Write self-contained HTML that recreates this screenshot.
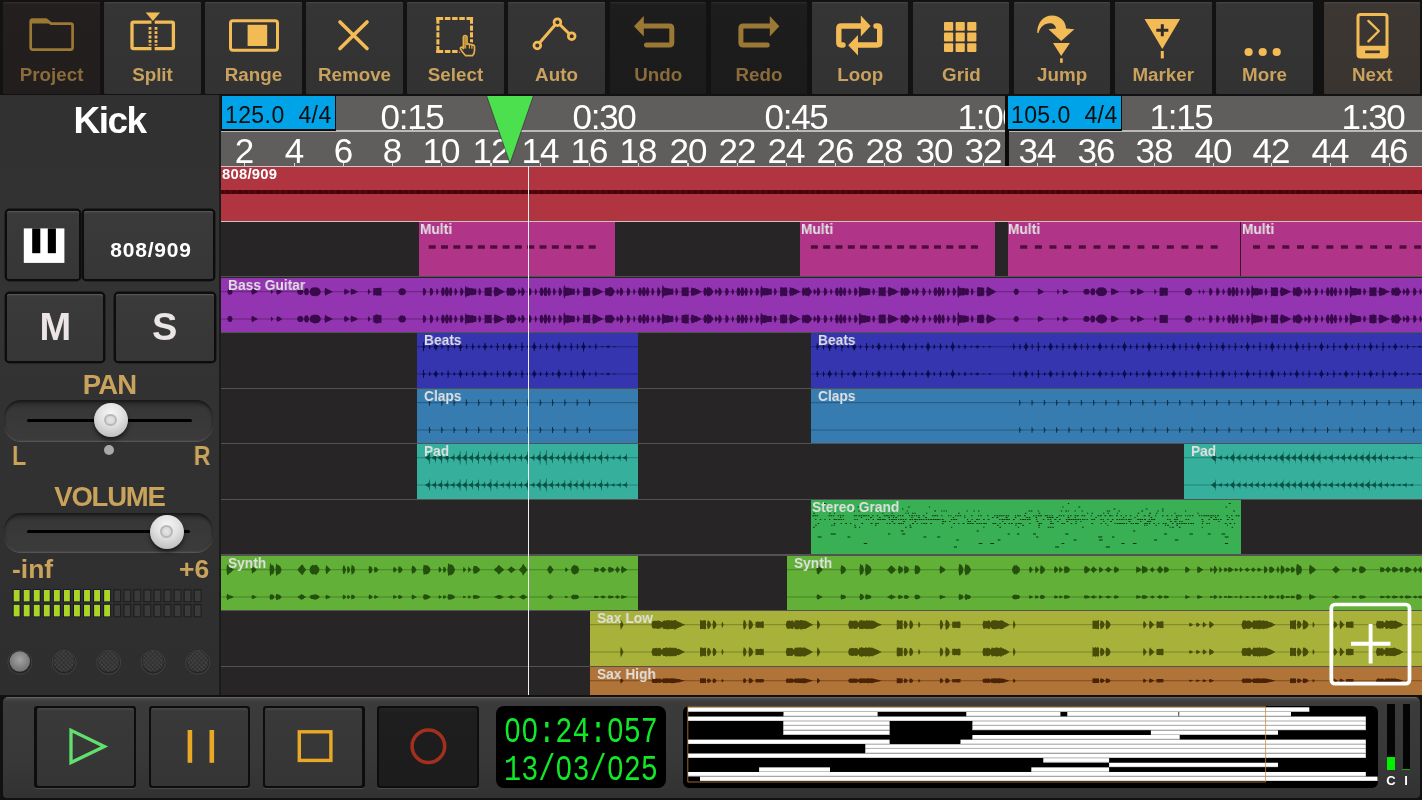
<!DOCTYPE html><html><head><meta charset="utf-8"><title>Audio Evolution</title><style>
*{box-sizing:border-box;margin:0;padding:0}
html,body{width:1422px;height:800px;overflow:hidden;background:#151414;font-family:"Liberation Sans",sans-serif}
#app{position:absolute;left:0;top:0;width:1422px;height:800px;overflow:hidden;background:#131212;}
.abs{position:absolute}
.tl,.bn,.gold,.clip b,.tb span,.txt{will-change:transform}
.tb{position:absolute;top:2px;height:92px;border-radius:1.5px;background:linear-gradient(#3b3a3a 0,#363535 3px,#333232 100%);box-shadow:inset 0 1px 0 #464545}
.tb.dark{background:linear-gradient(#262424 0,#1e1d1d 3px,#1c1b1b 100%);box-shadow:inset 0 1px 0 #2c2a2a}
.tb.proj{background:linear-gradient(#2a2726 0,#231f1e 3px,#211e1d 100%);box-shadow:inset 0 1px 0 #312d2c}
.tb.next{background:linear-gradient(#433d39 0,#3c3733 3px,#39342f 100%);box-shadow:inset 0 1px 0 #4c4642}
.tb span{position:absolute;left:0;right:0;top:60.7px;text-align:center;font-weight:bold;font-size:18.8px;line-height:24px;color:#c8a25e;letter-spacing:0}
.tb.dim span{color:#8a6b3b}
.tb svg{position:absolute;left:0;top:0}
#left{position:absolute;left:0;top:95px;width:219px;height:600px;background:linear-gradient(#323131,#343333 40%,#2f2e2e)}
#leftedge{position:absolute;left:219px;top:95px;width:2px;height:600px;background:#1c1b1b}
.btn{position:absolute;background:linear-gradient(#464545 0,#3b3a3a 3px,#373636 100%);border-radius:2.5px;box-shadow:0 0 0 2.4px #0e0d0d, 0 3px 0 0 #3d3c3c, inset 0 1px 0 #565555}
.gold{color:#c9a35c;font-weight:bold;position:absolute;white-space:nowrap}
.groove{position:absolute;border-radius:17px;background:linear-gradient(#2b2a2a 0,#383737 22%,#3c3b3b 100%);box-shadow:inset 0 2px 3px #191818, inset 0 -1px 1px #4a4949, 0 1px 0 #565555}
.knob{position:absolute;width:34px;height:34px;border-radius:50%;background:radial-gradient(circle at 50% 32%,#f6f6f6 0,#e2e2e2 40%,#c2c2c2 78%,#a2a2a2 100%);box-shadow:0 3px 4px rgba(0,0,0,.55)}
.knob i{position:absolute;left:10.6px;top:10.6px;width:12.8px;height:12.8px;border-radius:50%;border:2px solid #b9b9b9;background:radial-gradient(#e6e6e6,#d0d0d0)}
#ruler{position:absolute;left:221px;top:96px;width:1201px;height:70px;background:#605e5d;overflow:hidden}
.tl{position:absolute;color:#fff;font-size:35px;line-height:35px;letter-spacing:-1.3px;white-space:nowrap;transform:translateX(-50%)}
.bn{position:absolute;color:#fff;font-size:35px;line-height:35px;letter-spacing:-0.9px;white-space:nowrap;transform:translateX(-50%)}
.tempo{position:absolute;background:#00a1e6;border:2px solid #0b0b0b;color:#101010;font-size:25px;line-height:30px;white-space:pre;text-align:center}
#tracks{position:absolute;left:221px;top:166px;width:1201px;height:530px;background:#272526;overflow:hidden}
.sep{position:absolute;left:0;width:1201px;height:2px;background:#535252}
.clip{position:absolute;overflow:hidden}
.clip b{position:absolute;left:6.8px;top:-1px;font-size:14.8px;line-height:16px;letter-spacing:0;transform:scaleX(.93);transform-origin:0 0;color:#e0e0e0;font-weight:bold;white-space:nowrap;z-index:3}
.clip svg{position:absolute;left:0;top:0}
#bottom{position:absolute;left:0;top:695px;width:1422px;height:105px;background:linear-gradient(#191818 0,#2e2d2d 3px,#3a3939 8px,#363535 60%,#2c2b2b 100%)}
.tbtn{position:absolute;top:11px;height:80px;background:linear-gradient(#424141 0,#373636 4px,#333232 100%);border-radius:2px;box-shadow:0 0 0 2px #151414, inset 0 1px 0 #525151}
.tbtn.rec{background:linear-gradient(#242323 0,#1e1d1d 4px,#1c1b1b 100%);box-shadow:0 0 0 2px #151414, inset 0 1px 0 #2c2b2b}
#time{position:absolute;left:496px;top:11px;width:170px;height:82px;background:#000;border-radius:7px;color:#12e22a;font-size:34px;line-height:38px;text-align:center;padding-top:4px;white-space:nowrap}
</style></head><body><div id="app">
<div class="tb proj dim" style="left:2.6px;width:97.2px"><svg width="97.2" height="91" viewBox="0 2 97.2 91"><path d="M27.7 21.7 q0 -2 2 -2 h13.7 l4.7 3.9 h19.5 q2 0 2 2 v22 q0 2 -2 2 h-37.9 q-2 0 -2 -2 z" fill="none" stroke="#9c7835" stroke-width="2.7" stroke-linejoin="round"/><path d="M27.7 21.7 q0 -2 2 -2 h13.7 l4.7 3.9 h-20.4z" fill="#9c7835"/></svg><span>Project</span></div>
<div class="tb" style="left:103.5px;width:97px"><svg width="97" height="91" viewBox="0 2 97 91"><path d="M47.5 22.2 H29.6 q-1.6 0 -1.6 1.6 V47 q0 1.6 1.6 1.6 H47.5" fill="none" stroke="#f3bb55" stroke-width="3.3"/><path d="M50.7 22.2 H67.8 q1.6 0 1.6 1.6 V47 q0 1.6 -1.6 1.6 H50.7" fill="none" stroke="#f3bb55" stroke-width="3.3"/><path d="M41.7 12.6 h14.4 l-7.2 8.4z" fill="#f3bb55"/><path d="M46 27 v18.7 M52 27 v18.7" stroke="#f3bb55" stroke-width="2.8" stroke-dasharray="2.8 1.5"/></svg><span>Split</span></div>
<div class="tb" style="left:205px;width:97px"><svg width="97" height="91" viewBox="0 2 97 91"><rect x="25.5" y="20.7" width="47" height="29.5" rx="2.5" fill="none" stroke="#f3bb55" stroke-width="3"/><rect x="42.6" y="24.8" width="19.6" height="21.2" fill="#f3bb55"/></svg><span>Range</span></div>
<div class="tb" style="left:306px;width:97px"><svg width="97" height="91" viewBox="0 2 97 91"><path d="M34 22 L61 48.5 M61 22 L34 48.5" stroke="#f3bb55" stroke-width="3.6" stroke-linecap="round"/></svg><span>Remove</span></div>
<div class="tb" style="left:407px;width:97px"><svg width="97" height="91" viewBox="0 2 97 91"><path d="M29.3 18.5 H66.1 M29.3 51.4 H66.1" stroke="#f3bb55" stroke-width="3" stroke-dasharray="6.9 1.7 5.5 1.7 5.5 1.7 5.5 1.7 6.9 99"/><path d="M30.9 16.9 V53 M64.5 16.9 V53" stroke="#f3bb55" stroke-width="3" stroke-dasharray="6.9 1.6 5.3 1.6 5.3 1.6 5.3 1.6 6.9 99"/><path d="M56.4 47 V37.4 a1.8 1.8 0 0 1 3.6 0 V44.3 q1.5 -1 2.6 .3 q1.4 -.8 2.5 .5 q1.7 -.5 2.4 1.3 V50.4 q0 3.2 -2 5.2 H58.6 q-2.6 -2.2 -5 -6.4 q-.6 -1.6 .6 -2 q1.2 -.3 2.2 1.3z" fill="#343233" stroke="#343233" stroke-width="4.4" stroke-linejoin="round"/><path d="M56.4 47 V37.4 a1.8 1.8 0 0 1 3.6 0 V44.3 q1.5 -1 2.6 .3 q1.4 -.8 2.5 .5 q1.7 -.5 2.4 1.3 V50.4 q0 3.2 -2 5.2 H58.6 q-2.6 -2.2 -5 -6.4 q-.6 -1.6 .6 -2 q1.2 -.3 2.2 1.3z" fill="#343233" stroke="#e2ad4c" stroke-width="1.7" stroke-linejoin="round"/><path d="M57.2 48.5 V37.4 a1 1 0 0 1 2 0 V48.5z" fill="#c8983e"/><path d="M62.4 45 v3.6 M64.9 45.6 v3.2" stroke="#e2ad4c" stroke-width="1.2"/></svg><span>Select</span></div>
<div class="tb" style="left:508.3px;width:97px"><svg width="97" height="91" viewBox="0 2 97 91"><path d="M29.3 45.5 L49.4 22.2 L63.7 36.2" fill="none" stroke="#f3bb55" stroke-width="3"/><circle cx="29.3" cy="45.5" r="3.4" fill="#353434" stroke="#f3bb55" stroke-width="2.7"/><circle cx="49.4" cy="22.2" r="3.4" fill="#353434" stroke="#f3bb55" stroke-width="2.7"/><circle cx="63.7" cy="36.2" r="3.4" fill="#353434" stroke="#f3bb55" stroke-width="2.7"/></svg><span>Auto</span></div>
<div class="tb dark dim" style="left:609.7px;width:96.5px"><svg width="96.5" height="91" viewBox="0 2 96.5 91"><path d="M33 26 h26.5 q2.3 0 2.3 2.3 v14.4 q0 2.3 -2.3 2.3 h-23" fill="none" stroke="#9c7835" stroke-width="5" stroke-linecap="round"/><path d="M24 26.2 L33.8 16 V36.4z" fill="#9c7835"/></svg><span>Undo</span></div>
<div class="tb dark dim" style="left:711px;width:96px"><svg width="96" height="91" viewBox="0 2 96 91"><path d="M59 26 H32.2 q-2.3 0 -2.3 2.3 v14.4 q0 2.3 2.3 2.3 H56.2" fill="none" stroke="#9c7835" stroke-width="5" stroke-linecap="round"/><path d="M68.3 26.2 L58.8 16 V36.4z" fill="#9c7835"/></svg><span>Redo</span></div>
<div class="tb" style="left:811.6px;width:96.5px"><svg width="96.5" height="91" viewBox="0 2 96.5 91"><path d="M31 45 h-1.7 q-2.5 0 -2.5 -2.5 v-14 q0 -2.5 2.5 -2.5 h20" fill="none" stroke="#f3bb55" stroke-width="5.4" stroke-linecap="round"/><path d="M48.8 15.5 L58.6 26 L48.8 36.4z" fill="#f3bb55"/><path d="M64 26 h1.2 q2.5 0 2.5 2.5 v14 q0 2.5 -2.5 2.5 h-20" fill="none" stroke="#f3bb55" stroke-width="5.4" stroke-linecap="round"/><path d="M46 35 L36.2 45.3 L46 55.5z" fill="#f3bb55"/></svg><span>Loop</span></div>
<div class="tb" style="left:912.8px;width:96.7px"><svg width="96.7" height="91" viewBox="0 2 96.7 91"><rect x="31.0" y="21.9" width="9.2" height="8.8" rx="1" fill="#f3bb55"/><rect x="42.6" y="21.9" width="9.2" height="8.8" rx="1" fill="#f3bb55"/><rect x="54.2" y="21.9" width="9.2" height="8.8" rx="1" fill="#f3bb55"/><rect x="31.0" y="32.6" width="9.2" height="8.8" rx="1" fill="#f3bb55"/><rect x="42.6" y="32.6" width="9.2" height="8.8" rx="1" fill="#f3bb55"/><rect x="54.2" y="32.6" width="9.2" height="8.8" rx="1" fill="#f3bb55"/><rect x="31.0" y="43.3" width="9.2" height="8.8" rx="1" fill="#f3bb55"/><rect x="42.6" y="43.3" width="9.2" height="8.8" rx="1" fill="#f3bb55"/><rect x="54.2" y="43.3" width="9.2" height="8.8" rx="1" fill="#f3bb55"/></svg><span>Grid</span></div>
<div class="tb" style="left:1013.9px;width:96.3px"><svg width="96.3" height="91" viewBox="0 2 96.3 91"><path d="M23.2 32.8 C23.2 22.5 29.5 15.5 38 15.5 C46 15.5 51.6 21 52.1 28.4 L60.4 29.2 L47.2 41 L34.5 29.2 L42 28.4 C41.6 25.2 39.2 23.2 35.8 23.2 C30.2 23.2 26.2 27 24.4 33.2 Z" fill="#f3bb55"/><path d="M39 42.9 h16.9 l-8.7 13.1z" fill="#f3bb55"/><path d="M47.4 58.3 v4.5" stroke="#f3bb55" stroke-width="2.6"/></svg><span>Jump</span></div>
<div class="tb" style="left:1115px;width:96.5px"><svg width="96.5" height="91" viewBox="0 2 96.5 91"><path d="M29.5 18.9 h35.6 l-17.8 30z" fill="#f3bb55"/><path d="M47.3 24.3 v12 M41.3 30.3 h12" stroke="#2e2c2d" stroke-width="3"/><path d="M47.3 51 v7.4" stroke="#f3bb55" stroke-width="3"/></svg><span>Marker</span></div>
<div class="tb" style="left:1216px;width:97px"><svg width="97" height="91" viewBox="0 2 97 91"><circle cx="32.6" cy="52" r="4.1" fill="#f3bb55"/><circle cx="46.7" cy="52" r="4.1" fill="#f3bb55"/><circle cx="60.7" cy="52" r="4.1" fill="#f3bb55"/></svg><span>More</span></div>
<div class="tb next" style="left:1323.5px;width:96.5px"><svg width="96.5" height="91" viewBox="0 2 96.5 91"><rect x="34" y="14.5" width="29" height="42.5" rx="2.5" fill="none" stroke="#f3bb55" stroke-width="3"/><path d="M34 45.8 h29 v9 q0 2.2 -2.2 2.2 h-24.6 q-2.2 0 -2.2 -2.2z" fill="#f3bb55"/><rect x="41.2" y="50.5" width="14.6" height="2.7" fill="#3a3531"/><path d="M44.4 20.9 L54.8 31 L44.4 41.3" fill="none" stroke="#f3bb55" stroke-width="2.4" stroke-linecap="round" stroke-linejoin="round"/></svg><span>Next</span></div>
<div id="left"></div><div id="leftedge"></div>
<div class="abs txt" style="left:0;top:100.2px;width:219px;text-align:center;font-size:37px;line-height:42px;font-weight:bold;color:#fff;letter-spacing:-1.6px">Kick</div>
<div class="btn" style="left:6.5px;top:211px;width:72px;height:67.5px"></div>
<div class="btn" style="left:83.5px;top:211px;width:129.5px;height:67.5px"></div>
<svg class="abs" style="left:0;top:200px" width="100" height="90" viewBox="0 200 100 90"><rect x="23.8" y="228.4" width="40.6" height="34.5" fill="#fff"/><rect x="32.2" y="228.4" width="8.1" height="24.8" fill="#000"/><rect x="47.8" y="228.4" width="8.1" height="24.8" fill="#000"/></svg>
<div class="abs txt" style="left:83.5px;top:238px;width:134px;text-align:center;font-size:21px;line-height:24px;font-weight:bold;color:#fff;letter-spacing:0.8px">808/909</div>
<div class="btn" style="left:6.5px;top:294px;width:96.5px;height:67px"></div>
<div class="btn" style="left:116px;top:294px;width:97.5px;height:67px"></div>
<div class="abs txt" style="left:6.5px;top:304px;width:96.5px;text-align:center;font-size:38px;line-height:46px;font-weight:bold;color:#ebe5e5">M</div>
<div class="abs txt" style="left:116px;top:304px;width:97.5px;text-align:center;font-size:38px;line-height:46px;font-weight:bold;color:#ebe5e5">S</div>
<div class="gold" style="left:0;width:219px;text-align:center;top:369px;font-size:27.5px;line-height:32px;letter-spacing:-0.8px">PAN</div>
<div class="groove" style="left:4px;top:400px;width:209px;height:41px"></div>
<div class="abs" style="left:26.5px;top:418.5px;width:165px;height:3px;border-radius:2px;background:#000"></div>
<div class="knob" style="left:93.6px;top:403px"><i></i></div>
<div class="gold" style="left:11.5px;top:440.6px;font-size:27px;line-height:30px;transform:scaleX(.86);transform-origin:0 0">L</div>
<div class="gold" style="left:190.5px;top:440.6px;font-size:27px;line-height:30px;transform:scaleX(.86);transform-origin:100% 0">R</div>
<div class="abs" style="left:104.4px;top:445px;width:10px;height:10px;border-radius:50%;background:#a9a9a9"></div>
<div class="gold" style="left:0;width:219px;text-align:center;top:481px;font-size:27.5px;line-height:32px;letter-spacing:-1.2px">VOLUME</div>
<div class="groove" style="left:4.3px;top:513px;width:208.5px;height:39px"></div>
<div class="abs" style="left:27px;top:530.3px;width:163px;height:3px;border-radius:2px;background:#000"></div>
<div class="knob" style="left:149.8px;top:514.8px"><i></i></div>
<div class="gold" style="left:11.5px;top:554.2px;font-size:26.5px;line-height:30px">-inf</div>
<div class="gold" style="left:178.5px;top:554.2px;font-size:26.5px;line-height:30px">+6</div>
<svg class="abs" style="left:0;top:585px" width="219" height="40" viewBox="0 585 219 40"><rect x="12.70" y="589.2" width="7.9" height="13.0" fill="#1b1230"/><rect x="13.70" y="590.0" width="5.9" height="11.4" fill="#a8d526"/><rect x="22.75" y="589.2" width="7.9" height="13.0" fill="#1b1230"/><rect x="23.75" y="590.0" width="5.9" height="11.4" fill="#a8d526"/><rect x="32.80" y="589.2" width="7.9" height="13.0" fill="#1b1230"/><rect x="33.80" y="590.0" width="5.9" height="11.4" fill="#a8d526"/><rect x="42.85" y="589.2" width="7.9" height="13.0" fill="#1b1230"/><rect x="43.85" y="590.0" width="5.9" height="11.4" fill="#a8d526"/><rect x="52.90" y="589.2" width="7.9" height="13.0" fill="#1b1230"/><rect x="53.90" y="590.0" width="5.9" height="11.4" fill="#a8d526"/><rect x="62.95" y="589.2" width="7.9" height="13.0" fill="#1b1230"/><rect x="63.95" y="590.0" width="5.9" height="11.4" fill="#a8d526"/><rect x="73.00" y="589.2" width="7.9" height="13.0" fill="#1b1230"/><rect x="74.00" y="590.0" width="5.9" height="11.4" fill="#a8d526"/><rect x="83.05" y="589.2" width="7.9" height="13.0" fill="#1b1230"/><rect x="84.05" y="590.0" width="5.9" height="11.4" fill="#a8d526"/><rect x="93.10" y="589.2" width="7.9" height="13.0" fill="#1b1230"/><rect x="94.10" y="590.0" width="5.9" height="11.4" fill="#a8d526"/><rect x="103.15" y="589.2" width="7.9" height="13.0" fill="#1b1230"/><rect x="104.15" y="590.0" width="5.9" height="11.4" fill="#a8d526"/><rect x="113.20" y="589.2" width="7.9" height="13.0" fill="#1f1e1e"/><rect x="114.40" y="590.4" width="5.7" height="10.8" fill="#3b3a3a"/><rect x="123.25" y="589.2" width="7.9" height="13.0" fill="#1f1e1e"/><rect x="124.45" y="590.4" width="5.7" height="10.8" fill="#3b3a3a"/><rect x="133.30" y="589.2" width="7.9" height="13.0" fill="#1f1e1e"/><rect x="134.50" y="590.4" width="5.7" height="10.8" fill="#3b3a3a"/><rect x="143.35" y="589.2" width="7.9" height="13.0" fill="#1f1e1e"/><rect x="144.55" y="590.4" width="5.7" height="10.8" fill="#3b3a3a"/><rect x="153.40" y="589.2" width="7.9" height="13.0" fill="#1f1e1e"/><rect x="154.60" y="590.4" width="5.7" height="10.8" fill="#3b3a3a"/><rect x="163.45" y="589.2" width="7.9" height="13.0" fill="#1f1e1e"/><rect x="164.65" y="590.4" width="5.7" height="10.8" fill="#3b3a3a"/><rect x="173.50" y="589.2" width="7.9" height="13.0" fill="#1f1e1e"/><rect x="174.70" y="590.4" width="5.7" height="10.8" fill="#3b3a3a"/><rect x="183.55" y="589.2" width="7.9" height="13.0" fill="#1f1e1e"/><rect x="184.75" y="590.4" width="5.7" height="10.8" fill="#3b3a3a"/><rect x="193.60" y="589.2" width="7.9" height="13.0" fill="#1f1e1e"/><rect x="194.80" y="590.4" width="5.7" height="10.8" fill="#3b3a3a"/><rect x="12.70" y="604" width="7.9" height="13.2" fill="#1b1230"/><rect x="13.70" y="604.8" width="5.9" height="11.6" fill="#a8d526"/><rect x="22.75" y="604" width="7.9" height="13.2" fill="#1b1230"/><rect x="23.75" y="604.8" width="5.9" height="11.6" fill="#a8d526"/><rect x="32.80" y="604" width="7.9" height="13.2" fill="#1b1230"/><rect x="33.80" y="604.8" width="5.9" height="11.6" fill="#a8d526"/><rect x="42.85" y="604" width="7.9" height="13.2" fill="#1b1230"/><rect x="43.85" y="604.8" width="5.9" height="11.6" fill="#a8d526"/><rect x="52.90" y="604" width="7.9" height="13.2" fill="#1b1230"/><rect x="53.90" y="604.8" width="5.9" height="11.6" fill="#a8d526"/><rect x="62.95" y="604" width="7.9" height="13.2" fill="#1b1230"/><rect x="63.95" y="604.8" width="5.9" height="11.6" fill="#a8d526"/><rect x="73.00" y="604" width="7.9" height="13.2" fill="#1b1230"/><rect x="74.00" y="604.8" width="5.9" height="11.6" fill="#a8d526"/><rect x="83.05" y="604" width="7.9" height="13.2" fill="#1b1230"/><rect x="84.05" y="604.8" width="5.9" height="11.6" fill="#a8d526"/><rect x="93.10" y="604" width="7.9" height="13.2" fill="#1b1230"/><rect x="94.10" y="604.8" width="5.9" height="11.6" fill="#a8d526"/><rect x="103.15" y="604" width="7.9" height="13.2" fill="#1b1230"/><rect x="104.15" y="604.8" width="5.9" height="11.6" fill="#a8d526"/><rect x="113.20" y="604" width="7.9" height="13.2" fill="#1f1e1e"/><rect x="114.40" y="605.2" width="5.7" height="11.0" fill="#3b3a3a"/><rect x="123.25" y="604" width="7.9" height="13.2" fill="#1f1e1e"/><rect x="124.45" y="605.2" width="5.7" height="11.0" fill="#3b3a3a"/><rect x="133.30" y="604" width="7.9" height="13.2" fill="#1f1e1e"/><rect x="134.50" y="605.2" width="5.7" height="11.0" fill="#3b3a3a"/><rect x="143.35" y="604" width="7.9" height="13.2" fill="#1f1e1e"/><rect x="144.55" y="605.2" width="5.7" height="11.0" fill="#3b3a3a"/><rect x="153.40" y="604" width="7.9" height="13.2" fill="#1f1e1e"/><rect x="154.60" y="605.2" width="5.7" height="11.0" fill="#3b3a3a"/><rect x="163.45" y="604" width="7.9" height="13.2" fill="#1f1e1e"/><rect x="164.65" y="605.2" width="5.7" height="11.0" fill="#3b3a3a"/><rect x="173.50" y="604" width="7.9" height="13.2" fill="#1f1e1e"/><rect x="174.70" y="605.2" width="5.7" height="11.0" fill="#3b3a3a"/><rect x="183.55" y="604" width="7.9" height="13.2" fill="#1f1e1e"/><rect x="184.75" y="605.2" width="5.7" height="11.0" fill="#3b3a3a"/><rect x="193.60" y="604" width="7.9" height="13.2" fill="#1f1e1e"/><rect x="194.80" y="605.2" width="5.7" height="11.0" fill="#3b3a3a"/></svg>
<svg class="abs" style="left:0;top:645px" width="219" height="34" viewBox="0 645 219 34"><defs><pattern id="mesh" width="3" height="3" patternUnits="userSpaceOnUse" patternTransform="rotate(45)"><rect width="3" height="3" fill="#434242"/><path d="M0 0h3M0 0v3" stroke="#2b2a2a" stroke-width="1.3"/></pattern><radialGradient id="lg" cx="50%" cy="40%" r="60%"><stop offset="0" stop-color="#a4a4a4"/><stop offset="1" stop-color="#6f6f6f"/></radialGradient></defs><circle cx="19.8" cy="661.5" r="12" fill="#262525"/><circle cx="19.8" cy="662.3" r="12" fill="none" stroke="#444343" stroke-width="1"/><circle cx="19.8" cy="661.5" r="10.2" fill="url(#lg)"/><circle cx="64.1" cy="661.5" r="12" fill="#262525"/><circle cx="64.1" cy="662.3" r="12" fill="none" stroke="#444343" stroke-width="1"/><circle cx="64.1" cy="661.5" r="10.6" fill="url(#mesh)"/><circle cx="108.7" cy="661.5" r="12" fill="#262525"/><circle cx="108.7" cy="662.3" r="12" fill="none" stroke="#444343" stroke-width="1"/><circle cx="108.7" cy="661.5" r="10.6" fill="url(#mesh)"/><circle cx="153.2" cy="661.5" r="12" fill="#262525"/><circle cx="153.2" cy="662.3" r="12" fill="none" stroke="#444343" stroke-width="1"/><circle cx="153.2" cy="661.5" r="10.6" fill="url(#mesh)"/><circle cx="197.8" cy="661.5" r="12" fill="#262525"/><circle cx="197.8" cy="662.3" r="12" fill="none" stroke="#444343" stroke-width="1"/><circle cx="197.8" cy="661.5" r="10.6" fill="url(#mesh)"/></svg>
<div id="ruler"><div class="abs" style="left:0;top:34.4px;width:1201px;height:1.7px;background:#bcbab9"></div><div class="abs" style="left:0;top:69.6px;width:1201px;height:1px;background:#cfcdcc"></div><div class="tl" style="left:190.5px;top:2.5px">0:15</div><div class="abs" style="left:191.0px;top:32.5px;width:1.2px;height:2.5px;background:#c9c7c6"></div><div class="tl" style="left:382.9px;top:2.5px">0:30</div><div class="abs" style="left:383.4px;top:32.5px;width:1.2px;height:2.5px;background:#c9c7c6"></div><div class="tl" style="left:575.2px;top:2.5px">0:45</div><div class="abs" style="left:575.7px;top:32.5px;width:1.2px;height:2.5px;background:#c9c7c6"></div><div class="tl" style="left:767.6px;top:2.5px">1:00</div><div class="abs" style="left:768.1px;top:32.5px;width:1.2px;height:2.5px;background:#c9c7c6"></div><div class="tl" style="left:959.9px;top:2.5px">1:15</div><div class="abs" style="left:960.4px;top:32.5px;width:1.2px;height:2.5px;background:#c9c7c6"></div><div class="tl" style="left:1152.3px;top:2.5px">1:30</div><div class="abs" style="left:1152.8px;top:32.5px;width:1.2px;height:2.5px;background:#c9c7c6"></div><div class="bn" style="left:23.3px;top:37.3px">2</div><div class="abs" style="left:23.2px;top:67px;width:1.2px;height:3px;background:#d8d6d5"></div><div class="bn" style="left:72.6px;top:37.3px">4</div><div class="abs" style="left:72.5px;top:67px;width:1.2px;height:3px;background:#d8d6d5"></div><div class="bn" style="left:121.8px;top:37.3px">6</div><div class="abs" style="left:121.7px;top:67px;width:1.2px;height:3px;background:#d8d6d5"></div><div class="bn" style="left:171.0px;top:37.3px">8</div><div class="abs" style="left:170.9px;top:67px;width:1.2px;height:3px;background:#d8d6d5"></div><div class="bn" style="left:220.3px;top:37.3px">10</div><div class="abs" style="left:220.2px;top:67px;width:1.2px;height:3px;background:#d8d6d5"></div><div class="bn" style="left:269.5px;top:37.3px">12</div><div class="abs" style="left:269.4px;top:67px;width:1.2px;height:3px;background:#d8d6d5"></div><div class="bn" style="left:318.8px;top:37.3px">14</div><div class="abs" style="left:318.7px;top:67px;width:1.2px;height:3px;background:#d8d6d5"></div><div class="bn" style="left:368.0px;top:37.3px">16</div><div class="abs" style="left:367.9px;top:67px;width:1.2px;height:3px;background:#d8d6d5"></div><div class="bn" style="left:417.2px;top:37.3px">18</div><div class="abs" style="left:417.1px;top:67px;width:1.2px;height:3px;background:#d8d6d5"></div><div class="bn" style="left:466.5px;top:37.3px">20</div><div class="abs" style="left:466.4px;top:67px;width:1.2px;height:3px;background:#d8d6d5"></div><div class="bn" style="left:515.7px;top:37.3px">22</div><div class="abs" style="left:515.6px;top:67px;width:1.2px;height:3px;background:#d8d6d5"></div><div class="bn" style="left:565.0px;top:37.3px">24</div><div class="abs" style="left:564.9px;top:67px;width:1.2px;height:3px;background:#d8d6d5"></div><div class="bn" style="left:614.2px;top:37.3px">26</div><div class="abs" style="left:614.1px;top:67px;width:1.2px;height:3px;background:#d8d6d5"></div><div class="bn" style="left:663.4px;top:37.3px">28</div><div class="abs" style="left:663.3px;top:67px;width:1.2px;height:3px;background:#d8d6d5"></div><div class="bn" style="left:712.7px;top:37.3px">30</div><div class="abs" style="left:712.6px;top:67px;width:1.2px;height:3px;background:#d8d6d5"></div><div class="bn" style="left:761.9px;top:37.3px">32</div><div class="abs" style="left:761.8px;top:67px;width:1.2px;height:3px;background:#d8d6d5"></div><div class="bn" style="left:815.8px;top:37.3px">34</div><div class="abs" style="left:815.7px;top:67px;width:1.2px;height:3px;background:#d8d6d5"></div><div class="bn" style="left:874.5px;top:37.3px">36</div><div class="abs" style="left:874.4px;top:67px;width:1.2px;height:3px;background:#d8d6d5"></div><div class="bn" style="left:933.1px;top:37.3px">38</div><div class="abs" style="left:933.0px;top:67px;width:1.2px;height:3px;background:#d8d6d5"></div><div class="bn" style="left:991.7px;top:37.3px">40</div><div class="abs" style="left:991.6px;top:67px;width:1.2px;height:3px;background:#d8d6d5"></div><div class="bn" style="left:1050.3px;top:37.3px">42</div><div class="abs" style="left:1050.2px;top:67px;width:1.2px;height:3px;background:#d8d6d5"></div><div class="bn" style="left:1108.9px;top:37.3px">44</div><div class="abs" style="left:1108.8px;top:67px;width:1.2px;height:3px;background:#d8d6d5"></div><div class="bn" style="left:1167.6px;top:37.3px">46</div><div class="abs" style="left:1167.5px;top:67px;width:1.2px;height:3px;background:#d8d6d5"></div><div class="abs" style="left:-1px;top:-1px;width:116px;height:36px;background:#0a0a0a"></div><div class="abs txt" style="left:1.2px;top:0.4px;width:112.6px;height:33.4px;background:#00a2e8;color:#0d0d0d;font-size:23px;line-height:39.8px;letter-spacing:0.45px;text-align:center;white-space:pre">125.0  4/4</div><div class="abs" style="left:784px;top:-1px;width:3.6px;height:71px;background:#0a0a0a"></div><div class="abs" style="left:786px;top:-1px;width:115px;height:36px;background:#0a0a0a"></div><div class="abs txt" style="left:787.4px;top:0.4px;width:112.6px;height:33.4px;background:#00a2e8;color:#0d0d0d;font-size:23px;line-height:39.8px;letter-spacing:0.45px;text-align:center;white-space:pre">105.0  4/4</div><svg class="abs" style="left:260px;top:0" width="60" height="70" viewBox="481 96 60 70"><path d="M486.5 95.5 H533.5 L510 163.5z" fill="#4ce04e" stroke="#3a1a3a" stroke-width="0.6"/></svg></div>
<div id="tracks"><div class="sep" style="top:54.8px;height:1.2px;background:#c6c4c4"></div><div class="sep" style="top:110.3px;height:1.2px"></div><div class="sep" style="top:166.0px;height:1.2px"></div><div class="sep" style="top:221.6px;height:1.2px"></div><div class="sep" style="top:277.2px;height:1.2px"></div><div class="sep" style="top:332.8px;height:1.2px"></div><div class="sep" style="top:388.4px;height:1.2px"></div><div class="sep" style="top:444.0px;height:1.2px"></div><div class="sep" style="top:499.6px;height:1.2px"></div><div class="abs" style="left:0;top:0;width:1201px;height:1px;background:#c9c7c7"></div><div class="clip" style="left:0;top:1px;width:1201px;height:53.5px;background:#b03541"><div class="abs" style="left:0;top:23.4px;width:1201px;height:3.7px;background:#4b050a"></div><svg class="abs" style="left:0;top:23.4px" width="1201" height="3.7"><path d="M3.1 1.85H1201" stroke="#7d1c25" stroke-opacity="0.4" stroke-width="3.7" stroke-dasharray="1 5.155"/></svg><b style="left:0.8px;top:-1.2px;letter-spacing:0.25px;transform:none;color:#fff">808/909</b></div><div class="clip" style="left:198.3px;top:55.9px;width:195.3px;height:54.5px;background:#b03588"><svg width="195.3" height="54"><path d="M9.7 23.2h7v3.6h-7zM22.0 23.2h7v3.6h-7zM34.3 23.2h7v3.6h-7zM46.6 23.2h7v3.6h-7zM58.9 23.2h7v3.6h-7zM71.2 23.2h7v3.6h-7zM83.6 23.2h7v3.6h-7zM95.9 23.2h7v3.6h-7zM108.2 23.2h7v3.6h-7zM120.5 23.2h7v3.6h-7zM132.8 23.2h7v3.6h-7zM145.1 23.2h7v3.6h-7zM157.4 23.2h7v3.6h-7zM169.7 23.2h7v3.6h-7z" fill="#500c3c"/></svg><b style="left:0.6px">Multi</b></div><div class="clip" style="left:579.4px;top:55.9px;width:194.8px;height:54.5px;background:#b03588"><svg width="194.8" height="54"><path d="M10.9 23.2h7v3.6h-7zM23.2 23.2h7v3.6h-7zM35.5 23.2h7v3.6h-7zM47.8 23.2h7v3.6h-7zM60.1 23.2h7v3.6h-7zM72.4 23.2h7v3.6h-7zM84.8 23.2h7v3.6h-7zM97.1 23.2h7v3.6h-7zM109.4 23.2h7v3.6h-7zM121.7 23.2h7v3.6h-7zM134.0 23.2h7v3.6h-7zM146.3 23.2h7v3.6h-7zM158.6 23.2h7v3.6h-7zM170.9 23.2h7v3.6h-7z" fill="#500c3c"/></svg><b style="left:0.6px">Multi</b></div><div class="clip" style="left:786.8px;top:55.9px;width:232.2px;height:54.5px;background:#b03588"><svg width="232.2" height="54"><path d="M12.2 23.2h7v3.6h-7zM26.9 23.2h7v3.6h-7zM41.5 23.2h7v3.6h-7zM56.2 23.2h7v3.6h-7zM70.8 23.2h7v3.6h-7zM85.5 23.2h7v3.6h-7zM100.1 23.2h7v3.6h-7zM114.8 23.2h7v3.6h-7zM129.4 23.2h7v3.6h-7zM144.1 23.2h7v3.6h-7zM158.8 23.2h7v3.6h-7zM173.4 23.2h7v3.6h-7zM188.1 23.2h7v3.6h-7zM202.7 23.2h7v3.6h-7z" fill="#500c3c"/></svg><b style="left:0.6px">Multi</b></div><div class="clip" style="left:1020.0px;top:55.9px;width:182.0px;height:54.5px;background:#b03588"><svg width="182.0" height="54"><path d="M12.0 23.2h7v3.6h-7zM26.7 23.2h7v3.6h-7zM41.3 23.2h7v3.6h-7zM56.0 23.2h7v3.6h-7zM70.6 23.2h7v3.6h-7zM85.3 23.2h7v3.6h-7zM99.9 23.2h7v3.6h-7zM114.6 23.2h7v3.6h-7zM129.2 23.2h7v3.6h-7zM143.9 23.2h7v3.6h-7zM158.5 23.2h7v3.6h-7zM173.2 23.2h7v3.6h-7z" fill="#500c3c"/></svg><b style="left:0.6px">Multi</b></div><div class="abs" style="left:1019px;top:55.9px;width:1.2px;height:54px;background:#3a1030"></div><div class="clip" style="left:0.0px;top:111.5px;width:1202.0px;height:54.5px;background:#9335b0"><svg width="1202.0" height="54.5"><path d="M0 13.7H1202.0M0 41.0H1202.0" stroke="#380a4c" stroke-width="1" stroke-opacity="0.45"/><path d="M6.3 13.7L6.3 13.4L7.0 11.7L7.6 10.9L8.3 10.8L9.0 10.8L9.6 10.9L10.3 10.9L10.9 11.7L11.6 13.4L11.6 14.0L10.9 15.7L10.3 16.5L9.6 16.6L9.0 16.7L8.3 16.6L7.6 16.5L7.0 15.8L6.3 14.0ZM30.3 13.7L30.3 13.4L30.9 10.8L31.5 10.7L32.2 10.9L32.8 11.5L33.4 11.8L34.0 12.1L34.6 12.3L35.3 12.7L35.9 13.2L36.5 13.4L36.5 14.0L35.9 14.2L35.3 14.7L34.6 15.1L34.0 15.3L33.4 15.6L32.8 16.0L32.2 16.5L31.5 16.7L30.9 16.6L30.3 14.0ZM49.8 13.7L49.8 13.4L50.4 11.3L50.9 12.0L51.5 12.8L52.0 13.4L52.0 14.0L51.5 14.6L50.9 15.4L50.4 16.1L49.8 14.0ZM55.3 13.7L55.3 13.4L56.0 10.9L56.6 10.7L57.3 11.5L57.9 11.4L58.6 12.0L59.2 12.4L59.9 12.7L60.5 13.2L61.2 13.4L61.2 14.0L60.5 14.3L59.9 14.7L59.2 15.0L58.6 15.4L57.9 16.1L57.3 15.9L56.6 16.7L56.0 16.6L55.3 14.0ZM76.0 13.7L76.0 13.4L76.7 11.9L77.3 11.1L78.0 10.9L78.6 10.9L79.2 10.6L79.9 10.7L80.5 10.8L81.2 11.2L81.8 11.8L82.5 13.4L82.5 14.0L81.8 15.6L81.2 16.3L80.5 16.7L79.9 16.8L79.2 16.9L78.6 16.5L78.0 16.6L77.3 16.4L76.7 15.5L76.0 14.0ZM83.0 13.7L83.0 13.4L83.6 11.2L84.2 10.6L84.9 10.3L85.5 10.2L86.1 10.3L86.8 10.5L87.4 11.5L88.0 13.4L88.0 14.0L87.4 16.0L86.8 17.0L86.1 17.1L85.5 17.3L84.9 17.1L84.2 16.9L83.6 16.3L83.0 14.0ZM88.5 13.7L88.5 13.4L89.1 11.9L89.8 10.8L90.4 10.1L91.0 9.9L91.6 9.4L92.3 9.2L92.9 9.5L93.5 9.6L94.2 9.4L94.8 9.0L95.4 9.6L96.0 9.2L96.7 10.0L97.3 10.0L97.9 10.4L98.5 10.7L99.2 11.9L99.8 13.4L99.8 14.0L99.2 15.6L98.5 16.7L97.9 17.1L97.3 17.4L96.7 17.5L96.0 18.2L95.4 17.9L94.8 18.4L94.2 18.0L93.5 17.8L92.9 18.0L92.3 18.3L91.6 18.0L91.0 17.5L90.4 17.4L89.8 16.7L89.1 15.6L88.5 14.0ZM103.5 13.7L103.5 13.4L104.1 9.6L104.7 10.1L105.3 10.2L106.0 11.1L106.6 11.1L107.2 11.4L107.8 11.8L108.4 11.9L109.0 12.3L109.7 12.4L110.3 12.9L110.9 13.2L111.5 13.4L111.5 14.0L110.9 14.2L110.3 14.6L109.7 15.0L109.0 15.1L108.4 15.6L107.8 15.7L107.2 16.1L106.6 16.4L106.0 16.4L105.3 17.3L104.7 17.3L104.1 17.8L103.5 14.0ZM123.0 13.7L123.0 13.4L123.6 10.4L124.2 10.9L124.8 11.3L125.4 11.8L126.1 11.6L126.7 12.4L127.3 12.7L127.9 13.1L128.5 13.4L128.5 14.0L127.9 14.3L127.3 14.7L126.7 15.0L126.1 15.8L125.4 15.7L124.8 16.1L124.2 16.5L123.6 17.1L123.0 14.0ZM129.5 13.7L129.5 13.4L130.1 10.4L130.7 10.8L131.3 11.0L131.9 11.5L132.5 11.3L133.2 11.4L133.8 11.8L134.4 12.4L135.0 12.5L135.6 12.9L136.2 13.2L136.8 13.4L136.8 14.0L136.2 14.3L135.6 14.5L135.0 15.0L134.4 15.1L133.8 15.7L133.2 16.1L132.5 16.1L131.9 16.0L131.3 16.5L130.7 16.6L130.1 17.0L129.5 14.0ZM146.8 13.7L146.8 13.4L147.4 10.5L148.1 11.8L148.7 12.5L149.3 13.4L149.3 14.0L148.7 14.9L148.1 15.6L147.4 16.9L146.8 14.0ZM152.3 13.7L152.3 9.7L152.9 9.8L153.6 10.3L154.2 10.1L154.8 10.4L155.5 9.7L156.1 10.1L156.7 10.1L157.3 9.8L158.0 9.7L158.6 10.0L159.2 10.1L159.9 9.8L160.5 9.6L160.5 17.9L159.9 17.6L159.2 17.4L158.6 17.4L158.0 17.8L157.3 17.6L156.7 17.4L156.1 17.4L155.5 17.7L154.8 17.0L154.2 17.3L153.6 17.2L152.9 17.6L152.3 17.8ZM177.3 13.7L177.3 13.4L177.9 11.9L178.6 11.2L179.2 10.6L179.9 10.5L180.5 10.3L181.2 10.4L181.8 10.0L182.4 10.4L183.1 10.8L183.7 10.9L184.4 11.8L185.0 13.4L185.0 14.0L184.4 15.7L183.7 16.6L183.1 16.6L182.4 17.1L181.8 17.4L181.2 17.1L180.5 17.2L179.9 17.0L179.2 16.9L178.6 16.3L177.9 15.6L177.3 14.0ZM201.7 13.7L201.7 13.4L202.3 9.7L202.9 9.9L203.5 10.0L204.1 10.9L204.7 11.7L205.3 13.4L205.3 14.0L204.7 15.8L204.1 16.6L203.5 17.5L202.9 17.6L202.3 17.8L201.7 14.0ZM208.7 13.7L208.7 13.4L209.3 9.7L209.9 9.9L210.5 10.1L211.1 10.8L211.7 11.5L212.3 13.4L212.3 14.0L211.7 15.9L211.1 16.7L210.5 17.4L209.9 17.6L209.3 17.7L208.7 14.0ZM215.1 13.7L215.1 13.4L215.7 10.3L216.3 10.9L216.9 11.6L217.5 13.4L217.5 14.0L216.9 15.8L216.3 16.6L215.7 17.2L215.1 14.0ZM220.0 13.7L220.0 13.4L220.7 10.6L221.3 9.4L221.9 9.6L222.6 9.8L223.2 10.3L223.9 13.4L223.9 14.0L223.2 17.2L222.6 17.6L221.9 17.9L221.3 18.1L220.7 16.9L220.0 14.0ZM223.9 13.7L223.9 13.4L224.6 10.1L225.2 9.2L225.9 8.9L226.6 9.6L227.2 10.0L227.9 13.4L227.9 14.0L227.2 17.4L226.6 17.8L225.9 18.5L225.2 18.2L224.6 17.3L223.9 14.0ZM227.9 13.7L227.9 13.4L228.6 10.2L229.3 9.8L229.9 9.2L230.6 10.1L231.3 13.4L231.3 14.0L230.6 17.3L229.9 18.3L229.3 17.7L228.6 17.2L227.9 14.0ZM233.3 13.7L233.3 13.4L233.9 10.2L234.5 10.1L235.1 10.9L235.7 11.6L236.3 13.4L236.3 14.0L235.7 15.8L235.1 16.6L234.5 17.4L233.9 17.3L233.3 14.0ZM239.0 13.7L239.0 13.4L239.7 9.4L240.4 9.8L241.2 10.4L241.9 11.5L242.6 13.4L242.6 14.0L241.9 16.0L241.2 17.0L240.4 17.7L239.7 18.0L239.0 14.0ZM243.9 13.7L243.9 10.8L244.5 8.0L245.1 7.7L245.7 10.0L246.3 9.2L246.9 9.4L247.5 9.4L248.1 10.0L248.7 9.9L249.3 10.6L249.9 10.1L250.5 10.2L251.1 9.9L251.7 10.4L252.3 10.7L252.9 10.3L253.5 11.0L254.1 10.4L254.7 10.8L255.3 10.8L255.3 16.6L254.7 16.6L254.1 17.0L253.5 16.5L252.9 17.2L252.3 16.8L251.7 17.0L251.1 17.5L250.5 17.3L249.9 17.3L249.3 16.8L248.7 17.6L248.1 17.4L247.5 18.0L246.9 18.1L246.3 18.3L245.7 17.4L245.1 19.7L244.5 19.4L243.9 16.6ZM257.3 13.7L257.3 13.4L258.0 10.2L258.8 10.3L259.5 11.3L260.2 13.4L260.2 14.0L259.5 16.2L258.8 17.2L258.0 17.3L257.3 14.0ZM263.6 13.7L263.6 9.5L264.2 9.9L264.9 9.7L265.5 9.5L266.2 9.7L266.8 9.5L267.5 9.5L268.1 9.5L268.8 9.4L269.4 9.5L270.1 9.2L270.7 9.1L270.7 18.3L270.1 18.3L269.4 17.9L268.8 18.1L268.1 17.9L267.5 17.9L266.8 17.9L266.2 17.7L265.5 17.9L264.9 17.8L264.2 17.5L263.6 17.9ZM272.7 13.7L272.7 13.4L273.3 9.7L273.9 9.1L274.5 9.3L275.1 9.0L275.7 9.6L276.3 9.5L276.9 9.7L277.5 10.0L278.1 10.7L278.7 11.3L279.3 11.3L279.9 11.3L280.5 11.9L281.1 12.2L281.7 12.6L282.3 12.8L282.9 13.2L283.5 13.4L283.5 14.0L282.9 14.2L282.3 14.6L281.7 14.9L281.1 15.2L280.5 15.6L279.9 16.1L279.3 16.2L278.7 16.1L278.1 16.7L277.5 17.5L276.9 17.7L276.3 18.0L275.7 17.8L275.1 18.5L274.5 18.2L273.9 18.4L273.3 17.8L272.7 14.0ZM285.4 13.7L285.4 13.4L286.0 10.2L286.6 9.8L287.3 9.8L287.9 9.8L288.5 11.0L289.1 9.5L289.7 10.0L290.3 9.7L291.0 9.6L291.6 9.9L292.2 9.4L292.8 10.0L293.4 10.8L294.1 11.3L294.7 12.3L295.3 13.1L295.3 14.4L294.7 15.1L294.1 16.2L293.4 16.7L292.8 17.4L292.2 18.0L291.6 17.5L291.0 17.8L290.3 17.8L289.7 17.5L289.1 17.9L288.5 16.4L287.9 17.7L287.3 17.7L286.6 17.6L286.0 17.3L285.4 14.0ZM296.9 13.7L296.9 13.4L297.5 10.0L298.1 11.4L298.8 12.1L299.4 12.6L300.0 13.4L300.0 14.0L299.4 14.8L298.8 15.4L298.1 16.1L297.5 17.5L296.9 14.0ZM300.2 13.7L300.2 13.4L300.8 9.2L301.4 9.6L302.0 10.1L302.6 10.7L303.2 11.4L303.8 13.4L303.8 14.0L303.2 16.1L302.6 16.7L302.0 17.4L301.4 17.9L300.8 18.2L300.2 14.0ZM307.2 13.7L307.2 13.4L307.8 9.8L308.4 9.9L309.0 10.3L309.6 10.5L310.2 11.5L310.8 13.4L310.8 14.0L310.2 16.0L309.6 16.9L309.0 17.2L308.4 17.5L307.8 17.7L307.2 14.0ZM313.6 13.7L313.6 13.4L314.2 10.4L314.8 11.0L315.4 11.6L316.0 13.4L316.0 14.0L315.4 15.9L314.8 16.4L314.2 17.1L313.6 14.0ZM318.5 13.7L318.5 13.4L319.2 10.4L319.8 9.7L320.5 9.3L321.1 9.5L321.8 10.5L322.4 13.4L322.4 14.0L321.8 16.9L321.1 18.0L320.5 18.1L319.8 17.7L319.2 17.1L318.5 14.0ZM322.4 13.7L322.4 13.4L323.1 10.1L323.7 9.6L324.4 9.3L325.1 9.2L325.7 9.9L326.4 13.4L326.4 14.0L325.7 17.5L325.1 18.2L324.4 18.1L323.7 17.9L323.1 17.3L322.4 14.0ZM326.4 13.7L326.4 13.4L327.1 10.3L327.8 9.5L328.4 9.8L329.1 9.9L329.8 13.4L329.8 14.0L329.1 17.5L328.4 17.6L327.8 18.0L327.1 17.1L326.4 14.0ZM331.8 13.7L331.8 13.4L332.4 10.2L333.0 10.3L333.6 10.4L334.2 11.5L334.8 13.4L334.8 14.0L334.2 16.0L333.6 17.0L333.0 17.2L332.4 17.3L331.8 14.0ZM337.5 13.7L337.5 13.4L338.1 9.6L338.7 9.8L339.3 9.8L339.9 10.5L340.5 11.5L341.1 13.4L341.1 14.0L340.5 15.9L339.9 17.0L339.3 17.7L338.7 17.7L338.1 17.9L337.5 14.0ZM342.4 13.7L342.4 10.4L343.0 7.6L343.7 7.2L344.3 9.5L344.9 9.5L345.6 9.7L346.2 10.0L346.8 9.4L347.5 9.6L348.1 10.3L348.7 10.3L349.4 10.2L350.0 10.3L350.6 10.7L351.3 10.6L351.9 10.9L352.5 10.8L353.2 10.7L353.8 10.6L353.8 16.8L353.2 16.8L352.5 16.7L351.9 16.5L351.3 16.8L350.6 16.7L350.0 17.1L349.4 17.2L348.7 17.2L348.1 17.1L347.5 17.8L346.8 18.0L346.2 17.4L345.6 17.7L344.9 18.0L344.3 18.0L343.7 20.2L343.0 19.9L342.4 17.0ZM355.8 13.7L355.8 13.4L356.5 9.8L357.3 10.4L358.0 11.4L358.7 13.4L358.7 14.0L358.0 16.1L357.3 17.0L356.5 17.7L355.8 14.0ZM362.1 13.7L362.1 9.8L362.7 9.1L363.4 9.5L364.0 9.1L364.7 9.9L365.3 9.5L366.0 9.2L366.6 9.7L367.3 9.7L367.9 10.1L368.6 9.4L369.2 10.0L369.2 17.4L368.6 18.1L367.9 17.4L367.3 17.8L366.6 17.8L366.0 18.3L365.3 18.0L364.7 17.6L364.0 18.4L363.4 17.9L362.7 18.4L362.1 17.7ZM371.2 13.7L371.2 13.4L371.8 10.2L372.5 9.2L373.1 10.0L373.7 9.7L374.4 9.7L375.0 10.3L375.6 10.4L376.3 10.6L376.9 11.2L377.6 11.0L378.2 11.4L378.8 11.6L379.5 12.1L380.1 12.5L380.7 12.7L381.4 13.2L382.0 13.4L382.0 14.0L381.4 14.3L380.7 14.7L380.1 14.9L379.5 15.3L378.8 15.8L378.2 16.0L377.6 16.4L376.9 16.3L376.3 16.8L375.6 17.1L375.0 17.2L374.4 17.8L373.7 17.8L373.1 17.5L372.5 18.3L371.8 17.2L371.2 14.0ZM383.9 13.7L383.9 13.4L384.5 9.7L385.1 10.2L385.8 10.1L386.4 10.0L387.0 10.8L387.6 9.7L388.2 8.8L388.9 9.2L389.5 9.3L390.1 9.5L390.7 9.5L391.3 9.6L391.9 10.5L392.6 11.6L393.2 12.3L393.8 13.2L393.8 14.2L393.2 15.1L392.6 15.8L391.9 17.0L391.3 17.8L390.7 17.9L390.1 18.0L389.5 18.2L388.9 18.3L388.2 18.6L387.6 17.7L387.0 16.7L386.4 17.4L385.8 17.4L385.1 17.3L384.5 17.8L383.9 14.0ZM395.4 13.7L395.4 13.4L396.0 10.5L396.6 11.3L397.3 12.0L397.9 12.7L398.5 13.4L398.5 14.0L397.9 14.7L397.3 15.5L396.6 16.2L396.0 16.9L395.4 14.0ZM398.7 13.7L398.7 13.4L399.3 9.4L399.9 9.6L400.5 10.1L401.1 10.6L401.7 11.6L402.3 13.4L402.3 14.0L401.7 15.9L401.1 16.8L400.5 17.3L399.9 17.9L399.3 18.1L398.7 14.0ZM405.7 13.7L405.7 13.4L406.3 9.4L406.9 9.7L407.5 10.2L408.1 10.6L408.7 11.6L409.3 13.4L409.3 14.0L408.7 15.9L408.1 16.8L407.5 17.2L406.9 17.8L406.3 18.0L405.7 14.0ZM412.1 13.7L412.1 13.4L412.7 10.4L413.3 11.0L413.9 11.8L414.5 13.4L414.5 14.0L413.9 15.7L413.3 16.4L412.7 17.0L412.1 14.0ZM417.0 13.7L417.0 13.4L417.7 10.6L418.3 9.4L419.0 9.6L419.6 9.7L420.3 10.6L420.9 13.4L420.9 14.0L420.3 16.9L419.6 17.8L419.0 17.8L418.3 18.0L417.7 16.8L417.0 14.0ZM420.9 13.7L420.9 13.4L421.6 10.1L422.2 9.3L422.9 9.3L423.6 9.3L424.2 10.3L424.9 13.4L424.9 14.0L424.2 17.2L423.6 18.1L422.9 18.2L422.2 18.1L421.6 17.4L420.9 14.0ZM424.9 13.7L424.9 13.4L425.6 10.3L426.3 9.3L426.9 9.2L427.6 10.3L428.3 13.4L428.3 14.0L427.6 17.1L426.9 18.3L426.3 18.1L425.6 17.2L424.9 14.0ZM430.3 13.7L430.3 13.4L430.9 10.0L431.5 10.0L432.1 10.6L432.7 11.5L433.3 13.4L433.3 14.0L432.7 16.0L432.1 16.9L431.5 17.4L430.9 17.5L430.3 14.0ZM436.0 13.7L436.0 13.4L436.6 9.3L437.2 9.4L437.8 9.8L438.4 10.4L439.0 11.7L439.6 13.4L439.6 14.0L439.0 15.8L438.4 17.1L437.8 17.7L437.2 18.1L436.6 18.2L436.0 14.0ZM440.9 13.7L440.9 10.8L441.5 6.9L442.2 7.6L442.8 9.3L443.4 9.7L444.1 9.6L444.7 10.1L445.3 10.3L446.0 9.7L446.6 10.6L447.2 9.9L447.9 10.6L448.5 10.5L449.1 10.7L449.8 10.7L450.4 10.5L451.0 11.1L451.7 10.6L452.3 10.7L452.3 16.8L451.7 16.9L451.0 16.3L450.4 17.0L449.8 16.8L449.1 16.8L448.5 17.0L447.9 16.9L447.2 17.5L446.6 16.9L446.0 17.7L445.3 17.2L444.7 17.4L444.1 17.8L443.4 17.7L442.8 18.2L442.2 19.9L441.5 20.6L440.9 16.7ZM454.3 13.7L454.3 13.4L455.0 9.8L455.8 10.3L456.5 11.4L457.2 13.4L457.2 14.0L456.5 16.1L455.8 17.1L455.0 17.7L454.3 14.0ZM460.6 13.7L460.6 8.8L461.2 9.8L461.9 9.7L462.5 9.3L463.2 9.6L463.8 9.2L464.5 9.6L465.1 9.5L465.8 9.2L466.4 8.9L467.1 9.7L467.7 9.3L467.7 18.1L467.1 17.7L466.4 18.5L465.8 18.3L465.1 17.9L464.5 17.9L463.8 18.3L463.2 17.9L462.5 18.1L461.9 17.8L461.2 17.7L460.6 18.6ZM469.7 13.7L469.7 13.4L470.3 9.7L471.0 9.6L471.6 9.8L472.2 10.0L472.9 10.0L473.5 10.3L474.1 9.8L474.8 10.9L475.4 10.9L476.1 11.1L476.7 11.4L477.3 11.5L478.0 12.0L478.6 12.6L479.2 12.8L479.9 13.2L480.5 13.4L480.5 14.0L479.9 14.3L479.2 14.7L478.6 14.8L478.0 15.4L477.3 15.9L476.7 16.1L476.1 16.4L475.4 16.6L474.8 16.5L474.1 17.6L473.5 17.2L472.9 17.4L472.2 17.5L471.6 17.7L471.0 17.8L470.3 17.7L469.7 14.0ZM482.4 13.7L482.4 13.4L483.0 10.1L483.6 9.4L484.3 9.8L484.9 10.0L485.5 11.4L486.1 9.2L486.7 9.0L487.4 9.6L488.0 9.7L488.6 9.1L489.2 9.7L489.8 10.3L490.4 10.5L491.1 11.5L491.7 12.5L492.3 13.1L492.3 14.3L491.7 14.9L491.1 15.9L490.4 17.0L489.8 17.1L489.2 17.7L488.6 18.4L488.0 17.7L487.4 17.8L486.7 18.4L486.1 18.3L485.5 16.0L484.9 17.4L484.3 17.6L483.6 18.1L483.0 17.3L482.4 14.0ZM493.9 13.7L493.9 13.4L494.5 10.8L495.1 11.1L495.8 11.8L496.4 12.7L497.0 13.4L497.0 14.0L496.4 14.8L495.8 15.6L495.1 16.4L494.5 16.6L493.9 14.0ZM497.2 13.7L497.2 13.4L497.8 9.8L498.4 9.4L499.0 10.3L499.6 10.5L500.2 11.6L500.8 13.4L500.8 14.0L500.2 15.9L499.6 16.9L499.0 17.2L498.4 18.0L497.8 17.7L497.2 14.0ZM504.2 13.7L504.2 13.4L504.8 9.7L505.4 10.0L506.0 10.2L506.6 10.5L507.2 11.6L507.8 13.4L507.8 14.0L507.2 15.8L506.6 17.0L506.0 17.3L505.4 17.4L504.8 17.8L504.2 14.0ZM510.6 13.7L510.6 13.4L511.2 10.6L511.8 10.9L512.4 11.7L513.0 13.4L513.0 14.0L512.4 15.8L511.8 16.5L511.2 16.9L510.6 14.0ZM515.5 13.7L515.5 13.4L516.1 10.5L516.8 9.6L517.5 9.7L518.1 9.4L518.8 10.5L519.4 13.4L519.4 14.0L518.8 17.0L518.1 18.0L517.5 17.8L516.8 17.8L516.1 16.9L515.5 14.0ZM519.4 13.7L519.4 13.4L520.1 10.1L520.7 9.5L521.4 9.1L522.1 9.5L522.7 10.4L523.4 13.4L523.4 14.0L522.7 17.1L522.1 18.0L521.4 18.3L520.7 17.9L520.1 17.4L519.4 14.0ZM523.4 13.7L523.4 13.4L524.1 10.4L524.8 9.7L525.4 9.7L526.1 10.1L526.8 13.4L526.8 14.0L526.1 17.4L525.4 17.7L524.8 17.8L524.1 17.0L523.4 14.0ZM528.8 13.7L528.8 13.4L529.4 9.8L530.0 10.3L530.6 10.8L531.2 11.6L531.8 13.4L531.8 14.0L531.2 15.8L530.6 16.7L530.0 17.2L529.4 17.7L528.8 14.0ZM534.5 13.7L534.5 13.4L535.1 9.6L535.7 10.0L536.3 10.0L536.9 10.7L537.5 11.5L538.1 13.4L538.1 14.0L537.5 15.9L536.9 16.8L536.3 17.5L535.7 17.4L535.1 17.8L534.5 14.0ZM539.4 13.7L539.4 11.0L540.0 8.4L540.7 7.7L541.3 9.6L541.9 10.1L542.6 10.3L543.2 9.8L543.8 10.0L544.5 10.3L545.1 10.0L545.7 10.2L546.4 10.2L547.0 10.2L547.6 10.8L548.3 10.5L548.9 11.0L549.5 10.6L550.2 10.8L550.8 11.1L550.8 16.4L550.2 16.7L549.5 16.8L548.9 16.5L548.3 17.0L547.6 16.7L547.0 17.3L546.4 17.3L545.7 17.2L545.1 17.4L544.5 17.1L543.8 17.5L543.2 17.7L542.6 17.1L541.9 17.4L541.3 17.8L540.7 19.8L540.0 19.1L539.4 16.5ZM552.8 13.7L552.8 13.4L553.5 9.8L554.2 10.5L555.0 11.1L555.7 13.4L555.7 14.0L555.0 16.3L554.2 17.0L553.5 17.6L552.8 14.0ZM559.1 13.7L559.1 9.4L559.7 9.4L560.4 8.9L561.0 9.0L561.7 9.9L562.3 9.3L563.0 9.9L563.6 9.3L564.3 9.4L564.9 9.4L565.6 9.4L566.2 9.4L566.2 18.1L565.6 18.1L564.9 18.0L564.3 18.0L563.6 18.2L563.0 17.6L562.3 18.2L561.7 17.6L561.0 18.4L560.4 18.6L559.7 18.1L559.1 18.1ZM568.2 13.7L568.2 13.4L568.8 9.8L569.5 9.0L570.1 9.8L570.7 9.9L571.4 9.8L572.0 10.0L572.6 10.1L573.3 10.8L573.9 11.0L574.6 11.0L575.2 11.5L575.8 11.6L576.5 12.3L577.1 12.3L577.7 12.8L578.4 13.2L579.0 13.4L579.0 14.0L578.4 14.2L577.7 14.7L577.1 15.1L576.5 15.1L575.8 15.8L575.2 16.0L574.6 16.5L573.9 16.4L573.3 16.6L572.6 17.3L572.0 17.4L571.4 17.7L570.7 17.6L570.1 17.6L569.5 18.5L568.8 17.6L568.2 14.0ZM580.9 13.7L580.9 13.4L581.5 9.8L582.1 9.8L582.8 9.6L583.4 9.9L584.0 11.4L584.6 9.6L585.2 9.4L585.9 9.9L586.5 9.7L587.1 9.5L587.7 8.8L588.3 10.0L588.9 10.7L589.6 11.6L590.2 12.5L590.8 13.1L590.8 14.3L590.2 15.0L589.6 15.9L588.9 16.7L588.3 17.4L587.7 18.7L587.1 18.0L586.5 17.7L585.9 17.5L585.2 18.0L584.6 17.9L584.0 16.0L583.4 17.5L582.8 17.9L582.1 17.6L581.5 17.7L580.9 14.0ZM592.4 13.7L592.4 13.4L593.0 10.5L593.6 11.3L594.3 11.7L594.9 12.7L595.5 13.4L595.5 14.0L594.9 14.7L594.3 15.7L593.6 16.2L593.0 17.0L592.4 14.0ZM595.7 13.7L595.7 13.4L596.3 9.4L596.9 9.4L597.5 10.1L598.1 10.8L598.7 11.5L599.3 13.4L599.3 14.0L598.7 15.9L598.1 16.7L597.5 17.3L596.9 18.0L596.3 18.1L595.7 14.0ZM602.7 13.7L602.7 13.4L603.3 9.4L603.9 9.8L604.5 10.1L605.1 10.8L605.7 11.4L606.3 13.4L606.3 14.0L605.7 16.0L605.1 16.6L604.5 17.4L603.9 17.6L603.3 18.0L602.7 14.0ZM609.1 13.7L609.1 13.4L609.7 10.6L610.3 11.0L610.9 11.7L611.5 13.4L611.5 14.0L610.9 15.8L610.3 16.4L609.7 16.9L609.1 14.0ZM614.0 13.7L614.0 13.4L614.6 10.5L615.3 9.9L616.0 9.7L616.6 9.5L617.3 10.3L617.9 13.4L617.9 14.0L617.3 17.1L616.6 18.0L616.0 17.7L615.3 17.5L614.6 16.9L614.0 14.0ZM617.9 13.7L617.9 13.4L618.6 10.2L619.2 9.0L619.9 9.4L620.6 9.5L621.2 10.4L621.9 13.4L621.9 14.0L621.2 17.0L620.6 18.0L619.9 18.1L619.2 18.5L618.6 17.3L617.9 14.0ZM621.9 13.7L621.9 13.4L622.6 10.4L623.3 9.5L623.9 9.4L624.6 10.3L625.3 13.4L625.3 14.0L624.6 17.1L623.9 18.0L623.3 17.9L622.6 17.0L621.9 14.0ZM627.3 13.7L627.3 13.4L627.9 10.2L628.5 10.3L629.1 10.9L629.7 11.5L630.3 13.4L630.3 14.0L629.7 15.9L629.1 16.5L628.5 17.1L627.9 17.3L627.3 14.0ZM633.0 13.7L633.0 13.4L633.6 9.5L634.2 9.8L634.8 10.1L635.4 10.5L636.0 11.5L636.6 13.4L636.6 14.0L636.0 16.0L635.4 16.9L634.8 17.3L634.2 17.7L633.6 18.0L633.0 14.0ZM637.9 13.7L637.9 10.5L638.5 8.2L639.2 8.2L639.8 9.9L640.4 9.5L641.1 9.6L641.7 9.8L642.3 10.3L643.0 9.4L643.6 10.5L644.2 10.1L644.9 10.3L645.5 9.9L646.1 10.5L646.8 10.3L647.4 10.4L648.0 10.2L648.7 10.9L649.3 11.1L649.3 16.3L648.7 16.6L648.0 17.3L647.4 17.0L646.8 17.1L646.1 17.0L645.5 17.6L644.9 17.1L644.2 17.4L643.6 17.0L643.0 18.1L642.3 17.1L641.7 17.6L641.1 17.8L640.4 17.9L639.8 17.5L639.2 19.3L638.5 19.2L637.9 16.9ZM651.3 13.7L651.3 13.4L652.0 10.0L652.8 10.4L653.5 11.3L654.2 13.4L654.2 14.0L653.5 16.1L652.8 17.1L652.0 17.5L651.3 14.0ZM657.6 13.7L657.6 10.0L658.2 9.3L658.9 9.1L659.5 9.8L660.2 9.8L660.8 9.1L661.5 9.3L662.1 9.5L662.8 9.9L663.4 8.8L664.1 9.3L664.7 9.1L664.7 18.3L664.1 18.1L663.4 18.6L662.8 17.5L662.1 17.9L661.5 18.2L660.8 18.4L660.2 17.6L659.5 17.6L658.9 18.3L658.2 18.2L657.6 17.5ZM666.7 13.7L666.7 13.4L667.3 9.8L668.0 9.0L668.6 9.0L669.2 9.7L669.9 9.7L670.5 10.1L671.1 10.6L671.8 10.8L672.4 10.5L673.1 11.1L673.7 11.3L674.3 11.7L675.0 12.0L675.6 12.4L676.2 12.8L676.9 13.1L677.5 13.4L677.5 14.0L676.9 14.3L676.2 14.7L675.6 15.1L675.0 15.4L674.3 15.7L673.7 16.1L673.1 16.4L672.4 16.9L671.8 16.7L671.1 16.8L670.5 17.3L669.9 17.7L669.2 17.8L668.6 18.5L668.0 18.5L667.3 17.7L666.7 14.0ZM679.4 13.7L679.4 13.4L680.0 9.7L680.6 9.6L681.3 9.8L681.9 9.7L682.5 11.4L683.1 9.4L683.7 9.8L684.4 9.8L685.0 9.7L685.6 9.8L686.2 9.9L686.8 9.3L687.4 10.9L688.1 11.2L688.7 12.5L689.3 13.2L689.3 14.3L688.7 14.9L688.1 16.3L687.4 16.6L686.8 18.1L686.2 17.5L685.6 17.7L685.0 17.8L684.4 17.6L683.7 17.7L683.1 18.0L682.5 16.0L681.9 17.7L681.3 17.7L680.6 17.8L680.0 17.7L679.4 14.0ZM690.9 13.7L690.9 13.4L691.5 10.3L692.1 11.2L692.8 11.8L693.4 12.7L694.0 13.4L694.0 14.0L693.4 14.8L692.8 15.7L692.1 16.2L691.5 17.1L690.9 14.0ZM694.2 13.7L694.2 13.4L694.8 9.8L695.4 9.6L696.0 10.1L696.6 10.8L697.2 11.5L697.8 13.4L697.8 14.0L697.2 15.9L696.6 16.7L696.0 17.3L695.4 17.8L694.8 17.7L694.2 14.0ZM701.2 13.7L701.2 13.4L701.8 9.8L702.4 9.5L703.0 10.0L703.6 10.8L704.2 11.7L704.8 13.4L704.8 14.0L704.2 15.8L703.6 16.6L703.0 17.4L702.4 17.9L701.8 17.7L701.2 14.0ZM707.6 13.7L707.6 13.4L708.2 10.5L708.8 10.7L709.4 11.8L710.0 13.4L710.0 14.0L709.4 15.7L708.8 16.8L708.2 16.9L707.6 14.0ZM712.5 13.7L712.5 13.4L713.1 10.3L713.8 9.6L714.5 9.7L715.1 9.5L715.8 10.6L716.4 13.4L716.4 14.0L715.8 16.8L715.1 17.9L714.5 17.7L713.8 17.9L713.1 17.1L712.5 14.0ZM716.4 13.7L716.4 13.4L717.1 10.0L717.7 9.1L718.4 9.0L719.1 9.6L719.7 10.3L720.4 13.4L720.4 14.0L719.7 17.1L719.1 17.9L718.4 18.4L717.7 18.4L717.1 17.4L716.4 14.0ZM720.4 13.7L720.4 13.4L721.1 10.3L721.8 9.3L722.4 9.3L723.1 10.4L723.8 13.4L723.8 14.0L723.1 17.0L722.4 18.1L721.8 18.1L721.1 17.2L720.4 14.0ZM725.8 13.7L725.8 13.4L726.4 9.6L727.0 10.1L727.6 10.7L728.2 11.5L728.8 13.4L728.8 14.0L728.2 16.0L727.6 16.7L727.0 17.4L726.4 17.8L725.8 14.0ZM731.5 13.7L731.5 13.4L732.1 9.7L732.7 9.7L733.3 9.9L733.9 10.6L734.5 11.6L735.1 13.4L735.1 14.0L734.5 15.8L733.9 16.8L733.3 17.6L732.7 17.7L732.1 17.8L731.5 14.0ZM736.4 13.7L736.4 10.8L737.0 7.6L737.7 8.1L738.3 9.6L738.9 9.7L739.6 9.9L740.2 9.8L740.8 10.5L741.5 10.0L742.1 9.9L742.7 9.7L743.4 10.3L744.0 10.6L744.6 10.6L745.3 10.6L745.9 10.2L746.5 10.3L747.2 10.9L747.8 10.7L747.8 16.8L747.2 16.5L746.5 17.2L745.9 17.2L745.3 16.8L744.6 16.9L744.0 16.8L743.4 17.1L742.7 17.7L742.1 17.5L741.5 17.4L740.8 17.0L740.2 17.7L739.6 17.5L738.9 17.7L738.3 17.8L737.7 19.3L737.0 19.8L736.4 16.6ZM749.8 13.7L749.8 13.4L750.5 9.9L751.2 10.5L752.0 11.4L752.7 13.4L752.7 14.0L752.0 16.0L751.2 16.9L750.5 17.6L749.8 14.0ZM756.1 13.7L756.1 9.5L756.7 9.6L757.4 9.1L758.0 9.0L758.7 9.5L759.3 8.9L760.0 10.0L760.6 9.2L761.3 9.2L761.9 9.9L762.6 9.8L763.2 9.7L763.2 17.7L762.6 17.7L761.9 17.6L761.3 18.3L760.6 18.2L760.0 17.5L759.3 18.5L758.7 18.0L758.0 18.4L757.4 18.4L756.7 17.9L756.1 17.9ZM765.2 13.7L765.2 13.4L765.8 9.5L766.4 8.6L767.0 9.3L767.7 9.6L768.3 9.6L768.9 10.1L769.5 10.1L770.1 10.9L770.7 11.0L771.3 11.4L771.9 11.5L772.5 12.1L773.2 12.5L773.8 12.8L774.4 13.2L775.0 13.4L775.0 14.0L774.4 14.3L773.8 14.6L773.2 15.0L772.5 15.3L771.9 15.9L771.3 16.0L770.7 16.4L770.1 16.5L769.5 17.3L768.9 17.3L768.3 17.9L767.7 17.9L767.0 18.1L766.4 18.8L765.8 17.9L765.2 14.0ZM792.6 13.7L792.6 13.4L793.3 11.8L793.9 11.2L794.6 10.6L795.2 10.6L795.9 10.9L796.6 11.0L797.2 11.8L797.9 13.4L797.9 14.0L797.2 15.7L796.6 16.4L795.9 16.6L795.2 16.9L794.6 16.9L793.9 16.2L793.3 15.6L792.6 14.0ZM816.6 13.7L816.6 13.4L817.2 10.3L817.8 10.8L818.5 11.1L819.1 11.4L819.7 12.0L820.3 12.0L820.9 12.3L821.6 12.7L822.2 13.2L822.8 13.4L822.8 14.0L822.2 14.3L821.6 14.8L820.9 15.2L820.3 15.4L819.7 15.5L819.1 16.1L818.5 16.3L817.8 16.6L817.2 17.1L816.6 14.0ZM836.1 13.7L836.1 13.4L836.6 10.9L837.2 11.7L837.8 12.7L838.3 13.4L838.3 14.0L837.8 14.7L837.2 15.7L836.6 16.5L836.1 14.0ZM841.6 13.7L841.6 13.4L842.3 11.0L842.9 11.1L843.6 11.7L844.2 12.0L844.9 12.0L845.5 12.3L846.2 12.7L846.8 13.1L847.5 13.4L847.5 14.0L846.8 14.4L846.2 14.7L845.5 15.2L844.9 15.5L844.2 15.5L843.6 15.8L842.9 16.3L842.3 16.4L841.6 14.0ZM862.3 13.7L862.3 13.4L862.9 11.8L863.6 11.4L864.2 10.9L864.9 11.0L865.5 10.7L866.2 10.9L866.8 11.0L867.5 11.3L868.1 12.0L868.8 13.4L868.8 14.0L868.1 15.5L867.5 16.2L866.8 16.4L866.2 16.5L865.5 16.8L864.9 16.5L864.2 16.5L863.6 16.0L862.9 15.6L862.3 14.0ZM869.3 13.7L869.3 13.4L869.9 11.2L870.5 10.8L871.2 10.5L871.8 10.1L872.4 10.4L873.0 10.5L873.7 11.1L874.3 13.4L874.3 14.0L873.7 16.3L873.0 16.9L872.4 17.0L871.8 17.4L871.2 17.0L870.5 16.7L869.9 16.2L869.3 14.0ZM874.8 13.7L874.8 13.4L875.4 11.7L876.1 10.9L876.7 10.6L877.3 9.7L877.9 9.4L878.6 9.5L879.2 9.4L879.8 9.2L880.4 9.5L881.1 9.1L881.7 9.7L882.3 9.3L883.0 9.7L883.6 10.2L884.2 10.1L884.8 11.0L885.5 11.9L886.1 13.4L886.1 14.0L885.5 15.6L884.8 16.4L884.2 17.3L883.6 17.3L883.0 17.8L882.3 18.1L881.7 17.8L881.1 18.3L880.4 18.0L879.8 18.2L879.2 18.1L878.6 17.9L877.9 18.1L877.3 17.7L876.7 16.9L876.1 16.6L875.4 15.8L874.8 14.0ZM889.8 13.7L889.8 13.4L890.4 10.1L891.0 10.3L891.6 10.8L892.3 10.9L892.9 10.6L893.5 11.4L894.1 11.6L894.7 12.1L895.3 12.4L896.0 12.4L896.6 12.8L897.2 13.2L897.8 13.4L897.8 14.0L897.2 14.3L896.6 14.7L896.0 15.1L895.3 15.1L894.7 15.3L894.1 15.9L893.5 16.1L892.9 16.8L892.3 16.6L891.6 16.6L891.0 17.1L890.4 17.3L889.8 14.0ZM909.3 13.7L909.3 13.4L909.9 10.7L910.5 11.1L911.1 11.4L911.7 11.6L912.4 11.8L913.0 12.2L913.6 12.7L914.2 13.1L914.8 13.4L914.8 14.0L914.2 14.3L913.6 14.7L913.0 15.2L912.4 15.7L911.7 15.9L911.1 16.1L910.5 16.3L909.9 16.8L909.3 14.0ZM915.8 13.7L915.8 13.4L916.4 10.2L917.0 10.3L917.6 10.8L918.2 11.1L918.8 11.6L919.4 11.7L920.1 11.7L920.7 12.3L921.3 12.5L921.9 12.7L922.5 13.2L923.1 13.4L923.1 14.0L922.5 14.3L921.9 14.7L921.3 15.0L920.7 15.2L920.1 15.7L919.4 15.7L918.8 15.9L918.2 16.4L917.6 16.6L917.0 17.1L916.4 17.3L915.8 14.0ZM933.1 13.7L933.1 13.4L933.7 10.6L934.3 11.7L935.0 12.7L935.6 13.4L935.6 14.0L935.0 14.8L934.3 15.8L933.7 16.8L933.1 14.0ZM938.6 13.7L938.6 9.7L939.2 9.7L939.9 9.3L940.5 9.7L941.1 9.4L941.8 9.6L942.4 9.9L943.0 9.6L943.6 10.2L944.3 9.4L944.9 9.6L945.5 10.0L946.2 10.1L946.8 10.0L946.8 17.5L946.2 17.4L945.5 17.5L944.9 17.8L944.3 18.0L943.6 17.3L943.0 17.8L942.4 17.6L941.8 17.8L941.1 18.0L940.5 17.7L939.9 18.2L939.2 17.8L938.6 17.8ZM963.6 13.7L963.6 13.4L964.2 11.8L964.9 10.9L965.5 10.4L966.2 10.2L966.8 10.5L967.4 9.9L968.1 10.1L968.7 10.3L969.4 10.5L970.0 11.2L970.7 11.9L971.3 13.4L971.3 14.0L970.7 15.5L970.0 16.2L969.4 17.0L968.7 17.2L968.1 17.4L967.4 17.5L966.8 17.0L966.2 17.2L965.5 17.1L964.9 16.5L964.2 15.7L963.6 14.0ZM977.6 13.7L977.6 13.4L978.1 11.4L978.6 11.9L979.1 12.7L979.6 13.4L979.6 14.0L979.1 14.8L978.6 15.5L978.1 16.0L977.6 14.0ZM981.6 13.7L981.6 13.4L982.1 11.0L982.6 11.7L983.1 12.7L983.6 13.4L983.6 14.0L983.1 14.7L982.6 15.7L982.1 16.4L981.6 14.0ZM988.0 13.7L988.0 13.4L988.7 9.6L989.4 10.1L990.2 10.4L990.9 11.5L991.6 13.4L991.6 14.0L990.9 16.0L990.2 17.0L989.4 17.4L988.7 17.8L988.0 14.0ZM995.0 13.7L995.0 13.4L995.7 9.5L996.4 9.8L997.2 10.5L997.9 11.3L998.6 13.4L998.6 14.0L997.9 16.1L997.2 17.0L996.4 17.6L995.7 17.9L995.0 14.0ZM1001.4 13.7L1001.4 13.4L1002.0 10.5L1002.6 10.9L1003.2 11.5L1003.8 13.4L1003.8 14.0L1003.2 16.0L1002.6 16.5L1002.0 16.9L1001.4 14.0ZM1006.3 13.7L1006.3 13.4L1006.9 10.5L1007.6 9.7L1008.2 9.7L1008.9 9.3L1009.6 10.3L1010.2 13.4L1010.2 14.0L1009.6 17.2L1008.9 18.1L1008.2 17.7L1007.6 17.8L1006.9 17.0L1006.3 14.0ZM1010.2 13.7L1010.2 13.4L1010.9 10.2L1011.5 9.0L1012.2 8.9L1012.9 9.5L1013.5 10.1L1014.2 13.4L1014.2 14.0L1013.5 17.4L1012.9 17.9L1012.2 18.5L1011.5 18.5L1010.9 17.2L1010.2 14.0ZM1014.2 13.7L1014.2 13.4L1014.9 10.2L1015.6 9.3L1016.2 9.5L1016.9 10.0L1017.6 13.4L1017.6 14.0L1016.9 17.4L1016.2 17.9L1015.6 18.1L1014.9 17.2L1014.2 14.0ZM1019.6 13.7L1019.6 13.4L1020.2 10.0L1020.8 10.0L1021.4 10.7L1022.0 11.4L1022.6 13.4L1022.6 14.0L1022.0 16.0L1021.4 16.7L1020.8 17.5L1020.2 17.5L1019.6 14.0ZM1025.3 13.7L1025.3 13.4L1025.9 9.6L1026.5 9.4L1027.1 9.8L1027.7 10.7L1028.3 11.5L1028.9 13.4L1028.9 14.0L1028.3 16.0L1027.7 16.8L1027.1 17.6L1026.5 18.0L1025.9 17.9L1025.3 14.0ZM1030.2 13.7L1030.2 10.8L1030.8 7.6L1031.5 7.0L1032.1 9.9L1032.7 9.7L1033.4 10.2L1034.0 10.4L1034.6 9.7L1035.3 9.8L1035.9 10.4L1036.5 9.8L1037.2 10.2L1037.8 10.7L1038.4 10.7L1039.1 10.6L1039.7 10.4L1040.3 10.9L1041.0 11.0L1041.6 10.7L1041.6 16.8L1041.0 16.5L1040.3 16.5L1039.7 17.1L1039.1 16.8L1038.4 16.7L1037.8 16.8L1037.2 17.2L1036.5 17.7L1035.9 17.1L1035.3 17.7L1034.6 17.7L1034.0 17.0L1033.4 17.3L1032.7 17.8L1032.1 17.5L1031.5 20.5L1030.8 19.9L1030.2 16.7ZM1043.6 13.7L1043.6 13.4L1044.3 9.9L1045.0 10.3L1045.8 11.2L1046.5 13.4L1046.5 14.0L1045.8 16.2L1045.0 17.2L1044.3 17.6L1043.6 14.0ZM1049.9 13.7L1049.9 9.2L1050.5 9.0L1051.2 9.4L1051.8 9.8L1052.5 9.6L1053.1 9.4L1053.8 9.4L1054.4 9.4L1055.1 9.0L1055.7 9.6L1056.4 9.9L1057.0 9.6L1057.0 17.9L1056.4 17.5L1055.7 17.9L1055.1 18.4L1054.4 18.0L1053.8 18.1L1053.1 18.1L1052.5 17.9L1051.8 17.7L1051.2 18.0L1050.5 18.5L1049.9 18.3ZM1059.0 13.7L1059.0 13.4L1059.6 9.8L1060.3 9.3L1060.9 9.3L1061.5 9.5L1062.2 9.9L1062.8 10.4L1063.4 10.2L1064.1 10.9L1064.7 10.9L1065.4 11.3L1066.0 11.6L1066.6 11.9L1067.3 12.3L1067.9 12.5L1068.5 12.8L1069.2 13.2L1069.8 13.4L1069.8 14.0L1069.2 14.2L1068.5 14.6L1067.9 15.0L1067.3 15.1L1066.6 15.5L1066.0 15.9L1065.4 16.1L1064.7 16.6L1064.1 16.6L1063.4 17.2L1062.8 17.1L1062.2 17.5L1061.5 17.9L1060.9 18.2L1060.3 18.1L1059.6 17.6L1059.0 14.0ZM1071.7 13.7L1071.7 13.4L1072.3 9.6L1072.9 9.6L1073.6 9.6L1074.2 9.5L1074.8 11.0L1075.4 9.4L1076.0 9.1L1076.7 9.5L1077.3 8.9L1077.9 8.9L1078.5 9.1L1079.1 9.6L1079.7 10.7L1080.4 11.5L1081.0 12.5L1081.6 13.2L1081.6 14.3L1081.0 15.0L1080.4 16.0L1079.7 16.7L1079.1 17.9L1078.5 18.3L1077.9 18.5L1077.3 18.6L1076.7 17.9L1076.0 18.3L1075.4 18.1L1074.8 16.4L1074.2 17.9L1073.6 17.8L1072.9 17.8L1072.3 17.8L1071.7 14.0ZM1083.2 13.7L1083.2 13.4L1083.8 9.9L1084.4 11.1L1085.1 11.9L1085.7 12.7L1086.3 13.4L1086.3 14.0L1085.7 14.8L1085.1 15.5L1084.4 16.3L1083.8 17.6L1083.2 14.0ZM1086.5 13.7L1086.5 13.4L1087.2 9.5L1087.9 9.6L1088.7 10.6L1089.4 11.2L1090.1 13.4L1090.1 14.0L1089.4 16.2L1088.7 16.9L1087.9 17.8L1087.2 18.0L1086.5 14.0ZM1093.5 13.7L1093.5 13.4L1094.2 9.4L1094.9 10.1L1095.7 10.4L1096.4 11.2L1097.1 13.4L1097.1 14.0L1096.4 16.2L1095.7 17.1L1094.9 17.4L1094.2 18.0L1093.5 14.0ZM1099.9 13.7L1099.9 13.4L1100.5 10.7L1101.1 10.8L1101.7 11.7L1102.3 13.4L1102.3 14.0L1101.7 15.7L1101.1 16.6L1100.5 16.7L1099.9 14.0ZM1104.8 13.7L1104.8 13.4L1105.5 10.5L1106.1 9.6L1106.8 9.4L1107.4 9.6L1108.0 10.4L1108.7 13.4L1108.7 14.0L1108.0 17.0L1107.4 17.9L1106.8 18.0L1106.1 17.8L1105.5 17.0L1104.8 14.0ZM1108.7 13.7L1108.7 13.4L1109.4 10.2L1110.0 8.9L1110.7 9.2L1111.4 9.3L1112.0 10.2L1112.7 13.4L1112.7 14.0L1112.0 17.3L1111.4 18.2L1110.7 18.3L1110.0 18.5L1109.4 17.3L1108.7 14.0ZM1112.7 13.7L1112.7 13.4L1113.4 10.4L1114.1 9.6L1114.7 9.5L1115.4 10.0L1116.1 13.4L1116.1 14.0L1115.4 17.4L1114.7 18.0L1114.1 17.9L1113.4 17.1L1112.7 14.0ZM1118.1 13.7L1118.1 13.4L1118.7 9.7L1119.3 10.1L1119.9 10.6L1120.5 11.5L1121.1 13.4L1121.1 14.0L1120.5 16.0L1119.9 16.8L1119.3 17.4L1118.7 17.8L1118.1 14.0ZM1123.8 13.7L1123.8 13.4L1124.4 9.4L1125.0 9.8L1125.6 10.1L1126.2 10.7L1126.8 11.5L1127.4 13.4L1127.4 14.0L1126.8 15.9L1126.2 16.8L1125.6 17.3L1125.0 17.6L1124.4 18.1L1123.8 14.0ZM1128.7 13.7L1128.7 10.4L1129.3 7.8L1130.0 7.7L1130.6 9.7L1131.2 10.0L1131.9 9.9L1132.5 10.2L1133.1 10.0L1133.8 10.1L1134.4 10.0L1135.0 10.1L1135.7 10.5L1136.3 10.6L1136.9 10.7L1137.6 10.9L1138.2 10.5L1138.8 10.4L1139.5 10.8L1140.1 10.8L1140.1 16.6L1139.5 16.7L1138.8 17.1L1138.2 17.0L1137.6 16.6L1136.9 16.8L1136.3 16.8L1135.7 17.0L1135.0 17.3L1134.4 17.4L1133.8 17.3L1133.1 17.5L1132.5 17.2L1131.9 17.6L1131.2 17.5L1130.6 17.7L1130.0 19.7L1129.3 19.7L1128.7 17.1ZM1142.1 13.7L1142.1 13.4L1142.8 10.0L1143.5 10.6L1144.3 11.1L1145.0 13.4L1145.0 14.0L1144.3 16.3L1143.5 16.9L1142.8 17.5L1142.1 14.0ZM1148.4 13.7L1148.4 9.7L1149.0 9.3L1149.7 9.4L1150.3 9.5L1151.0 9.5L1151.6 9.7L1152.3 9.6L1152.9 9.2L1153.6 8.9L1154.2 9.9L1154.9 9.2L1155.5 9.5L1155.5 17.9L1154.9 18.3L1154.2 17.6L1153.6 18.6L1152.9 18.3L1152.3 17.8L1151.6 17.8L1151.0 18.0L1150.3 17.9L1149.7 18.1L1149.0 18.2L1148.4 17.7ZM1157.5 13.7L1157.5 13.4L1158.1 10.4L1158.8 9.1L1159.4 9.1L1160.0 9.9L1160.7 9.7L1161.3 10.6L1161.9 10.0L1162.6 10.5L1163.2 10.6L1163.9 11.0L1164.5 11.7L1165.1 11.8L1165.8 12.4L1166.4 12.4L1167.0 12.7L1167.7 13.1L1168.3 13.4L1168.3 14.0L1167.7 14.3L1167.0 14.8L1166.4 15.0L1165.8 15.1L1165.1 15.6L1164.5 15.7L1163.9 16.4L1163.2 16.8L1162.6 16.9L1161.9 17.5L1161.3 16.8L1160.7 17.7L1160.0 17.5L1159.4 18.3L1158.8 18.3L1158.1 17.0L1157.5 14.0ZM1170.2 13.7L1170.2 13.4L1170.8 10.0L1171.4 10.3L1172.1 9.9L1172.7 10.0L1173.3 11.2L1173.9 9.4L1174.5 9.4L1175.2 9.6L1175.8 9.6L1176.4 9.8L1177.0 9.6L1177.6 9.4L1178.2 10.3L1178.9 11.7L1179.5 12.5L1180.1 13.2L1180.1 14.3L1179.5 15.0L1178.9 15.7L1178.2 17.2L1177.6 18.1L1177.0 17.8L1176.4 17.7L1175.8 17.8L1175.2 17.8L1174.5 18.0L1173.9 18.0L1173.3 16.2L1172.7 17.4L1172.1 17.6L1171.4 17.1L1170.8 17.4L1170.2 14.0ZM1181.7 13.7L1181.7 13.4L1182.3 10.2L1182.9 10.9L1183.6 12.0L1184.2 12.5L1184.8 13.4L1184.8 14.0L1184.2 15.0L1183.6 15.5L1182.9 16.6L1182.3 17.2L1181.7 14.0ZM1185.0 13.7L1185.0 13.4L1185.7 9.8L1186.4 9.8L1187.2 10.4L1187.9 11.5L1188.6 13.4L1188.6 14.0L1187.9 16.0L1187.2 17.0L1186.4 17.7L1185.7 17.7L1185.0 14.0ZM1192.0 13.7L1192.0 13.4L1192.7 9.3L1193.4 9.9L1194.2 10.4L1194.9 11.2L1195.6 13.4L1195.6 14.0L1194.9 16.3L1194.2 17.0L1193.4 17.5L1192.7 18.2L1192.0 14.0ZM1198.4 13.7L1198.4 13.4L1199.0 10.2L1199.6 11.0L1200.2 11.7L1200.8 13.4L1200.8 14.0L1200.2 15.7L1199.6 16.4L1199.0 17.2L1198.4 14.0ZM6.3 41.0L6.3 40.7L7.0 39.1L7.6 38.1L8.3 38.3L9.0 37.9L9.6 38.0L10.3 38.2L10.9 39.0L11.6 40.7L11.6 41.3L10.9 43.0L10.3 43.8L9.6 43.9L9.0 44.1L8.3 43.7L7.6 43.8L7.0 42.9L6.3 41.3ZM30.3 41.0L30.3 40.7L30.9 37.7L31.5 37.9L32.2 38.3L32.8 38.7L33.4 39.1L34.0 39.4L34.6 39.7L35.3 39.8L35.9 40.4L36.5 40.7L36.5 41.3L35.9 41.5L35.3 42.1L34.6 42.3L34.0 42.6L33.4 42.8L32.8 43.3L32.2 43.7L31.5 44.1L30.9 44.2L30.3 41.3ZM49.8 41.0L49.8 40.7L50.4 38.6L50.9 39.1L51.5 39.9L52.0 40.7L52.0 41.3L51.5 42.1L50.9 42.8L50.4 43.4L49.8 41.3ZM55.3 41.0L55.3 40.7L56.0 38.4L56.6 38.2L57.3 38.4L57.9 38.8L58.6 39.1L59.2 39.4L59.9 39.9L60.5 40.4L61.2 40.7L61.2 41.3L60.5 41.5L59.9 42.0L59.2 42.5L58.6 42.9L57.9 43.1L57.3 43.5L56.6 43.8L56.0 43.5L55.3 41.3ZM76.0 41.0L76.0 40.7L76.7 39.2L77.3 38.6L78.0 38.2L78.6 37.9L79.2 37.8L79.9 38.2L80.5 38.0L81.2 38.5L81.8 39.0L82.5 40.7L82.5 41.3L81.8 42.9L81.2 43.5L80.5 43.9L79.9 43.7L79.2 44.1L78.6 44.0L78.0 43.8L77.3 43.4L76.7 42.8L76.0 41.3ZM83.0 41.0L83.0 40.7L83.6 38.6L84.2 37.6L84.9 37.6L85.5 37.4L86.1 37.4L86.8 37.6L87.4 38.5L88.0 40.7L88.0 41.3L87.4 43.5L86.8 44.3L86.1 44.6L85.5 44.6L84.9 44.3L84.2 44.3L83.6 43.4L83.0 41.3ZM88.5 41.0L88.5 40.7L89.1 39.0L89.8 38.3L90.4 37.4L91.0 37.3L91.6 37.2L92.3 37.1L92.9 36.7L93.5 36.5L94.2 36.7L94.8 36.5L95.4 37.0L96.0 36.7L96.7 36.9L97.3 37.2L97.9 37.6L98.5 38.2L99.2 39.1L99.8 40.7L99.8 41.3L99.2 42.9L98.5 43.8L97.9 44.4L97.3 44.7L96.7 45.0L96.0 45.3L95.4 44.9L94.8 45.5L94.2 45.2L93.5 45.4L92.9 45.3L92.3 44.9L91.6 44.8L91.0 44.6L90.4 44.6L89.8 43.7L89.1 42.9L88.5 41.3ZM103.5 41.0L103.5 40.7L104.1 36.6L104.7 37.2L105.3 38.0L106.0 37.9L106.6 38.6L107.2 38.7L107.8 38.9L108.4 39.0L109.0 39.4L109.7 39.8L110.3 40.2L110.9 40.5L111.5 40.7L111.5 41.3L110.9 41.4L110.3 41.7L109.7 42.1L109.0 42.6L108.4 42.9L107.8 43.1L107.2 43.3L106.6 43.4L106.0 44.1L105.3 44.0L104.7 44.8L104.1 45.3L103.5 41.3ZM123.0 41.0L123.0 40.7L123.6 38.3L124.2 38.1L124.8 38.3L125.4 38.5L126.1 39.1L126.7 39.4L127.3 40.0L127.9 40.4L128.5 40.7L128.5 41.3L127.9 41.6L127.3 42.0L126.7 42.5L126.1 42.8L125.4 43.5L124.8 43.6L124.2 43.8L123.6 43.7L123.0 41.3ZM129.5 41.0L129.5 40.7L130.1 37.5L130.7 38.1L131.3 38.0L131.9 38.6L132.5 38.9L133.2 38.8L133.8 39.3L134.4 39.5L135.0 39.7L135.6 40.1L136.2 40.5L136.8 40.7L136.8 41.3L136.2 41.4L135.6 41.8L135.0 42.3L134.4 42.4L133.8 42.7L133.2 43.2L132.5 43.0L131.9 43.4L131.3 44.0L130.7 43.9L130.1 44.4L129.5 41.3ZM146.8 41.0L146.8 40.7L147.4 38.0L148.1 39.0L148.7 39.7L149.3 40.7L149.3 41.3L148.7 42.3L148.1 42.9L147.4 44.0L146.8 41.3ZM152.3 41.0L152.3 37.4L152.9 37.5L153.6 37.5L154.2 37.0L154.8 36.5L155.5 36.5L156.1 36.6L156.7 36.5L157.3 36.8L158.0 37.2L158.6 37.2L159.2 36.6L159.9 37.4L160.5 37.1L160.5 44.8L159.9 44.6L159.2 45.4L158.6 44.7L158.0 44.8L157.3 45.1L156.7 45.5L156.1 45.4L155.5 45.4L154.8 45.5L154.2 44.9L153.6 44.5L152.9 44.4L152.3 44.6ZM177.3 41.0L177.3 40.7L177.9 39.0L178.6 38.5L179.2 37.6L179.9 37.5L180.5 37.7L181.2 37.2L181.8 37.6L182.4 37.8L183.1 37.7L183.7 38.2L184.4 38.9L185.0 40.7L185.0 41.3L184.4 43.0L183.7 43.7L183.1 44.2L182.4 44.2L181.8 44.3L181.2 44.7L180.5 44.2L179.9 44.4L179.2 44.3L178.6 43.5L177.9 42.9L177.3 41.3ZM201.7 41.0L201.7 40.7L202.3 36.8L202.9 37.2L203.5 37.4L204.1 38.0L204.7 38.8L205.3 40.7L205.3 41.3L204.7 43.1L204.1 43.9L203.5 44.6L202.9 44.8L202.3 45.1L201.7 41.3ZM208.7 41.0L208.7 40.7L209.3 36.5L209.9 36.8L210.5 37.2L211.1 37.8L211.7 38.7L212.3 40.7L212.3 41.3L211.7 43.3L211.1 44.2L210.5 44.8L209.9 45.2L209.3 45.4L208.7 41.3ZM215.1 41.0L215.1 40.7L215.7 37.9L216.3 38.0L216.9 38.8L217.5 40.7L217.5 41.3L216.9 43.1L216.3 43.9L215.7 44.0L215.1 41.3ZM220.0 41.0L220.0 40.7L220.7 37.8L221.3 36.6L221.9 37.0L222.6 37.0L223.2 37.5L223.9 40.7L223.9 41.3L223.2 44.4L222.6 45.0L221.9 45.0L221.3 45.4L220.7 44.2L220.0 41.3ZM223.9 41.0L223.9 40.7L224.6 37.5L225.2 36.6L225.9 36.4L226.6 36.6L227.2 37.6L227.9 40.7L227.9 41.3L227.2 44.3L226.6 45.3L225.9 45.5L225.2 45.4L224.6 44.5L223.9 41.3ZM227.9 41.0L227.9 40.7L228.6 37.3L229.3 36.9L229.9 36.8L230.6 37.6L231.3 40.7L231.3 41.3L230.6 44.4L229.9 45.1L229.3 45.1L228.6 44.7L227.9 41.3ZM233.3 41.0L233.3 40.7L233.9 37.2L234.5 37.3L235.1 37.8L235.7 38.9L236.3 40.7L236.3 41.3L235.7 43.1L235.1 44.1L234.5 44.6L233.9 44.8L233.3 41.3ZM239.0 41.0L239.0 40.7L239.7 36.9L240.4 37.3L241.2 37.4L241.9 38.5L242.6 40.7L242.6 41.3L241.9 43.4L241.2 44.5L240.4 44.6L239.7 45.0L239.0 41.3ZM243.9 41.0L243.9 37.5L244.5 35.4L245.1 35.2L245.7 37.1L246.3 37.1L246.9 36.5L247.5 36.8L248.1 37.1L248.7 37.2L249.3 36.9L249.9 37.4L250.5 37.2L251.1 37.3L251.7 37.1L252.3 37.6L252.9 38.1L253.5 37.9L254.1 38.1L254.7 37.9L255.3 37.7L255.3 44.2L254.7 44.0L254.1 43.9L253.5 44.1L252.9 43.8L252.3 44.4L251.7 44.9L251.1 44.7L250.5 44.8L249.9 44.5L249.3 45.1L248.7 44.7L248.1 44.9L247.5 45.2L246.9 45.4L246.3 44.8L245.7 44.8L245.1 46.8L244.5 46.6L243.9 44.5ZM257.3 41.0L257.3 40.7L258.0 37.2L258.8 37.8L259.5 38.3L260.2 40.7L260.2 41.3L259.5 43.6L258.8 44.1L258.0 44.8L257.3 41.3ZM263.6 41.0L263.6 36.0L264.2 36.4L264.9 36.9L265.5 37.3L266.2 36.4L266.8 37.3L267.5 36.7L268.1 36.9L268.8 37.0L269.4 36.7L270.1 37.1L270.7 36.7L270.7 45.3L270.1 44.9L269.4 45.2L268.8 44.9L268.1 45.1L267.5 45.3L266.8 44.7L266.2 45.6L265.5 44.7L264.9 45.0L264.2 45.5L263.6 45.9ZM272.7 41.0L272.7 40.7L273.3 37.3L273.9 36.0L274.5 36.4L275.1 37.3L275.7 36.7L276.3 37.5L276.9 37.6L277.5 37.5L278.1 38.0L278.7 38.0L279.3 38.6L279.9 39.2L280.5 39.0L281.1 39.5L281.7 39.7L282.3 40.2L282.9 40.5L283.5 40.7L283.5 41.3L282.9 41.5L282.3 41.8L281.7 42.3L281.1 42.5L280.5 43.0L279.9 42.8L279.3 43.4L278.7 43.9L278.1 44.0L277.5 44.5L276.9 44.4L276.3 44.4L275.7 45.2L275.1 44.7L274.5 45.5L273.9 45.9L273.3 44.6L272.7 41.3ZM285.4 41.0L285.4 40.7L286.0 37.2L286.6 36.7L287.3 37.0L287.9 37.1L288.5 38.4L289.1 36.7L289.7 36.7L290.3 36.4L291.0 37.0L291.6 37.1L292.2 36.8L292.8 37.0L293.4 37.6L294.1 38.4L294.7 39.5L295.3 40.5L295.3 41.5L294.7 42.5L294.1 43.5L293.4 44.4L292.8 45.0L292.2 45.1L291.6 44.9L291.0 44.9L290.3 45.5L289.7 45.3L289.1 45.2L288.5 43.5L287.9 44.9L287.3 45.0L286.6 45.2L286.0 44.8L285.4 41.3ZM296.9 41.0L296.9 40.7L297.5 37.9L298.1 38.4L298.8 39.0L299.4 39.9L300.0 40.7L300.0 41.3L299.4 42.1L298.8 43.0L298.1 43.6L297.5 44.0L296.9 41.3ZM300.2 41.0L300.2 40.7L300.8 36.9L301.4 36.8L302.0 37.4L302.6 37.7L303.2 38.9L303.8 40.7L303.8 41.3L303.2 43.1L302.6 44.2L302.0 44.5L301.4 45.1L300.8 45.0L300.2 41.3ZM307.2 41.0L307.2 40.7L307.8 36.4L308.4 37.2L309.0 37.2L309.6 37.8L310.2 38.8L310.8 40.7L310.8 41.3L310.2 43.1L309.6 44.2L309.0 44.8L308.4 44.7L307.8 45.5L307.2 41.3ZM313.6 41.0L313.6 40.7L314.2 37.8L314.8 38.1L315.4 38.9L316.0 40.7L316.0 41.3L315.4 43.1L314.8 43.9L314.2 44.2L313.6 41.3ZM318.5 41.0L318.5 40.7L319.2 37.5L319.8 37.2L320.5 36.6L321.1 37.2L321.8 37.9L322.4 40.7L322.4 41.3L321.8 44.0L321.1 44.8L320.5 45.4L319.8 44.8L319.2 44.4L318.5 41.3ZM322.4 41.0L322.4 40.7L323.1 37.5L323.7 36.4L324.4 36.0L325.1 36.8L325.7 37.4L326.4 40.7L326.4 41.3L325.7 44.5L325.1 45.1L324.4 45.9L323.7 45.5L323.1 44.5L322.4 41.3ZM326.4 41.0L326.4 40.7L327.1 37.5L327.8 37.0L328.4 37.1L329.1 37.4L329.8 40.7L329.8 41.3L329.1 44.6L328.4 44.9L327.8 44.9L327.1 44.5L326.4 41.3ZM331.8 41.0L331.8 40.7L332.4 37.2L333.0 37.2L333.6 37.8L334.2 38.8L334.8 40.7L334.8 41.3L334.2 43.2L333.6 44.2L333.0 44.8L332.4 44.8L331.8 41.3ZM337.5 41.0L337.5 40.7L338.1 37.1L338.7 36.8L339.3 37.4L339.9 37.9L340.5 38.9L341.1 40.7L341.1 41.3L340.5 43.1L339.9 44.0L339.3 44.6L338.7 45.2L338.1 44.9L337.5 41.3ZM342.4 41.0L342.4 37.5L343.0 35.0L343.7 34.6L344.3 37.0L344.9 36.9L345.6 37.5L346.2 37.1L346.8 36.9L347.5 37.3L348.1 37.4L348.7 37.4L349.4 37.7L350.0 37.6L350.6 37.8L351.3 37.9L351.9 37.6L352.5 38.1L353.2 37.8L353.8 38.2L353.8 43.8L353.2 44.1L352.5 43.9L351.9 44.4L351.3 44.1L350.6 44.1L350.0 44.3L349.4 44.2L348.7 44.6L348.1 44.6L347.5 44.7L346.8 45.0L346.2 44.9L345.6 44.4L344.9 45.1L344.3 44.9L343.7 47.3L343.0 46.9L342.4 44.5ZM355.8 41.0L355.8 40.7L356.5 36.9L357.3 37.8L358.0 38.4L358.7 40.7L358.7 41.3L358.0 43.5L357.3 44.1L356.5 45.0L355.8 41.3ZM362.1 41.0L362.1 36.5L362.7 36.3L363.4 37.3L364.0 37.1L364.7 36.9L365.3 36.9L366.0 37.1L366.6 36.9L367.3 37.2L367.9 36.8L368.6 36.6L369.2 36.4L369.2 45.6L368.6 45.3L367.9 45.2L367.3 44.8L366.6 45.0L366.0 44.8L365.3 45.1L364.7 45.1L364.0 44.8L363.4 44.6L362.7 45.6L362.1 45.4ZM371.2 41.0L371.2 40.7L371.8 36.6L372.5 36.0L373.1 36.6L373.7 36.5L374.4 37.1L375.0 37.2L375.6 37.1L376.3 38.0L376.9 38.3L377.6 38.6L378.2 38.7L378.8 39.0L379.5 39.3L380.1 39.7L380.7 40.0L381.4 40.4L382.0 40.7L382.0 41.3L381.4 41.5L380.7 41.9L380.1 42.2L379.5 42.6L378.8 43.0L378.2 43.2L377.6 43.3L376.9 43.6L376.3 44.0L375.6 44.8L375.0 44.8L374.4 44.9L373.7 45.5L373.1 45.4L372.5 46.0L371.8 45.4L371.2 41.3ZM383.9 41.0L383.9 40.7L384.5 37.2L385.1 37.1L385.8 37.2L386.4 36.7L387.0 38.1L387.6 36.4L388.2 37.4L388.9 36.8L389.5 36.8L390.1 36.8L390.7 36.9L391.3 37.4L391.9 38.0L392.6 39.0L393.2 39.8L393.8 40.4L393.8 41.5L393.2 42.2L392.6 43.0L391.9 43.9L391.3 44.6L390.7 45.0L390.1 45.2L389.5 45.1L388.9 45.1L388.2 44.6L387.6 45.6L387.0 43.8L386.4 45.2L385.8 44.7L385.1 44.8L384.5 44.7L383.9 41.3ZM395.4 41.0L395.4 40.7L396.0 37.8L396.6 38.3L397.3 38.9L397.9 39.7L398.5 40.7L398.5 41.3L397.9 42.2L397.3 43.0L396.6 43.6L396.0 44.1L395.4 41.3ZM398.7 41.0L398.7 40.7L399.3 36.4L399.9 36.8L400.5 37.4L401.1 37.9L401.7 38.7L402.3 40.7L402.3 41.3L401.7 43.3L401.1 44.0L400.5 44.6L399.9 45.2L399.3 45.5L398.7 41.3ZM405.7 41.0L405.7 40.7L406.3 36.8L406.9 36.8L407.5 37.3L408.1 37.7L408.7 38.9L409.3 40.7L409.3 41.3L408.7 43.0L408.1 44.2L407.5 44.7L406.9 45.2L406.3 45.2L405.7 41.3ZM412.1 41.0L412.1 40.7L412.7 37.7L413.3 38.0L413.9 38.7L414.5 40.7L414.5 41.3L413.9 43.2L413.3 43.9L412.7 44.3L412.1 41.3ZM417.0 41.0L417.0 40.7L417.7 37.5L418.3 37.2L419.0 36.9L419.6 37.1L420.3 37.8L420.9 40.7L420.9 41.3L420.3 44.1L419.6 44.9L419.0 45.0L418.3 44.8L417.7 44.5L417.0 41.3ZM420.9 41.0L420.9 40.7L421.6 37.6L422.2 36.3L422.9 36.1L423.6 36.3L424.2 37.3L424.9 40.7L424.9 41.3L424.2 44.7L423.6 45.6L422.9 45.8L422.2 45.7L421.6 44.4L420.9 41.3ZM424.9 41.0L424.9 40.7L425.6 37.4L426.3 36.9L426.9 36.7L427.6 37.4L428.3 40.7L428.3 41.3L427.6 44.6L426.9 45.3L426.3 45.0L425.6 44.6L424.9 41.3ZM430.3 41.0L430.3 40.7L430.9 37.5L431.5 37.7L432.1 37.9L432.7 38.6L433.3 40.7L433.3 41.3L432.7 43.3L432.1 44.0L431.5 44.3L430.9 44.5L430.3 41.3ZM436.0 41.0L436.0 40.7L436.6 36.7L437.2 37.1L437.8 37.4L438.4 37.7L439.0 38.9L439.6 40.7L439.6 41.3L439.0 43.0L438.4 44.2L437.8 44.6L437.2 44.8L436.6 45.2L436.0 41.3ZM440.9 41.0L440.9 37.8L441.5 35.7L442.2 35.5L442.8 36.8L443.4 36.7L444.1 37.4L444.7 37.4L445.3 37.0L446.0 37.3L446.6 37.1L447.2 37.1L447.9 37.9L448.5 37.4L449.1 38.0L449.8 37.9L450.4 37.8L451.0 37.9L451.7 37.8L452.3 38.3L452.3 43.7L451.7 44.1L451.0 44.1L450.4 44.2L449.8 44.1L449.1 43.9L448.5 44.6L447.9 44.0L447.2 44.9L446.6 44.8L446.0 44.7L445.3 45.0L444.7 44.6L444.1 44.6L443.4 45.2L442.8 45.1L442.2 46.5L441.5 46.2L440.9 44.2ZM454.3 41.0L454.3 40.7L455.0 37.3L455.8 37.7L456.5 38.7L457.2 40.7L457.2 41.3L456.5 43.3L455.8 44.2L455.0 44.7L454.3 41.3ZM460.6 41.0L460.6 37.2L461.2 36.9L461.9 36.9L462.5 37.0L463.2 36.9L463.8 36.4L464.5 36.4L465.1 36.6L465.8 36.5L466.4 37.0L467.1 36.1L467.7 36.7L467.7 45.2L467.1 45.9L466.4 44.9L465.8 45.5L465.1 45.4L464.5 45.5L463.8 45.6L463.2 45.0L462.5 44.9L461.9 45.0L461.2 45.1L460.6 44.8ZM469.7 41.0L469.7 40.7L470.3 37.1L471.0 36.8L471.6 36.6L472.2 37.2L472.9 37.3L473.5 37.6L474.1 38.1L474.8 37.9L475.4 37.9L476.1 38.2L476.7 39.0L477.3 38.9L478.0 39.4L478.6 39.8L479.2 40.2L479.9 40.4L480.5 40.7L480.5 41.3L479.9 41.6L479.2 41.8L478.6 42.2L478.0 42.5L477.3 43.1L476.7 43.0L476.1 43.8L475.4 44.0L474.8 44.1L474.1 43.8L473.5 44.3L472.9 44.7L472.2 44.7L471.6 45.3L471.0 45.2L470.3 44.8L469.7 41.3ZM482.4 41.0L482.4 40.7L483.0 37.5L483.6 37.2L484.3 36.6L484.9 36.9L485.5 38.8L486.1 36.1L486.7 36.2L487.4 36.1L488.0 36.9L488.6 36.7L489.2 37.2L489.8 37.0L490.4 38.2L491.1 38.9L491.7 39.6L492.3 40.4L492.3 41.6L491.7 42.3L491.1 43.1L490.4 43.7L489.8 44.9L489.2 44.7L488.6 45.3L488.0 45.1L487.4 45.8L486.7 45.7L486.1 45.8L485.5 43.2L484.9 45.0L484.3 45.3L483.6 44.8L483.0 44.4L482.4 41.3ZM493.9 41.0L493.9 40.7L494.5 37.6L495.1 38.4L495.8 39.1L496.4 39.9L497.0 40.7L497.0 41.3L496.4 42.1L495.8 42.9L495.1 43.5L494.5 44.4L493.9 41.3ZM497.2 41.0L497.2 40.7L497.8 36.7L498.4 36.7L499.0 37.1L499.6 37.9L500.2 38.7L500.8 40.7L500.8 41.3L500.2 43.2L499.6 44.0L499.0 44.9L498.4 45.3L497.8 45.3L497.2 41.3ZM504.2 41.0L504.2 40.7L504.8 36.4L505.4 37.1L506.0 37.6L506.6 37.7L507.2 38.8L507.8 40.7L507.8 41.3L507.2 43.2L506.6 44.2L506.0 44.4L505.4 44.8L504.8 45.5L504.2 41.3ZM510.6 41.0L510.6 40.7L511.2 38.0L511.8 38.2L512.4 39.0L513.0 40.7L513.0 41.3L512.4 43.0L511.8 43.7L511.2 44.0L510.6 41.3ZM515.5 41.0L515.5 40.7L516.1 37.8L516.8 36.6L517.5 37.0L518.1 37.0L518.8 37.6L519.4 40.7L519.4 41.3L518.8 44.3L518.1 45.0L517.5 45.0L516.8 45.4L516.1 44.2L515.5 41.3ZM519.4 41.0L519.4 40.7L520.1 37.2L520.7 36.4L521.4 36.5L522.1 36.7L522.7 37.6L523.4 40.7L523.4 41.3L522.7 44.3L522.1 45.2L521.4 45.5L520.7 45.6L520.1 44.8L519.4 41.3ZM523.4 41.0L523.4 40.7L524.1 37.2L524.8 36.9L525.4 36.7L526.1 37.2L526.8 40.7L526.8 41.3L526.1 44.7L525.4 45.2L524.8 45.0L524.1 44.7L523.4 41.3ZM528.8 41.0L528.8 40.7L529.4 37.1L530.0 37.3L530.6 38.1L531.2 38.8L531.8 40.7L531.8 41.3L531.2 43.2L530.6 43.8L530.0 44.7L529.4 44.9L528.8 41.3ZM534.5 41.0L534.5 40.7L535.1 36.5L535.7 37.0L536.3 37.4L536.9 37.7L537.5 38.8L538.1 40.7L538.1 41.3L537.5 43.2L536.9 44.3L536.3 44.5L535.7 45.0L535.1 45.4L534.5 41.3ZM539.4 41.0L539.4 37.8L540.0 35.2L540.7 34.9L541.3 36.6L541.9 37.2L542.6 37.2L543.2 36.7L543.8 37.2L544.5 37.0L545.1 37.5L545.7 37.6L546.4 37.9L547.0 37.9L547.6 37.9L548.3 38.0L548.9 38.2L549.5 37.6L550.2 38.0L550.8 38.0L550.8 43.9L550.2 44.0L549.5 44.3L548.9 43.8L548.3 44.0L547.6 44.1L547.0 44.0L546.4 44.1L545.7 44.4L545.1 44.5L544.5 45.0L543.8 44.8L543.2 45.3L542.6 44.7L541.9 44.8L541.3 45.3L540.7 47.0L540.0 46.8L539.4 44.1ZM552.8 41.0L552.8 40.7L553.5 37.2L554.2 37.7L555.0 38.3L555.7 40.7L555.7 41.3L555.0 43.6L554.2 44.3L553.5 44.8L552.8 41.3ZM559.1 41.0L559.1 36.7L559.7 37.1L560.4 36.9L561.0 36.5L561.7 36.3L562.3 36.2L563.0 36.9L563.6 36.4L564.3 36.8L564.9 37.1L565.6 36.7L566.2 36.9L566.2 45.1L565.6 45.3L564.9 44.8L564.3 45.2L563.6 45.5L563.0 45.0L562.3 45.8L561.7 45.6L561.0 45.5L560.4 45.1L559.7 44.8L559.1 45.2ZM568.2 41.0L568.2 40.7L568.8 37.1L569.5 36.3L570.1 36.1L570.7 36.7L571.4 36.9L572.0 37.5L572.6 37.4L573.3 37.9L573.9 38.0L574.6 38.2L575.2 38.4L575.8 38.9L576.5 39.4L577.1 39.8L577.7 40.1L578.4 40.4L579.0 40.7L579.0 41.3L578.4 41.5L577.7 41.9L577.1 42.2L576.5 42.5L575.8 43.1L575.2 43.5L574.6 43.7L573.9 43.9L573.3 44.1L572.6 44.6L572.0 44.5L571.4 45.0L570.7 45.3L570.1 45.8L569.5 45.7L568.8 44.8L568.2 41.3ZM580.9 41.0L580.9 40.7L581.5 36.8L582.1 36.8L582.8 37.2L583.4 37.1L584.0 38.1L584.6 36.5L585.2 37.0L585.9 36.7L586.5 36.8L587.1 36.8L587.7 36.9L588.3 37.1L588.9 38.2L589.6 38.7L590.2 39.6L590.8 40.4L590.8 41.5L590.2 42.4L589.6 43.3L588.9 43.7L588.3 44.8L587.7 45.0L587.1 45.2L586.5 45.2L585.9 45.2L585.2 45.0L584.6 45.5L584.0 43.8L583.4 44.8L582.8 44.8L582.1 45.2L581.5 45.1L580.9 41.3ZM592.4 41.0L592.4 40.7L593.0 37.7L593.6 38.1L594.3 39.1L594.9 39.8L595.5 40.7L595.5 41.3L594.9 42.1L594.3 42.8L593.6 43.8L593.0 44.3L592.4 41.3ZM595.7 41.0L595.7 40.7L596.3 36.9L596.9 36.8L597.5 37.2L598.1 37.7L598.7 38.7L599.3 40.7L599.3 41.3L598.7 43.3L598.1 44.2L597.5 44.7L596.9 45.2L596.3 45.0L595.7 41.3ZM602.7 41.0L602.7 40.7L603.3 36.9L603.9 37.0L604.5 37.1L605.1 37.9L605.7 38.7L606.3 40.7L606.3 41.3L605.7 43.2L605.1 44.1L604.5 44.9L603.9 44.9L603.3 45.0L602.7 41.3ZM609.1 41.0L609.1 40.7L609.7 37.7L610.3 37.9L610.9 38.7L611.5 40.7L611.5 41.3L610.9 43.2L610.3 44.0L609.7 44.2L609.1 41.3ZM614.0 41.0L614.0 40.7L614.6 37.9L615.3 36.6L616.0 36.6L616.6 36.7L617.3 37.7L617.9 40.7L617.9 41.3L617.3 44.3L616.6 45.3L616.0 45.3L615.3 45.4L614.6 44.0L614.0 41.3ZM617.9 41.0L617.9 40.7L618.6 37.3L619.2 36.6L619.9 36.2L620.6 36.7L621.2 37.6L621.9 40.7L621.9 41.3L621.2 44.4L620.6 45.3L619.9 45.8L619.2 45.3L618.6 44.6L617.9 41.3ZM621.9 41.0L621.9 40.7L622.6 37.7L623.3 36.8L623.9 36.6L624.6 37.2L625.3 40.7L625.3 41.3L624.6 44.7L623.9 45.4L623.3 45.1L622.6 44.2L621.9 41.3ZM627.3 41.0L627.3 40.7L627.9 37.1L628.5 37.5L629.1 37.8L629.7 38.9L630.3 40.7L630.3 41.3L629.7 43.0L629.1 44.1L628.5 44.5L627.9 44.8L627.3 41.3ZM633.0 41.0L633.0 40.7L633.6 36.9L634.2 36.7L634.8 37.4L635.4 37.7L636.0 38.9L636.6 40.7L636.6 41.3L636.0 43.1L635.4 44.3L634.8 44.6L634.2 45.2L633.6 45.0L633.0 41.3ZM637.9 41.0L637.9 37.7L638.5 34.9L639.2 34.9L639.8 36.4L640.4 36.8L641.1 37.2L641.7 36.7L642.3 37.4L643.0 37.0L643.6 37.2L644.2 37.5L644.9 37.3L645.5 37.9L646.1 37.7L646.8 37.7L647.4 38.1L648.0 38.2L648.7 37.8L649.3 38.0L649.3 44.0L648.7 44.1L648.0 43.8L647.4 43.9L646.8 44.3L646.1 44.3L645.5 44.1L644.9 44.7L644.2 44.5L643.6 44.8L643.0 45.0L642.3 44.5L641.7 45.2L641.1 44.8L640.4 45.2L639.8 45.5L639.2 47.0L638.5 47.0L637.9 44.3ZM651.3 41.0L651.3 40.7L652.0 37.5L652.8 37.8L653.5 38.3L654.2 40.7L654.2 41.3L653.5 43.6L652.8 44.2L652.0 44.5L651.3 41.3ZM657.6 41.0L657.6 36.4L658.2 37.2L658.9 36.4L659.5 36.6L660.2 36.7L660.8 36.9L661.5 36.6L662.1 36.0L662.8 37.1L663.4 36.7L664.1 36.8L664.7 36.7L664.7 45.2L664.1 45.2L663.4 45.3L662.8 44.9L662.1 45.9L661.5 45.3L660.8 45.1L660.2 45.2L659.5 45.4L658.9 45.5L658.2 44.8L657.6 45.6ZM666.7 41.0L666.7 40.7L667.3 36.6L668.0 36.3L668.6 36.6L669.2 36.9L669.9 37.2L670.5 37.2L671.1 37.7L671.8 37.7L672.4 38.0L673.1 38.5L673.7 38.6L674.3 38.7L675.0 39.5L675.6 39.6L676.2 40.1L676.9 40.5L677.5 40.7L677.5 41.3L676.9 41.5L676.2 41.9L675.6 42.4L675.0 42.4L674.3 43.3L673.7 43.3L673.1 43.5L672.4 43.9L671.8 44.2L671.1 44.3L670.5 44.8L669.9 44.8L669.2 45.0L668.6 45.4L668.0 45.6L667.3 45.3L666.7 41.3ZM679.4 41.0L679.4 40.7L680.0 37.2L680.6 37.5L681.3 37.5L681.9 36.8L682.5 38.5L683.1 37.2L683.7 36.9L684.4 36.8L685.0 36.2L685.6 36.7L686.2 36.7L686.8 37.3L687.4 37.8L688.1 38.8L688.7 39.6L689.3 40.4L689.3 41.6L688.7 42.3L688.1 43.1L687.4 44.2L686.8 44.7L686.2 45.3L685.6 45.2L685.0 45.7L684.4 45.2L683.7 45.1L683.1 44.7L682.5 43.4L681.9 45.1L681.3 44.5L680.6 44.5L680.0 44.8L679.4 41.3ZM690.9 41.0L690.9 40.7L691.5 38.1L692.1 38.3L692.8 39.0L693.4 39.8L694.0 40.7L694.0 41.3L693.4 42.1L692.8 42.9L692.1 43.6L691.5 43.9L690.9 41.3ZM694.2 41.0L694.2 40.7L694.8 36.7L695.4 36.7L696.0 37.3L696.6 38.1L697.2 38.6L697.8 40.7L697.8 41.3L697.2 43.3L696.6 43.9L696.0 44.7L695.4 45.2L694.8 45.2L694.2 41.3ZM701.2 41.0L701.2 40.7L701.8 36.9L702.4 37.0L703.0 37.1L703.6 37.6L704.2 38.8L704.8 40.7L704.8 41.3L704.2 43.1L703.6 44.3L703.0 44.9L702.4 45.0L701.8 45.0L701.2 41.3ZM707.6 41.0L707.6 40.7L708.2 37.6L708.8 38.3L709.4 38.9L710.0 40.7L710.0 41.3L709.4 43.1L708.8 43.6L708.2 44.3L707.6 41.3ZM712.5 41.0L712.5 40.7L713.1 37.6L713.8 37.0L714.5 36.5L715.1 36.9L715.8 37.8L716.4 40.7L716.4 41.3L715.8 44.1L715.1 45.0L714.5 45.5L713.8 45.0L713.1 44.3L712.5 41.3ZM716.4 41.0L716.4 40.7L717.1 37.7L717.7 36.4L718.4 36.2L719.1 36.5L719.7 37.3L720.4 40.7L720.4 41.3L719.7 44.6L719.1 45.4L718.4 45.7L717.7 45.5L717.1 44.3L716.4 41.3ZM720.4 41.0L720.4 40.7L721.1 37.6L721.8 36.4L722.4 36.8L723.1 37.4L723.8 40.7L723.8 41.3L723.1 44.6L722.4 45.2L721.8 45.5L721.1 44.4L720.4 41.3ZM725.8 41.0L725.8 40.7L726.4 37.4L727.0 37.3L727.6 37.7L728.2 38.8L728.8 40.7L728.8 41.3L728.2 43.1L727.6 44.3L727.0 44.6L726.4 44.6L725.8 41.3ZM731.5 41.0L731.5 40.7L732.1 36.5L732.7 37.1L733.3 37.2L733.9 38.0L734.5 38.9L735.1 40.7L735.1 41.3L734.5 43.1L733.9 44.0L733.3 44.8L732.7 44.9L732.1 45.4L731.5 41.3ZM736.4 41.0L736.4 38.1L737.0 33.9L737.7 34.2L738.3 37.3L738.9 37.0L739.6 36.8L740.2 37.4L740.8 37.3L741.5 37.5L742.1 37.4L742.7 37.1L743.4 37.8L744.0 37.5L744.6 37.7L745.3 37.6L745.9 38.3L746.5 38.0L747.2 38.4L747.8 38.0L747.8 43.9L747.2 43.6L746.5 43.9L745.9 43.7L745.3 44.3L744.6 44.3L744.0 44.4L743.4 44.2L742.7 44.9L742.1 44.5L741.5 44.5L740.8 44.6L740.2 44.6L739.6 45.1L738.9 45.0L738.3 44.7L737.7 47.8L737.0 48.0L736.4 43.9ZM749.8 41.0L749.8 40.7L750.5 37.4L751.2 37.5L752.0 38.6L752.7 40.7L752.7 41.3L752.0 43.4L751.2 44.5L750.5 44.6L749.8 41.3ZM756.1 41.0L756.1 37.0L756.7 36.9L757.4 37.2L758.0 36.9L758.7 36.7L759.3 37.0L760.0 36.4L760.6 36.8L761.3 36.6L761.9 36.4L762.6 37.4L763.2 37.2L763.2 44.7L762.6 44.6L761.9 45.6L761.3 45.3L760.6 45.1L760.0 45.6L759.3 45.0L758.7 45.3L758.0 45.1L757.4 44.7L756.7 45.1L756.1 44.9ZM765.2 41.0L765.2 40.7L765.8 37.0L766.4 36.1L767.0 37.1L767.7 36.5L768.3 37.6L768.9 37.6L769.5 38.0L770.1 38.1L770.7 38.5L771.3 38.7L771.9 38.7L772.5 39.2L773.2 39.7L773.8 40.0L774.4 40.4L775.0 40.7L775.0 41.3L774.4 41.5L773.8 42.0L773.2 42.2L772.5 42.8L771.9 43.2L771.3 43.2L770.7 43.5L770.1 43.8L769.5 44.0L768.9 44.4L768.3 44.4L767.7 45.5L767.0 44.8L766.4 45.9L765.8 45.0L765.2 41.3ZM792.6 41.0L792.6 40.7L793.3 39.0L793.9 38.4L794.6 38.2L795.2 38.2L795.9 37.9L796.6 38.4L797.2 38.8L797.9 40.7L797.9 41.3L797.2 43.1L796.6 43.6L795.9 44.1L795.2 43.7L794.6 43.7L793.9 43.5L793.3 43.0L792.6 41.3ZM816.6 41.0L816.6 40.7L817.2 37.5L817.8 38.4L818.5 38.6L819.1 39.0L819.7 38.8L820.3 39.3L820.9 39.6L821.6 40.1L822.2 40.4L822.8 40.7L822.8 41.3L822.2 41.5L821.6 41.9L820.9 42.3L820.3 42.6L819.7 43.1L819.1 42.9L818.5 43.4L817.8 43.6L817.2 44.5L816.6 41.3ZM836.1 41.0L836.1 40.7L836.6 38.7L837.2 39.1L837.8 40.1L838.3 40.7L838.3 41.3L837.8 41.9L837.2 42.8L836.6 43.3L836.1 41.3ZM841.6 41.0L841.6 40.7L842.3 38.2L842.9 38.2L843.6 38.5L844.2 39.2L844.9 39.2L845.5 39.5L846.2 39.8L846.8 40.4L847.5 40.7L847.5 41.3L846.8 41.6L846.2 42.1L845.5 42.4L844.9 42.8L844.2 42.8L843.6 43.4L842.9 43.7L842.3 43.7L841.6 41.3ZM862.3 41.0L862.3 40.7L862.9 39.1L863.6 38.4L864.2 38.3L864.9 37.9L865.5 37.9L866.2 38.2L866.8 38.3L867.5 38.6L868.1 39.3L868.8 40.7L868.8 41.3L868.1 42.7L867.5 43.3L866.8 43.7L866.2 43.7L865.5 44.1L864.9 44.0L864.2 43.6L863.6 43.6L862.9 42.9L862.3 41.3ZM869.3 41.0L869.3 40.7L869.9 38.6L870.5 37.6L871.2 37.4L871.8 37.6L872.4 37.7L873.0 37.9L873.7 38.6L874.3 40.7L874.3 41.3L873.7 43.4L873.0 44.0L872.4 44.2L871.8 44.4L871.2 44.6L870.5 44.4L869.9 43.4L869.3 41.3ZM874.8 41.0L874.8 40.7L875.4 39.2L876.1 38.4L876.7 37.7L877.3 37.4L877.9 37.1L878.6 36.8L879.2 36.7L879.8 36.5L880.4 36.5L881.1 36.5L881.7 36.8L882.3 36.6L883.0 36.9L883.6 37.4L884.2 37.5L884.8 38.2L885.5 38.9L886.1 40.7L886.1 41.3L885.5 43.0L884.8 43.7L884.2 44.5L883.6 44.6L883.0 45.1L882.3 45.3L881.7 45.1L881.1 45.5L880.4 45.4L879.8 45.4L879.2 45.3L878.6 45.1L877.9 44.8L877.3 44.6L876.7 44.3L876.1 43.5L875.4 42.8L874.8 41.3ZM889.8 41.0L889.8 40.7L890.4 37.5L891.0 37.7L891.6 37.9L892.3 38.0L892.9 38.1L893.5 38.4L894.1 38.7L894.7 39.1L895.3 39.4L896.0 39.8L896.6 40.0L897.2 40.5L897.8 40.7L897.8 41.3L897.2 41.4L896.6 41.9L896.0 42.1L895.3 42.6L894.7 42.8L894.1 43.2L893.5 43.5L892.9 43.8L892.3 43.9L891.6 44.1L891.0 44.3L890.4 44.4L889.8 41.3ZM909.3 41.0L909.3 40.7L909.9 38.0L910.5 38.1L911.1 38.1L911.7 38.8L912.4 39.2L913.0 39.7L913.6 39.9L914.2 40.3L914.8 40.7L914.8 41.3L914.2 41.6L913.6 42.0L913.0 42.3L912.4 42.7L911.7 43.1L911.1 43.8L910.5 43.9L909.9 44.0L909.3 41.3ZM915.8 41.0L915.8 40.7L916.4 37.4L917.0 37.6L917.6 37.9L918.2 38.4L918.8 38.6L919.4 39.0L920.1 39.0L920.7 39.4L921.3 39.9L921.9 40.2L922.5 40.5L923.1 40.7L923.1 41.3L922.5 41.5L921.9 41.8L921.3 42.1L920.7 42.6L920.1 42.9L919.4 43.0L918.8 43.3L918.2 43.5L917.6 44.0L917.0 44.3L916.4 44.6L915.8 41.3ZM933.1 41.0L933.1 40.7L933.7 37.9L934.3 39.1L935.0 39.8L935.6 40.7L935.6 41.3L935.0 42.1L934.3 42.8L933.7 44.1L933.1 41.3ZM938.6 41.0L938.6 37.1L939.2 37.1L939.9 37.0L940.5 36.8L941.1 37.1L941.8 37.0L942.4 37.3L943.0 37.0L943.6 36.7L944.3 37.1L944.9 37.5L945.5 36.9L946.2 36.5L946.8 37.4L946.8 44.6L946.2 45.4L945.5 45.0L944.9 44.4L944.3 44.9L943.6 45.2L943.0 45.0L942.4 44.7L941.8 44.9L941.1 44.8L940.5 45.1L939.9 44.9L939.2 44.8L938.6 44.8ZM963.6 41.0L963.6 40.7L964.2 39.0L964.9 38.0L965.5 37.8L966.2 37.8L966.8 37.2L967.4 37.2L968.1 37.6L968.7 37.5L969.4 38.0L970.0 38.3L970.7 39.0L971.3 40.7L971.3 41.3L970.7 43.0L970.0 43.6L969.4 44.0L968.7 44.4L968.1 44.4L967.4 44.8L966.8 44.7L966.2 44.2L965.5 44.2L964.9 43.9L964.2 42.9L963.6 41.3ZM977.6 41.0L977.6 40.7L978.1 38.6L978.6 39.3L979.1 39.9L979.6 40.7L979.6 41.3L979.1 42.1L978.6 42.7L978.1 43.4L977.6 41.3ZM981.6 41.0L981.6 40.7L982.1 38.6L982.6 39.2L983.1 40.0L983.6 40.7L983.6 41.3L983.1 41.9L982.6 42.7L982.1 43.3L981.6 41.3ZM988.0 41.0L988.0 40.7L988.7 36.6L989.4 37.2L990.2 37.7L990.9 38.5L991.6 40.7L991.6 41.3L990.9 43.5L990.2 44.3L989.4 44.8L988.7 45.3L988.0 41.3ZM995.0 41.0L995.0 40.7L995.7 36.8L996.4 37.4L997.2 37.6L997.9 38.7L998.6 40.7L998.6 41.3L997.9 43.2L997.2 44.3L996.4 44.6L995.7 45.2L995.0 41.3ZM1001.4 41.0L1001.4 40.7L1002.0 37.7L1002.6 37.9L1003.2 38.8L1003.8 40.7L1003.8 41.3L1003.2 43.1L1002.6 44.1L1002.0 44.3L1001.4 41.3ZM1006.3 41.0L1006.3 40.7L1006.9 37.8L1007.6 36.9L1008.2 36.7L1008.9 36.7L1009.6 37.9L1010.2 40.7L1010.2 41.3L1009.6 44.1L1008.9 45.2L1008.2 45.3L1007.6 45.1L1006.9 44.2L1006.3 41.3ZM1010.2 41.0L1010.2 40.7L1010.9 37.4L1011.5 36.3L1012.2 36.1L1012.9 36.5L1013.5 37.3L1014.2 40.7L1014.2 41.3L1013.5 44.7L1012.9 45.4L1012.2 45.9L1011.5 45.7L1010.9 44.5L1010.2 41.3ZM1014.2 41.0L1014.2 40.7L1014.9 37.2L1015.6 36.9L1016.2 36.5L1016.9 37.5L1017.6 40.7L1017.6 41.3L1016.9 44.5L1016.2 45.4L1015.6 45.0L1014.9 44.8L1014.2 41.3ZM1019.6 41.0L1019.6 40.7L1020.2 37.0L1020.8 37.6L1021.4 37.7L1022.0 38.9L1022.6 40.7L1022.6 41.3L1022.0 43.1L1021.4 44.2L1020.8 44.3L1020.2 44.9L1019.6 41.3ZM1025.3 41.0L1025.3 40.7L1025.9 36.8L1026.5 36.8L1027.1 37.2L1027.7 38.1L1028.3 38.7L1028.9 40.7L1028.9 41.3L1028.3 43.2L1027.7 43.9L1027.1 44.7L1026.5 45.2L1025.9 45.1L1025.3 41.3ZM1030.2 41.0L1030.2 37.8L1030.8 35.5L1031.5 34.4L1032.1 36.9L1032.7 36.9L1033.4 37.1L1034.0 36.8L1034.6 37.3L1035.3 37.1L1035.9 37.8L1036.5 37.3L1037.2 37.6L1037.8 37.6L1038.4 37.9L1039.1 37.7L1039.7 38.1L1040.3 38.3L1041.0 38.5L1041.6 38.0L1041.6 43.9L1041.0 43.5L1040.3 43.7L1039.7 43.8L1039.1 44.3L1038.4 44.0L1037.8 44.4L1037.2 44.3L1036.5 44.6L1035.9 44.1L1035.3 44.9L1034.6 44.7L1034.0 45.2L1033.4 44.8L1032.7 45.1L1032.1 45.0L1031.5 47.6L1030.8 46.5L1030.2 44.2ZM1043.6 41.0L1043.6 40.7L1044.3 37.0L1045.0 37.4L1045.8 38.4L1046.5 40.7L1046.5 41.3L1045.8 43.6L1045.0 44.5L1044.3 45.0L1043.6 41.3ZM1049.9 41.0L1049.9 37.1L1050.5 36.6L1051.2 36.8L1051.8 36.7L1052.5 36.7L1053.1 37.0L1053.8 36.7L1054.4 36.7L1055.1 36.2L1055.7 36.9L1056.4 36.5L1057.0 36.5L1057.0 45.5L1056.4 45.4L1055.7 45.0L1055.1 45.7L1054.4 45.3L1053.8 45.3L1053.1 45.0L1052.5 45.2L1051.8 45.3L1051.2 45.2L1050.5 45.4L1049.9 44.8ZM1059.0 41.0L1059.0 40.7L1059.6 37.5L1060.3 36.4L1060.9 36.0L1061.5 37.2L1062.2 37.1L1062.8 37.4L1063.4 37.5L1064.1 38.0L1064.7 38.3L1065.4 38.5L1066.0 38.6L1066.6 38.9L1067.3 39.5L1067.9 39.8L1068.5 40.0L1069.2 40.4L1069.8 40.7L1069.8 41.3L1069.2 41.5L1068.5 41.9L1067.9 42.2L1067.3 42.5L1066.6 43.0L1066.0 43.3L1065.4 43.4L1064.7 43.7L1064.1 44.0L1063.4 44.5L1062.8 44.5L1062.2 44.8L1061.5 44.7L1060.9 45.9L1060.3 45.5L1059.6 44.5L1059.0 41.3ZM1071.7 41.0L1071.7 40.7L1072.3 37.4L1072.9 37.1L1073.6 37.5L1074.2 37.5L1074.8 38.6L1075.4 36.9L1076.0 37.1L1076.7 36.5L1077.3 36.8L1077.9 36.2L1078.5 36.8L1079.1 36.4L1079.7 37.9L1080.4 38.6L1081.0 39.8L1081.6 40.4L1081.6 41.5L1081.0 42.2L1080.4 43.4L1079.7 44.1L1079.1 45.5L1078.5 45.2L1077.9 45.8L1077.3 45.1L1076.7 45.4L1076.0 44.9L1075.4 45.0L1074.8 43.3L1074.2 44.5L1073.6 44.5L1072.9 44.9L1072.3 44.6L1071.7 41.3ZM1083.2 41.0L1083.2 40.7L1083.8 37.8L1084.4 38.6L1085.1 39.2L1085.7 39.8L1086.3 40.7L1086.3 41.3L1085.7 42.2L1085.1 42.7L1084.4 43.4L1083.8 44.2L1083.2 41.3ZM1086.5 41.0L1086.5 40.7L1087.2 36.8L1087.9 36.8L1088.7 37.7L1089.4 38.4L1090.1 40.7L1090.1 41.3L1089.4 43.6L1088.7 44.3L1087.9 45.2L1087.2 45.2L1086.5 41.3ZM1093.5 41.0L1093.5 40.7L1094.2 36.7L1094.9 37.0L1095.7 37.5L1096.4 38.6L1097.1 40.7L1097.1 41.3L1096.4 43.4L1095.7 44.5L1094.9 45.0L1094.2 45.3L1093.5 41.3ZM1099.9 41.0L1099.9 40.7L1100.5 37.6L1101.1 38.3L1101.7 38.7L1102.3 40.7L1102.3 41.3L1101.7 43.3L1101.1 43.7L1100.5 44.4L1099.9 41.3ZM1104.8 41.0L1104.8 40.7L1105.5 37.8L1106.1 37.0L1106.8 36.4L1107.4 36.6L1108.0 37.5L1108.7 40.7L1108.7 41.3L1108.0 44.5L1107.4 45.4L1106.8 45.5L1106.1 44.9L1105.5 44.2L1104.8 41.3ZM1108.7 41.0L1108.7 40.7L1109.4 37.5L1110.0 36.3L1110.7 36.0L1111.4 36.2L1112.0 37.1L1112.7 40.7L1112.7 41.3L1112.0 44.8L1111.4 45.8L1110.7 46.0L1110.0 45.6L1109.4 44.4L1108.7 41.3ZM1112.7 41.0L1112.7 40.7L1113.4 37.2L1114.1 36.9L1114.7 36.5L1115.4 37.2L1116.1 40.7L1116.1 41.3L1115.4 44.8L1114.7 45.5L1114.1 45.1L1113.4 44.7L1112.7 41.3ZM1118.1 41.0L1118.1 40.7L1118.7 37.1L1119.3 37.2L1119.9 38.1L1120.5 38.9L1121.1 40.7L1121.1 41.3L1120.5 43.0L1119.9 43.9L1119.3 44.7L1118.7 44.8L1118.1 41.3ZM1123.8 41.0L1123.8 40.7L1124.4 37.1L1125.0 37.1L1125.6 37.2L1126.2 37.7L1126.8 38.9L1127.4 40.7L1127.4 41.3L1126.8 43.0L1126.2 44.3L1125.6 44.8L1125.0 44.8L1124.4 44.9L1123.8 41.3ZM1128.7 41.0L1128.7 37.6L1129.3 35.7L1130.0 33.9L1130.6 36.8L1131.2 36.7L1131.9 37.3L1132.5 36.7L1133.1 37.1L1133.8 37.2L1134.4 37.2L1135.0 37.7L1135.7 38.0L1136.3 37.9L1136.9 38.0L1137.6 38.0L1138.2 38.0L1138.8 38.2L1139.5 38.4L1140.1 38.3L1140.1 43.6L1139.5 43.6L1138.8 43.7L1138.2 44.0L1137.6 43.9L1136.9 44.0L1136.3 44.1L1135.7 44.0L1135.0 44.2L1134.4 44.7L1133.8 44.7L1133.1 44.8L1132.5 45.2L1131.9 44.7L1131.2 45.2L1130.6 45.2L1130.0 48.0L1129.3 46.3L1128.7 44.3ZM1142.1 41.0L1142.1 40.7L1142.8 37.5L1143.5 37.9L1144.3 38.4L1145.0 40.7L1145.0 41.3L1144.3 43.6L1143.5 44.1L1142.8 44.5L1142.1 41.3ZM1148.4 41.0L1148.4 37.3L1149.0 36.6L1149.7 37.2L1150.3 36.5L1151.0 37.0L1151.6 36.5L1152.3 36.5L1152.9 36.3L1153.6 36.7L1154.2 37.0L1154.9 37.1L1155.5 36.4L1155.5 45.6L1154.9 44.8L1154.2 44.9L1153.6 45.3L1152.9 45.6L1152.3 45.4L1151.6 45.4L1151.0 44.9L1150.3 45.4L1149.7 44.8L1149.0 45.3L1148.4 44.6ZM1157.5 41.0L1157.5 40.7L1158.1 37.2L1158.8 36.2L1159.4 36.7L1160.0 37.0L1160.7 36.8L1161.3 37.3L1161.9 37.3L1162.6 38.0L1163.2 38.4L1163.9 38.5L1164.5 38.6L1165.1 39.2L1165.8 39.6L1166.4 39.9L1167.0 40.0L1167.7 40.4L1168.3 40.7L1168.3 41.3L1167.7 41.5L1167.0 42.0L1166.4 42.1L1165.8 42.4L1165.1 42.8L1164.5 43.3L1163.9 43.4L1163.2 43.5L1162.6 43.9L1161.9 44.6L1161.3 44.6L1160.7 45.2L1160.0 44.9L1159.4 45.2L1158.8 45.7L1158.1 44.8L1157.5 41.3ZM1170.2 41.0L1170.2 40.7L1170.8 37.6L1171.4 37.1L1172.1 36.9L1172.7 37.3L1173.3 38.3L1173.9 36.5L1174.5 36.2L1175.2 36.8L1175.8 36.6L1176.4 36.7L1177.0 36.1L1177.6 36.5L1178.2 37.9L1178.9 38.7L1179.5 39.8L1180.1 40.5L1180.1 41.5L1179.5 42.1L1178.9 43.2L1178.2 44.0L1177.6 45.4L1177.0 45.8L1176.4 45.3L1175.8 45.4L1175.2 45.1L1174.5 45.8L1173.9 45.4L1173.3 43.7L1172.7 44.7L1172.1 45.0L1171.4 44.9L1170.8 44.3L1170.2 41.3ZM1181.7 41.0L1181.7 40.7L1182.3 37.9L1182.9 38.2L1183.6 39.2L1184.2 39.9L1184.8 40.7L1184.8 41.3L1184.2 42.1L1183.6 42.7L1182.9 43.8L1182.3 44.1L1181.7 41.3ZM1185.0 41.0L1185.0 40.7L1185.7 36.8L1186.4 37.4L1187.2 37.7L1187.9 38.4L1188.6 40.7L1188.6 41.3L1187.9 43.5L1187.2 44.2L1186.4 44.6L1185.7 45.1L1185.0 41.3ZM1192.0 41.0L1192.0 40.7L1192.7 36.7L1193.4 37.2L1194.2 37.8L1194.9 38.4L1195.6 40.7L1195.6 41.3L1194.9 43.6L1194.2 44.1L1193.4 44.8L1192.7 45.3L1192.0 41.3ZM1198.4 41.0L1198.4 40.7L1199.0 37.6L1199.6 38.0L1200.2 38.9L1200.8 40.7L1200.8 41.3L1200.2 43.1L1199.6 43.9L1199.0 44.3L1198.4 41.3Z" fill="#380a4c"/></svg><b>Bass Guitar</b></div><div class="clip" style="left:196.0px;top:167.1px;width:221.2px;height:54.5px;background:#3535b0"><svg width="221.2" height="54.5"><path d="M0 13.7H221.2M0 41.0H221.2" stroke="#0c0c48" stroke-width="1" stroke-opacity="0.45"/><path d="M5.3 13.7L5.3 13.4L6.0 12.7L6.7 11.7L7.4 12.7L8.1 13.4L8.1 14.0L7.4 14.7L6.7 15.7L6.0 14.7L5.3 14.0ZM11.7 13.7L11.7 13.4L12.2 13.0L12.8 12.3L13.4 13.0L14.0 13.4L14.0 14.0L13.4 14.4L12.8 15.1L12.2 14.4L11.7 14.0ZM16.6 13.7L16.6 13.4L17.2 12.6L17.9 11.5L18.5 10.4L19.1 10.4L19.8 11.5L20.4 12.6L21.0 13.4L21.0 14.0L20.4 14.8L19.8 15.9L19.1 17.0L18.5 17.0L17.9 15.9L17.2 14.8L16.6 14.0ZM24.0 13.7L24.0 13.4L24.5 13.0L25.1 12.3L25.7 13.0L26.3 13.4L26.3 14.0L25.7 14.4L25.1 15.1L24.5 14.4L24.0 14.0ZM29.9 13.7L29.9 13.4L30.6 12.7L31.3 11.7L32.0 12.7L32.7 13.4L32.7 14.0L32.0 14.7L31.3 15.7L30.6 14.7L29.9 14.0ZM36.3 13.7L36.3 13.4L36.8 13.0L37.4 12.3L38.0 13.0L38.6 13.4L38.6 14.0L38.0 14.4L37.4 15.1L36.8 14.4L36.3 14.0ZM41.2 13.7L41.2 13.4L41.9 12.9L42.5 12.0L43.1 11.1L43.7 11.1L44.4 12.0L45.0 12.9L45.6 13.4L45.6 14.0L45.0 14.6L44.4 15.4L43.7 16.3L43.1 16.3L42.5 15.4L41.9 14.6L41.2 14.0ZM48.6 13.7L48.6 13.4L49.2 13.0L49.7 12.3L50.3 13.0L50.9 13.4L50.9 14.0L50.3 14.4L49.7 15.1L49.2 14.4L48.6 14.0ZM54.5 13.7L54.5 13.4L55.2 12.7L55.9 11.7L56.6 12.7L57.3 13.4L57.3 14.0L56.6 14.7L55.9 15.7L55.2 14.7L54.5 14.0ZM60.9 13.7L60.9 13.4L61.5 13.0L62.0 12.3L62.6 13.0L63.2 13.4L63.2 14.0L62.6 14.4L62.0 15.1L61.5 14.4L60.9 14.0ZM65.8 13.7L65.8 13.4L66.5 12.9L67.1 12.0L67.7 11.1L68.4 11.1L69.0 12.0L69.6 12.9L70.2 13.4L70.2 14.0L69.6 14.6L69.0 15.4L68.4 16.3L67.7 16.3L67.1 15.4L66.5 14.6L65.8 14.0ZM73.2 13.7L73.2 13.4L73.8 13.0L74.4 12.3L74.9 13.0L75.5 13.4L75.5 14.0L74.9 14.4L74.4 15.1L73.8 14.4L73.2 14.0ZM79.2 13.7L79.2 13.4L79.9 12.7L80.6 11.7L81.3 12.7L82.0 13.4L82.0 14.0L81.3 14.7L80.6 15.7L79.9 14.7L79.2 14.0ZM85.5 13.7L85.5 13.4L86.1 13.0L86.7 12.3L87.2 13.0L87.8 13.4L87.8 14.0L87.2 14.4L86.7 15.1L86.1 14.4L85.5 14.0ZM90.5 13.7L90.5 13.4L91.1 12.7L91.7 11.7L92.4 10.7L93.0 10.7L93.6 11.7L94.2 12.7L94.9 13.4L94.9 14.0L94.2 14.7L93.6 15.8L93.0 16.8L92.4 16.8L91.7 15.8L91.1 14.7L90.5 14.0ZM97.8 13.7L97.8 13.4L98.4 13.0L99.0 12.3L99.5 13.0L100.1 13.4L100.1 14.0L99.5 14.4L99.0 15.1L98.4 14.4L97.8 14.0ZM103.8 13.7L103.8 13.4L104.5 12.7L105.2 11.7L105.9 12.7L106.6 13.4L106.6 14.0L105.9 14.7L105.2 15.7L104.5 14.7L103.8 14.0ZM110.1 13.7L110.1 13.4L110.7 13.0L111.3 12.3L111.9 13.0L112.4 13.4L112.4 14.0L111.9 14.4L111.3 15.1L110.7 14.4L110.1 14.0ZM115.1 13.7L115.1 13.4L115.7 12.7L116.3 11.7L117.0 10.6L117.6 10.6L118.2 11.7L118.9 12.7L119.5 13.4L119.5 14.0L118.9 14.8L118.2 15.8L117.6 16.8L117.0 16.8L116.3 15.8L115.7 14.8L115.1 14.0ZM122.4 13.7L122.4 13.4L123.0 13.0L123.6 12.3L124.2 13.0L124.7 13.4L124.7 14.0L124.2 14.4L123.6 15.1L123.0 14.4L122.4 14.0ZM128.4 13.7L128.4 13.4L129.1 12.7L129.8 11.7L130.5 12.7L131.2 13.4L131.2 14.0L130.5 14.7L129.8 15.7L129.1 14.7L128.4 14.0ZM134.8 13.7L134.8 13.4L135.3 13.0L135.9 12.3L136.5 13.0L137.1 13.4L137.1 14.0L136.5 14.4L135.9 15.1L135.3 14.4L134.8 14.0ZM139.7 13.7L139.7 13.4L140.3 12.7L141.0 11.7L141.6 10.6L142.2 10.6L142.9 11.7L143.5 12.7L144.1 13.4L144.1 14.0L143.5 14.8L142.9 15.8L142.2 16.8L141.6 16.8L141.0 15.8L140.3 14.8L139.7 14.0ZM147.1 13.7L147.1 13.4L147.6 13.0L148.2 12.3L148.8 13.0L149.4 13.4L149.4 14.0L148.8 14.4L148.2 15.1L147.6 14.4L147.1 14.0ZM153.0 13.7L153.0 13.4L153.7 12.7L154.4 11.7L155.1 12.7L155.8 13.4L155.8 14.0L155.1 14.7L154.4 15.7L153.7 14.7L153.0 14.0ZM159.4 13.7L159.4 13.4L159.9 13.0L160.5 12.3L161.1 13.0L161.7 13.4L161.7 14.0L161.1 14.4L160.5 15.1L159.9 14.4L159.4 14.0ZM164.3 13.7L164.3 13.4L165.0 12.8L165.6 11.8L166.2 10.9L166.8 10.9L167.5 11.8L168.1 12.8L168.7 13.4L168.7 14.0L168.1 14.7L167.5 15.6L166.8 16.6L166.2 16.6L165.6 15.6L165.0 14.7L164.3 14.0ZM171.7 13.7L171.7 13.4L172.3 13.1L172.8 12.6L173.4 13.1L174.0 13.4L174.0 14.0L173.4 14.3L172.8 14.9L172.3 14.3L171.7 14.0ZM177.6 13.7L177.6 13.4L178.3 13.1L179.0 12.4L179.7 13.1L180.4 13.4L180.4 14.0L179.7 14.4L179.0 15.0L178.3 14.4L177.6 14.0ZM184.0 13.7L184.0 13.4L184.6 13.4L185.1 13.0L185.7 13.4L186.3 13.4L186.3 14.0L185.7 14.1L185.1 14.4L184.6 14.1L184.0 14.0ZM188.9 13.7L188.9 13.4L189.6 13.4L190.2 13.0L190.8 12.7L191.5 12.7L192.1 13.0L192.7 13.4L193.3 13.4L193.3 14.0L192.7 14.1L192.1 14.4L191.5 14.8L190.8 14.8L190.2 14.4L189.6 14.1L188.9 14.0ZM196.3 13.7L196.3 13.4L196.9 13.4L197.5 13.4L198.0 13.4L198.6 13.4L198.6 14.0L198.0 14.0L197.5 14.1L196.9 14.0L196.3 14.0ZM6.0 9.2h1.0v9.0h-1.0ZM12.2 11.2h1.0v5.1h-1.0ZM18.3 9.9h1.0v7.7h-1.0ZM24.5 11.7h1.0v4.1h-1.0ZM30.6 9.6h1.0v8.3h-1.0ZM36.8 12.1h1.0v3.3h-1.0ZM42.9 9.5h1.0v8.5h-1.0ZM49.1 11.2h1.0v5.0h-1.0ZM55.2 10.4h1.0v6.6h-1.0ZM61.4 11.7h1.0v4.0h-1.0ZM67.5 9.8h1.0v7.8h-1.0ZM73.7 11.8h1.0v3.8h-1.0ZM79.9 10.1h1.0v7.3h-1.0ZM86.0 11.0h1.0v5.4h-1.0ZM92.2 9.9h1.0v7.7h-1.0ZM98.3 11.4h1.0v4.6h-1.0ZM104.5 9.5h1.0v8.4h-1.0ZM110.6 12.0h1.0v3.5h-1.0ZM116.8 9.5h1.0v8.5h-1.0ZM122.9 11.3h1.0v4.9h-1.0ZM129.1 10.3h1.0v6.8h-1.0ZM135.3 11.6h1.0v4.2h-1.0ZM141.4 9.0h1.0v9.4h-1.0ZM147.6 11.8h1.0v3.9h-1.0ZM153.7 10.0h1.0v7.4h-1.0ZM159.9 11.1h1.0v5.2h-1.0ZM166.0 8.9h1.0v9.6h-1.0ZM172.2 12.2h1.0v3.1h-1.0ZM178.3 10.8h1.0v5.8h-1.0ZM184.5 12.9h1.0v1.6h-1.0ZM190.6 12.3h1.0v2.8h-1.0ZM196.8 13.2h1.0v1.1h-1.0ZM5.3 41.0L5.3 40.7L6.0 40.1L6.7 39.2L7.4 40.1L8.1 40.7L8.1 41.3L7.4 41.9L6.7 42.8L6.0 41.9L5.3 41.3ZM11.7 41.0L11.7 40.7L12.2 40.3L12.8 39.7L13.4 40.3L14.0 40.7L14.0 41.3L13.4 41.6L12.8 42.2L12.2 41.6L11.7 41.3ZM16.6 41.0L16.6 40.7L17.2 40.0L17.9 39.0L18.5 38.0L19.1 38.0L19.8 39.0L20.4 40.0L21.0 40.7L21.0 41.3L20.4 42.0L19.8 43.0L19.1 44.0L18.5 44.0L17.9 43.0L17.2 42.0L16.6 41.3ZM24.0 41.0L24.0 40.7L24.5 40.3L25.1 39.7L25.7 40.3L26.3 40.7L26.3 41.3L25.7 41.6L25.1 42.2L24.5 41.6L24.0 41.3ZM29.9 41.0L29.9 40.7L30.6 40.1L31.3 39.2L32.0 40.1L32.7 40.7L32.7 41.3L32.0 41.9L31.3 42.8L30.6 41.9L29.9 41.3ZM36.3 41.0L36.3 40.7L36.8 40.3L37.4 39.7L38.0 40.3L38.6 40.7L38.6 41.3L38.0 41.6L37.4 42.2L36.8 41.6L36.3 41.3ZM41.2 41.0L41.2 40.7L41.9 40.2L42.5 39.4L43.1 38.7L43.7 38.7L44.4 39.4L45.0 40.2L45.6 40.7L45.6 41.3L45.0 41.7L44.4 42.5L43.7 43.3L43.1 43.3L42.5 42.5L41.9 41.7L41.2 41.3ZM48.6 41.0L48.6 40.7L49.2 40.3L49.7 39.7L50.3 40.3L50.9 40.7L50.9 41.3L50.3 41.6L49.7 42.2L49.2 41.6L48.6 41.3ZM54.5 41.0L54.5 40.7L55.2 40.1L55.9 39.2L56.6 40.1L57.3 40.7L57.3 41.3L56.6 41.9L55.9 42.8L55.2 41.9L54.5 41.3ZM60.9 41.0L60.9 40.7L61.5 40.3L62.0 39.7L62.6 40.3L63.2 40.7L63.2 41.3L62.6 41.6L62.0 42.2L61.5 41.6L60.9 41.3ZM65.8 41.0L65.8 40.7L66.5 40.2L67.1 39.4L67.7 38.7L68.4 38.7L69.0 39.4L69.6 40.2L70.2 40.7L70.2 41.3L69.6 41.7L69.0 42.5L68.4 43.3L67.7 43.3L67.1 42.5L66.5 41.7L65.8 41.3ZM73.2 41.0L73.2 40.7L73.8 40.3L74.4 39.7L74.9 40.3L75.5 40.7L75.5 41.3L74.9 41.6L74.4 42.2L73.8 41.6L73.2 41.3ZM79.2 41.0L79.2 40.7L79.9 40.1L80.6 39.2L81.3 40.1L82.0 40.7L82.0 41.3L81.3 41.9L80.6 42.8L79.9 41.9L79.2 41.3ZM85.5 41.0L85.5 40.7L86.1 40.3L86.7 39.7L87.2 40.3L87.8 40.7L87.8 41.3L87.2 41.6L86.7 42.2L86.1 41.6L85.5 41.3ZM90.5 41.0L90.5 40.7L91.1 40.1L91.7 39.1L92.4 38.2L93.0 38.2L93.6 39.1L94.2 40.1L94.9 40.7L94.9 41.3L94.2 41.9L93.6 42.8L93.0 43.7L92.4 43.7L91.7 42.8L91.1 41.9L90.5 41.3ZM97.8 41.0L97.8 40.7L98.4 40.3L99.0 39.7L99.5 40.3L100.1 40.7L100.1 41.3L99.5 41.6L99.0 42.2L98.4 41.6L97.8 41.3ZM103.8 41.0L103.8 40.7L104.5 40.1L105.2 39.2L105.9 40.1L106.6 40.7L106.6 41.3L105.9 41.9L105.2 42.8L104.5 41.9L103.8 41.3ZM110.1 41.0L110.1 40.7L110.7 40.3L111.3 39.7L111.9 40.3L112.4 40.7L112.4 41.3L111.9 41.6L111.3 42.2L110.7 41.6L110.1 41.3ZM115.1 41.0L115.1 40.7L115.7 40.0L116.3 39.1L117.0 38.2L117.6 38.2L118.2 39.1L118.9 40.0L119.5 40.7L119.5 41.3L118.9 41.9L118.2 42.8L117.6 43.8L117.0 43.8L116.3 42.8L115.7 41.9L115.1 41.3ZM122.4 41.0L122.4 40.7L123.0 40.3L123.6 39.7L124.2 40.3L124.7 40.7L124.7 41.3L124.2 41.6L123.6 42.2L123.0 41.6L122.4 41.3ZM128.4 41.0L128.4 40.7L129.1 40.1L129.8 39.2L130.5 40.1L131.2 40.7L131.2 41.3L130.5 41.9L129.8 42.8L129.1 41.9L128.4 41.3ZM134.8 41.0L134.8 40.7L135.3 40.3L135.9 39.7L136.5 40.3L137.1 40.7L137.1 41.3L136.5 41.6L135.9 42.2L135.3 41.6L134.8 41.3ZM139.7 41.0L139.7 40.7L140.3 40.0L141.0 39.1L141.6 38.2L142.2 38.2L142.9 39.1L143.5 40.0L144.1 40.7L144.1 41.3L143.5 41.9L142.9 42.8L142.2 43.8L141.6 43.8L141.0 42.8L140.3 41.9L139.7 41.3ZM147.1 41.0L147.1 40.7L147.6 40.3L148.2 39.7L148.8 40.3L149.4 40.7L149.4 41.3L148.8 41.6L148.2 42.2L147.6 41.6L147.1 41.3ZM153.0 41.0L153.0 40.7L153.7 40.1L154.4 39.2L155.1 40.1L155.8 40.7L155.8 41.3L155.1 41.9L154.4 42.8L153.7 41.9L153.0 41.3ZM159.4 41.0L159.4 40.7L159.9 40.3L160.5 39.7L161.1 40.3L161.7 40.7L161.7 41.3L161.1 41.6L160.5 42.2L159.9 41.6L159.4 41.3ZM164.3 41.0L164.3 40.7L165.0 40.1L165.6 39.3L166.2 38.4L166.8 38.4L167.5 39.3L168.1 40.1L168.7 40.7L168.7 41.3L168.1 41.8L167.5 42.7L166.8 43.6L166.2 43.6L165.6 42.7L165.0 41.8L164.3 41.3ZM171.7 41.0L171.7 40.7L172.3 40.4L172.8 39.9L173.4 40.4L174.0 40.7L174.0 41.3L173.4 41.5L172.8 42.0L172.3 41.5L171.7 41.3ZM177.6 41.0L177.6 40.7L178.3 40.4L179.0 39.8L179.7 40.4L180.4 40.7L180.4 41.3L179.7 41.6L179.0 42.2L178.3 41.6L177.6 41.3ZM184.0 41.0L184.0 40.7L184.6 40.7L185.1 40.4L185.7 40.7L186.3 40.7L186.3 41.3L185.7 41.3L185.1 41.6L184.6 41.3L184.0 41.3ZM188.9 41.0L188.9 40.7L189.6 40.7L190.2 40.3L190.8 40.0L191.5 40.0L192.1 40.3L192.7 40.7L193.3 40.7L193.3 41.3L192.7 41.3L192.1 41.6L191.5 41.9L190.8 41.9L190.2 41.6L189.6 41.3L188.9 41.3ZM196.3 41.0L196.3 40.7L196.9 40.7L197.5 40.7L198.0 40.7L198.6 40.7L198.6 41.3L198.0 41.3L197.5 41.3L196.9 41.3L196.3 41.3ZM6.0 36.9h1.0v8.1h-1.0ZM12.2 38.7h1.0v4.6h-1.0ZM18.3 37.5h1.0v6.9h-1.0ZM24.5 39.1h1.0v3.7h-1.0ZM30.6 37.3h1.0v7.4h-1.0ZM36.8 39.5h1.0v3.0h-1.0ZM42.9 37.1h1.0v7.7h-1.0ZM49.1 38.7h1.0v4.5h-1.0ZM55.2 38.0h1.0v6.0h-1.0ZM61.4 39.2h1.0v3.6h-1.0ZM67.5 37.5h1.0v7.0h-1.0ZM73.7 39.3h1.0v3.4h-1.0ZM79.9 37.7h1.0v6.6h-1.0ZM86.0 38.6h1.0v4.8h-1.0ZM92.2 37.5h1.0v6.9h-1.0ZM98.3 38.9h1.0v4.1h-1.0ZM104.5 37.2h1.0v7.5h-1.0ZM110.6 39.4h1.0v3.1h-1.0ZM116.8 37.2h1.0v7.6h-1.0ZM122.9 38.8h1.0v4.4h-1.0ZM129.1 37.9h1.0v6.1h-1.0ZM135.3 39.1h1.0v3.8h-1.0ZM141.4 36.7h1.0v8.5h-1.0ZM147.6 39.2h1.0v3.5h-1.0ZM153.7 37.6h1.0v6.7h-1.0ZM159.9 38.6h1.0v4.7h-1.0ZM166.0 36.7h1.0v8.6h-1.0ZM172.2 39.6h1.0v2.8h-1.0ZM178.3 38.4h1.0v5.2h-1.0ZM184.5 40.3h1.0v1.4h-1.0ZM190.6 39.7h1.0v2.5h-1.0ZM196.8 40.5h1.0v1.0h-1.0Z" fill="#0c0c48"/></svg><b>Beats</b></div><div class="clip" style="left:590.0px;top:167.1px;width:612.0px;height:54.5px;background:#3535b0"><svg width="612.0" height="54.5"><path d="M0 13.7H612.0M0 41.0H612.0" stroke="#0c0c48" stroke-width="1" stroke-opacity="0.45"/><path d="M5.1 13.7L5.1 13.4L5.8 12.7L6.5 11.7L7.2 12.7L7.9 13.4L7.9 14.0L7.2 14.7L6.5 15.7L5.8 14.7L5.1 14.0ZM11.5 13.7L11.5 13.4L12.0 13.0L12.6 12.3L13.2 13.0L13.8 13.4L13.8 14.0L13.2 14.4L12.6 15.1L12.0 14.4L11.5 14.0ZM16.4 13.7L16.4 13.4L17.0 12.7L17.7 11.6L18.3 10.6L18.9 10.6L19.6 11.6L20.2 12.7L20.8 13.4L20.8 14.0L20.2 14.8L19.6 15.8L18.9 16.8L18.3 16.8L17.7 15.8L17.0 14.8L16.4 14.0ZM23.8 13.7L23.8 13.4L24.3 13.0L24.9 12.3L25.5 13.0L26.1 13.4L26.1 14.0L25.5 14.4L24.9 15.1L24.3 14.4L23.8 14.0ZM29.7 13.7L29.7 13.4L30.4 12.7L31.1 11.7L31.8 12.7L32.5 13.4L32.5 14.0L31.8 14.7L31.1 15.7L30.4 14.7L29.7 14.0ZM36.1 13.7L36.1 13.4L36.6 13.0L37.2 12.3L37.8 13.0L38.4 13.4L38.4 14.0L37.8 14.4L37.2 15.1L36.6 14.4L36.1 14.0ZM41.0 13.7L41.0 13.4L41.7 12.6L42.3 11.4L42.9 10.3L43.5 10.3L44.2 11.4L44.8 12.6L45.4 13.4L45.4 14.0L44.8 14.9L44.2 16.0L43.5 17.2L42.9 17.2L42.3 16.0L41.7 14.9L41.0 14.0ZM48.4 13.7L48.4 13.4L49.0 13.0L49.5 12.3L50.1 13.0L50.7 13.4L50.7 14.0L50.1 14.4L49.5 15.1L49.0 14.4L48.4 14.0ZM54.3 13.7L54.3 13.4L55.0 12.7L55.7 11.7L56.4 12.7L57.1 13.4L57.1 14.0L56.4 14.7L55.7 15.7L55.0 14.7L54.3 14.0ZM60.7 13.7L60.7 13.4L61.3 13.0L61.8 12.3L62.4 13.0L63.0 13.4L63.0 14.0L62.4 14.4L61.8 15.1L61.3 14.4L60.7 14.0ZM65.6 13.7L65.6 13.4L66.3 12.8L66.9 11.8L67.5 10.9L68.2 10.9L68.8 11.8L69.4 12.8L70.0 13.4L70.0 14.0L69.4 14.7L68.8 15.6L68.2 16.5L67.5 16.5L66.9 15.6L66.3 14.7L65.6 14.0ZM73.0 13.7L73.0 13.4L73.6 13.0L74.2 12.3L74.7 13.0L75.3 13.4L75.3 14.0L74.7 14.4L74.2 15.1L73.6 14.4L73.0 14.0ZM79.0 13.7L79.0 13.4L79.7 12.7L80.4 11.7L81.1 12.7L81.8 13.4L81.8 14.0L81.1 14.7L80.4 15.7L79.7 14.7L79.0 14.0ZM85.3 13.7L85.3 13.4L85.9 13.0L86.5 12.3L87.0 13.0L87.6 13.4L87.6 14.0L87.0 14.4L86.5 15.1L85.9 14.4L85.3 14.0ZM90.3 13.7L90.3 13.4L90.9 12.8L91.5 11.8L92.2 10.8L92.8 10.8L93.4 11.8L94.0 12.8L94.7 13.4L94.7 14.0L94.0 14.7L93.4 15.7L92.8 16.6L92.2 16.6L91.5 15.7L90.9 14.7L90.3 14.0ZM97.6 13.7L97.6 13.4L98.2 13.0L98.8 12.3L99.3 13.0L99.9 13.4L99.9 14.0L99.3 14.4L98.8 15.1L98.2 14.4L97.6 14.0ZM103.6 13.7L103.6 13.4L104.3 12.7L105.0 11.7L105.7 12.7L106.4 13.4L106.4 14.0L105.7 14.7L105.0 15.7L104.3 14.7L103.6 14.0ZM109.9 13.7L109.9 13.4L110.5 13.0L111.1 12.3L111.7 13.0L112.2 13.4L112.2 14.0L111.7 14.4L111.1 15.1L110.5 14.4L109.9 14.0ZM114.9 13.7L114.9 13.4L115.5 12.5L116.1 11.3L116.8 10.2L117.4 10.2L118.0 11.3L118.7 12.5L119.3 13.4L119.3 14.0L118.7 14.9L118.0 16.1L117.4 17.3L116.8 17.3L116.1 16.1L115.5 14.9L114.9 14.0ZM122.2 13.7L122.2 13.4L122.8 13.0L123.4 12.3L124.0 13.0L124.5 13.4L124.5 14.0L124.0 14.4L123.4 15.1L122.8 14.4L122.2 14.0ZM128.2 13.7L128.2 13.4L128.9 12.7L129.6 11.7L130.3 12.7L131.0 13.4L131.0 14.0L130.3 14.7L129.6 15.7L128.9 14.7L128.2 14.0ZM134.6 13.7L134.6 13.4L135.1 13.0L135.7 12.3L136.3 13.0L136.9 13.4L136.9 14.0L136.3 14.4L135.7 15.1L135.1 14.4L134.6 14.0ZM139.5 13.7L139.5 13.4L140.1 12.7L140.8 11.6L141.4 10.6L142.0 10.6L142.7 11.6L143.3 12.7L143.9 13.4L143.9 14.0L143.3 14.8L142.7 15.8L142.0 16.9L141.4 16.9L140.8 15.8L140.1 14.8L139.5 14.0ZM146.9 13.7L146.9 13.4L147.4 13.1L148.0 12.4L148.6 13.1L149.2 13.4L149.2 14.0L148.6 14.4L148.0 15.1L147.4 14.4L146.9 14.0ZM152.8 13.7L152.8 13.4L153.5 13.0L154.2 12.2L154.9 13.0L155.6 13.4L155.6 14.0L154.9 14.5L154.2 15.3L153.5 14.5L152.8 14.0ZM159.2 13.7L159.2 13.4L159.7 13.3L160.3 12.9L160.9 13.3L161.5 13.4L161.5 14.0L160.9 14.1L160.3 14.6L159.7 14.1L159.2 14.0ZM164.1 13.7L164.1 13.4L164.8 13.3L165.4 12.9L166.0 12.5L166.6 12.5L167.3 12.9L167.9 13.3L168.5 13.4L168.5 14.0L167.9 14.1L167.3 14.5L166.6 14.9L166.0 14.9L165.4 14.5L164.8 14.1L164.1 14.0ZM171.5 13.7L171.5 13.4L172.1 13.4L172.6 13.4L173.2 13.4L173.8 13.4L173.8 14.0L173.2 14.0L172.6 14.1L172.1 14.0L171.5 14.0ZM177.4 13.7L177.4 13.4L178.1 13.4L178.8 13.2L179.5 13.4L180.2 13.4L180.2 14.0L179.5 14.0L178.8 14.2L178.1 14.0L177.4 14.0ZM201.5 13.7L201.5 13.4L202.2 12.7L202.9 11.7L203.6 12.7L204.3 13.4L204.3 14.0L203.6 14.7L202.9 15.7L202.2 14.7L201.5 14.0ZM207.9 13.7L207.9 13.4L208.4 13.0L209.0 12.3L209.6 13.0L210.2 13.4L210.2 14.0L209.6 14.4L209.0 15.1L208.4 14.4L207.9 14.0ZM212.8 13.7L212.8 13.4L213.4 12.7L214.1 11.6L214.7 10.6L215.3 10.6L216.0 11.6L216.6 12.7L217.2 13.4L217.2 14.0L216.6 14.8L216.0 15.8L215.3 16.8L214.7 16.8L214.1 15.8L213.4 14.8L212.8 14.0ZM220.2 13.7L220.2 13.4L220.7 13.0L221.3 12.3L221.9 13.0L222.5 13.4L222.5 14.0L221.9 14.4L221.3 15.1L220.7 14.4L220.2 14.0ZM226.1 13.7L226.1 13.4L226.8 12.7L227.5 11.7L228.2 12.7L228.9 13.4L228.9 14.0L228.2 14.7L227.5 15.7L226.8 14.7L226.1 14.0ZM232.5 13.7L232.5 13.4L233.0 13.0L233.6 12.3L234.2 13.0L234.8 13.4L234.8 14.0L234.2 14.4L233.6 15.1L233.0 14.4L232.5 14.0ZM237.4 13.7L237.4 13.4L238.1 12.6L238.7 11.4L239.3 10.3L239.9 10.3L240.6 11.4L241.2 12.6L241.8 13.4L241.8 14.0L241.2 14.9L240.6 16.0L239.9 17.2L239.3 17.2L238.7 16.0L238.1 14.9L237.4 14.0ZM244.8 13.7L244.8 13.4L245.4 13.0L245.9 12.3L246.5 13.0L247.1 13.4L247.1 14.0L246.5 14.4L245.9 15.1L245.4 14.4L244.8 14.0ZM250.7 13.7L250.7 13.4L251.4 12.7L252.1 11.7L252.8 12.7L253.5 13.4L253.5 14.0L252.8 14.7L252.1 15.7L251.4 14.7L250.7 14.0ZM257.1 13.7L257.1 13.4L257.7 13.0L258.2 12.3L258.8 13.0L259.4 13.4L259.4 14.0L258.8 14.4L258.2 15.1L257.7 14.4L257.1 14.0ZM262.0 13.7L262.0 13.4L262.7 12.8L263.3 11.8L263.9 10.9L264.6 10.9L265.2 11.8L265.8 12.8L266.4 13.4L266.4 14.0L265.8 14.7L265.2 15.6L264.6 16.5L263.9 16.5L263.3 15.6L262.7 14.7L262.0 14.0ZM269.4 13.7L269.4 13.4L270.0 13.0L270.6 12.3L271.1 13.0L271.7 13.4L271.7 14.0L271.1 14.4L270.6 15.1L270.0 14.4L269.4 14.0ZM275.4 13.7L275.4 13.4L276.1 12.7L276.8 11.7L277.5 12.7L278.2 13.4L278.2 14.0L277.5 14.7L276.8 15.7L276.1 14.7L275.4 14.0ZM281.7 13.7L281.7 13.4L282.3 13.0L282.9 12.3L283.4 13.0L284.0 13.4L284.0 14.0L283.4 14.4L282.9 15.1L282.3 14.4L281.7 14.0ZM286.7 13.7L286.7 13.4L287.3 12.8L287.9 11.8L288.6 10.8L289.2 10.8L289.8 11.8L290.4 12.8L291.1 13.4L291.1 14.0L290.4 14.7L289.8 15.7L289.2 16.6L288.6 16.6L287.9 15.7L287.3 14.7L286.7 14.0ZM294.0 13.7L294.0 13.4L294.6 13.0L295.2 12.3L295.7 13.0L296.3 13.4L296.3 14.0L295.7 14.4L295.2 15.1L294.6 14.4L294.0 14.0ZM300.0 13.7L300.0 13.4L300.7 12.7L301.4 11.7L302.1 12.7L302.8 13.4L302.8 14.0L302.1 14.7L301.4 15.7L300.7 14.7L300.0 14.0ZM306.3 13.7L306.3 13.4L306.9 13.0L307.5 12.3L308.1 13.0L308.6 13.4L308.6 14.0L308.1 14.4L307.5 15.1L306.9 14.4L306.3 14.0ZM311.3 13.7L311.3 13.4L311.9 12.5L312.5 11.3L313.2 10.2L313.8 10.2L314.4 11.3L315.1 12.5L315.7 13.4L315.7 14.0L315.1 14.9L314.4 16.1L313.8 17.3L313.2 17.3L312.5 16.1L311.9 14.9L311.3 14.0ZM318.6 13.7L318.6 13.4L319.2 13.0L319.8 12.3L320.4 13.0L320.9 13.4L320.9 14.0L320.4 14.4L319.8 15.1L319.2 14.4L318.6 14.0ZM324.6 13.7L324.6 13.4L325.3 12.7L326.0 11.7L326.7 12.7L327.4 13.4L327.4 14.0L326.7 14.7L326.0 15.7L325.3 14.7L324.6 14.0ZM331.0 13.7L331.0 13.4L331.5 13.0L332.1 12.3L332.7 13.0L333.3 13.4L333.3 14.0L332.7 14.4L332.1 15.1L331.5 14.4L331.0 14.0ZM335.9 13.7L335.9 13.4L336.5 12.7L337.2 11.6L337.8 10.6L338.4 10.6L339.1 11.6L339.7 12.7L340.3 13.4L340.3 14.0L339.7 14.8L339.1 15.8L338.4 16.9L337.8 16.9L337.2 15.8L336.5 14.8L335.9 14.0ZM343.3 13.7L343.3 13.4L343.8 13.0L344.4 12.3L345.0 13.0L345.6 13.4L345.6 14.0L345.0 14.4L344.4 15.1L343.8 14.4L343.3 14.0ZM349.2 13.7L349.2 13.4L349.9 12.7L350.6 11.7L351.3 12.7L352.0 13.4L352.0 14.0L351.3 14.7L350.6 15.7L349.9 14.7L349.2 14.0ZM355.6 13.7L355.6 13.4L356.1 13.0L356.7 12.3L357.3 13.0L357.9 13.4L357.9 14.0L357.3 14.4L356.7 15.1L356.1 14.4L355.6 14.0ZM360.5 13.7L360.5 13.4L361.2 12.8L361.8 11.8L362.4 10.9L363.0 10.9L363.7 11.8L364.3 12.8L364.9 13.4L364.9 14.0L364.3 14.7L363.7 15.6L363.0 16.6L362.4 16.6L361.8 15.6L361.2 14.7L360.5 14.0ZM367.9 13.7L367.9 13.4L368.5 13.0L369.0 12.3L369.6 13.0L370.2 13.4L370.2 14.0L369.6 14.4L369.0 15.1L368.5 14.4L367.9 14.0ZM373.8 13.7L373.8 13.4L374.5 12.7L375.2 11.7L375.9 12.7L376.6 13.4L376.6 14.0L375.9 14.7L375.2 15.7L374.5 14.7L373.8 14.0ZM380.2 13.7L380.2 13.4L380.8 13.0L381.3 12.3L381.9 13.0L382.5 13.4L382.5 14.0L381.9 14.4L381.3 15.1L380.8 14.4L380.2 14.0ZM385.1 13.7L385.1 13.4L385.8 12.8L386.4 11.8L387.0 10.8L387.7 10.8L388.3 11.8L388.9 12.8L389.5 13.4L389.5 14.0L388.9 14.7L388.3 15.7L387.7 16.6L387.0 16.6L386.4 15.7L385.8 14.7L385.1 14.0ZM392.5 13.7L392.5 13.4L393.1 13.0L393.7 12.3L394.2 13.0L394.8 13.4L394.8 14.0L394.2 14.4L393.7 15.1L393.1 14.4L392.5 14.0ZM398.5 13.7L398.5 13.4L399.2 12.7L399.9 11.7L400.6 12.7L401.3 13.4L401.3 14.0L400.6 14.7L399.9 15.7L399.2 14.7L398.5 14.0ZM404.8 13.7L404.8 13.4L405.4 13.0L406.0 12.3L406.5 13.0L407.1 13.4L407.1 14.0L406.5 14.4L406.0 15.1L405.4 14.4L404.8 14.0ZM409.8 13.7L409.8 13.4L410.4 12.8L411.0 11.9L411.7 10.9L412.3 10.9L412.9 11.9L413.5 12.8L414.2 13.4L414.2 14.0L413.5 14.7L412.9 15.6L412.3 16.5L411.7 16.5L411.0 15.6L410.4 14.7L409.8 14.0ZM417.1 13.7L417.1 13.4L417.7 13.0L418.3 12.3L418.8 13.0L419.4 13.4L419.4 14.0L418.8 14.4L418.3 15.1L417.7 14.4L417.1 14.0ZM423.1 13.7L423.1 13.4L423.8 12.7L424.5 11.7L425.2 12.7L425.9 13.4L425.9 14.0L425.2 14.7L424.5 15.7L423.8 14.7L423.1 14.0ZM429.4 13.7L429.4 13.4L430.0 13.0L430.6 12.3L431.2 13.0L431.7 13.4L431.7 14.0L431.2 14.4L430.6 15.1L430.0 14.4L429.4 14.0ZM434.4 13.7L434.4 13.4L435.0 12.8L435.6 11.8L436.3 10.9L436.9 10.9L437.5 11.8L438.2 12.8L438.8 13.4L438.8 14.0L438.2 14.7L437.5 15.6L436.9 16.6L436.3 16.6L435.6 15.6L435.0 14.7L434.4 14.0ZM441.7 13.7L441.7 13.4L442.3 13.0L442.9 12.3L443.5 13.0L444.0 13.4L444.0 14.0L443.5 14.4L442.9 15.1L442.3 14.4L441.7 14.0ZM447.7 13.7L447.7 13.4L448.4 12.7L449.1 11.7L449.8 12.7L450.5 13.4L450.5 14.0L449.8 14.7L449.1 15.7L448.4 14.7L447.7 14.0ZM454.1 13.7L454.1 13.4L454.6 13.0L455.2 12.3L455.8 13.0L456.4 13.4L456.4 14.0L455.8 14.4L455.2 15.1L454.6 14.4L454.1 14.0ZM459.0 13.7L459.0 13.4L459.6 12.5L460.3 11.3L460.9 10.2L461.5 10.2L462.2 11.3L462.8 12.5L463.4 13.4L463.4 14.0L462.8 14.9L462.2 16.1L461.5 17.3L460.9 17.3L460.3 16.1L459.6 14.9L459.0 14.0ZM466.4 13.7L466.4 13.4L466.9 13.0L467.5 12.3L468.1 13.0L468.7 13.4L468.7 14.0L468.1 14.4L467.5 15.1L466.9 14.4L466.4 14.0ZM472.3 13.7L472.3 13.4L473.0 12.7L473.7 11.7L474.4 12.7L475.1 13.4L475.1 14.0L474.4 14.7L473.7 15.7L473.0 14.7L472.3 14.0ZM478.7 13.7L478.7 13.4L479.2 13.0L479.8 12.3L480.4 13.0L481.0 13.4L481.0 14.0L480.4 14.4L479.8 15.1L479.2 14.4L478.7 14.0ZM483.6 13.7L483.6 13.4L484.3 12.7L484.9 11.8L485.5 10.8L486.1 10.8L486.8 11.8L487.4 12.7L488.0 13.4L488.0 14.0L487.4 14.7L486.8 15.7L486.1 16.7L485.5 16.7L484.9 15.7L484.3 14.7L483.6 14.0ZM491.0 13.7L491.0 13.4L491.6 13.0L492.1 12.3L492.7 13.0L493.3 13.4L493.3 14.0L492.7 14.4L492.1 15.1L491.6 14.4L491.0 14.0ZM496.9 13.7L496.9 13.4L497.6 12.7L498.3 11.7L499.0 12.7L499.7 13.4L499.7 14.0L499.0 14.7L498.3 15.7L497.6 14.7L496.9 14.0ZM503.3 13.7L503.3 13.4L503.9 13.0L504.4 12.3L505.0 13.0L505.6 13.4L505.6 14.0L505.0 14.4L504.4 15.1L503.9 14.4L503.3 14.0ZM508.2 13.7L508.2 13.4L508.9 12.7L509.5 11.6L510.1 10.6L510.8 10.6L511.4 11.6L512.0 12.7L512.6 13.4L512.6 14.0L512.0 14.8L511.4 15.8L510.8 16.9L510.1 16.9L509.5 15.8L508.9 14.8L508.2 14.0ZM515.6 13.7L515.6 13.4L516.2 13.0L516.8 12.3L517.3 13.0L517.9 13.4L517.9 14.0L517.3 14.4L516.8 15.1L516.2 14.4L515.6 14.0ZM521.6 13.7L521.6 13.4L522.3 12.7L523.0 11.7L523.7 12.7L524.4 13.4L524.4 14.0L523.7 14.7L523.0 15.7L522.3 14.7L521.6 14.0ZM527.9 13.7L527.9 13.4L528.5 13.0L529.1 12.3L529.6 13.0L530.2 13.4L530.2 14.0L529.6 14.4L529.1 15.1L528.5 14.4L527.9 14.0ZM532.9 13.7L532.9 13.4L533.5 12.7L534.1 11.7L534.8 10.6L535.4 10.6L536.0 11.7L536.6 12.7L537.3 13.4L537.3 14.0L536.6 14.8L536.0 15.8L535.4 16.8L534.8 16.8L534.1 15.8L533.5 14.8L532.9 14.0ZM540.2 13.7L540.2 13.4L540.8 13.0L541.4 12.3L541.9 13.0L542.5 13.4L542.5 14.0L541.9 14.4L541.4 15.1L540.8 14.4L540.2 14.0ZM546.2 13.7L546.2 13.4L546.9 12.7L547.6 11.7L548.3 12.7L549.0 13.4L549.0 14.0L548.3 14.7L547.6 15.7L546.9 14.7L546.2 14.0ZM552.5 13.7L552.5 13.4L553.1 13.0L553.7 12.3L554.3 13.0L554.8 13.4L554.8 14.0L554.3 14.4L553.7 15.1L553.1 14.4L552.5 14.0ZM557.5 13.7L557.5 13.4L558.1 12.8L558.7 11.9L559.4 11.0L560.0 11.0L560.6 11.9L561.3 12.8L561.9 13.4L561.9 14.0L561.3 14.6L560.6 15.6L560.0 16.5L559.4 16.5L558.7 15.6L558.1 14.6L557.5 14.0ZM564.8 13.7L564.8 13.4L565.4 13.0L566.0 12.3L566.6 13.0L567.1 13.4L567.1 14.0L566.6 14.4L566.0 15.1L565.4 14.4L564.8 14.0ZM570.8 13.7L570.8 13.4L571.5 12.7L572.2 11.7L572.9 12.7L573.6 13.4L573.6 14.0L572.9 14.7L572.2 15.7L571.5 14.7L570.8 14.0ZM577.2 13.7L577.2 13.4L577.7 13.0L578.3 12.3L578.9 13.0L579.5 13.4L579.5 14.0L578.9 14.4L578.3 15.1L577.7 14.4L577.2 14.0ZM582.1 13.7L582.1 13.4L582.7 12.9L583.4 12.0L584.0 11.1L584.6 11.1L585.3 12.0L585.9 12.9L586.5 13.4L586.5 14.0L585.9 14.6L585.3 15.5L584.6 16.3L584.0 16.3L583.4 15.5L582.7 14.6L582.1 14.0ZM589.5 13.7L589.5 13.4L590.0 13.3L590.6 12.8L591.2 13.3L591.8 13.4L591.8 14.0L591.2 14.2L590.6 14.7L590.0 14.2L589.5 14.0ZM595.4 13.7L595.4 13.4L596.1 13.2L596.8 12.7L597.5 13.2L598.2 13.4L598.2 14.0L597.5 14.2L596.8 14.7L596.1 14.2L595.4 14.0ZM601.8 13.7L601.8 13.4L602.3 13.4L602.9 13.3L603.5 13.4L604.1 13.4L604.1 14.0L603.5 14.0L602.9 14.2L602.3 14.0L601.8 14.0ZM606.7 13.7L606.7 13.4L607.4 13.4L608.0 13.2L608.6 13.0L609.2 13.0L609.9 13.2L610.5 13.4L611.1 13.4L611.1 14.0L610.5 14.0L609.9 14.2L609.2 14.5L608.6 14.5L608.0 14.2L607.4 14.0L606.7 14.0ZM5.8 10.4h1.0v6.7h-1.0ZM12.0 11.0h1.0v5.5h-1.0ZM18.1 9.5h1.0v8.5h-1.0ZM24.3 11.0h1.0v5.5h-1.0ZM30.4 9.3h1.0v8.9h-1.0ZM36.6 12.1h1.0v3.3h-1.0ZM42.7 9.8h1.0v7.8h-1.0ZM48.9 11.7h1.0v4.0h-1.0ZM55.0 9.9h1.0v7.7h-1.0ZM61.2 11.4h1.0v4.6h-1.0ZM67.3 9.8h1.0v7.8h-1.0ZM73.5 11.0h1.0v5.4h-1.0ZM79.7 10.4h1.0v6.7h-1.0ZM85.8 12.0h1.0v3.4h-1.0ZM92.0 9.7h1.0v8.1h-1.0ZM98.1 11.7h1.0v4.1h-1.0ZM104.3 10.4h1.0v6.7h-1.0ZM110.4 12.1h1.0v3.3h-1.0ZM116.6 9.2h1.0v9.1h-1.0ZM122.7 11.5h1.0v4.4h-1.0ZM128.9 10.4h1.0v6.6h-1.0ZM135.1 11.8h1.0v3.9h-1.0ZM141.2 9.1h1.0v9.2h-1.0ZM147.4 11.7h1.0v4.0h-1.0ZM153.5 11.2h1.0v5.0h-1.0ZM159.7 12.4h1.0v2.7h-1.0ZM165.8 12.0h1.0v3.4h-1.0ZM172.0 13.0h1.0v1.4h-1.0ZM178.1 12.8h1.0v1.9h-1.0ZM202.2 10.4h1.0v6.7h-1.0ZM208.4 11.0h1.0v5.5h-1.0ZM214.5 9.5h1.0v8.5h-1.0ZM220.7 11.0h1.0v5.5h-1.0ZM226.8 9.3h1.0v8.9h-1.0ZM233.0 12.1h1.0v3.3h-1.0ZM239.1 9.8h1.0v7.8h-1.0ZM245.3 11.7h1.0v4.0h-1.0ZM251.4 9.9h1.0v7.7h-1.0ZM257.6 11.4h1.0v4.6h-1.0ZM263.7 9.8h1.0v7.8h-1.0ZM269.9 11.0h1.0v5.4h-1.0ZM276.1 10.4h1.0v6.7h-1.0ZM282.2 12.0h1.0v3.4h-1.0ZM288.4 9.7h1.0v8.1h-1.0ZM294.5 11.7h1.0v4.1h-1.0ZM300.7 10.4h1.0v6.7h-1.0ZM306.8 12.1h1.0v3.3h-1.0ZM313.0 9.2h1.0v9.1h-1.0ZM319.1 11.5h1.0v4.4h-1.0ZM325.3 10.4h1.0v6.6h-1.0ZM331.5 11.8h1.0v3.9h-1.0ZM337.6 9.1h1.0v9.2h-1.0ZM343.8 11.6h1.0v4.2h-1.0ZM349.9 10.5h1.0v6.5h-1.0ZM356.1 11.5h1.0v4.5h-1.0ZM362.2 9.7h1.0v8.0h-1.0ZM368.4 11.0h1.0v5.4h-1.0ZM374.5 9.9h1.0v7.7h-1.0ZM380.7 11.5h1.0v4.4h-1.0ZM386.8 9.6h1.0v8.3h-1.0ZM393.0 12.1h1.0v3.2h-1.0ZM399.2 9.4h1.0v8.7h-1.0ZM405.3 11.1h1.0v5.3h-1.0ZM411.5 9.6h1.0v8.3h-1.0ZM417.6 11.3h1.0v4.9h-1.0ZM423.8 9.9h1.0v7.7h-1.0ZM429.9 11.9h1.0v3.6h-1.0ZM436.1 9.4h1.0v8.7h-1.0ZM442.2 11.6h1.0v4.2h-1.0ZM448.4 9.3h1.0v8.8h-1.0ZM454.6 11.1h1.0v5.3h-1.0ZM460.7 9.0h1.0v9.5h-1.0ZM466.9 11.1h1.0v5.2h-1.0ZM473.0 10.3h1.0v6.9h-1.0ZM479.2 11.2h1.0v5.1h-1.0ZM485.3 9.1h1.0v9.3h-1.0ZM491.5 11.1h1.0v5.3h-1.0ZM497.6 9.8h1.0v7.9h-1.0ZM503.8 12.0h1.0v3.4h-1.0ZM509.9 9.5h1.0v8.5h-1.0ZM516.1 11.4h1.0v4.6h-1.0ZM522.3 9.8h1.0v7.9h-1.0ZM528.4 11.9h1.0v3.6h-1.0ZM534.6 9.8h1.0v7.8h-1.0ZM540.7 11.8h1.0v3.9h-1.0ZM546.9 9.9h1.0v7.6h-1.0ZM553.0 11.6h1.0v4.2h-1.0ZM559.2 9.5h1.0v8.4h-1.0ZM565.3 11.6h1.0v4.2h-1.0ZM571.5 9.3h1.0v8.8h-1.0ZM577.7 11.9h1.0v3.7h-1.0ZM583.8 10.5h1.0v6.5h-1.0ZM590.0 12.3h1.0v2.8h-1.0ZM596.1 11.5h1.0v4.5h-1.0ZM602.3 12.9h1.0v1.6h-1.0ZM608.4 12.8h1.0v1.9h-1.0ZM5.1 41.0L5.1 40.7L5.8 40.1L6.5 39.2L7.2 40.1L7.9 40.7L7.9 41.3L7.2 41.9L6.5 42.8L5.8 41.9L5.1 41.3ZM11.5 41.0L11.5 40.7L12.0 40.3L12.6 39.7L13.2 40.3L13.8 40.7L13.8 41.3L13.2 41.6L12.6 42.2L12.0 41.6L11.5 41.3ZM16.4 41.0L16.4 40.7L17.0 40.0L17.7 39.1L18.3 38.2L18.9 38.2L19.6 39.1L20.2 40.0L20.8 40.7L20.8 41.3L20.2 41.9L19.6 42.8L18.9 43.8L18.3 43.8L17.7 42.8L17.0 41.9L16.4 41.3ZM23.8 41.0L23.8 40.7L24.3 40.3L24.9 39.7L25.5 40.3L26.1 40.7L26.1 41.3L25.5 41.6L24.9 42.2L24.3 41.6L23.8 41.3ZM29.7 41.0L29.7 40.7L30.4 40.1L31.1 39.2L31.8 40.1L32.5 40.7L32.5 41.3L31.8 41.9L31.1 42.8L30.4 41.9L29.7 41.3ZM36.1 41.0L36.1 40.7L36.6 40.3L37.2 39.7L37.8 40.3L38.4 40.7L38.4 41.3L37.8 41.6L37.2 42.2L36.6 41.6L36.1 41.3ZM41.0 41.0L41.0 40.7L41.7 39.9L42.3 38.9L42.9 37.9L43.5 37.9L44.2 38.9L44.8 39.9L45.4 40.7L45.4 41.3L44.8 42.0L44.2 43.0L43.5 44.1L42.9 44.1L42.3 43.0L41.7 42.0L41.0 41.3ZM48.4 41.0L48.4 40.7L49.0 40.3L49.5 39.7L50.1 40.3L50.7 40.7L50.7 41.3L50.1 41.6L49.5 42.2L49.0 41.6L48.4 41.3ZM54.3 41.0L54.3 40.7L55.0 40.1L55.7 39.2L56.4 40.1L57.1 40.7L57.1 41.3L56.4 41.9L55.7 42.8L55.0 41.9L54.3 41.3ZM60.7 41.0L60.7 40.7L61.3 40.3L61.8 39.7L62.4 40.3L63.0 40.7L63.0 41.3L62.4 41.6L61.8 42.2L61.3 41.6L60.7 41.3ZM65.6 41.0L65.6 40.7L66.3 40.1L66.9 39.3L67.5 38.4L68.2 38.4L68.8 39.3L69.4 40.1L70.0 40.7L70.0 41.3L69.4 41.8L68.8 42.7L68.2 43.5L67.5 43.5L66.9 42.7L66.3 41.8L65.6 41.3ZM73.0 41.0L73.0 40.7L73.6 40.3L74.2 39.7L74.7 40.3L75.3 40.7L75.3 41.3L74.7 41.6L74.2 42.2L73.6 41.6L73.0 41.3ZM79.0 41.0L79.0 40.7L79.7 40.1L80.4 39.2L81.1 40.1L81.8 40.7L81.8 41.3L81.1 41.9L80.4 42.8L79.7 41.9L79.0 41.3ZM85.3 41.0L85.3 40.7L85.9 40.3L86.5 39.7L87.0 40.3L87.6 40.7L87.6 41.3L87.0 41.6L86.5 42.2L85.9 41.6L85.3 41.3ZM90.3 41.0L90.3 40.7L90.9 40.1L91.5 39.2L92.2 38.4L92.8 38.4L93.4 39.2L94.0 40.1L94.7 40.7L94.7 41.3L94.0 41.8L93.4 42.7L92.8 43.6L92.2 43.6L91.5 42.7L90.9 41.8L90.3 41.3ZM97.6 41.0L97.6 40.7L98.2 40.3L98.8 39.7L99.3 40.3L99.9 40.7L99.9 41.3L99.3 41.6L98.8 42.2L98.2 41.6L97.6 41.3ZM103.6 41.0L103.6 40.7L104.3 40.1L105.0 39.2L105.7 40.1L106.4 40.7L106.4 41.3L105.7 41.9L105.0 42.8L104.3 41.9L103.6 41.3ZM109.9 41.0L109.9 40.7L110.5 40.3L111.1 39.7L111.7 40.3L112.2 40.7L112.2 41.3L111.7 41.6L111.1 42.2L110.5 41.6L109.9 41.3ZM114.9 41.0L114.9 40.7L115.5 39.9L116.1 38.8L116.8 37.8L117.4 37.8L118.0 38.8L118.7 39.9L119.3 40.7L119.3 41.3L118.7 42.0L118.0 43.1L117.4 44.2L116.8 44.2L116.1 43.1L115.5 42.0L114.9 41.3ZM122.2 41.0L122.2 40.7L122.8 40.3L123.4 39.7L124.0 40.3L124.5 40.7L124.5 41.3L124.0 41.6L123.4 42.2L122.8 41.6L122.2 41.3ZM128.2 41.0L128.2 40.7L128.9 40.1L129.6 39.2L130.3 40.1L131.0 40.7L131.0 41.3L130.3 41.9L129.6 42.8L128.9 41.9L128.2 41.3ZM134.6 41.0L134.6 40.7L135.1 40.3L135.7 39.7L136.3 40.3L136.9 40.7L136.9 41.3L136.3 41.6L135.7 42.2L135.1 41.6L134.6 41.3ZM139.5 41.0L139.5 40.7L140.1 40.0L140.8 39.1L141.4 38.2L142.0 38.2L142.7 39.1L143.3 40.0L143.9 40.7L143.9 41.3L143.3 41.9L142.7 42.9L142.0 43.8L141.4 43.8L140.8 42.9L140.1 41.9L139.5 41.3ZM146.9 41.0L146.9 40.7L147.4 40.4L148.0 39.8L148.6 40.4L149.2 40.7L149.2 41.3L148.6 41.6L148.0 42.2L147.4 41.6L146.9 41.3ZM152.8 41.0L152.8 40.7L153.5 40.3L154.2 39.6L154.9 40.3L155.6 40.7L155.6 41.3L154.9 41.7L154.2 42.4L153.5 41.7L152.8 41.3ZM159.2 41.0L159.2 40.7L159.7 40.6L160.3 40.2L160.9 40.6L161.5 40.7L161.5 41.3L160.9 41.3L160.3 41.7L159.7 41.3L159.2 41.3ZM164.1 41.0L164.1 40.7L164.8 40.6L165.4 40.3L166.0 39.9L166.6 39.9L167.3 40.3L167.9 40.6L168.5 40.7L168.5 41.3L167.9 41.3L167.3 41.7L166.6 42.0L166.0 42.0L165.4 41.7L164.8 41.3L164.1 41.3ZM171.5 41.0L171.5 40.7L172.1 40.7L172.6 40.7L173.2 40.7L173.8 40.7L173.8 41.3L173.2 41.3L172.6 41.3L172.1 41.3L171.5 41.3ZM177.4 41.0L177.4 40.7L178.1 40.7L178.8 40.5L179.5 40.7L180.2 40.7L180.2 41.3L179.5 41.3L178.8 41.4L178.1 41.3L177.4 41.3ZM201.5 41.0L201.5 40.7L202.2 40.1L202.9 39.2L203.6 40.1L204.3 40.7L204.3 41.3L203.6 41.9L202.9 42.8L202.2 41.9L201.5 41.3ZM207.9 41.0L207.9 40.7L208.4 40.3L209.0 39.7L209.6 40.3L210.2 40.7L210.2 41.3L209.6 41.6L209.0 42.2L208.4 41.6L207.9 41.3ZM212.8 41.0L212.8 40.7L213.4 40.0L214.1 39.1L214.7 38.2L215.3 38.2L216.0 39.1L216.6 40.0L217.2 40.7L217.2 41.3L216.6 41.9L216.0 42.8L215.3 43.8L214.7 43.8L214.1 42.8L213.4 41.9L212.8 41.3ZM220.2 41.0L220.2 40.7L220.7 40.3L221.3 39.7L221.9 40.3L222.5 40.7L222.5 41.3L221.9 41.6L221.3 42.2L220.7 41.6L220.2 41.3ZM226.1 41.0L226.1 40.7L226.8 40.1L227.5 39.2L228.2 40.1L228.9 40.7L228.9 41.3L228.2 41.9L227.5 42.8L226.8 41.9L226.1 41.3ZM232.5 41.0L232.5 40.7L233.0 40.3L233.6 39.7L234.2 40.3L234.8 40.7L234.8 41.3L234.2 41.6L233.6 42.2L233.0 41.6L232.5 41.3ZM237.4 41.0L237.4 40.7L238.1 39.9L238.7 38.9L239.3 37.9L239.9 37.9L240.6 38.9L241.2 39.9L241.8 40.7L241.8 41.3L241.2 42.0L240.6 43.0L239.9 44.1L239.3 44.1L238.7 43.0L238.1 42.0L237.4 41.3ZM244.8 41.0L244.8 40.7L245.4 40.3L245.9 39.7L246.5 40.3L247.1 40.7L247.1 41.3L246.5 41.6L245.9 42.2L245.4 41.6L244.8 41.3ZM250.7 41.0L250.7 40.7L251.4 40.1L252.1 39.2L252.8 40.1L253.5 40.7L253.5 41.3L252.8 41.9L252.1 42.8L251.4 41.9L250.7 41.3ZM257.1 41.0L257.1 40.7L257.7 40.3L258.2 39.7L258.8 40.3L259.4 40.7L259.4 41.3L258.8 41.6L258.2 42.2L257.7 41.6L257.1 41.3ZM262.0 41.0L262.0 40.7L262.7 40.1L263.3 39.3L263.9 38.4L264.6 38.4L265.2 39.3L265.8 40.1L266.4 40.7L266.4 41.3L265.8 41.8L265.2 42.7L264.6 43.5L263.9 43.5L263.3 42.7L262.7 41.8L262.0 41.3ZM269.4 41.0L269.4 40.7L270.0 40.3L270.6 39.7L271.1 40.3L271.7 40.7L271.7 41.3L271.1 41.6L270.6 42.2L270.0 41.6L269.4 41.3ZM275.4 41.0L275.4 40.7L276.1 40.1L276.8 39.2L277.5 40.1L278.2 40.7L278.2 41.3L277.5 41.9L276.8 42.8L276.1 41.9L275.4 41.3ZM281.7 41.0L281.7 40.7L282.3 40.3L282.9 39.7L283.4 40.3L284.0 40.7L284.0 41.3L283.4 41.6L282.9 42.2L282.3 41.6L281.7 41.3ZM286.7 41.0L286.7 40.7L287.3 40.1L287.9 39.2L288.6 38.4L289.2 38.4L289.8 39.2L290.4 40.1L291.1 40.7L291.1 41.3L290.4 41.8L289.8 42.7L289.2 43.6L288.6 43.6L287.9 42.7L287.3 41.8L286.7 41.3ZM294.0 41.0L294.0 40.7L294.6 40.3L295.2 39.7L295.7 40.3L296.3 40.7L296.3 41.3L295.7 41.6L295.2 42.2L294.6 41.6L294.0 41.3ZM300.0 41.0L300.0 40.7L300.7 40.1L301.4 39.2L302.1 40.1L302.8 40.7L302.8 41.3L302.1 41.9L301.4 42.8L300.7 41.9L300.0 41.3ZM306.3 41.0L306.3 40.7L306.9 40.3L307.5 39.7L308.1 40.3L308.6 40.7L308.6 41.3L308.1 41.6L307.5 42.2L306.9 41.6L306.3 41.3ZM311.3 41.0L311.3 40.7L311.9 39.9L312.5 38.8L313.2 37.8L313.8 37.8L314.4 38.8L315.1 39.9L315.7 40.7L315.7 41.3L315.1 42.0L314.4 43.1L313.8 44.2L313.2 44.2L312.5 43.1L311.9 42.0L311.3 41.3ZM318.6 41.0L318.6 40.7L319.2 40.3L319.8 39.7L320.4 40.3L320.9 40.7L320.9 41.3L320.4 41.6L319.8 42.2L319.2 41.6L318.6 41.3ZM324.6 41.0L324.6 40.7L325.3 40.1L326.0 39.2L326.7 40.1L327.4 40.7L327.4 41.3L326.7 41.9L326.0 42.8L325.3 41.9L324.6 41.3ZM331.0 41.0L331.0 40.7L331.5 40.3L332.1 39.7L332.7 40.3L333.3 40.7L333.3 41.3L332.7 41.6L332.1 42.2L331.5 41.6L331.0 41.3ZM335.9 41.0L335.9 40.7L336.5 40.0L337.2 39.1L337.8 38.2L338.4 38.2L339.1 39.1L339.7 40.0L340.3 40.7L340.3 41.3L339.7 41.9L339.1 42.9L338.4 43.8L337.8 43.8L337.2 42.9L336.5 41.9L335.9 41.3ZM343.3 41.0L343.3 40.7L343.8 40.3L344.4 39.7L345.0 40.3L345.6 40.7L345.6 41.3L345.0 41.6L344.4 42.2L343.8 41.6L343.3 41.3ZM349.2 41.0L349.2 40.7L349.9 40.1L350.6 39.2L351.3 40.1L352.0 40.7L352.0 41.3L351.3 41.9L350.6 42.8L349.9 41.9L349.2 41.3ZM355.6 41.0L355.6 40.7L356.1 40.3L356.7 39.7L357.3 40.3L357.9 40.7L357.9 41.3L357.3 41.6L356.7 42.2L356.1 41.6L355.6 41.3ZM360.5 41.0L360.5 40.7L361.2 40.1L361.8 39.3L362.4 38.4L363.0 38.4L363.7 39.3L364.3 40.1L364.9 40.7L364.9 41.3L364.3 41.8L363.7 42.7L363.0 43.5L362.4 43.5L361.8 42.7L361.2 41.8L360.5 41.3ZM367.9 41.0L367.9 40.7L368.5 40.3L369.0 39.7L369.6 40.3L370.2 40.7L370.2 41.3L369.6 41.6L369.0 42.2L368.5 41.6L367.9 41.3ZM373.8 41.0L373.8 40.7L374.5 40.1L375.2 39.2L375.9 40.1L376.6 40.7L376.6 41.3L375.9 41.9L375.2 42.8L374.5 41.9L373.8 41.3ZM380.2 41.0L380.2 40.7L380.8 40.3L381.3 39.7L381.9 40.3L382.5 40.7L382.5 41.3L381.9 41.6L381.3 42.2L380.8 41.6L380.2 41.3ZM385.1 41.0L385.1 40.7L385.8 40.1L386.4 39.2L387.0 38.4L387.7 38.4L388.3 39.2L388.9 40.1L389.5 40.7L389.5 41.3L388.9 41.8L388.3 42.7L387.7 43.6L387.0 43.6L386.4 42.7L385.8 41.8L385.1 41.3ZM392.5 41.0L392.5 40.7L393.1 40.3L393.7 39.7L394.2 40.3L394.8 40.7L394.8 41.3L394.2 41.6L393.7 42.2L393.1 41.6L392.5 41.3ZM398.5 41.0L398.5 40.7L399.2 40.1L399.9 39.2L400.6 40.1L401.3 40.7L401.3 41.3L400.6 41.9L399.9 42.8L399.2 41.9L398.5 41.3ZM404.8 41.0L404.8 40.7L405.4 40.3L406.0 39.7L406.5 40.3L407.1 40.7L407.1 41.3L406.5 41.6L406.0 42.2L405.4 41.6L404.8 41.3ZM409.8 41.0L409.8 40.7L410.4 40.1L411.0 39.3L411.7 38.5L412.3 38.5L412.9 39.3L413.5 40.1L414.2 40.7L414.2 41.3L413.5 41.8L412.9 42.7L412.3 43.5L411.7 43.5L411.0 42.7L410.4 41.8L409.8 41.3ZM417.1 41.0L417.1 40.7L417.7 40.3L418.3 39.7L418.8 40.3L419.4 40.7L419.4 41.3L418.8 41.6L418.3 42.2L417.7 41.6L417.1 41.3ZM423.1 41.0L423.1 40.7L423.8 40.1L424.5 39.2L425.2 40.1L425.9 40.7L425.9 41.3L425.2 41.9L424.5 42.8L423.8 41.9L423.1 41.3ZM429.4 41.0L429.4 40.7L430.0 40.3L430.6 39.7L431.2 40.3L431.7 40.7L431.7 41.3L431.2 41.6L430.6 42.2L430.0 41.6L429.4 41.3ZM434.4 41.0L434.4 40.7L435.0 40.1L435.6 39.3L436.3 38.4L436.9 38.4L437.5 39.3L438.2 40.1L438.8 40.7L438.8 41.3L438.2 41.8L437.5 42.7L436.9 43.5L436.3 43.5L435.6 42.7L435.0 41.8L434.4 41.3ZM441.7 41.0L441.7 40.7L442.3 40.3L442.9 39.7L443.5 40.3L444.0 40.7L444.0 41.3L443.5 41.6L442.9 42.2L442.3 41.6L441.7 41.3ZM447.7 41.0L447.7 40.7L448.4 40.1L449.1 39.2L449.8 40.1L450.5 40.7L450.5 41.3L449.8 41.9L449.1 42.8L448.4 41.9L447.7 41.3ZM454.1 41.0L454.1 40.7L454.6 40.3L455.2 39.7L455.8 40.3L456.4 40.7L456.4 41.3L455.8 41.6L455.2 42.2L454.6 41.6L454.1 41.3ZM459.0 41.0L459.0 40.7L459.6 39.9L460.3 38.8L460.9 37.8L461.5 37.8L462.2 38.8L462.8 39.9L463.4 40.7L463.4 41.3L462.8 42.0L462.2 43.1L461.5 44.2L460.9 44.2L460.3 43.1L459.6 42.0L459.0 41.3ZM466.4 41.0L466.4 40.7L466.9 40.3L467.5 39.7L468.1 40.3L468.7 40.7L468.7 41.3L468.1 41.6L467.5 42.2L466.9 41.6L466.4 41.3ZM472.3 41.0L472.3 40.7L473.0 40.1L473.7 39.2L474.4 40.1L475.1 40.7L475.1 41.3L474.4 41.9L473.7 42.8L473.0 41.9L472.3 41.3ZM478.7 41.0L478.7 40.7L479.2 40.3L479.8 39.7L480.4 40.3L481.0 40.7L481.0 41.3L480.4 41.6L479.8 42.2L479.2 41.6L478.7 41.3ZM483.6 41.0L483.6 40.7L484.3 40.1L484.9 39.2L485.5 38.3L486.1 38.3L486.8 39.2L487.4 40.1L488.0 40.7L488.0 41.3L487.4 41.9L486.8 42.7L486.1 43.6L485.5 43.6L484.9 42.7L484.3 41.9L483.6 41.3ZM491.0 41.0L491.0 40.7L491.6 40.3L492.1 39.7L492.7 40.3L493.3 40.7L493.3 41.3L492.7 41.6L492.1 42.2L491.6 41.6L491.0 41.3ZM496.9 41.0L496.9 40.7L497.6 40.1L498.3 39.2L499.0 40.1L499.7 40.7L499.7 41.3L499.0 41.9L498.3 42.8L497.6 41.9L496.9 41.3ZM503.3 41.0L503.3 40.7L503.9 40.3L504.4 39.7L505.0 40.3L505.6 40.7L505.6 41.3L505.0 41.6L504.4 42.2L503.9 41.6L503.3 41.3ZM508.2 41.0L508.2 40.7L508.9 40.0L509.5 39.1L510.1 38.1L510.8 38.1L511.4 39.1L512.0 40.0L512.6 40.7L512.6 41.3L512.0 41.9L511.4 42.9L510.8 43.8L510.1 43.8L509.5 42.9L508.9 41.9L508.2 41.3ZM515.6 41.0L515.6 40.7L516.2 40.3L516.8 39.7L517.3 40.3L517.9 40.7L517.9 41.3L517.3 41.6L516.8 42.2L516.2 41.6L515.6 41.3ZM521.6 41.0L521.6 40.7L522.3 40.1L523.0 39.2L523.7 40.1L524.4 40.7L524.4 41.3L523.7 41.9L523.0 42.8L522.3 41.9L521.6 41.3ZM527.9 41.0L527.9 40.7L528.5 40.3L529.1 39.7L529.6 40.3L530.2 40.7L530.2 41.3L529.6 41.6L529.1 42.2L528.5 41.6L527.9 41.3ZM532.9 41.0L532.9 40.7L533.5 40.0L534.1 39.1L534.8 38.2L535.4 38.2L536.0 39.1L536.6 40.0L537.3 40.7L537.3 41.3L536.6 41.9L536.0 42.8L535.4 43.8L534.8 43.8L534.1 42.8L533.5 41.9L532.9 41.3ZM540.2 41.0L540.2 40.7L540.8 40.3L541.4 39.7L541.9 40.3L542.5 40.7L542.5 41.3L541.9 41.6L541.4 42.2L540.8 41.6L540.2 41.3ZM546.2 41.0L546.2 40.7L546.9 40.1L547.6 39.2L548.3 40.1L549.0 40.7L549.0 41.3L548.3 41.9L547.6 42.8L546.9 41.9L546.2 41.3ZM552.5 41.0L552.5 40.7L553.1 40.3L553.7 39.7L554.3 40.3L554.8 40.7L554.8 41.3L554.3 41.6L553.7 42.2L553.1 41.6L552.5 41.3ZM557.5 41.0L557.5 40.7L558.1 40.1L558.7 39.3L559.4 38.5L560.0 38.5L560.6 39.3L561.3 40.1L561.9 40.7L561.9 41.3L561.3 41.8L560.6 42.6L560.0 43.5L559.4 43.5L558.7 42.6L558.1 41.8L557.5 41.3ZM564.8 41.0L564.8 40.7L565.4 40.3L566.0 39.7L566.6 40.3L567.1 40.7L567.1 41.3L566.6 41.6L566.0 42.2L565.4 41.6L564.8 41.3ZM570.8 41.0L570.8 40.7L571.5 40.1L572.2 39.2L572.9 40.1L573.6 40.7L573.6 41.3L572.9 41.9L572.2 42.8L571.5 41.9L570.8 41.3ZM577.2 41.0L577.2 40.7L577.7 40.3L578.3 39.7L578.9 40.3L579.5 40.7L579.5 41.3L578.9 41.6L578.3 42.2L577.7 41.6L577.2 41.3ZM582.1 41.0L582.1 40.7L582.7 40.2L583.4 39.4L584.0 38.6L584.6 38.6L585.3 39.4L585.9 40.2L586.5 40.7L586.5 41.3L585.9 41.8L585.3 42.5L584.6 43.3L584.0 43.3L583.4 42.5L582.7 41.8L582.1 41.3ZM589.5 41.0L589.5 40.7L590.0 40.6L590.6 40.1L591.2 40.6L591.8 40.7L591.8 41.3L591.2 41.4L590.6 41.8L590.0 41.4L589.5 41.3ZM595.4 41.0L595.4 40.7L596.1 40.5L596.8 40.1L597.5 40.5L598.2 40.7L598.2 41.3L597.5 41.4L596.8 41.9L596.1 41.4L595.4 41.3ZM601.8 41.0L601.8 40.7L602.3 40.7L602.9 40.6L603.5 40.7L604.1 40.7L604.1 41.3L603.5 41.3L602.9 41.4L602.3 41.3L601.8 41.3ZM606.7 41.0L606.7 40.7L607.4 40.7L608.0 40.5L608.6 40.3L609.2 40.3L609.9 40.5L610.5 40.7L611.1 40.7L611.1 41.3L610.5 41.3L609.9 41.4L609.2 41.6L608.6 41.6L608.0 41.4L607.4 41.3L606.7 41.3ZM5.8 38.0h1.0v6.0h-1.0ZM12.0 38.5h1.0v5.0h-1.0ZM18.1 37.2h1.0v7.6h-1.0ZM24.3 38.5h1.0v4.9h-1.0ZM30.4 37.0h1.0v8.0h-1.0ZM36.6 39.5h1.0v3.0h-1.0ZM42.7 37.5h1.0v7.0h-1.0ZM48.9 39.2h1.0v3.6h-1.0ZM55.0 37.5h1.0v7.0h-1.0ZM61.2 38.9h1.0v4.1h-1.0ZM67.3 37.5h1.0v7.0h-1.0ZM73.5 38.5h1.0v4.9h-1.0ZM79.7 38.0h1.0v6.0h-1.0ZM85.8 39.4h1.0v3.1h-1.0ZM92.0 37.3h1.0v7.3h-1.0ZM98.1 39.1h1.0v3.7h-1.0ZM104.3 38.0h1.0v6.0h-1.0ZM110.4 39.5h1.0v3.0h-1.0ZM116.6 36.9h1.0v8.2h-1.0ZM122.7 39.0h1.0v4.0h-1.0ZM128.9 38.0h1.0v6.0h-1.0ZM135.1 39.2h1.0v3.5h-1.0ZM141.2 36.8h1.0v8.3h-1.0ZM147.4 39.2h1.0v3.6h-1.0ZM153.5 38.7h1.0v4.5h-1.0ZM159.7 39.8h1.0v2.4h-1.0ZM165.8 39.5h1.0v3.0h-1.0ZM172.0 40.4h1.0v1.2h-1.0ZM178.1 40.1h1.0v1.7h-1.0ZM202.2 38.0h1.0v6.0h-1.0ZM208.4 38.5h1.0v5.0h-1.0ZM214.5 37.2h1.0v7.6h-1.0ZM220.7 38.5h1.0v4.9h-1.0ZM226.8 37.0h1.0v8.0h-1.0ZM233.0 39.5h1.0v3.0h-1.0ZM239.1 37.5h1.0v7.0h-1.0ZM245.3 39.2h1.0v3.6h-1.0ZM251.4 37.5h1.0v7.0h-1.0ZM257.6 38.9h1.0v4.1h-1.0ZM263.7 37.5h1.0v7.0h-1.0ZM269.9 38.5h1.0v4.9h-1.0ZM276.1 38.0h1.0v6.0h-1.0ZM282.2 39.4h1.0v3.1h-1.0ZM288.4 37.3h1.0v7.3h-1.0ZM294.5 39.1h1.0v3.7h-1.0ZM300.7 38.0h1.0v6.0h-1.0ZM306.8 39.5h1.0v3.0h-1.0ZM313.0 36.9h1.0v8.2h-1.0ZM319.1 39.0h1.0v4.0h-1.0ZM325.3 38.0h1.0v6.0h-1.0ZM331.5 39.2h1.0v3.5h-1.0ZM337.6 36.8h1.0v8.3h-1.0ZM343.8 39.1h1.0v3.8h-1.0ZM349.9 38.1h1.0v5.8h-1.0ZM356.1 38.9h1.0v4.1h-1.0ZM362.2 37.4h1.0v7.2h-1.0ZM368.4 38.5h1.0v4.9h-1.0ZM374.5 37.5h1.0v6.9h-1.0ZM380.7 39.0h1.0v3.9h-1.0ZM386.8 37.2h1.0v7.5h-1.0ZM393.0 39.5h1.0v2.9h-1.0ZM399.2 37.1h1.0v7.8h-1.0ZM405.3 38.6h1.0v4.8h-1.0ZM411.5 37.2h1.0v7.5h-1.0ZM417.6 38.8h1.0v4.4h-1.0ZM423.8 37.5h1.0v7.0h-1.0ZM429.9 39.3h1.0v3.3h-1.0ZM436.1 37.1h1.0v7.8h-1.0ZM442.2 39.1h1.0v3.8h-1.0ZM448.4 37.0h1.0v7.9h-1.0ZM454.6 38.6h1.0v4.7h-1.0ZM460.7 36.7h1.0v8.5h-1.0ZM466.9 38.6h1.0v4.7h-1.0ZM473.0 37.9h1.0v6.2h-1.0ZM479.2 38.7h1.0v4.6h-1.0ZM485.3 36.8h1.0v8.3h-1.0ZM491.5 38.6h1.0v4.7h-1.0ZM497.6 37.4h1.0v7.1h-1.0ZM503.8 39.5h1.0v3.0h-1.0ZM509.9 37.1h1.0v7.7h-1.0ZM516.1 38.9h1.0v4.2h-1.0ZM522.3 37.4h1.0v7.1h-1.0ZM528.4 39.4h1.0v3.2h-1.0ZM534.6 37.5h1.0v7.0h-1.0ZM540.7 39.2h1.0v3.5h-1.0ZM546.9 37.5h1.0v6.9h-1.0ZM553.0 39.1h1.0v3.8h-1.0ZM559.2 37.2h1.0v7.6h-1.0ZM565.3 39.1h1.0v3.8h-1.0ZM571.5 37.0h1.0v8.0h-1.0ZM577.7 39.3h1.0v3.4h-1.0ZM583.8 38.0h1.0v5.9h-1.0ZM590.0 39.7h1.0v2.5h-1.0ZM596.1 38.9h1.0v4.1h-1.0ZM602.3 40.3h1.0v1.4h-1.0ZM608.4 40.1h1.0v1.8h-1.0Z" fill="#0c0c48"/></svg><b>Beats</b></div><div class="clip" style="left:196.0px;top:222.7px;width:221.2px;height:54.5px;background:#377cb0"><svg width="221.2" height="54.5"><path d="M0 13.7H221.2M0 41.0H221.2" stroke="#0e3048" stroke-width="1" stroke-opacity="0.45"/><path d="M12.1 13.7L12.1 13.4L12.6 12.6L13.0 12.8L13.5 13.3L14.0 13.4L14.0 14.0L13.5 14.2L13.0 14.6L12.6 14.9L12.1 14.0ZM24.4 13.7L24.4 13.4L24.9 12.5L25.4 12.9L25.8 13.2L26.3 13.4L26.3 14.0L25.8 14.2L25.4 14.6L24.9 14.9L24.4 14.0ZM36.7 13.7L36.7 13.4L37.2 12.5L37.7 12.9L38.1 13.3L38.6 13.4L38.6 14.0L38.1 14.2L37.7 14.6L37.2 15.0L36.7 14.0ZM49.0 13.7L49.0 13.4L49.5 12.5L50.0 12.9L50.5 13.3L50.9 13.4L50.9 14.0L50.5 14.2L50.0 14.5L49.5 14.9L49.0 14.0ZM61.3 13.7L61.3 13.4L61.8 12.6L62.3 12.9L62.8 13.2L63.2 13.4L63.2 14.0L62.8 14.3L62.3 14.6L61.8 14.9L61.3 14.0ZM73.6 13.7L73.6 13.4L74.1 12.6L74.6 12.8L75.1 13.2L75.6 13.4L75.6 14.0L75.1 14.2L74.6 14.7L74.1 14.8L73.6 14.0ZM86.0 13.7L86.0 13.4L86.4 12.4L86.9 12.9L87.4 13.2L87.9 13.4L87.9 14.0L87.4 14.2L86.9 14.6L86.4 15.0L86.0 14.0ZM98.3 13.7L98.3 13.4L98.7 12.5L99.2 12.9L99.7 13.2L100.2 13.4L100.2 14.0L99.7 14.2L99.2 14.5L98.7 14.9L98.3 14.0ZM110.6 13.7L110.6 13.4L111.1 12.6L111.5 12.8L112.0 13.2L112.5 13.4L112.5 14.0L112.0 14.3L111.5 14.6L111.1 14.9L110.6 14.0ZM122.9 13.7L122.9 13.4L123.4 12.4L123.8 12.8L124.3 13.2L124.8 13.4L124.8 14.0L124.3 14.2L123.8 14.7L123.4 15.0L122.9 14.0ZM135.2 13.7L135.2 13.4L135.7 12.6L136.2 12.9L136.6 13.2L137.1 13.4L137.1 14.0L136.6 14.2L136.2 14.6L135.7 14.8L135.2 14.0ZM147.5 13.7L147.5 13.4L148.0 12.5L148.5 12.8L148.9 13.3L149.4 13.4L149.4 14.0L148.9 14.2L148.5 14.6L148.0 15.0L147.5 14.0ZM159.8 13.7L159.8 13.4L160.3 12.4L160.8 12.9L161.2 13.2L161.7 13.4L161.7 14.0L161.2 14.2L160.8 14.5L160.3 15.0L159.8 14.0ZM172.1 13.7L172.1 13.4L172.6 12.5L173.1 12.8L173.6 13.3L174.0 13.4L174.0 14.0L173.6 14.2L173.1 14.6L172.6 14.9L172.1 14.0ZM11.9 10.6h1.0v6.2h-1.0ZM24.2 10.6h1.0v6.2h-1.0ZM36.5 10.6h1.0v6.2h-1.0ZM48.8 10.6h1.0v6.2h-1.0ZM61.1 10.6h1.0v6.2h-1.0ZM73.4 10.6h1.0v6.2h-1.0ZM85.8 10.6h1.0v6.2h-1.0ZM98.1 10.6h1.0v6.2h-1.0ZM110.4 10.6h1.0v6.2h-1.0ZM122.7 10.6h1.0v6.2h-1.0ZM135.0 10.6h1.0v6.2h-1.0ZM147.3 10.6h1.0v6.2h-1.0ZM159.6 10.6h1.0v6.2h-1.0ZM171.9 10.6h1.0v6.2h-1.0ZM12.1 41.0L12.1 40.7L12.6 39.7L13.0 40.2L13.5 40.5L14.0 40.7L14.0 41.3L13.5 41.4L13.0 41.8L12.6 42.2L12.1 41.3ZM24.4 41.0L24.4 40.7L24.9 39.8L25.4 40.1L25.8 40.5L26.3 40.7L26.3 41.3L25.8 41.5L25.4 41.9L24.9 42.2L24.4 41.3ZM36.7 41.0L36.7 40.7L37.2 39.7L37.7 40.1L38.1 40.5L38.6 40.7L38.6 41.3L38.1 41.4L37.7 41.9L37.2 42.2L36.7 41.3ZM49.0 41.0L49.0 40.7L49.5 39.9L50.0 40.1L50.5 40.4L50.9 40.7L50.9 41.3L50.5 41.5L50.0 41.8L49.5 42.1L49.0 41.3ZM61.3 41.0L61.3 40.7L61.8 39.7L62.3 40.2L62.8 40.5L63.2 40.7L63.2 41.3L62.8 41.5L62.3 41.8L61.8 42.2L61.3 41.3ZM73.6 41.0L73.6 40.7L74.1 39.7L74.6 40.2L75.1 40.5L75.6 40.7L75.6 41.3L75.1 41.4L74.6 41.8L74.1 42.3L73.6 41.3ZM86.0 41.0L86.0 40.7L86.4 39.7L86.9 40.1L87.4 40.4L87.9 40.7L87.9 41.3L87.4 41.5L86.9 41.8L86.4 42.2L86.0 41.3ZM98.3 41.0L98.3 40.7L98.7 39.7L99.2 40.2L99.7 40.5L100.2 40.7L100.2 41.3L99.7 41.4L99.2 41.8L98.7 42.3L98.3 41.3ZM110.6 41.0L110.6 40.7L111.1 39.8L111.5 40.1L112.0 40.4L112.5 40.7L112.5 41.3L112.0 41.5L111.5 41.9L111.1 42.1L110.6 41.3ZM122.9 41.0L122.9 40.7L123.4 39.8L123.8 40.0L124.3 40.5L124.8 40.7L124.8 41.3L124.3 41.4L123.8 41.9L123.4 42.1L122.9 41.3ZM135.2 41.0L135.2 40.7L135.7 39.9L136.2 40.0L136.6 40.4L137.1 40.7L137.1 41.3L136.6 41.5L136.2 41.9L135.7 42.1L135.2 41.3ZM147.5 41.0L147.5 40.7L148.0 39.7L148.5 40.2L148.9 40.4L149.4 40.7L149.4 41.3L148.9 41.5L148.5 41.8L148.0 42.2L147.5 41.3ZM159.8 41.0L159.8 40.7L160.3 39.7L160.8 40.1L161.2 40.4L161.7 40.7L161.7 41.3L161.2 41.5L160.8 41.9L160.3 42.3L159.8 41.3ZM172.1 41.0L172.1 40.7L172.6 39.9L173.1 40.2L173.6 40.5L174.0 40.7L174.0 41.3L173.6 41.5L173.1 41.8L172.6 42.1L172.1 41.3ZM11.9 37.9h1.0v6.2h-1.0ZM24.2 37.9h1.0v6.2h-1.0ZM36.5 37.9h1.0v6.2h-1.0ZM48.8 37.9h1.0v6.2h-1.0ZM61.1 37.9h1.0v6.2h-1.0ZM73.4 37.9h1.0v6.2h-1.0ZM85.8 37.9h1.0v6.2h-1.0ZM98.1 37.9h1.0v6.2h-1.0ZM110.4 37.9h1.0v6.2h-1.0ZM122.7 37.9h1.0v6.2h-1.0ZM135.0 37.9h1.0v6.2h-1.0ZM147.3 37.9h1.0v6.2h-1.0ZM159.6 37.9h1.0v6.2h-1.0ZM171.9 37.9h1.0v6.2h-1.0Z" fill="#0e3048"/></svg><b>Claps</b></div><div class="clip" style="left:590.0px;top:222.7px;width:612.0px;height:54.5px;background:#377cb0"><svg width="612.0" height="54.5"><path d="M0 13.7H612.0M0 41.0H612.0" stroke="#0e3048" stroke-width="1" stroke-opacity="0.45"/><path d="M208.4 13.7L208.4 13.4L208.9 12.7L209.4 13.0L209.8 13.3L210.3 13.4L210.3 14.0L209.8 14.1L209.4 14.5L208.9 14.8L208.4 14.0ZM220.7 13.7L220.7 13.4L221.2 12.7L221.7 12.9L222.1 13.3L222.6 13.4L222.6 14.0L222.1 14.1L221.7 14.5L221.2 14.7L220.7 14.0ZM233.0 13.7L233.0 13.4L233.5 12.6L234.0 13.0L234.4 13.3L234.9 13.4L234.9 14.0L234.4 14.2L234.0 14.4L233.5 14.8L233.0 14.0ZM245.3 13.7L245.3 13.4L245.8 12.7L246.3 12.9L246.8 13.3L247.2 13.4L247.2 14.0L246.8 14.2L246.3 14.5L245.8 14.7L245.3 14.0ZM257.6 13.7L257.6 13.4L258.1 12.6L258.6 13.0L259.1 13.3L259.5 13.4L259.5 14.0L259.1 14.1L258.6 14.5L258.1 14.8L257.6 14.0ZM270.0 13.7L270.0 13.4L270.4 12.8L270.9 13.0L271.4 13.3L271.8 13.4L271.8 14.0L271.4 14.2L270.9 14.4L270.4 14.7L270.0 14.0ZM282.3 13.7L282.3 13.4L282.7 12.7L283.2 13.0L283.7 13.3L284.2 13.4L284.2 14.0L283.7 14.1L283.2 14.4L282.7 14.7L282.3 14.0ZM294.6 13.7L294.6 13.4L295.0 12.7L295.5 13.0L296.0 13.3L296.5 13.4L296.5 14.0L296.0 14.1L295.5 14.4L295.0 14.7L294.6 14.0ZM306.9 13.7L306.9 13.4L307.4 12.6L307.8 12.9L308.3 13.3L308.8 13.4L308.8 14.0L308.3 14.1L307.8 14.5L307.4 14.8L306.9 14.0ZM319.2 13.7L319.2 13.4L319.7 12.7L320.1 13.0L320.6 13.3L321.1 13.4L321.1 14.0L320.6 14.1L320.1 14.5L319.7 14.8L319.2 14.0ZM331.5 13.7L331.5 13.4L332.0 12.8L332.4 13.0L332.9 13.3L333.4 13.4L333.4 14.0L332.9 14.2L332.4 14.5L332.0 14.7L331.5 14.0ZM343.8 13.7L343.8 13.4L344.3 12.6L344.8 12.9L345.2 13.3L345.7 13.4L345.7 14.0L345.2 14.2L344.8 14.5L344.3 14.9L343.8 14.0ZM356.1 13.7L356.1 13.4L356.6 12.7L357.1 12.9L357.5 13.3L358.0 13.4L358.0 14.0L357.5 14.1L357.1 14.5L356.6 14.7L356.1 14.0ZM368.4 13.7L368.4 13.4L368.9 12.6L369.4 13.0L369.9 13.3L370.3 13.4L370.3 14.0L369.9 14.2L369.4 14.5L368.9 14.8L368.4 14.0ZM380.7 13.7L380.7 13.4L381.2 12.6L381.7 13.0L382.2 13.3L382.6 13.4L382.6 14.0L382.2 14.2L381.7 14.5L381.2 14.8L380.7 14.0ZM393.1 13.7L393.1 13.4L393.5 12.6L394.0 13.0L394.5 13.3L395.0 13.4L395.0 14.0L394.5 14.1L394.0 14.4L393.5 14.8L393.1 14.0ZM405.4 13.7L405.4 13.4L405.8 12.7L406.3 13.0L406.8 13.3L407.3 13.4L407.3 14.0L406.8 14.2L406.3 14.4L405.8 14.7L405.4 14.0ZM417.7 13.7L417.7 13.4L418.1 12.8L418.6 13.0L419.1 13.3L419.6 13.4L419.6 14.0L419.1 14.1L418.6 14.4L418.1 14.7L417.7 14.0ZM430.0 13.7L430.0 13.4L430.5 12.7L430.9 13.0L431.4 13.3L431.9 13.4L431.9 14.0L431.4 14.2L430.9 14.4L430.5 14.7L430.0 14.0ZM442.3 13.7L442.3 13.4L442.8 12.6L443.2 12.9L443.7 13.3L444.2 13.4L444.2 14.0L443.7 14.1L443.2 14.5L442.8 14.9L442.3 14.0ZM454.6 13.7L454.6 13.4L455.1 12.7L455.6 13.0L456.0 13.3L456.5 13.4L456.5 14.0L456.0 14.2L455.6 14.5L455.1 14.8L454.6 14.0ZM466.9 13.7L466.9 13.4L467.4 12.8L467.9 12.9L468.3 13.3L468.8 13.4L468.8 14.0L468.3 14.2L467.9 14.5L467.4 14.7L466.9 14.0ZM479.2 13.7L479.2 13.4L479.7 12.8L480.2 12.9L480.6 13.3L481.1 13.4L481.1 14.0L480.6 14.1L480.2 14.5L479.7 14.7L479.2 14.0ZM491.5 13.7L491.5 13.4L492.0 12.7L492.5 13.0L493.0 13.3L493.4 13.4L493.4 14.0L493.0 14.2L492.5 14.4L492.0 14.8L491.5 14.0ZM503.8 13.7L503.8 13.4L504.3 12.7L504.8 13.0L505.3 13.3L505.7 13.4L505.7 14.0L505.3 14.2L504.8 14.5L504.3 14.8L503.8 14.0ZM516.2 13.7L516.2 13.4L516.6 12.7L517.1 13.0L517.6 13.3L518.0 13.4L518.0 14.0L517.6 14.2L517.1 14.4L516.6 14.8L516.2 14.0ZM528.5 13.7L528.5 13.4L528.9 12.6L529.4 12.9L529.9 13.3L530.4 13.4L530.4 14.0L529.9 14.2L529.4 14.5L528.9 14.8L528.5 14.0ZM540.8 13.7L540.8 13.4L541.2 12.7L541.7 12.9L542.2 13.3L542.7 13.4L542.7 14.0L542.2 14.2L541.7 14.5L541.2 14.7L540.8 14.0ZM553.1 13.7L553.1 13.4L553.6 12.6L554.0 13.0L554.5 13.3L555.0 13.4L555.0 14.0L554.5 14.2L554.0 14.5L553.6 14.9L553.1 14.0ZM565.4 13.7L565.4 13.4L565.9 12.7L566.3 13.0L566.8 13.3L567.3 13.4L567.3 14.0L566.8 14.2L566.3 14.5L565.9 14.7L565.4 14.0ZM577.7 13.7L577.7 13.4L578.2 12.6L578.6 12.9L579.1 13.3L579.6 13.4L579.6 14.0L579.1 14.2L578.6 14.5L578.2 14.8L577.7 14.0ZM590.0 13.7L590.0 13.4L590.5 12.6L591.0 12.9L591.4 13.3L591.9 13.4L591.9 14.0L591.4 14.2L591.0 14.5L590.5 14.9L590.0 14.0ZM602.3 13.7L602.3 13.4L602.8 12.7L603.3 13.0L603.7 13.3L604.2 13.4L604.2 14.0L603.7 14.1L603.3 14.4L602.8 14.8L602.3 14.0ZM614.6 13.7L614.6 13.4L615.1 12.7L615.6 12.9L616.1 13.3L616.5 13.4L616.5 14.0L616.1 14.2L615.6 14.5L615.1 14.7L614.6 14.0ZM208.2 10.9h1.0v5.6h-1.0ZM220.5 10.9h1.0v5.6h-1.0ZM232.8 10.9h1.0v5.6h-1.0ZM245.1 10.9h1.0v5.6h-1.0ZM257.4 10.9h1.0v5.6h-1.0ZM269.8 10.9h1.0v5.6h-1.0ZM282.1 10.9h1.0v5.6h-1.0ZM294.4 10.9h1.0v5.6h-1.0ZM306.7 10.9h1.0v5.6h-1.0ZM319.0 10.9h1.0v5.6h-1.0ZM331.3 10.9h1.0v5.6h-1.0ZM343.6 10.9h1.0v5.6h-1.0ZM355.9 10.9h1.0v5.6h-1.0ZM368.2 10.9h1.0v5.6h-1.0ZM380.5 10.9h1.0v5.6h-1.0ZM392.9 10.9h1.0v5.6h-1.0ZM405.2 10.9h1.0v5.6h-1.0ZM417.5 10.9h1.0v5.6h-1.0ZM429.8 10.9h1.0v5.6h-1.0ZM442.1 10.9h1.0v5.6h-1.0ZM454.4 10.9h1.0v5.6h-1.0ZM466.7 10.9h1.0v5.6h-1.0ZM479.0 10.9h1.0v5.6h-1.0ZM491.3 10.9h1.0v5.6h-1.0ZM503.6 10.9h1.0v5.6h-1.0ZM516.0 10.9h1.0v5.6h-1.0ZM528.3 10.9h1.0v5.6h-1.0ZM540.6 10.9h1.0v5.6h-1.0ZM552.9 10.9h1.0v5.6h-1.0ZM565.2 10.9h1.0v5.6h-1.0ZM577.5 10.9h1.0v5.6h-1.0ZM589.8 10.9h1.0v5.6h-1.0ZM602.1 10.9h1.0v5.6h-1.0ZM614.4 10.9h1.0v5.6h-1.0ZM208.4 41.0L208.4 40.7L208.9 39.9L209.4 40.3L209.8 40.6L210.3 40.7L210.3 41.3L209.8 41.4L209.4 41.7L208.9 42.0L208.4 41.3ZM220.7 41.0L220.7 40.7L221.2 39.9L221.7 40.3L222.1 40.5L222.6 40.7L222.6 41.3L222.1 41.4L221.7 41.7L221.2 42.1L220.7 41.3ZM233.0 41.0L233.0 40.7L233.5 40.0L234.0 40.3L234.4 40.6L234.9 40.7L234.9 41.3L234.4 41.4L234.0 41.7L233.5 41.9L233.0 41.3ZM245.3 41.0L245.3 40.7L245.8 39.9L246.3 40.3L246.8 40.5L247.2 40.7L247.2 41.3L246.8 41.4L246.3 41.7L245.8 42.1L245.3 41.3ZM257.6 41.0L257.6 40.7L258.1 40.0L258.6 40.3L259.1 40.5L259.5 40.7L259.5 41.3L259.1 41.4L258.6 41.7L258.1 41.9L257.6 41.3ZM270.0 41.0L270.0 40.7L270.4 39.8L270.9 40.2L271.4 40.6L271.8 40.7L271.8 41.3L271.4 41.4L270.9 41.7L270.4 42.1L270.0 41.3ZM282.3 41.0L282.3 40.7L282.7 39.9L283.2 40.3L283.7 40.6L284.2 40.7L284.2 41.3L283.7 41.4L283.2 41.7L282.7 42.1L282.3 41.3ZM294.6 41.0L294.6 40.7L295.0 39.9L295.5 40.3L296.0 40.5L296.5 40.7L296.5 41.3L296.0 41.4L295.5 41.7L295.0 42.1L294.6 41.3ZM306.9 41.0L306.9 40.7L307.4 39.9L307.8 40.2L308.3 40.5L308.8 40.7L308.8 41.3L308.3 41.4L307.8 41.8L307.4 42.1L306.9 41.3ZM319.2 41.0L319.2 40.7L319.7 40.0L320.1 40.2L320.6 40.5L321.1 40.7L321.1 41.3L320.6 41.4L320.1 41.8L319.7 42.0L319.2 41.3ZM331.5 41.0L331.5 40.7L332.0 40.0L332.4 40.3L332.9 40.5L333.4 40.7L333.4 41.3L332.9 41.4L332.4 41.7L332.0 42.0L331.5 41.3ZM343.8 41.0L343.8 40.7L344.3 39.9L344.8 40.2L345.2 40.5L345.7 40.7L345.7 41.3L345.2 41.4L344.8 41.8L344.3 42.1L343.8 41.3ZM356.1 41.0L356.1 40.7L356.6 39.9L357.1 40.2L357.5 40.6L358.0 40.7L358.0 41.3L357.5 41.4L357.1 41.7L356.6 42.0L356.1 41.3ZM368.4 41.0L368.4 40.7L368.9 40.0L369.4 40.2L369.9 40.6L370.3 40.7L370.3 41.3L369.9 41.4L369.4 41.7L368.9 41.9L368.4 41.3ZM380.7 41.0L380.7 40.7L381.2 40.0L381.7 40.2L382.2 40.5L382.6 40.7L382.6 41.3L382.2 41.4L381.7 41.7L381.2 42.0L380.7 41.3ZM393.1 41.0L393.1 40.7L393.5 39.9L394.0 40.3L394.5 40.5L395.0 40.7L395.0 41.3L394.5 41.4L394.0 41.7L393.5 42.0L393.1 41.3ZM405.4 41.0L405.4 40.7L405.8 40.0L406.3 40.3L406.8 40.5L407.3 40.7L407.3 41.3L406.8 41.4L406.3 41.7L405.8 42.0L405.4 41.3ZM417.7 41.0L417.7 40.7L418.1 40.0L418.6 40.2L419.1 40.6L419.6 40.7L419.6 41.3L419.1 41.4L418.6 41.8L418.1 41.9L417.7 41.3ZM430.0 41.0L430.0 40.7L430.5 39.9L430.9 40.2L431.4 40.6L431.9 40.7L431.9 41.3L431.4 41.4L430.9 41.8L430.5 42.1L430.0 41.3ZM442.3 41.0L442.3 40.7L442.8 39.9L443.2 40.3L443.7 40.5L444.2 40.7L444.2 41.3L443.7 41.4L443.2 41.7L442.8 42.0L442.3 41.3ZM454.6 41.0L454.6 40.7L455.1 39.9L455.6 40.2L456.0 40.5L456.5 40.7L456.5 41.3L456.0 41.4L455.6 41.7L455.1 42.1L454.6 41.3ZM466.9 41.0L466.9 40.7L467.4 40.0L467.9 40.2L468.3 40.6L468.8 40.7L468.8 41.3L468.3 41.4L467.9 41.8L467.4 41.9L466.9 41.3ZM479.2 41.0L479.2 40.7L479.7 39.9L480.2 40.3L480.6 40.5L481.1 40.7L481.1 41.3L480.6 41.4L480.2 41.7L479.7 42.1L479.2 41.3ZM491.5 41.0L491.5 40.7L492.0 40.0L492.5 40.3L493.0 40.5L493.4 40.7L493.4 41.3L493.0 41.4L492.5 41.7L492.0 42.0L491.5 41.3ZM503.8 41.0L503.8 40.7L504.3 39.9L504.8 40.3L505.3 40.6L505.7 40.7L505.7 41.3L505.3 41.4L504.8 41.7L504.3 42.0L503.8 41.3ZM516.2 41.0L516.2 40.7L516.6 39.9L517.1 40.2L517.6 40.6L518.0 40.7L518.0 41.3L517.6 41.4L517.1 41.7L516.6 42.1L516.2 41.3ZM528.5 41.0L528.5 40.7L528.9 40.0L529.4 40.3L529.9 40.5L530.4 40.7L530.4 41.3L529.9 41.4L529.4 41.7L528.9 42.0L528.5 41.3ZM540.8 41.0L540.8 40.7L541.2 40.0L541.7 40.2L542.2 40.6L542.7 40.7L542.7 41.3L542.2 41.4L541.7 41.7L541.2 41.9L540.8 41.3ZM553.1 41.0L553.1 40.7L553.6 39.9L554.0 40.2L554.5 40.5L555.0 40.7L555.0 41.3L554.5 41.4L554.0 41.7L553.6 42.1L553.1 41.3ZM565.4 41.0L565.4 40.7L565.9 40.0L566.3 40.2L566.8 40.6L567.3 40.7L567.3 41.3L566.8 41.4L566.3 41.8L565.9 41.9L565.4 41.3ZM577.7 41.0L577.7 40.7L578.2 40.0L578.6 40.3L579.1 40.5L579.6 40.7L579.6 41.3L579.1 41.4L578.6 41.7L578.2 41.9L577.7 41.3ZM590.0 41.0L590.0 40.7L590.5 39.9L591.0 40.2L591.4 40.5L591.9 40.7L591.9 41.3L591.4 41.4L591.0 41.8L590.5 42.1L590.0 41.3ZM602.3 41.0L602.3 40.7L602.8 40.0L603.3 40.2L603.7 40.6L604.2 40.7L604.2 41.3L603.7 41.4L603.3 41.8L602.8 42.0L602.3 41.3ZM614.6 41.0L614.6 40.7L615.1 39.9L615.6 40.3L616.1 40.6L616.5 40.7L616.5 41.3L616.1 41.4L615.6 41.7L615.1 42.0L614.6 41.3ZM208.2 38.2h1.0v5.6h-1.0ZM220.5 38.2h1.0v5.6h-1.0ZM232.8 38.2h1.0v5.6h-1.0ZM245.1 38.2h1.0v5.6h-1.0ZM257.4 38.2h1.0v5.6h-1.0ZM269.8 38.2h1.0v5.6h-1.0ZM282.1 38.2h1.0v5.6h-1.0ZM294.4 38.2h1.0v5.6h-1.0ZM306.7 38.2h1.0v5.6h-1.0ZM319.0 38.2h1.0v5.6h-1.0ZM331.3 38.2h1.0v5.6h-1.0ZM343.6 38.2h1.0v5.6h-1.0ZM355.9 38.2h1.0v5.6h-1.0ZM368.2 38.2h1.0v5.6h-1.0ZM380.5 38.2h1.0v5.6h-1.0ZM392.9 38.2h1.0v5.6h-1.0ZM405.2 38.2h1.0v5.6h-1.0ZM417.5 38.2h1.0v5.6h-1.0ZM429.8 38.2h1.0v5.6h-1.0ZM442.1 38.2h1.0v5.6h-1.0ZM454.4 38.2h1.0v5.6h-1.0ZM466.7 38.2h1.0v5.6h-1.0ZM479.0 38.2h1.0v5.6h-1.0ZM491.3 38.2h1.0v5.6h-1.0ZM503.6 38.2h1.0v5.6h-1.0ZM516.0 38.2h1.0v5.6h-1.0ZM528.3 38.2h1.0v5.6h-1.0ZM540.6 38.2h1.0v5.6h-1.0ZM552.9 38.2h1.0v5.6h-1.0ZM565.2 38.2h1.0v5.6h-1.0ZM577.5 38.2h1.0v5.6h-1.0ZM589.8 38.2h1.0v5.6h-1.0ZM602.1 38.2h1.0v5.6h-1.0ZM614.4 38.2h1.0v5.6h-1.0Z" fill="#0e3048"/></svg><b>Claps</b></div><div class="clip" style="left:196.0px;top:278.3px;width:221.2px;height:54.5px;background:#36b09c"><svg width="221.2" height="54.5"><path d="M0 13.7H221.2M0 41.0H221.2" stroke="#0a5044" stroke-width="1" stroke-opacity="0.45"/><path d="M8.0 13.7L8.0 13.4L8.4 13.4L8.7 13.3L9.1 13.0L9.4 12.7L9.8 12.5L10.1 12.2L10.5 11.9L10.8 11.6L11.2 11.3L11.5 11.0L11.9 10.7L12.2 7.2L12.6 7.2L12.9 12.9L13.3 12.9L13.6 12.9L13.6 14.5L13.3 14.5L12.9 14.5L12.6 20.2L12.2 20.2L11.9 16.7L11.5 16.4L11.2 16.1L10.8 15.8L10.5 15.5L10.1 15.3L9.8 15.0L9.4 14.7L9.1 14.4L8.7 14.2L8.4 14.0L8.0 14.0ZM14.2 13.7L14.2 13.4L14.5 13.4L14.9 13.4L15.2 13.2L15.6 13.0L15.9 12.8L16.3 12.5L16.6 12.3L17.0 12.1L17.3 11.9L17.7 11.6L18.0 11.4L18.4 8.7L18.7 8.7L19.1 13.1L19.4 13.1L19.8 13.1L19.8 14.3L19.4 14.3L19.1 14.3L18.7 18.7L18.4 18.7L18.0 16.0L17.7 15.8L17.3 15.6L17.0 15.3L16.6 15.1L16.3 14.9L15.9 14.7L15.6 14.5L15.2 14.3L14.9 14.1L14.5 14.0L14.2 14.0ZM20.3 13.7L20.3 13.4L20.7 13.4L21.0 13.3L21.4 13.1L21.7 12.8L22.1 12.6L22.4 12.3L22.8 12.0L23.1 11.8L23.5 11.5L23.8 11.2L24.2 11.0L24.5 7.7L24.9 7.7L25.2 13.0L25.6 13.0L25.9 13.0L25.9 14.4L25.6 14.4L25.2 14.4L24.9 19.7L24.5 19.7L24.2 16.5L23.8 16.2L23.5 15.9L23.1 15.7L22.8 15.4L22.4 15.1L22.1 14.9L21.7 14.6L21.4 14.4L21.0 14.1L20.7 14.0L20.3 14.0ZM26.5 13.7L26.5 13.4L26.8 13.4L27.2 13.3L27.5 13.1L27.9 12.9L28.2 12.7L28.6 12.4L28.9 12.2L29.3 11.9L29.6 11.7L30.0 11.4L30.3 11.2L30.7 8.2L31.0 8.2L31.4 13.1L31.7 13.1L32.1 13.1L32.1 14.4L31.7 14.4L31.4 14.4L31.0 19.2L30.7 19.2L30.3 16.3L30.0 16.0L29.6 15.8L29.3 15.5L28.9 15.3L28.6 15.0L28.2 14.8L27.9 14.6L27.5 14.3L27.2 14.1L26.8 14.0L26.5 14.0ZM32.6 13.7L32.6 13.4L33.0 13.4L33.3 13.4L33.7 13.3L34.0 13.1L34.4 13.0L34.7 12.8L35.1 12.6L35.4 12.4L35.8 12.2L36.1 12.1L36.5 11.9L36.8 9.7L37.2 9.7L37.5 13.2L37.9 13.2L38.2 13.2L38.2 14.2L37.9 14.2L37.5 14.2L37.2 17.7L36.8 17.7L36.5 15.6L36.1 15.4L35.8 15.2L35.4 15.0L35.1 14.8L34.7 14.7L34.4 14.5L34.0 14.3L33.7 14.2L33.3 14.0L33.0 14.0L32.6 14.0ZM38.8 13.7L38.8 13.4L39.1 13.4L39.5 13.2L39.8 13.0L40.2 12.7L40.5 12.4L40.9 12.1L41.2 11.8L41.6 11.5L41.9 11.1L42.3 10.8L42.6 10.5L43.0 6.7L43.3 6.7L43.7 12.9L44.0 12.9L44.4 12.9L44.4 14.6L44.0 14.6L43.7 14.6L43.3 20.7L43.0 20.7L42.6 17.0L42.3 16.6L41.9 16.3L41.6 16.0L41.2 15.7L40.9 15.4L40.5 15.1L40.2 14.8L39.8 14.5L39.5 14.2L39.1 14.0L38.8 14.0ZM44.9 13.7L44.9 13.4L45.3 13.4L45.6 13.2L46.0 13.0L46.3 12.7L46.7 12.4L47.0 12.1L47.4 11.8L47.7 11.5L48.1 11.1L48.4 10.8L48.8 10.5L49.1 6.7L49.5 6.7L49.8 12.9L50.2 12.9L50.5 12.9L50.5 14.6L50.2 14.6L49.8 14.6L49.5 20.7L49.1 20.7L48.8 17.0L48.4 16.6L48.1 16.3L47.7 16.0L47.4 15.7L47.0 15.4L46.7 15.1L46.3 14.8L46.0 14.5L45.6 14.2L45.3 14.0L44.9 14.0ZM51.1 13.7L51.1 13.4L51.4 13.4L51.8 13.3L52.1 13.1L52.5 12.9L52.8 12.7L53.2 12.4L53.5 12.2L53.9 11.9L54.2 11.7L54.6 11.4L54.9 11.2L55.3 8.2L55.6 8.2L56.0 13.1L56.3 13.1L56.7 13.1L56.7 14.4L56.3 14.4L56.0 14.4L55.6 19.2L55.3 19.2L54.9 16.3L54.6 16.0L54.2 15.8L53.9 15.5L53.5 15.3L53.2 15.0L52.8 14.8L52.5 14.6L52.1 14.3L51.8 14.1L51.4 14.0L51.1 14.0ZM57.2 13.7L57.2 13.4L57.6 13.4L57.9 13.3L58.3 13.0L58.6 12.7L59.0 12.5L59.3 12.2L59.7 11.9L60.0 11.6L60.4 11.3L60.7 11.0L61.1 10.7L61.4 7.2L61.8 7.2L62.1 12.9L62.5 12.9L62.8 12.9L62.8 14.5L62.5 14.5L62.1 14.5L61.8 20.2L61.4 20.2L61.1 16.7L60.7 16.4L60.4 16.1L60.0 15.8L59.7 15.5L59.3 15.3L59.0 15.0L58.6 14.7L58.3 14.4L57.9 14.2L57.6 14.0L57.2 14.0ZM63.4 13.7L63.4 13.4L63.7 13.4L64.1 13.4L64.4 13.3L64.8 13.1L65.1 13.0L65.5 12.8L65.8 12.6L66.2 12.4L66.5 12.2L66.9 12.1L67.2 11.9L67.6 9.7L67.9 9.7L68.3 13.2L68.6 13.2L69.0 13.2L69.0 14.2L68.6 14.2L68.3 14.2L67.9 17.7L67.6 17.7L67.2 15.6L66.9 15.4L66.5 15.2L66.2 15.0L65.8 14.8L65.5 14.7L65.1 14.5L64.8 14.3L64.4 14.2L64.1 14.0L63.7 14.0L63.4 14.0ZM69.5 13.7L69.5 13.4L69.9 13.4L70.2 13.2L70.6 13.0L70.9 12.7L71.3 12.4L71.6 12.1L72.0 11.8L72.3 11.5L72.7 11.1L73.0 10.8L73.4 10.5L73.7 6.7L74.1 6.7L74.4 12.9L74.8 12.9L75.1 12.9L75.1 14.6L74.8 14.6L74.4 14.6L74.1 20.7L73.7 20.7L73.4 17.0L73.0 16.6L72.7 16.3L72.3 16.0L72.0 15.7L71.6 15.4L71.3 15.1L70.9 14.8L70.6 14.5L70.2 14.2L69.9 14.0L69.5 14.0ZM75.7 13.7L75.7 13.4L76.1 13.4L76.4 13.3L76.8 13.1L77.1 12.9L77.5 12.7L77.8 12.4L78.2 12.2L78.5 11.9L78.9 11.7L79.2 11.4L79.6 11.2L79.9 8.2L80.3 8.2L80.6 13.1L81.0 13.1L81.3 13.1L81.3 14.4L81.0 14.4L80.6 14.4L80.3 19.2L79.9 19.2L79.6 16.3L79.2 16.0L78.9 15.8L78.5 15.5L78.2 15.3L77.8 15.0L77.5 14.8L77.1 14.6L76.8 14.3L76.4 14.1L76.1 14.0L75.7 14.0ZM81.9 13.7L81.9 13.4L82.2 13.4L82.6 13.4L82.9 13.3L83.3 13.2L83.6 13.0L84.0 12.9L84.3 12.7L84.7 12.6L85.0 12.4L85.4 12.2L85.7 12.1L86.1 10.1L86.4 10.1L86.8 13.3L87.1 13.3L87.5 13.3L87.5 14.2L87.1 14.2L86.8 14.2L86.4 17.3L86.1 17.3L85.7 15.4L85.4 15.2L85.0 15.1L84.7 14.9L84.3 14.7L84.0 14.6L83.6 14.4L83.3 14.3L82.9 14.1L82.6 14.0L82.2 14.0L81.9 14.0ZM88.0 13.7L88.0 13.4L88.4 13.4L88.7 13.4L89.1 13.2L89.4 13.0L89.8 12.8L90.1 12.5L90.5 12.3L90.8 12.1L91.2 11.9L91.5 11.6L91.9 11.4L92.2 8.7L92.6 8.7L92.9 13.1L93.3 13.1L93.6 13.1L93.6 14.3L93.3 14.3L92.9 14.3L92.6 18.7L92.2 18.7L91.9 16.0L91.5 15.8L91.2 15.6L90.8 15.3L90.5 15.1L90.1 14.9L89.8 14.7L89.4 14.5L89.1 14.3L88.7 14.1L88.4 14.0L88.0 14.0ZM94.2 13.7L94.2 13.4L94.5 13.4L94.9 13.4L95.2 13.3L95.6 13.1L95.9 13.0L96.3 12.8L96.6 12.6L97.0 12.4L97.3 12.2L97.7 12.1L98.0 11.9L98.4 9.7L98.7 9.7L99.1 13.2L99.4 13.2L99.8 13.2L99.8 14.2L99.4 14.2L99.1 14.2L98.7 17.7L98.4 17.7L98.0 15.6L97.7 15.4L97.3 15.2L97.0 15.0L96.6 14.8L96.3 14.7L95.9 14.5L95.6 14.3L95.2 14.2L94.9 14.0L94.5 14.0L94.2 14.0ZM100.3 13.7L100.3 13.4L100.7 13.4L101.0 13.4L101.4 13.3L101.7 13.1L102.1 13.0L102.4 12.8L102.8 12.6L103.1 12.4L103.5 12.2L103.8 12.1L104.2 11.9L104.5 9.7L104.9 9.7L105.2 13.2L105.6 13.2L105.9 13.2L105.9 14.2L105.6 14.2L105.2 14.2L104.9 17.7L104.5 17.7L104.2 15.6L103.8 15.4L103.5 15.2L103.1 15.0L102.8 14.8L102.4 14.7L102.1 14.5L101.7 14.3L101.4 14.2L101.0 14.0L100.7 14.0L100.3 14.0ZM106.5 13.7L106.5 13.4L106.8 13.4L107.2 13.3L107.5 13.0L107.9 12.7L108.2 12.5L108.6 12.2L108.9 11.9L109.3 11.6L109.6 11.3L110.0 11.0L110.3 10.7L110.7 7.2L111.0 7.2L111.4 12.9L111.7 12.9L112.1 12.9L112.1 14.5L111.7 14.5L111.4 14.5L111.0 20.2L110.7 20.2L110.3 16.7L110.0 16.4L109.6 16.1L109.3 15.8L108.9 15.5L108.6 15.3L108.2 15.0L107.9 14.7L107.5 14.4L107.2 14.2L106.8 14.0L106.5 14.0ZM112.6 13.7L112.6 13.4L113.0 13.4L113.3 13.4L113.7 13.3L114.0 13.2L114.4 13.0L114.7 12.9L115.1 12.7L115.4 12.6L115.8 12.4L116.1 12.2L116.5 12.1L116.8 10.1L117.2 10.1L117.5 13.3L117.9 13.3L118.2 13.3L118.2 14.2L117.9 14.2L117.5 14.2L117.2 17.3L116.8 17.3L116.5 15.4L116.1 15.2L115.8 15.1L115.4 14.9L115.1 14.7L114.7 14.6L114.4 14.4L114.0 14.3L113.7 14.1L113.3 14.0L113.0 14.0L112.6 14.0ZM118.8 13.7L118.8 13.4L119.1 13.4L119.5 13.2L119.8 13.0L120.2 12.7L120.5 12.4L120.9 12.1L121.2 11.8L121.6 11.5L121.9 11.1L122.3 10.8L122.6 10.5L123.0 6.7L123.3 6.7L123.7 12.9L124.0 12.9L124.4 12.9L124.4 14.6L124.0 14.6L123.7 14.6L123.3 20.7L123.0 20.7L122.6 17.0L122.3 16.6L121.9 16.3L121.6 16.0L121.2 15.7L120.9 15.4L120.5 15.1L120.2 14.8L119.8 14.5L119.5 14.2L119.1 14.0L118.8 14.0ZM124.9 13.7L124.9 13.4L125.3 13.4L125.6 13.2L126.0 12.9L126.3 12.6L126.7 12.3L127.0 11.9L127.4 11.6L127.7 11.3L128.1 10.9L128.4 10.6L128.8 10.2L129.1 6.1L129.5 6.1L129.8 12.8L130.2 12.8L130.5 12.8L130.5 14.6L130.2 14.6L129.8 14.6L129.5 21.3L129.1 21.3L128.8 17.2L128.4 16.9L128.1 16.5L127.7 16.2L127.4 15.9L127.0 15.5L126.7 15.2L126.3 14.9L126.0 14.6L125.6 14.3L125.3 14.0L124.9 14.0ZM131.1 13.7L131.1 13.4L131.4 13.4L131.8 13.3L132.1 13.1L132.5 12.9L132.8 12.7L133.2 12.4L133.5 12.2L133.9 11.9L134.2 11.7L134.6 11.4L134.9 11.2L135.3 8.2L135.6 8.2L136.0 13.1L136.3 13.1L136.7 13.1L136.7 14.4L136.3 14.4L136.0 14.4L135.6 19.2L135.3 19.2L134.9 16.3L134.6 16.0L134.2 15.8L133.9 15.5L133.5 15.3L133.2 15.0L132.8 14.8L132.5 14.6L132.1 14.3L131.8 14.1L131.4 14.0L131.1 14.0ZM137.3 13.7L137.3 13.4L137.6 13.4L138.0 13.4L138.3 13.3L138.7 13.2L139.0 13.0L139.4 12.9L139.7 12.7L140.1 12.6L140.4 12.4L140.8 12.2L141.1 12.1L141.5 10.1L141.8 10.1L142.2 13.3L142.5 13.3L142.9 13.3L142.9 14.2L142.5 14.2L142.2 14.2L141.8 17.3L141.5 17.3L141.1 15.4L140.8 15.2L140.4 15.1L140.1 14.9L139.7 14.7L139.4 14.6L139.0 14.4L138.7 14.3L138.3 14.1L138.0 14.0L137.6 14.0L137.3 14.0ZM143.4 13.7L143.4 13.4L143.8 13.4L144.1 13.3L144.5 13.1L144.8 12.8L145.2 12.6L145.5 12.3L145.9 12.0L146.2 11.8L146.6 11.5L146.9 11.2L147.3 11.0L147.6 7.7L148.0 7.7L148.3 13.0L148.7 13.0L149.0 13.0L149.0 14.4L148.7 14.4L148.3 14.4L148.0 19.7L147.6 19.7L147.3 16.5L146.9 16.2L146.6 15.9L146.2 15.7L145.9 15.4L145.5 15.1L145.2 14.9L144.8 14.6L144.5 14.4L144.1 14.1L143.8 14.0L143.4 14.0ZM149.6 13.7L149.6 13.4L149.9 13.4L150.3 13.3L150.6 13.0L151.0 12.7L151.3 12.5L151.7 12.2L152.0 11.9L152.4 11.6L152.7 11.3L153.1 11.0L153.4 10.7L153.8 7.2L154.1 7.2L154.5 12.9L154.8 12.9L155.2 12.9L155.2 14.5L154.8 14.5L154.5 14.5L154.1 20.2L153.8 20.2L153.4 16.7L153.1 16.4L152.7 16.1L152.4 15.8L152.0 15.5L151.7 15.3L151.3 15.0L151.0 14.7L150.6 14.4L150.3 14.2L149.9 14.0L149.6 14.0ZM155.7 13.7L155.7 13.4L156.1 13.4L156.4 13.3L156.8 13.1L157.1 12.9L157.5 12.7L157.8 12.4L158.2 12.2L158.5 11.9L158.9 11.7L159.2 11.4L159.6 11.2L159.9 8.2L160.3 8.2L160.6 13.1L161.0 13.1L161.3 13.1L161.3 14.4L161.0 14.4L160.6 14.4L160.3 19.2L159.9 19.2L159.6 16.3L159.2 16.0L158.9 15.8L158.5 15.5L158.2 15.3L157.8 15.0L157.5 14.8L157.1 14.6L156.8 14.3L156.4 14.1L156.1 14.0L155.7 14.0ZM161.9 13.7L161.9 13.4L162.2 13.4L162.6 13.3L162.9 13.0L163.3 12.7L163.6 12.5L164.0 12.2L164.3 11.9L164.7 11.6L165.0 11.3L165.4 11.0L165.7 10.7L166.1 7.2L166.4 7.2L166.8 12.9L167.1 12.9L167.5 12.9L167.5 14.5L167.1 14.5L166.8 14.5L166.4 20.2L166.1 20.2L165.7 16.7L165.4 16.4L165.0 16.1L164.7 15.8L164.3 15.5L164.0 15.3L163.6 15.0L163.3 14.7L162.9 14.4L162.6 14.2L162.2 14.0L161.9 14.0ZM168.0 13.7L168.0 13.4L168.4 13.4L168.7 13.4L169.1 13.2L169.4 13.0L169.8 12.8L170.1 12.5L170.5 12.3L170.8 12.1L171.2 11.9L171.5 11.6L171.9 11.4L172.2 8.7L172.6 8.7L172.9 13.1L173.3 13.1L173.6 13.1L173.6 14.3L173.3 14.3L172.9 14.3L172.6 18.7L172.2 18.7L171.9 16.0L171.5 15.8L171.2 15.6L170.8 15.3L170.5 15.1L170.1 14.9L169.8 14.7L169.4 14.5L169.1 14.3L168.7 14.1L168.4 14.0L168.0 14.0ZM174.2 13.7L174.2 13.4L174.5 13.4L174.9 13.4L175.2 13.3L175.6 13.2L175.9 13.0L176.3 12.9L176.6 12.7L177.0 12.6L177.3 12.4L177.7 12.2L178.0 12.1L178.4 10.1L178.7 10.1L179.1 13.3L179.4 13.3L179.8 13.3L179.8 14.2L179.4 14.2L179.1 14.2L178.7 17.3L178.4 17.3L178.0 15.4L177.7 15.2L177.3 15.1L177.0 14.9L176.6 14.7L176.3 14.6L175.9 14.4L175.6 14.3L175.2 14.1L174.9 14.0L174.5 14.0L174.2 14.0ZM180.3 13.7L180.3 13.4L180.7 13.4L181.0 13.3L181.4 13.0L181.7 12.7L182.1 12.5L182.4 12.2L182.8 11.9L183.1 11.6L183.5 11.3L183.8 11.0L184.2 10.7L184.5 7.2L184.9 7.2L185.2 12.9L185.6 12.9L185.9 12.9L185.9 14.5L185.6 14.5L185.2 14.5L184.9 20.2L184.5 20.2L184.2 16.7L183.8 16.4L183.5 16.1L183.1 15.8L182.8 15.5L182.4 15.3L182.1 15.0L181.7 14.7L181.4 14.4L181.0 14.2L180.7 14.0L180.3 14.0ZM186.5 13.7L186.5 13.4L186.8 13.4L187.2 13.4L187.5 13.3L187.9 13.1L188.2 12.9L188.6 12.7L188.9 12.5L189.3 12.4L189.6 12.2L190.0 12.0L190.3 11.8L190.7 9.5L191.0 9.5L191.4 13.2L191.7 13.2L192.1 13.2L192.1 14.2L191.7 14.2L191.4 14.2L191.0 17.9L190.7 17.9L190.3 15.7L190.0 15.5L189.6 15.3L189.3 15.1L188.9 14.9L188.6 14.7L188.2 14.5L187.9 14.4L187.5 14.2L187.2 14.0L186.8 14.0L186.5 14.0ZM192.6 13.7L192.6 13.4L193.0 13.4L193.3 13.4L193.7 13.4L194.0 13.4L194.4 13.3L194.7 13.2L195.1 13.1L195.4 12.9L195.8 12.8L196.1 12.7L196.5 12.6L196.8 11.3L197.2 11.3L197.5 13.4L197.9 13.4L198.2 13.4L198.2 14.0L197.9 14.0L197.5 14.0L197.2 16.1L196.8 16.1L196.5 14.8L196.1 14.7L195.8 14.6L195.4 14.5L195.1 14.4L194.7 14.3L194.4 14.2L194.0 14.1L193.7 14.0L193.3 14.0L193.0 14.0L192.6 14.0ZM198.8 13.7L198.8 13.4L199.2 13.4L199.5 13.4L199.9 13.4L200.2 13.2L200.6 13.1L200.9 12.9L201.3 12.8L201.6 12.7L202.0 12.5L202.3 12.4L202.7 12.2L203.0 10.4L203.4 10.4L203.7 13.3L204.1 13.3L204.4 13.3L204.4 14.1L204.1 14.1L203.7 14.1L203.4 17.0L203.0 17.0L202.7 15.2L202.3 15.1L202.0 14.9L201.6 14.8L201.3 14.7L200.9 14.5L200.6 14.4L200.2 14.2L199.9 14.1L199.5 14.0L199.2 14.0L198.8 14.0ZM205.0 13.7L205.0 13.4L205.3 13.4L205.7 13.4L206.0 13.3L206.4 13.1L206.7 12.9L207.1 12.7L207.4 12.5L207.8 12.4L208.1 12.2L208.5 12.0L208.8 11.8L209.2 9.5L209.5 9.5L209.9 13.2L210.2 13.2L210.6 13.2L210.6 14.2L210.2 14.2L209.9 14.2L209.5 17.9L209.2 17.9L208.8 15.7L208.5 15.5L208.1 15.3L207.8 15.1L207.4 14.9L207.1 14.7L206.7 14.5L206.4 14.4L206.0 14.2L205.7 14.0L205.3 14.0L205.0 14.0ZM8.0 41.0L8.0 40.7L8.4 40.7L8.7 40.6L9.1 40.4L9.4 40.1L9.8 39.9L10.1 39.7L10.5 39.4L10.8 39.2L11.2 38.9L11.5 38.7L11.9 38.4L12.2 35.5L12.6 35.5L12.9 40.3L13.3 40.3L13.6 40.3L13.6 41.6L13.3 41.6L12.9 41.6L12.6 46.5L12.2 46.5L11.9 43.5L11.5 43.3L11.2 43.0L10.8 42.8L10.5 42.5L10.1 42.3L9.8 42.0L9.4 41.8L9.1 41.6L8.7 41.4L8.4 41.3L8.0 41.3ZM14.2 41.0L14.2 40.7L14.5 40.7L14.9 40.7L15.2 40.5L15.6 40.3L15.9 40.2L16.3 40.0L16.6 39.8L17.0 39.6L17.3 39.4L17.7 39.2L18.0 39.0L18.4 36.7L18.7 36.7L19.1 40.5L19.4 40.5L19.8 40.5L19.8 41.5L19.4 41.5L19.1 41.5L18.7 45.2L18.4 45.2L18.0 42.9L17.7 42.7L17.3 42.5L17.0 42.4L16.6 42.2L16.3 42.0L15.9 41.8L15.6 41.6L15.2 41.4L14.9 41.3L14.5 41.3L14.2 41.3ZM20.3 41.0L20.3 40.7L20.7 40.7L21.0 40.6L21.4 40.4L21.7 40.2L22.1 40.0L22.4 39.8L22.8 39.5L23.1 39.3L23.5 39.1L23.8 38.9L24.2 38.6L24.5 35.9L24.9 35.9L25.2 40.4L25.6 40.4L25.9 40.4L25.9 41.6L25.6 41.6L25.2 41.6L24.9 46.1L24.5 46.1L24.2 43.3L23.8 43.1L23.5 42.9L23.1 42.6L22.8 42.4L22.4 42.2L22.1 42.0L21.7 41.7L21.4 41.5L21.0 41.3L20.7 41.3L20.3 41.3ZM26.5 41.0L26.5 40.7L26.8 40.7L27.2 40.6L27.5 40.5L27.9 40.3L28.2 40.1L28.6 39.9L28.9 39.7L29.3 39.5L29.6 39.2L30.0 39.0L30.3 38.8L30.7 36.3L31.0 36.3L31.4 40.4L31.7 40.4L32.1 40.4L32.1 41.5L31.7 41.5L31.4 41.5L31.0 45.6L30.7 45.6L30.3 43.1L30.0 42.9L29.6 42.7L29.3 42.5L28.9 42.3L28.6 42.1L28.2 41.9L27.9 41.7L27.5 41.5L27.2 41.3L26.8 41.3L26.5 41.3ZM32.6 41.0L32.6 40.7L33.0 40.7L33.3 40.7L33.7 40.6L34.0 40.5L34.4 40.3L34.7 40.2L35.1 40.0L35.4 39.9L35.8 39.7L36.1 39.6L36.5 39.4L36.8 37.6L37.2 37.6L37.5 40.6L37.9 40.6L38.2 40.6L38.2 41.4L37.9 41.4L37.5 41.4L37.2 44.4L36.8 44.4L36.5 42.5L36.1 42.4L35.8 42.2L35.4 42.1L35.1 41.9L34.7 41.8L34.4 41.6L34.0 41.5L33.7 41.4L33.3 41.3L33.0 41.3L32.6 41.3ZM38.8 41.0L38.8 40.7L39.1 40.7L39.5 40.6L39.8 40.3L40.2 40.1L40.5 39.8L40.9 39.6L41.2 39.3L41.6 39.0L41.9 38.8L42.3 38.5L42.6 38.2L43.0 35.0L43.3 35.0L43.7 40.3L44.0 40.3L44.4 40.3L44.4 41.7L44.0 41.7L43.7 41.7L43.3 46.9L43.0 46.9L42.6 43.7L42.3 43.4L41.9 43.2L41.6 42.9L41.2 42.6L40.9 42.4L40.5 42.1L40.2 41.9L39.8 41.6L39.5 41.4L39.1 41.3L38.8 41.3ZM44.9 41.0L44.9 40.7L45.3 40.7L45.6 40.6L46.0 40.3L46.3 40.1L46.7 39.8L47.0 39.6L47.4 39.3L47.7 39.0L48.1 38.8L48.4 38.5L48.8 38.2L49.1 35.0L49.5 35.0L49.8 40.3L50.2 40.3L50.5 40.3L50.5 41.7L50.2 41.7L49.8 41.7L49.5 46.9L49.1 46.9L48.8 43.7L48.4 43.4L48.1 43.2L47.7 42.9L47.4 42.6L47.0 42.4L46.7 42.1L46.3 41.9L46.0 41.6L45.6 41.4L45.3 41.3L44.9 41.3ZM51.1 41.0L51.1 40.7L51.4 40.7L51.8 40.6L52.1 40.5L52.5 40.3L52.8 40.1L53.2 39.9L53.5 39.7L53.9 39.5L54.2 39.2L54.6 39.0L54.9 38.8L55.3 36.3L55.6 36.3L56.0 40.4L56.3 40.4L56.7 40.4L56.7 41.5L56.3 41.5L56.0 41.5L55.6 45.6L55.3 45.6L54.9 43.1L54.6 42.9L54.2 42.7L53.9 42.5L53.5 42.3L53.2 42.1L52.8 41.9L52.5 41.7L52.1 41.5L51.8 41.3L51.4 41.3L51.1 41.3ZM57.2 41.0L57.2 40.7L57.6 40.7L57.9 40.6L58.3 40.4L58.6 40.1L59.0 39.9L59.3 39.7L59.7 39.4L60.0 39.2L60.4 38.9L60.7 38.7L61.1 38.4L61.4 35.5L61.8 35.5L62.1 40.3L62.5 40.3L62.8 40.3L62.8 41.6L62.5 41.6L62.1 41.6L61.8 46.5L61.4 46.5L61.1 43.5L60.7 43.3L60.4 43.0L60.0 42.8L59.7 42.5L59.3 42.3L59.0 42.0L58.6 41.8L58.3 41.6L57.9 41.4L57.6 41.3L57.2 41.3ZM63.4 41.0L63.4 40.7L63.7 40.7L64.1 40.7L64.4 40.6L64.8 40.5L65.1 40.3L65.5 40.2L65.8 40.0L66.2 39.9L66.5 39.7L66.9 39.6L67.2 39.4L67.6 37.6L67.9 37.6L68.3 40.6L68.6 40.6L69.0 40.6L69.0 41.4L68.6 41.4L68.3 41.4L67.9 44.4L67.6 44.4L67.2 42.5L66.9 42.4L66.5 42.2L66.2 42.1L65.8 41.9L65.5 41.8L65.1 41.6L64.8 41.5L64.4 41.4L64.1 41.3L63.7 41.3L63.4 41.3ZM69.5 41.0L69.5 40.7L69.9 40.7L70.2 40.6L70.6 40.3L70.9 40.1L71.3 39.8L71.6 39.6L72.0 39.3L72.3 39.0L72.7 38.8L73.0 38.5L73.4 38.2L73.7 35.0L74.1 35.0L74.4 40.3L74.8 40.3L75.1 40.3L75.1 41.7L74.8 41.7L74.4 41.7L74.1 46.9L73.7 46.9L73.4 43.7L73.0 43.4L72.7 43.2L72.3 42.9L72.0 42.6L71.6 42.4L71.3 42.1L70.9 41.9L70.6 41.6L70.2 41.4L69.9 41.3L69.5 41.3ZM75.7 41.0L75.7 40.7L76.1 40.7L76.4 40.6L76.8 40.5L77.1 40.3L77.5 40.1L77.8 39.9L78.2 39.7L78.5 39.5L78.9 39.2L79.2 39.0L79.6 38.8L79.9 36.3L80.3 36.3L80.6 40.4L81.0 40.4L81.3 40.4L81.3 41.5L81.0 41.5L80.6 41.5L80.3 45.6L79.9 45.6L79.6 43.1L79.2 42.9L78.9 42.7L78.5 42.5L78.2 42.3L77.8 42.1L77.5 41.9L77.1 41.7L76.8 41.5L76.4 41.3L76.1 41.3L75.7 41.3ZM81.9 41.0L81.9 40.7L82.2 40.7L82.6 40.7L82.9 40.6L83.3 40.5L83.6 40.4L84.0 40.3L84.3 40.1L84.7 40.0L85.0 39.8L85.4 39.7L85.7 39.6L86.1 37.9L86.4 37.9L86.8 40.6L87.1 40.6L87.5 40.6L87.5 41.3L87.1 41.3L86.8 41.3L86.4 44.0L86.1 44.0L85.7 42.4L85.4 42.2L85.0 42.1L84.7 42.0L84.3 41.8L84.0 41.7L83.6 41.6L83.3 41.4L82.9 41.3L82.6 41.3L82.2 41.3L81.9 41.3ZM88.0 41.0L88.0 40.7L88.4 40.7L88.7 40.7L89.1 40.5L89.4 40.3L89.8 40.2L90.1 40.0L90.5 39.8L90.8 39.6L91.2 39.4L91.5 39.2L91.9 39.0L92.2 36.7L92.6 36.7L92.9 40.5L93.3 40.5L93.6 40.5L93.6 41.5L93.3 41.5L92.9 41.5L92.6 45.2L92.2 45.2L91.9 42.9L91.5 42.7L91.2 42.5L90.8 42.4L90.5 42.2L90.1 42.0L89.8 41.8L89.4 41.6L89.1 41.4L88.7 41.3L88.4 41.3L88.0 41.3ZM94.2 41.0L94.2 40.7L94.5 40.7L94.9 40.7L95.2 40.6L95.6 40.5L95.9 40.3L96.3 40.2L96.6 40.0L97.0 39.9L97.3 39.7L97.7 39.6L98.0 39.4L98.4 37.6L98.7 37.6L99.1 40.6L99.4 40.6L99.8 40.6L99.8 41.4L99.4 41.4L99.1 41.4L98.7 44.4L98.4 44.4L98.0 42.5L97.7 42.4L97.3 42.2L97.0 42.1L96.6 41.9L96.3 41.8L95.9 41.6L95.6 41.5L95.2 41.4L94.9 41.3L94.5 41.3L94.2 41.3ZM100.3 41.0L100.3 40.7L100.7 40.7L101.0 40.7L101.4 40.6L101.7 40.5L102.1 40.3L102.4 40.2L102.8 40.0L103.1 39.9L103.5 39.7L103.8 39.6L104.2 39.4L104.5 37.6L104.9 37.6L105.2 40.6L105.6 40.6L105.9 40.6L105.9 41.4L105.6 41.4L105.2 41.4L104.9 44.4L104.5 44.4L104.2 42.5L103.8 42.4L103.5 42.2L103.1 42.1L102.8 41.9L102.4 41.8L102.1 41.6L101.7 41.5L101.4 41.4L101.0 41.3L100.7 41.3L100.3 41.3ZM106.5 41.0L106.5 40.7L106.8 40.7L107.2 40.6L107.5 40.4L107.9 40.1L108.2 39.9L108.6 39.7L108.9 39.4L109.3 39.2L109.6 38.9L110.0 38.7L110.3 38.4L110.7 35.5L111.0 35.5L111.4 40.3L111.7 40.3L112.1 40.3L112.1 41.6L111.7 41.6L111.4 41.6L111.0 46.5L110.7 46.5L110.3 43.5L110.0 43.3L109.6 43.0L109.3 42.8L108.9 42.5L108.6 42.3L108.2 42.0L107.9 41.8L107.5 41.6L107.2 41.4L106.8 41.3L106.5 41.3ZM112.6 41.0L112.6 40.7L113.0 40.7L113.3 40.7L113.7 40.6L114.0 40.5L114.4 40.4L114.7 40.3L115.1 40.1L115.4 40.0L115.8 39.8L116.1 39.7L116.5 39.6L116.8 37.9L117.2 37.9L117.5 40.6L117.9 40.6L118.2 40.6L118.2 41.3L117.9 41.3L117.5 41.3L117.2 44.0L116.8 44.0L116.5 42.4L116.1 42.2L115.8 42.1L115.4 42.0L115.1 41.8L114.7 41.7L114.4 41.6L114.0 41.4L113.7 41.3L113.3 41.3L113.0 41.3L112.6 41.3ZM118.8 41.0L118.8 40.7L119.1 40.7L119.5 40.6L119.8 40.3L120.2 40.1L120.5 39.8L120.9 39.6L121.2 39.3L121.6 39.0L121.9 38.8L122.3 38.5L122.6 38.2L123.0 35.0L123.3 35.0L123.7 40.3L124.0 40.3L124.4 40.3L124.4 41.7L124.0 41.7L123.7 41.7L123.3 46.9L123.0 46.9L122.6 43.7L122.3 43.4L121.9 43.2L121.6 42.9L121.2 42.6L120.9 42.4L120.5 42.1L120.2 41.9L119.8 41.6L119.5 41.4L119.1 41.3L118.8 41.3ZM124.9 41.0L124.9 40.7L125.3 40.7L125.6 40.5L126.0 40.3L126.3 40.0L126.7 39.7L127.0 39.4L127.4 39.2L127.7 38.9L128.1 38.6L128.4 38.3L128.8 38.0L129.1 34.5L129.5 34.5L129.8 40.2L130.2 40.2L130.5 40.2L130.5 41.8L130.2 41.8L129.8 41.8L129.5 47.4L129.1 47.4L128.8 44.0L128.4 43.7L128.1 43.4L127.7 43.1L127.4 42.8L127.0 42.5L126.7 42.2L126.3 42.0L126.0 41.7L125.6 41.4L125.3 41.3L124.9 41.3ZM131.1 41.0L131.1 40.7L131.4 40.7L131.8 40.6L132.1 40.5L132.5 40.3L132.8 40.1L133.2 39.9L133.5 39.7L133.9 39.5L134.2 39.2L134.6 39.0L134.9 38.8L135.3 36.3L135.6 36.3L136.0 40.4L136.3 40.4L136.7 40.4L136.7 41.5L136.3 41.5L136.0 41.5L135.6 45.6L135.3 45.6L134.9 43.1L134.6 42.9L134.2 42.7L133.9 42.5L133.5 42.3L133.2 42.1L132.8 41.9L132.5 41.7L132.1 41.5L131.8 41.3L131.4 41.3L131.1 41.3ZM137.3 41.0L137.3 40.7L137.6 40.7L138.0 40.7L138.3 40.6L138.7 40.5L139.0 40.4L139.4 40.3L139.7 40.1L140.1 40.0L140.4 39.8L140.8 39.7L141.1 39.6L141.5 37.9L141.8 37.9L142.2 40.6L142.5 40.6L142.9 40.6L142.9 41.3L142.5 41.3L142.2 41.3L141.8 44.0L141.5 44.0L141.1 42.4L140.8 42.2L140.4 42.1L140.1 42.0L139.7 41.8L139.4 41.7L139.0 41.6L138.7 41.4L138.3 41.3L138.0 41.3L137.6 41.3L137.3 41.3ZM143.4 41.0L143.4 40.7L143.8 40.7L144.1 40.6L144.5 40.4L144.8 40.2L145.2 40.0L145.5 39.8L145.9 39.5L146.2 39.3L146.6 39.1L146.9 38.9L147.3 38.6L147.6 35.9L148.0 35.9L148.3 40.4L148.7 40.4L149.0 40.4L149.0 41.6L148.7 41.6L148.3 41.6L148.0 46.1L147.6 46.1L147.3 43.3L146.9 43.1L146.6 42.9L146.2 42.6L145.9 42.4L145.5 42.2L145.2 42.0L144.8 41.7L144.5 41.5L144.1 41.3L143.8 41.3L143.4 41.3ZM149.6 41.0L149.6 40.7L149.9 40.7L150.3 40.6L150.6 40.4L151.0 40.1L151.3 39.9L151.7 39.7L152.0 39.4L152.4 39.2L152.7 38.9L153.1 38.7L153.4 38.4L153.8 35.5L154.1 35.5L154.5 40.3L154.8 40.3L155.2 40.3L155.2 41.6L154.8 41.6L154.5 41.6L154.1 46.5L153.8 46.5L153.4 43.5L153.1 43.3L152.7 43.0L152.4 42.8L152.0 42.5L151.7 42.3L151.3 42.0L151.0 41.8L150.6 41.6L150.3 41.4L149.9 41.3L149.6 41.3ZM155.7 41.0L155.7 40.7L156.1 40.7L156.4 40.6L156.8 40.5L157.1 40.3L157.5 40.1L157.8 39.9L158.2 39.7L158.5 39.5L158.9 39.2L159.2 39.0L159.6 38.8L159.9 36.3L160.3 36.3L160.6 40.4L161.0 40.4L161.3 40.4L161.3 41.5L161.0 41.5L160.6 41.5L160.3 45.6L159.9 45.6L159.6 43.1L159.2 42.9L158.9 42.7L158.5 42.5L158.2 42.3L157.8 42.1L157.5 41.9L157.1 41.7L156.8 41.5L156.4 41.3L156.1 41.3L155.7 41.3ZM161.9 41.0L161.9 40.7L162.2 40.7L162.6 40.6L162.9 40.4L163.3 40.1L163.6 39.9L164.0 39.7L164.3 39.4L164.7 39.2L165.0 38.9L165.4 38.7L165.7 38.4L166.1 35.5L166.4 35.5L166.8 40.3L167.1 40.3L167.5 40.3L167.5 41.6L167.1 41.6L166.8 41.6L166.4 46.5L166.1 46.5L165.7 43.5L165.4 43.3L165.0 43.0L164.7 42.8L164.3 42.5L164.0 42.3L163.6 42.0L163.3 41.8L162.9 41.6L162.6 41.4L162.2 41.3L161.9 41.3ZM168.0 41.0L168.0 40.7L168.4 40.7L168.7 40.7L169.1 40.5L169.4 40.3L169.8 40.2L170.1 40.0L170.5 39.8L170.8 39.6L171.2 39.4L171.5 39.2L171.9 39.0L172.2 36.7L172.6 36.7L172.9 40.5L173.3 40.5L173.6 40.5L173.6 41.5L173.3 41.5L172.9 41.5L172.6 45.2L172.2 45.2L171.9 42.9L171.5 42.7L171.2 42.5L170.8 42.4L170.5 42.2L170.1 42.0L169.8 41.8L169.4 41.6L169.1 41.4L168.7 41.3L168.4 41.3L168.0 41.3ZM174.2 41.0L174.2 40.7L174.5 40.7L174.9 40.7L175.2 40.6L175.6 40.5L175.9 40.4L176.3 40.3L176.6 40.1L177.0 40.0L177.3 39.8L177.7 39.7L178.0 39.6L178.4 37.9L178.7 37.9L179.1 40.6L179.4 40.6L179.8 40.6L179.8 41.3L179.4 41.3L179.1 41.3L178.7 44.0L178.4 44.0L178.0 42.4L177.7 42.2L177.3 42.1L177.0 42.0L176.6 41.8L176.3 41.7L175.9 41.6L175.6 41.4L175.2 41.3L174.9 41.3L174.5 41.3L174.2 41.3ZM180.3 41.0L180.3 40.7L180.7 40.7L181.0 40.6L181.4 40.4L181.7 40.1L182.1 39.9L182.4 39.7L182.8 39.4L183.1 39.2L183.5 38.9L183.8 38.7L184.2 38.4L184.5 35.5L184.9 35.5L185.2 40.3L185.6 40.3L185.9 40.3L185.9 41.6L185.6 41.6L185.2 41.6L184.9 46.5L184.5 46.5L184.2 43.5L183.8 43.3L183.5 43.0L183.1 42.8L182.8 42.5L182.4 42.3L182.1 42.0L181.7 41.8L181.4 41.6L181.0 41.4L180.7 41.3L180.3 41.3ZM186.5 41.0L186.5 40.7L186.8 40.7L187.2 40.7L187.5 40.6L187.9 40.4L188.2 40.3L188.6 40.1L188.9 40.0L189.3 39.8L189.6 39.7L190.0 39.5L190.3 39.3L190.7 37.4L191.0 37.4L191.4 40.5L191.7 40.5L192.1 40.5L192.1 41.4L191.7 41.4L191.4 41.4L191.0 44.5L190.7 44.5L190.3 42.6L190.0 42.5L189.6 42.3L189.3 42.1L188.9 42.0L188.6 41.8L188.2 41.7L187.9 41.5L187.5 41.4L187.2 41.3L186.8 41.3L186.5 41.3ZM192.6 41.0L192.6 40.7L193.0 40.7L193.3 40.7L193.7 40.7L194.0 40.7L194.4 40.6L194.7 40.5L195.1 40.4L195.4 40.3L195.8 40.2L196.1 40.1L196.5 40.0L196.8 38.9L197.2 38.9L197.5 40.7L197.9 40.7L198.2 40.7L198.2 41.3L197.9 41.3L197.5 41.3L197.2 43.0L196.8 43.0L196.5 41.9L196.1 41.8L195.8 41.7L195.4 41.6L195.1 41.5L194.7 41.5L194.4 41.4L194.0 41.3L193.7 41.3L193.3 41.3L193.0 41.3L192.6 41.3ZM198.8 41.0L198.8 40.7L199.2 40.7L199.5 40.7L199.9 40.7L200.2 40.5L200.6 40.4L200.9 40.3L201.3 40.2L201.6 40.1L202.0 39.9L202.3 39.8L202.7 39.7L203.0 38.2L203.4 38.2L203.7 40.6L204.1 40.6L204.4 40.6L204.4 41.3L204.1 41.3L203.7 41.3L203.4 43.8L203.0 43.8L202.7 42.3L202.3 42.1L202.0 42.0L201.6 41.9L201.3 41.8L200.9 41.6L200.6 41.5L200.2 41.4L199.9 41.3L199.5 41.3L199.2 41.3L198.8 41.3ZM205.0 41.0L205.0 40.7L205.3 40.7L205.7 40.7L206.0 40.6L206.4 40.4L206.7 40.3L207.1 40.1L207.4 40.0L207.8 39.8L208.1 39.7L208.5 39.5L208.8 39.3L209.2 37.4L209.5 37.4L209.9 40.5L210.2 40.5L210.6 40.5L210.6 41.4L210.2 41.4L209.9 41.4L209.5 44.5L209.2 44.5L208.8 42.6L208.5 42.5L208.1 42.3L207.8 42.1L207.4 42.0L207.1 41.8L206.7 41.7L206.4 41.5L206.0 41.4L205.7 41.3L205.3 41.3L205.0 41.3Z" fill="#0a5044"/></svg><b>Pad</b></div><div class="clip" style="left:963.0px;top:278.3px;width:239.0px;height:54.5px;background:#36b09c"><svg width="239.0" height="54.5"><path d="M0 13.7H239.0M0 41.0H239.0" stroke="#0a5044" stroke-width="1" stroke-opacity="0.45"/><path d="M27.0 13.7L27.0 13.4L27.4 13.4L27.7 13.1L28.1 12.8L28.5 12.5L28.9 12.1L29.2 11.8L29.6 11.4L30.0 11.1L30.4 10.7L30.7 10.3L31.1 10.0L31.5 6.1L31.9 12.8L32.2 12.8L32.6 12.8L32.6 14.6L32.2 14.6L31.9 14.6L31.5 21.3L31.1 17.5L30.7 17.1L30.4 16.7L30.0 16.4L29.6 16.0L29.2 15.7L28.9 15.3L28.5 15.0L28.1 14.6L27.7 14.3L27.4 14.0L27.0 14.0ZM33.2 13.7L33.2 13.4L33.5 13.4L33.9 13.4L34.3 13.3L34.6 13.1L35.0 13.0L35.4 12.8L35.8 12.6L36.1 12.5L36.5 12.3L36.9 12.1L37.3 11.9L37.6 10.1L38.0 13.3L38.4 13.3L38.8 13.3L38.8 14.2L38.4 14.2L38.0 14.2L37.6 17.3L37.3 15.5L36.9 15.3L36.5 15.2L36.1 15.0L35.8 14.8L35.4 14.6L35.0 14.5L34.6 14.3L34.3 14.2L33.9 14.0L33.5 14.0L33.2 14.0ZM39.3 13.7L39.3 13.4L39.7 13.4L40.1 13.4L40.4 13.3L40.8 13.1L41.2 13.0L41.5 12.8L41.9 12.6L42.3 12.5L42.7 12.3L43.0 12.1L43.4 11.9L43.8 10.1L44.2 13.3L44.5 13.3L44.9 13.3L44.9 14.2L44.5 14.2L44.2 14.2L43.8 17.3L43.4 15.5L43.0 15.3L42.7 15.2L42.3 15.0L41.9 14.8L41.5 14.6L41.2 14.5L40.8 14.3L40.4 14.2L40.1 14.0L39.7 14.0L39.3 14.0ZM45.5 13.7L45.5 13.4L45.8 13.4L46.2 13.1L46.6 12.8L47.0 12.5L47.3 12.1L47.7 11.8L48.1 11.4L48.5 11.1L48.8 10.7L49.2 10.3L49.6 10.0L49.9 6.1L50.3 12.8L50.7 12.8L51.1 12.8L51.1 14.6L50.7 14.6L50.3 14.6L49.9 21.3L49.6 17.5L49.2 17.1L48.8 16.7L48.5 16.4L48.1 16.0L47.7 15.7L47.3 15.3L47.0 15.0L46.6 14.6L46.2 14.3L45.8 14.0L45.5 14.0ZM51.6 13.7L51.6 13.4L52.0 13.4L52.4 13.3L52.7 13.1L53.1 12.8L53.5 12.6L53.9 12.3L54.2 12.1L54.6 11.8L55.0 11.5L55.4 11.3L55.7 11.0L56.1 8.2L56.5 13.1L56.8 13.1L57.2 13.1L57.2 14.4L56.8 14.4L56.5 14.4L56.1 19.2L55.7 16.4L55.4 16.2L55.0 15.9L54.6 15.6L54.2 15.4L53.9 15.1L53.5 14.9L53.1 14.6L52.7 14.4L52.4 14.1L52.0 14.0L51.6 14.0ZM57.8 13.7L57.8 13.4L58.1 13.4L58.5 13.3L58.9 13.1L59.3 12.9L59.6 12.7L60.0 12.5L60.4 12.2L60.8 12.0L61.1 11.7L61.5 11.5L61.9 11.2L62.3 8.7L62.6 13.1L63.0 13.1L63.4 13.1L63.4 14.3L63.0 14.3L62.6 14.3L62.3 18.7L61.9 16.2L61.5 16.0L61.1 15.7L60.8 15.5L60.4 15.2L60.0 15.0L59.6 14.8L59.3 14.5L58.9 14.3L58.5 14.1L58.1 14.0L57.8 14.0ZM63.9 13.7L63.9 13.4L64.3 13.4L64.7 13.3L65.0 13.1L65.4 12.9L65.8 12.7L66.2 12.5L66.5 12.2L66.9 12.0L67.3 11.7L67.7 11.5L68.0 11.2L68.4 8.7L68.8 13.1L69.2 13.1L69.5 13.1L69.5 14.3L69.2 14.3L68.8 14.3L68.4 18.7L68.0 16.2L67.7 16.0L67.3 15.7L66.9 15.5L66.5 15.2L66.2 15.0L65.8 14.8L65.4 14.5L65.0 14.3L64.7 14.1L64.3 14.0L63.9 14.0ZM70.1 13.7L70.1 13.4L70.5 13.4L70.8 13.3L71.2 13.1L71.6 12.8L72.0 12.6L72.3 12.3L72.7 12.1L73.1 11.8L73.4 11.5L73.8 11.3L74.2 11.0L74.6 8.2L74.9 13.1L75.3 13.1L75.7 13.1L75.7 14.4L75.3 14.4L74.9 14.4L74.6 19.2L74.2 16.4L73.8 16.2L73.4 15.9L73.1 15.6L72.7 15.4L72.3 15.1L72.0 14.9L71.6 14.6L71.2 14.4L70.8 14.1L70.5 14.0L70.1 14.0ZM76.2 13.7L76.2 13.4L76.6 13.4L77.0 13.3L77.4 13.1L77.7 12.9L78.1 12.7L78.5 12.5L78.9 12.2L79.2 12.0L79.6 11.7L80.0 11.5L80.3 11.2L80.7 8.7L81.1 13.1L81.5 13.1L81.8 13.1L81.8 14.3L81.5 14.3L81.1 14.3L80.7 18.7L80.3 16.2L80.0 16.0L79.6 15.7L79.2 15.5L78.9 15.2L78.5 15.0L78.1 14.8L77.7 14.5L77.4 14.3L77.0 14.1L76.6 14.0L76.2 14.0ZM82.4 13.7L82.4 13.4L82.8 13.4L83.1 13.4L83.5 13.3L83.9 13.1L84.3 12.9L84.6 12.7L85.0 12.5L85.4 12.3L85.8 12.1L86.1 11.9L86.5 11.7L86.9 9.7L87.2 13.2L87.6 13.2L88.0 13.2L88.0 14.2L87.6 14.2L87.2 14.2L86.9 17.7L86.5 15.7L86.1 15.5L85.8 15.3L85.4 15.1L85.0 14.9L84.6 14.7L84.3 14.6L83.9 14.4L83.5 14.2L83.1 14.0L82.8 14.0L82.4 14.0ZM88.5 13.7L88.5 13.4L88.9 13.4L89.3 13.3L89.7 13.1L90.0 12.8L90.4 12.6L90.8 12.3L91.2 12.1L91.5 11.8L91.9 11.5L92.3 11.3L92.7 11.0L93.0 8.2L93.4 13.1L93.8 13.1L94.1 13.1L94.1 14.4L93.8 14.4L93.4 14.4L93.0 19.2L92.7 16.4L92.3 16.2L91.9 15.9L91.5 15.6L91.2 15.4L90.8 15.1L90.4 14.9L90.0 14.6L89.7 14.4L89.3 14.1L88.9 14.0L88.5 14.0ZM94.7 13.7L94.7 13.4L95.1 13.4L95.5 13.1L95.8 12.8L96.2 12.5L96.6 12.1L96.9 11.8L97.3 11.4L97.7 11.1L98.1 10.7L98.4 10.3L98.8 10.0L99.2 6.1L99.6 12.8L99.9 12.8L100.3 12.8L100.3 14.6L99.9 14.6L99.6 14.6L99.2 21.3L98.8 17.5L98.4 17.1L98.1 16.7L97.7 16.4L97.3 16.0L96.9 15.7L96.6 15.3L96.2 15.0L95.8 14.6L95.5 14.3L95.1 14.0L94.7 14.0ZM100.9 13.7L100.9 13.4L101.2 13.4L101.6 13.2L102.0 13.0L102.4 12.7L102.7 12.4L103.1 12.1L103.5 11.8L103.8 11.5L104.2 11.1L104.6 10.8L105.0 10.5L105.3 7.2L105.7 12.9L106.1 12.9L106.5 12.9L106.5 14.5L106.1 14.5L105.7 14.5L105.3 20.2L105.0 16.9L104.6 16.6L104.2 16.3L103.8 16.0L103.5 15.7L103.1 15.4L102.7 15.1L102.4 14.8L102.0 14.5L101.6 14.2L101.2 14.0L100.9 14.0ZM107.0 13.7L107.0 13.4L107.4 13.4L107.8 13.3L108.1 13.0L108.5 12.7L108.9 12.5L109.3 12.2L109.6 11.9L110.0 11.6L110.4 11.3L110.7 11.1L111.1 10.8L111.5 7.7L111.9 13.0L112.2 13.0L112.6 13.0L112.6 14.4L112.2 14.4L111.9 14.4L111.5 19.7L111.1 16.7L110.7 16.4L110.4 16.1L110.0 15.8L109.6 15.5L109.3 15.2L108.9 15.0L108.5 14.7L108.1 14.4L107.8 14.2L107.4 14.0L107.0 14.0ZM113.2 13.7L113.2 13.4L113.5 13.4L113.9 13.1L114.3 12.8L114.7 12.5L115.0 12.1L115.4 11.8L115.8 11.4L116.2 11.1L116.5 10.7L116.9 10.3L117.3 10.0L117.6 6.1L118.0 12.8L118.4 12.8L118.8 12.8L118.8 14.6L118.4 14.6L118.0 14.6L117.6 21.3L117.3 17.5L116.9 17.1L116.5 16.7L116.2 16.4L115.8 16.0L115.4 15.7L115.0 15.3L114.7 15.0L114.3 14.6L113.9 14.3L113.5 14.0L113.2 14.0ZM119.3 13.7L119.3 13.4L119.7 13.4L120.1 13.3L120.4 13.1L120.8 12.8L121.2 12.6L121.6 12.3L121.9 12.1L122.3 11.8L122.7 11.5L123.1 11.3L123.4 11.0L123.8 8.2L124.2 13.1L124.6 13.1L124.9 13.1L124.9 14.4L124.6 14.4L124.2 14.4L123.8 19.2L123.4 16.4L123.1 16.2L122.7 15.9L122.3 15.6L121.9 15.4L121.6 15.1L121.2 14.9L120.8 14.6L120.4 14.4L120.1 14.1L119.7 14.0L119.3 14.0ZM125.5 13.7L125.5 13.4L125.9 13.4L126.2 13.1L126.6 12.8L127.0 12.5L127.3 12.1L127.7 11.8L128.1 11.4L128.5 11.1L128.8 10.7L129.2 10.3L129.6 10.0L130.0 6.1L130.3 12.8L130.7 12.8L131.1 12.8L131.1 14.6L130.7 14.6L130.3 14.6L130.0 21.3L129.6 17.5L129.2 17.1L128.8 16.7L128.5 16.4L128.1 16.0L127.7 15.7L127.3 15.3L127.0 15.0L126.6 14.6L126.2 14.3L125.9 14.0L125.5 14.0ZM131.6 13.7L131.6 13.4L132.0 13.4L132.4 13.2L132.8 12.9L133.1 12.6L133.5 12.3L133.9 11.9L134.2 11.6L134.6 11.3L135.0 10.9L135.4 10.6L135.7 10.3L136.1 6.7L136.5 12.9L136.9 12.9L137.2 12.9L137.2 14.6L136.9 14.6L136.5 14.6L136.1 20.7L135.7 17.2L135.4 16.8L135.0 16.5L134.6 16.2L134.2 15.8L133.9 15.5L133.5 15.2L133.1 14.9L132.8 14.6L132.4 14.3L132.0 14.0L131.6 14.0ZM137.8 13.7L137.8 13.4L138.2 13.4L138.5 13.4L138.9 13.3L139.3 13.1L139.7 13.0L140.0 12.8L140.4 12.6L140.8 12.5L141.1 12.3L141.5 12.1L141.9 11.9L142.3 10.1L142.6 13.3L143.0 13.3L143.4 13.3L143.4 14.2L143.0 14.2L142.6 14.2L142.3 17.3L141.9 15.5L141.5 15.3L141.1 15.2L140.8 15.0L140.4 14.8L140.0 14.6L139.7 14.5L139.3 14.3L138.9 14.2L138.5 14.0L138.2 14.0L137.8 14.0ZM143.9 13.7L143.9 13.4L144.3 13.4L144.7 13.3L145.1 13.0L145.4 12.7L145.8 12.5L146.2 12.2L146.6 11.9L146.9 11.6L147.3 11.3L147.7 11.1L148.1 10.8L148.4 7.7L148.8 13.0L149.2 13.0L149.5 13.0L149.5 14.4L149.2 14.4L148.8 14.4L148.4 19.7L148.1 16.7L147.7 16.4L147.3 16.1L146.9 15.8L146.6 15.5L146.2 15.2L145.8 15.0L145.4 14.7L145.1 14.4L144.7 14.2L144.3 14.0L143.9 14.0ZM150.1 13.7L150.1 13.4L150.5 13.4L150.8 13.4L151.2 13.3L151.6 13.1L152.0 13.0L152.3 12.8L152.7 12.6L153.1 12.5L153.5 12.3L153.8 12.1L154.2 11.9L154.6 10.1L155.0 13.3L155.3 13.3L155.7 13.3L155.7 14.2L155.3 14.2L155.0 14.2L154.6 17.3L154.2 15.5L153.8 15.3L153.5 15.2L153.1 15.0L152.7 14.8L152.3 14.6L152.0 14.5L151.6 14.3L151.2 14.2L150.8 14.0L150.5 14.0L150.1 14.0ZM156.3 13.7L156.3 13.4L156.6 13.4L157.0 13.3L157.4 13.0L157.7 12.7L158.1 12.5L158.5 12.2L158.9 11.9L159.2 11.6L159.6 11.3L160.0 11.1L160.4 10.8L160.7 7.7L161.1 13.0L161.5 13.0L161.9 13.0L161.9 14.4L161.5 14.4L161.1 14.4L160.7 19.7L160.4 16.7L160.0 16.4L159.6 16.1L159.2 15.8L158.9 15.5L158.5 15.2L158.1 15.0L157.7 14.7L157.4 14.4L157.0 14.2L156.6 14.0L156.3 14.0ZM162.4 13.7L162.4 13.4L162.8 13.4L163.2 13.3L163.5 13.1L163.9 12.9L164.3 12.7L164.6 12.5L165.0 12.2L165.4 12.0L165.8 11.7L166.1 11.5L166.5 11.2L166.9 8.7L167.3 13.1L167.6 13.1L168.0 13.1L168.0 14.3L167.6 14.3L167.3 14.3L166.9 18.7L166.5 16.2L166.1 16.0L165.8 15.7L165.4 15.5L165.0 15.2L164.6 15.0L164.3 14.8L163.9 14.5L163.5 14.3L163.2 14.1L162.8 14.0L162.4 14.0ZM168.6 13.7L168.6 13.4L168.9 13.4L169.3 13.3L169.7 13.0L170.1 12.7L170.4 12.5L170.8 12.2L171.2 11.9L171.6 11.6L171.9 11.3L172.3 11.1L172.7 10.8L173.0 7.7L173.4 13.0L173.8 13.0L174.2 13.0L174.2 14.4L173.8 14.4L173.4 14.4L173.0 19.7L172.7 16.7L172.3 16.4L171.9 16.1L171.6 15.8L171.2 15.5L170.8 15.2L170.4 15.0L170.1 14.7L169.7 14.4L169.3 14.2L168.9 14.0L168.6 14.0ZM174.7 13.7L174.7 13.4L175.1 13.4L175.5 13.3L175.8 13.0L176.2 12.7L176.6 12.5L177.0 12.2L177.3 11.9L177.7 11.6L178.1 11.3L178.5 11.1L178.8 10.8L179.2 7.7L179.6 13.0L179.9 13.0L180.3 13.0L180.3 14.4L179.9 14.4L179.6 14.4L179.2 19.7L178.8 16.7L178.5 16.4L178.1 16.1L177.7 15.8L177.3 15.5L177.0 15.2L176.6 15.0L176.2 14.7L175.8 14.4L175.5 14.2L175.1 14.0L174.7 14.0ZM180.9 13.7L180.9 13.4L181.2 13.4L181.6 13.1L182.0 12.8L182.4 12.5L182.7 12.1L183.1 11.8L183.5 11.4L183.9 11.1L184.2 10.7L184.6 10.3L185.0 10.0L185.4 6.1L185.7 12.8L186.1 12.8L186.5 12.8L186.5 14.6L186.1 14.6L185.7 14.6L185.4 21.3L185.0 17.5L184.6 17.1L184.2 16.7L183.9 16.4L183.5 16.0L183.1 15.7L182.7 15.3L182.4 15.0L182.0 14.6L181.6 14.3L181.2 14.0L180.9 14.0ZM187.0 13.7L187.0 13.4L187.4 13.4L187.8 13.3L188.1 13.0L188.5 12.7L188.9 12.5L189.3 12.2L189.6 11.9L190.0 11.6L190.4 11.3L190.8 11.1L191.1 10.8L191.5 7.7L191.9 13.0L192.3 13.0L192.6 13.0L192.6 14.4L192.3 14.4L191.9 14.4L191.5 19.7L191.1 16.7L190.8 16.4L190.4 16.1L190.0 15.8L189.6 15.5L189.3 15.2L188.9 15.0L188.5 14.7L188.1 14.4L187.8 14.2L187.4 14.0L187.0 14.0ZM193.2 13.7L193.2 13.4L193.6 13.4L193.9 13.3L194.3 13.0L194.7 12.7L195.1 12.5L195.4 12.2L195.8 11.9L196.2 11.6L196.5 11.3L196.9 11.1L197.3 10.8L197.7 7.7L198.0 13.0L198.4 13.0L198.8 13.0L198.8 14.4L198.4 14.4L198.0 14.4L197.7 19.7L197.3 16.7L196.9 16.4L196.5 16.1L196.2 15.8L195.8 15.5L195.4 15.2L195.1 15.0L194.7 14.7L194.3 14.4L193.9 14.2L193.6 14.0L193.2 14.0ZM199.3 13.7L199.3 13.4L199.7 13.4L200.1 13.4L200.5 13.3L200.8 13.1L201.2 12.9L201.6 12.7L202.0 12.5L202.3 12.3L202.7 12.1L203.1 11.9L203.4 11.7L203.8 9.7L204.2 13.2L204.6 13.2L204.9 13.2L204.9 14.2L204.6 14.2L204.2 14.2L203.8 17.7L203.4 15.7L203.1 15.5L202.7 15.3L202.3 15.1L202.0 14.9L201.6 14.7L201.2 14.6L200.8 14.4L200.5 14.2L200.1 14.0L199.7 14.0L199.3 14.0ZM205.5 13.7L205.5 13.4L205.9 13.4L206.2 13.4L206.6 13.3L207.0 13.2L207.4 13.0L207.7 12.9L208.1 12.7L208.5 12.6L208.9 12.4L209.2 12.3L209.6 12.1L210.0 10.4L210.3 13.3L210.7 13.3L211.1 13.3L211.1 14.1L210.7 14.1L210.3 14.1L210.0 17.0L209.6 15.4L209.2 15.2L208.9 15.0L208.5 14.9L208.1 14.7L207.7 14.6L207.4 14.4L207.0 14.3L206.6 14.1L206.2 14.0L205.9 14.0L205.5 14.0ZM211.6 13.7L211.6 13.4L212.0 13.4L212.4 13.4L212.8 13.4L213.1 13.3L213.5 13.2L213.9 13.1L214.3 13.0L214.6 12.9L215.0 12.8L215.4 12.7L215.8 12.5L216.1 11.3L216.5 13.4L216.9 13.4L217.2 13.4L217.2 14.0L216.9 14.0L216.5 14.0L216.1 16.1L215.8 14.9L215.4 14.8L215.0 14.7L214.6 14.6L214.3 14.4L213.9 14.3L213.5 14.2L213.1 14.1L212.8 14.0L212.4 14.0L212.0 14.0L211.6 14.0ZM217.8 13.7L217.8 13.4L218.2 13.4L218.6 13.4L218.9 13.3L219.3 13.1L219.7 13.0L220.0 12.8L220.4 12.6L220.8 12.5L221.2 12.3L221.5 12.1L221.9 11.9L222.3 10.1L222.7 13.3L223.0 13.3L223.4 13.3L223.4 14.2L223.0 14.2L222.7 14.2L222.3 17.3L221.9 15.5L221.5 15.3L221.2 15.2L220.8 15.0L220.4 14.8L220.0 14.6L219.7 14.5L219.3 14.3L218.9 14.2L218.6 14.0L218.2 14.0L217.8 14.0ZM224.0 13.7L224.0 13.4L224.3 13.4L224.7 13.4L225.1 13.4L225.5 13.4L225.8 13.3L226.2 13.2L226.6 13.1L226.9 13.0L227.3 12.9L227.7 12.8L228.1 12.7L228.4 11.6L228.8 13.4L229.2 13.4L229.6 13.4L229.6 14.0L229.2 14.0L228.8 14.0L228.4 15.9L228.1 14.8L227.7 14.7L227.3 14.6L226.9 14.5L226.6 14.4L226.2 14.3L225.8 14.2L225.5 14.1L225.1 14.0L224.7 14.0L224.3 14.0L224.0 14.0ZM27.0 41.0L27.0 40.7L27.4 40.7L27.7 40.5L28.1 40.2L28.5 39.9L28.9 39.6L29.2 39.3L29.6 39.0L30.0 38.7L30.4 38.4L30.7 38.1L31.1 37.8L31.5 34.5L31.9 40.2L32.2 40.2L32.6 40.2L32.6 41.8L32.2 41.8L31.9 41.8L31.5 47.4L31.1 44.2L30.7 43.9L30.4 43.5L30.0 43.2L29.6 42.9L29.2 42.6L28.9 42.3L28.5 42.0L28.1 41.7L27.7 41.5L27.4 41.3L27.0 41.3ZM33.2 41.0L33.2 40.7L33.5 40.7L33.9 40.7L34.3 40.6L34.6 40.5L35.0 40.3L35.4 40.2L35.8 40.1L36.1 39.9L36.5 39.8L36.9 39.6L37.3 39.5L37.6 37.9L38.0 40.6L38.4 40.6L38.8 40.6L38.8 41.3L38.4 41.3L38.0 41.3L37.6 44.0L37.3 42.5L36.9 42.3L36.5 42.2L36.1 42.0L35.8 41.9L35.4 41.8L35.0 41.6L34.6 41.5L34.3 41.3L33.9 41.3L33.5 41.3L33.2 41.3ZM39.3 41.0L39.3 40.7L39.7 40.7L40.1 40.7L40.4 40.6L40.8 40.5L41.2 40.3L41.5 40.2L41.9 40.1L42.3 39.9L42.7 39.8L43.0 39.6L43.4 39.5L43.8 37.9L44.2 40.6L44.5 40.6L44.9 40.6L44.9 41.3L44.5 41.3L44.2 41.3L43.8 44.0L43.4 42.5L43.0 42.3L42.7 42.2L42.3 42.0L41.9 41.9L41.5 41.8L41.2 41.6L40.8 41.5L40.4 41.3L40.1 41.3L39.7 41.3L39.3 41.3ZM45.5 41.0L45.5 40.7L45.8 40.7L46.2 40.5L46.6 40.2L47.0 39.9L47.3 39.6L47.7 39.3L48.1 39.0L48.5 38.7L48.8 38.4L49.2 38.1L49.6 37.8L49.9 34.5L50.3 40.2L50.7 40.2L51.1 40.2L51.1 41.8L50.7 41.8L50.3 41.8L49.9 47.4L49.6 44.2L49.2 43.9L48.8 43.5L48.5 43.2L48.1 42.9L47.7 42.6L47.3 42.3L47.0 42.0L46.6 41.7L46.2 41.5L45.8 41.3L45.5 41.3ZM51.6 41.0L51.6 40.7L52.0 40.7L52.4 40.6L52.7 40.4L53.1 40.2L53.5 40.0L53.9 39.8L54.2 39.6L54.6 39.3L55.0 39.1L55.4 38.9L55.7 38.7L56.1 36.3L56.5 40.4L56.8 40.4L57.2 40.4L57.2 41.5L56.8 41.5L56.5 41.5L56.1 45.6L55.7 43.3L55.4 43.1L55.0 42.8L54.6 42.6L54.2 42.4L53.9 42.2L53.5 41.9L53.1 41.7L52.7 41.5L52.4 41.3L52.0 41.3L51.6 41.3ZM57.8 41.0L57.8 40.7L58.1 40.7L58.5 40.7L58.9 40.5L59.3 40.3L59.6 40.1L60.0 39.9L60.4 39.7L60.8 39.5L61.1 39.3L61.5 39.1L61.9 38.9L62.3 36.7L62.6 40.5L63.0 40.5L63.4 40.5L63.4 41.5L63.0 41.5L62.6 41.5L62.3 45.2L61.9 43.1L61.5 42.9L61.1 42.7L60.8 42.5L60.4 42.3L60.0 42.1L59.6 41.9L59.3 41.7L58.9 41.5L58.5 41.3L58.1 41.3L57.8 41.3ZM63.9 41.0L63.9 40.7L64.3 40.7L64.7 40.7L65.0 40.5L65.4 40.3L65.8 40.1L66.2 39.9L66.5 39.7L66.9 39.5L67.3 39.3L67.7 39.1L68.0 38.9L68.4 36.7L68.8 40.5L69.2 40.5L69.5 40.5L69.5 41.5L69.2 41.5L68.8 41.5L68.4 45.2L68.0 43.1L67.7 42.9L67.3 42.7L66.9 42.5L66.5 42.3L66.2 42.1L65.8 41.9L65.4 41.7L65.0 41.5L64.7 41.3L64.3 41.3L63.9 41.3ZM70.1 41.0L70.1 40.7L70.5 40.7L70.8 40.6L71.2 40.4L71.6 40.2L72.0 40.0L72.3 39.8L72.7 39.6L73.1 39.3L73.4 39.1L73.8 38.9L74.2 38.7L74.6 36.3L74.9 40.4L75.3 40.4L75.7 40.4L75.7 41.5L75.3 41.5L74.9 41.5L74.6 45.6L74.2 43.3L73.8 43.1L73.4 42.8L73.1 42.6L72.7 42.4L72.3 42.2L72.0 41.9L71.6 41.7L71.2 41.5L70.8 41.3L70.5 41.3L70.1 41.3ZM76.2 41.0L76.2 40.7L76.6 40.7L77.0 40.7L77.4 40.5L77.7 40.3L78.1 40.1L78.5 39.9L78.9 39.7L79.2 39.5L79.6 39.3L80.0 39.1L80.3 38.9L80.7 36.7L81.1 40.5L81.5 40.5L81.8 40.5L81.8 41.5L81.5 41.5L81.1 41.5L80.7 45.2L80.3 43.1L80.0 42.9L79.6 42.7L79.2 42.5L78.9 42.3L78.5 42.1L78.1 41.9L77.7 41.7L77.4 41.5L77.0 41.3L76.6 41.3L76.2 41.3ZM82.4 41.0L82.4 40.7L82.8 40.7L83.1 40.7L83.5 40.6L83.9 40.4L84.3 40.3L84.6 40.1L85.0 40.0L85.4 39.8L85.8 39.6L86.1 39.5L86.5 39.3L86.9 37.6L87.2 40.6L87.6 40.6L88.0 40.6L88.0 41.4L87.6 41.4L87.2 41.4L86.9 44.4L86.5 42.7L86.1 42.5L85.8 42.3L85.4 42.2L85.0 42.0L84.6 41.8L84.3 41.7L83.9 41.5L83.5 41.4L83.1 41.3L82.8 41.3L82.4 41.3ZM88.5 41.0L88.5 40.7L88.9 40.7L89.3 40.6L89.7 40.4L90.0 40.2L90.4 40.0L90.8 39.8L91.2 39.6L91.5 39.3L91.9 39.1L92.3 38.9L92.7 38.7L93.0 36.3L93.4 40.4L93.8 40.4L94.1 40.4L94.1 41.5L93.8 41.5L93.4 41.5L93.0 45.6L92.7 43.3L92.3 43.1L91.9 42.8L91.5 42.6L91.2 42.4L90.8 42.2L90.4 41.9L90.0 41.7L89.7 41.5L89.3 41.3L88.9 41.3L88.5 41.3ZM94.7 41.0L94.7 40.7L95.1 40.7L95.5 40.5L95.8 40.2L96.2 39.9L96.6 39.6L96.9 39.3L97.3 39.0L97.7 38.7L98.1 38.4L98.4 38.1L98.8 37.8L99.2 34.5L99.6 40.2L99.9 40.2L100.3 40.2L100.3 41.8L99.9 41.8L99.6 41.8L99.2 47.4L98.8 44.2L98.4 43.9L98.1 43.5L97.7 43.2L97.3 42.9L96.9 42.6L96.6 42.3L96.2 42.0L95.8 41.7L95.5 41.5L95.1 41.3L94.7 41.3ZM100.9 41.0L100.9 40.7L101.2 40.7L101.6 40.6L102.0 40.3L102.4 40.1L102.7 39.8L103.1 39.6L103.5 39.3L103.8 39.0L104.2 38.8L104.6 38.5L105.0 38.2L105.3 35.5L105.7 40.3L106.1 40.3L106.5 40.3L106.5 41.6L106.1 41.6L105.7 41.6L105.3 46.5L105.0 43.7L104.6 43.4L104.2 43.2L103.8 42.9L103.5 42.6L103.1 42.4L102.7 42.1L102.4 41.9L102.0 41.6L101.6 41.4L101.2 41.3L100.9 41.3ZM107.0 41.0L107.0 40.7L107.4 40.7L107.8 40.6L108.1 40.4L108.5 40.1L108.9 39.9L109.3 39.7L109.6 39.4L110.0 39.2L110.4 39.0L110.7 38.7L111.1 38.5L111.5 35.9L111.9 40.4L112.2 40.4L112.6 40.4L112.6 41.6L112.2 41.6L111.9 41.6L111.5 46.1L111.1 43.5L110.7 43.2L110.4 43.0L110.0 42.8L109.6 42.5L109.3 42.3L108.9 42.0L108.5 41.8L108.1 41.6L107.8 41.4L107.4 41.3L107.0 41.3ZM113.2 41.0L113.2 40.7L113.5 40.7L113.9 40.5L114.3 40.2L114.7 39.9L115.0 39.6L115.4 39.3L115.8 39.0L116.2 38.7L116.5 38.4L116.9 38.1L117.3 37.8L117.6 34.5L118.0 40.2L118.4 40.2L118.8 40.2L118.8 41.8L118.4 41.8L118.0 41.8L117.6 47.4L117.3 44.2L116.9 43.9L116.5 43.5L116.2 43.2L115.8 42.9L115.4 42.6L115.0 42.3L114.7 42.0L114.3 41.7L113.9 41.5L113.5 41.3L113.2 41.3ZM119.3 41.0L119.3 40.7L119.7 40.7L120.1 40.6L120.4 40.4L120.8 40.2L121.2 40.0L121.6 39.8L121.9 39.6L122.3 39.3L122.7 39.1L123.1 38.9L123.4 38.7L123.8 36.3L124.2 40.4L124.6 40.4L124.9 40.4L124.9 41.5L124.6 41.5L124.2 41.5L123.8 45.6L123.4 43.3L123.1 43.1L122.7 42.8L122.3 42.6L121.9 42.4L121.6 42.2L121.2 41.9L120.8 41.7L120.4 41.5L120.1 41.3L119.7 41.3L119.3 41.3ZM125.5 41.0L125.5 40.7L125.9 40.7L126.2 40.5L126.6 40.2L127.0 39.9L127.3 39.6L127.7 39.3L128.1 39.0L128.5 38.7L128.8 38.4L129.2 38.1L129.6 37.8L130.0 34.5L130.3 40.2L130.7 40.2L131.1 40.2L131.1 41.8L130.7 41.8L130.3 41.8L130.0 47.4L129.6 44.2L129.2 43.9L128.8 43.5L128.5 43.2L128.1 42.9L127.7 42.6L127.3 42.3L127.0 42.0L126.6 41.7L126.2 41.5L125.9 41.3L125.5 41.3ZM131.6 41.0L131.6 40.7L132.0 40.7L132.4 40.5L132.8 40.3L133.1 40.0L133.5 39.7L133.9 39.5L134.2 39.2L134.6 38.9L135.0 38.6L135.4 38.3L135.7 38.0L136.1 35.0L136.5 40.3L136.9 40.3L137.2 40.3L137.2 41.7L136.9 41.7L136.5 41.7L136.1 46.9L135.7 43.9L135.4 43.6L135.0 43.3L134.6 43.1L134.2 42.8L133.9 42.5L133.5 42.2L133.1 41.9L132.8 41.7L132.4 41.4L132.0 41.3L131.6 41.3ZM137.8 41.0L137.8 40.7L138.2 40.7L138.5 40.7L138.9 40.6L139.3 40.5L139.7 40.3L140.0 40.2L140.4 40.1L140.8 39.9L141.1 39.8L141.5 39.6L141.9 39.5L142.3 37.9L142.6 40.6L143.0 40.6L143.4 40.6L143.4 41.3L143.0 41.3L142.6 41.3L142.3 44.0L141.9 42.5L141.5 42.3L141.1 42.2L140.8 42.0L140.4 41.9L140.0 41.8L139.7 41.6L139.3 41.5L138.9 41.3L138.5 41.3L138.2 41.3L137.8 41.3ZM143.9 41.0L143.9 40.7L144.3 40.7L144.7 40.6L145.1 40.4L145.4 40.1L145.8 39.9L146.2 39.7L146.6 39.4L146.9 39.2L147.3 39.0L147.7 38.7L148.1 38.5L148.4 35.9L148.8 40.4L149.2 40.4L149.5 40.4L149.5 41.6L149.2 41.6L148.8 41.6L148.4 46.1L148.1 43.5L147.7 43.2L147.3 43.0L146.9 42.8L146.6 42.5L146.2 42.3L145.8 42.0L145.4 41.8L145.1 41.6L144.7 41.4L144.3 41.3L143.9 41.3ZM150.1 41.0L150.1 40.7L150.5 40.7L150.8 40.7L151.2 40.6L151.6 40.5L152.0 40.3L152.3 40.2L152.7 40.1L153.1 39.9L153.5 39.8L153.8 39.6L154.2 39.5L154.6 37.9L155.0 40.6L155.3 40.6L155.7 40.6L155.7 41.3L155.3 41.3L155.0 41.3L154.6 44.0L154.2 42.5L153.8 42.3L153.5 42.2L153.1 42.0L152.7 41.9L152.3 41.8L152.0 41.6L151.6 41.5L151.2 41.3L150.8 41.3L150.5 41.3L150.1 41.3ZM156.3 41.0L156.3 40.7L156.6 40.7L157.0 40.6L157.4 40.4L157.7 40.1L158.1 39.9L158.5 39.7L158.9 39.4L159.2 39.2L159.6 39.0L160.0 38.7L160.4 38.5L160.7 35.9L161.1 40.4L161.5 40.4L161.9 40.4L161.9 41.6L161.5 41.6L161.1 41.6L160.7 46.1L160.4 43.5L160.0 43.2L159.6 43.0L159.2 42.8L158.9 42.5L158.5 42.3L158.1 42.0L157.7 41.8L157.4 41.6L157.0 41.4L156.6 41.3L156.3 41.3ZM162.4 41.0L162.4 40.7L162.8 40.7L163.2 40.7L163.5 40.5L163.9 40.3L164.3 40.1L164.6 39.9L165.0 39.7L165.4 39.5L165.8 39.3L166.1 39.1L166.5 38.9L166.9 36.7L167.3 40.5L167.6 40.5L168.0 40.5L168.0 41.5L167.6 41.5L167.3 41.5L166.9 45.2L166.5 43.1L166.1 42.9L165.8 42.7L165.4 42.5L165.0 42.3L164.6 42.1L164.3 41.9L163.9 41.7L163.5 41.5L163.2 41.3L162.8 41.3L162.4 41.3ZM168.6 41.0L168.6 40.7L168.9 40.7L169.3 40.6L169.7 40.4L170.1 40.1L170.4 39.9L170.8 39.7L171.2 39.4L171.6 39.2L171.9 39.0L172.3 38.7L172.7 38.5L173.0 35.9L173.4 40.4L173.8 40.4L174.2 40.4L174.2 41.6L173.8 41.6L173.4 41.6L173.0 46.1L172.7 43.5L172.3 43.2L171.9 43.0L171.6 42.8L171.2 42.5L170.8 42.3L170.4 42.0L170.1 41.8L169.7 41.6L169.3 41.4L168.9 41.3L168.6 41.3ZM174.7 41.0L174.7 40.7L175.1 40.7L175.5 40.6L175.8 40.4L176.2 40.1L176.6 39.9L177.0 39.7L177.3 39.4L177.7 39.2L178.1 39.0L178.5 38.7L178.8 38.5L179.2 35.9L179.6 40.4L179.9 40.4L180.3 40.4L180.3 41.6L179.9 41.6L179.6 41.6L179.2 46.1L178.8 43.5L178.5 43.2L178.1 43.0L177.7 42.8L177.3 42.5L177.0 42.3L176.6 42.0L176.2 41.8L175.8 41.6L175.5 41.4L175.1 41.3L174.7 41.3ZM180.9 41.0L180.9 40.7L181.2 40.7L181.6 40.5L182.0 40.2L182.4 39.9L182.7 39.6L183.1 39.3L183.5 39.0L183.9 38.7L184.2 38.4L184.6 38.1L185.0 37.8L185.4 34.5L185.7 40.2L186.1 40.2L186.5 40.2L186.5 41.8L186.1 41.8L185.7 41.8L185.4 47.4L185.0 44.2L184.6 43.9L184.2 43.5L183.9 43.2L183.5 42.9L183.1 42.6L182.7 42.3L182.4 42.0L182.0 41.7L181.6 41.5L181.2 41.3L180.9 41.3ZM187.0 41.0L187.0 40.7L187.4 40.7L187.8 40.6L188.1 40.4L188.5 40.1L188.9 39.9L189.3 39.7L189.6 39.4L190.0 39.2L190.4 39.0L190.8 38.7L191.1 38.5L191.5 35.9L191.9 40.4L192.3 40.4L192.6 40.4L192.6 41.6L192.3 41.6L191.9 41.6L191.5 46.1L191.1 43.5L190.8 43.2L190.4 43.0L190.0 42.8L189.6 42.5L189.3 42.3L188.9 42.0L188.5 41.8L188.1 41.6L187.8 41.4L187.4 41.3L187.0 41.3ZM193.2 41.0L193.2 40.7L193.6 40.7L193.9 40.6L194.3 40.4L194.7 40.1L195.1 39.9L195.4 39.7L195.8 39.4L196.2 39.2L196.5 39.0L196.9 38.7L197.3 38.5L197.7 35.9L198.0 40.4L198.4 40.4L198.8 40.4L198.8 41.6L198.4 41.6L198.0 41.6L197.7 46.1L197.3 43.5L196.9 43.2L196.5 43.0L196.2 42.8L195.8 42.5L195.4 42.3L195.1 42.0L194.7 41.8L194.3 41.6L193.9 41.4L193.6 41.3L193.2 41.3ZM199.3 41.0L199.3 40.7L199.7 40.7L200.1 40.7L200.5 40.6L200.8 40.4L201.2 40.3L201.6 40.1L202.0 40.0L202.3 39.8L202.7 39.6L203.1 39.5L203.4 39.3L203.8 37.6L204.2 40.6L204.6 40.6L204.9 40.6L204.9 41.4L204.6 41.4L204.2 41.4L203.8 44.4L203.4 42.7L203.1 42.5L202.7 42.3L202.3 42.2L202.0 42.0L201.6 41.8L201.2 41.7L200.8 41.5L200.5 41.4L200.1 41.3L199.7 41.3L199.3 41.3ZM205.5 41.0L205.5 40.7L205.9 40.7L206.2 40.7L206.6 40.6L207.0 40.5L207.4 40.4L207.7 40.3L208.1 40.1L208.5 40.0L208.9 39.9L209.2 39.7L209.6 39.6L210.0 38.2L210.3 40.6L210.7 40.6L211.1 40.6L211.1 41.3L210.7 41.3L210.3 41.3L210.0 43.8L209.6 42.4L209.2 42.2L208.9 42.1L208.5 42.0L208.1 41.8L207.7 41.7L207.4 41.6L207.0 41.4L206.6 41.3L206.2 41.3L205.9 41.3L205.5 41.3ZM211.6 41.0L211.6 40.7L212.0 40.7L212.4 40.7L212.8 40.7L213.1 40.6L213.5 40.6L213.9 40.5L214.3 40.4L214.6 40.3L215.0 40.2L215.4 40.1L215.8 40.0L216.1 38.9L216.5 40.7L216.9 40.7L217.2 40.7L217.2 41.3L216.9 41.3L216.5 41.3L216.1 43.0L215.8 42.0L215.4 41.9L215.0 41.8L214.6 41.7L214.3 41.6L213.9 41.5L213.5 41.4L213.1 41.3L212.8 41.3L212.4 41.3L212.0 41.3L211.6 41.3ZM217.8 41.0L217.8 40.7L218.2 40.7L218.6 40.7L218.9 40.6L219.3 40.5L219.7 40.3L220.0 40.2L220.4 40.1L220.8 39.9L221.2 39.8L221.5 39.6L221.9 39.5L222.3 37.9L222.7 40.6L223.0 40.6L223.4 40.6L223.4 41.3L223.0 41.3L222.7 41.3L222.3 44.0L221.9 42.5L221.5 42.3L221.2 42.2L220.8 42.0L220.4 41.9L220.0 41.8L219.7 41.6L219.3 41.5L218.9 41.3L218.6 41.3L218.2 41.3L217.8 41.3ZM224.0 41.0L224.0 40.7L224.3 40.7L224.7 40.7L225.1 40.7L225.5 40.7L225.8 40.6L226.2 40.5L226.6 40.4L226.9 40.3L227.3 40.2L227.7 40.2L228.1 40.1L228.4 39.1L228.8 40.7L229.2 40.7L229.6 40.7L229.6 41.3L229.2 41.3L228.8 41.3L228.4 42.8L228.1 41.9L227.7 41.8L227.3 41.7L226.9 41.6L226.6 41.5L226.2 41.4L225.8 41.4L225.5 41.3L225.1 41.3L224.7 41.3L224.3 41.3L224.0 41.3Z" fill="#0a5044"/></svg><b>Pad</b></div><div class="clip" style="left:590.0px;top:333.9px;width:430.0px;height:54.5px;background:#39b054"><svg width="430" height="54"><path d="M13.0 3.0h1.8v1h-1.8zM256.8 3.0h1.4v1h-1.4zM417.8 3.0h1.9v1h-1.9zM46.6 6.5h1.7v1h-1.7zM97.2 6.5h1.6v1h-1.6zM117.9 6.5h1.1v1h-1.1zM251.3 6.5h1.2v1h-1.2zM267.4 6.5h1.8v1h-1.8zM414.6 6.5h1.5v1h-1.5zM91.0 8.5h1.4v1h-1.4zM302.6 8.5h1.8v1h-1.8zM334.8 8.5h1.7v1h-1.7zM350.9 8.5h1.5v1h-1.5zM42.8 10.6h1.2v1h-1.2zM47.4 10.6h1.5v1h-1.5zM61.2 10.6h1.1v1h-1.1zM68.1 10.6h1.1v1h-1.1zM77.3 10.6h1.4v1h-1.4zM81.9 10.6h1.9v1h-1.9zM86.5 10.6h1.5v1h-1.5zM95.7 10.6h1.1v1h-1.1zM123.3 10.6h1.7v1h-1.7zM130.2 10.6h1.1v1h-1.1zM132.5 10.6h1.2v1h-1.2zM134.8 10.6h1.1v1h-1.1zM155.5 10.6h1.3v1h-1.3zM162.4 10.6h1.3v1h-1.3zM167.0 10.6h1.4v1h-1.4zM217.6 10.6h1.7v1h-1.7zM219.9 10.6h1.5v1h-1.5zM226.8 10.6h1.3v1h-1.3zM249.8 10.6h1.4v1h-1.4zM254.4 10.6h1.6v1h-1.6zM256.7 10.6h1.1v1h-1.1zM263.6 10.6h1.2v1h-1.2zM270.5 10.6h1.3v1h-1.3zM295.8 10.6h1.8v1h-1.8zM298.1 10.6h1.1v1h-1.1zM307.3 10.6h1.5v1h-1.5zM330.3 10.6h1.8v1h-1.8zM346.4 10.6h1.4v1h-1.4zM351.0 10.6h1.5v1h-1.5zM374.0 10.6h1.2v1h-1.2zM422.3 10.6h1.7v1h-1.7zM2.3 12.8h1.6v1h-1.6zM18.4 12.8h1.2v1h-1.2zM23.0 12.8h1.1v1h-1.1zM71.3 12.8h1.1v1h-1.1zM80.5 12.8h1.2v1h-1.2zM94.3 12.8h1.1v1h-1.1zM96.6 12.8h1.3v1h-1.3zM101.2 12.8h1.4v1h-1.4zM103.5 12.8h1.2v1h-1.2zM115.0 12.8h1.3v1h-1.3zM147.2 12.8h1.5v1h-1.5zM213.9 12.8h1.5v1h-1.5zM227.7 12.8h1.5v1h-1.5zM276.0 12.8h1.2v1h-1.2zM280.6 12.8h1.4v1h-1.4zM292.1 12.8h1.2v1h-1.2zM296.7 12.8h1.2v1h-1.2zM305.9 12.8h1.2v1h-1.2zM326.6 12.8h1.6v1h-1.6zM338.1 12.8h1.8v1h-1.8zM345.0 12.8h1.3v1h-1.3zM363.4 12.8h1.1v1h-1.1zM386.4 12.8h1.3v1h-1.3zM1.4 15.2h1.9v1h-1.9zM3.7 15.2h1.8v1h-1.8zM6.0 15.2h1.1v1h-1.1zM17.5 15.2h1.7v1h-1.7zM19.8 15.2h1.5v1h-1.5zM22.1 15.2h1.2v1h-1.2zM26.7 15.2h1.5v1h-1.5zM29.0 15.2h1.3v1h-1.3zM31.3 15.2h1.6v1h-1.6zM42.8 15.2h1.9v1h-1.9zM45.1 15.2h1.2v1h-1.2zM47.4 15.2h1.7v1h-1.7zM49.7 15.2h1.6v1h-1.6zM52.0 15.2h1.9v1h-1.9zM54.3 15.2h1.5v1h-1.5zM56.6 15.2h1.8v1h-1.8zM61.2 15.2h1.4v1h-1.4zM65.8 15.2h1.4v1h-1.4zM72.7 15.2h1.8v1h-1.8zM75.0 15.2h1.9v1h-1.9zM77.3 15.2h1.2v1h-1.2zM79.6 15.2h1.8v1h-1.8zM81.9 15.2h1.8v1h-1.8zM86.5 15.2h1.3v1h-1.3zM88.8 15.2h1.4v1h-1.4zM91.1 15.2h1.6v1h-1.6zM98.0 15.2h1.2v1h-1.2zM100.3 15.2h1.6v1h-1.6zM102.6 15.2h1.1v1h-1.1zM104.9 15.2h1.3v1h-1.3zM107.2 15.2h1.5v1h-1.5zM111.8 15.2h1.7v1h-1.7zM121.0 15.2h1.7v1h-1.7zM123.3 15.2h1.8v1h-1.8zM125.6 15.2h1.5v1h-1.5zM130.2 15.2h1.2v1h-1.2zM137.1 15.2h1.1v1h-1.1zM139.4 15.2h1.1v1h-1.1zM144.0 15.2h1.3v1h-1.3zM146.3 15.2h1.5v1h-1.5zM148.6 15.2h1.6v1h-1.6zM153.2 15.2h1.1v1h-1.1zM160.1 15.2h1.4v1h-1.4zM167.0 15.2h1.1v1h-1.1zM169.3 15.2h1.4v1h-1.4zM176.2 15.2h1.4v1h-1.4zM183.1 15.2h1.4v1h-1.4zM185.4 15.2h1.6v1h-1.6zM187.7 15.2h1.9v1h-1.9zM190.0 15.2h1.6v1h-1.6zM192.3 15.2h1.3v1h-1.3zM194.6 15.2h1.8v1h-1.8zM196.9 15.2h1.3v1h-1.3zM203.8 15.2h1.2v1h-1.2zM206.1 15.2h1.9v1h-1.9zM208.4 15.2h1.5v1h-1.5zM213.0 15.2h1.7v1h-1.7zM222.2 15.2h1.1v1h-1.1zM224.5 15.2h1.3v1h-1.3zM226.8 15.2h1.8v1h-1.8zM229.1 15.2h1.8v1h-1.8zM233.7 15.2h1.9v1h-1.9zM236.0 15.2h1.2v1h-1.2zM238.3 15.2h1.1v1h-1.1zM240.6 15.2h1.4v1h-1.4zM247.5 15.2h1.4v1h-1.4zM249.8 15.2h1.2v1h-1.2zM252.1 15.2h1.3v1h-1.3zM256.7 15.2h1.2v1h-1.2zM259.0 15.2h1.4v1h-1.4zM263.6 15.2h1.7v1h-1.7zM265.9 15.2h1.7v1h-1.7zM270.5 15.2h1.7v1h-1.7zM272.8 15.2h1.5v1h-1.5zM279.7 15.2h1.1v1h-1.1zM286.6 15.2h1.6v1h-1.6zM288.9 15.2h1.9v1h-1.9zM293.5 15.2h1.8v1h-1.8zM298.1 15.2h1.9v1h-1.9zM300.4 15.2h1.2v1h-1.2zM305.0 15.2h1.7v1h-1.7zM309.6 15.2h1.5v1h-1.5zM314.2 15.2h1.5v1h-1.5zM318.8 15.2h1.5v1h-1.5zM325.7 15.2h1.1v1h-1.1zM332.6 15.2h1.9v1h-1.9zM337.2 15.2h1.9v1h-1.9zM344.1 15.2h1.1v1h-1.1zM351.0 15.2h1.5v1h-1.5zM355.6 15.2h1.7v1h-1.7zM360.2 15.2h1.1v1h-1.1zM364.8 15.2h1.7v1h-1.7zM367.1 15.2h1.4v1h-1.4zM369.4 15.2h1.4v1h-1.4zM374.0 15.2h1.1v1h-1.1zM376.3 15.2h1.2v1h-1.2zM378.6 15.2h1.2v1h-1.2zM380.9 15.2h1.5v1h-1.5zM387.8 15.2h1.4v1h-1.4zM390.1 15.2h1.3v1h-1.3zM392.4 15.2h1.9v1h-1.9zM394.7 15.2h1.9v1h-1.9zM397.0 15.2h1.4v1h-1.4zM399.3 15.2h1.9v1h-1.9zM401.6 15.2h1.6v1h-1.6zM403.9 15.2h1.2v1h-1.2zM406.2 15.2h1.9v1h-1.9zM415.4 15.2h1.7v1h-1.7zM420.0 15.2h1.5v1h-1.5zM424.6 15.2h1.7v1h-1.7zM426.9 15.2h1.7v1h-1.7zM29.1 17.1h1.1v1h-1.1zM49.8 17.1h1.4v1h-1.4zM59.0 17.1h1.8v1h-1.8zM68.2 17.1h1.4v1h-1.4zM77.4 17.1h1.5v1h-1.5zM82.0 17.1h1.0v1h-1.0zM84.3 17.1h1.6v1h-1.6zM100.4 17.1h1.2v1h-1.2zM107.3 17.1h1.4v1h-1.4zM114.2 17.1h1.7v1h-1.7zM141.8 17.1h1.2v1h-1.2zM153.3 17.1h1.0v1h-1.0zM180.9 17.1h1.6v1h-1.6zM185.5 17.1h1.8v1h-1.8zM194.7 17.1h1.8v1h-1.8zM203.9 17.1h1.4v1h-1.4zM215.4 17.1h1.4v1h-1.4zM217.7 17.1h1.6v1h-1.6zM224.6 17.1h1.5v1h-1.5zM236.1 17.1h1.5v1h-1.5zM238.4 17.1h1.8v1h-1.8zM240.7 17.1h1.8v1h-1.8zM245.3 17.1h1.6v1h-1.6zM256.8 17.1h1.5v1h-1.5zM263.7 17.1h1.0v1h-1.0zM284.4 17.1h1.2v1h-1.2zM312.0 17.1h1.2v1h-1.2zM323.5 17.1h1.1v1h-1.1zM339.6 17.1h1.6v1h-1.6zM364.9 17.1h1.6v1h-1.6zM399.4 17.1h1.6v1h-1.6zM404.0 17.1h1.5v1h-1.5zM417.8 17.1h1.2v1h-1.2zM4.2 19.0h1.1v1h-1.1zM8.8 19.0h1.4v1h-1.4zM13.4 19.0h1.1v1h-1.1zM18.0 19.0h1.2v1h-1.2zM22.6 19.0h1.9v1h-1.9zM24.9 19.0h1.3v1h-1.3zM27.2 19.0h1.5v1h-1.5zM29.5 19.0h1.4v1h-1.4zM31.8 19.0h1.3v1h-1.3zM43.3 19.0h1.3v1h-1.3zM45.6 19.0h1.2v1h-1.2zM54.8 19.0h1.2v1h-1.2zM57.1 19.0h1.1v1h-1.1zM61.7 19.0h1.3v1h-1.3zM66.3 19.0h1.9v1h-1.9zM68.6 19.0h1.6v1h-1.6zM70.9 19.0h1.9v1h-1.9zM73.2 19.0h1.4v1h-1.4zM77.8 19.0h1.3v1h-1.3zM80.1 19.0h1.6v1h-1.6zM82.4 19.0h1.8v1h-1.8zM84.7 19.0h1.2v1h-1.2zM87.0 19.0h1.2v1h-1.2zM89.3 19.0h1.5v1h-1.5zM91.6 19.0h1.4v1h-1.4zM93.9 19.0h1.5v1h-1.5zM98.5 19.0h1.7v1h-1.7zM100.8 19.0h1.2v1h-1.2zM103.1 19.0h1.8v1h-1.8zM105.4 19.0h1.4v1h-1.4zM107.7 19.0h1.8v1h-1.8zM110.0 19.0h1.4v1h-1.4zM112.3 19.0h1.1v1h-1.1zM114.6 19.0h1.5v1h-1.5zM116.9 19.0h1.5v1h-1.5zM119.2 19.0h1.7v1h-1.7zM121.5 19.0h1.9v1h-1.9zM123.8 19.0h1.8v1h-1.8zM126.1 19.0h1.8v1h-1.8zM128.4 19.0h1.1v1h-1.1zM130.7 19.0h1.8v1h-1.8zM139.9 19.0h1.4v1h-1.4zM142.2 19.0h1.7v1h-1.7zM144.5 19.0h1.7v1h-1.7zM156.0 19.0h1.1v1h-1.1zM160.6 19.0h1.1v1h-1.1zM165.2 19.0h1.6v1h-1.6zM167.5 19.0h1.2v1h-1.2zM172.1 19.0h1.5v1h-1.5zM176.7 19.0h1.7v1h-1.7zM188.2 19.0h1.2v1h-1.2zM190.5 19.0h1.9v1h-1.9zM192.8 19.0h1.6v1h-1.6zM195.1 19.0h1.8v1h-1.8zM197.4 19.0h1.5v1h-1.5zM202.0 19.0h1.7v1h-1.7zM208.9 19.0h1.3v1h-1.3zM211.2 19.0h1.9v1h-1.9zM213.5 19.0h1.4v1h-1.4zM215.8 19.0h1.7v1h-1.7zM218.1 19.0h1.4v1h-1.4zM225.0 19.0h1.1v1h-1.1zM231.9 19.0h1.4v1h-1.4zM236.5 19.0h1.2v1h-1.2zM238.8 19.0h1.4v1h-1.4zM243.4 19.0h1.9v1h-1.9zM248.0 19.0h1.6v1h-1.6zM254.9 19.0h1.5v1h-1.5zM257.2 19.0h1.8v1h-1.8zM259.5 19.0h1.8v1h-1.8zM261.8 19.0h1.8v1h-1.8zM264.1 19.0h1.5v1h-1.5zM266.4 19.0h1.7v1h-1.7zM268.7 19.0h1.3v1h-1.3zM271.0 19.0h1.6v1h-1.6zM273.3 19.0h1.1v1h-1.1zM275.6 19.0h1.2v1h-1.2zM280.2 19.0h1.6v1h-1.6zM282.5 19.0h1.6v1h-1.6zM289.4 19.0h1.4v1h-1.4zM291.7 19.0h1.1v1h-1.1zM296.3 19.0h1.3v1h-1.3zM300.9 19.0h1.5v1h-1.5zM305.5 19.0h1.4v1h-1.4zM307.8 19.0h1.5v1h-1.5zM310.1 19.0h1.5v1h-1.5zM312.4 19.0h1.1v1h-1.1zM314.7 19.0h1.2v1h-1.2zM317.0 19.0h1.8v1h-1.8zM319.3 19.0h1.3v1h-1.3zM326.2 19.0h1.7v1h-1.7zM328.5 19.0h1.9v1h-1.9zM330.8 19.0h1.3v1h-1.3zM333.1 19.0h1.8v1h-1.8zM337.7 19.0h1.2v1h-1.2zM340.0 19.0h1.7v1h-1.7zM342.3 19.0h1.9v1h-1.9zM356.1 19.0h1.3v1h-1.3zM358.4 19.0h1.2v1h-1.2zM363.0 19.0h1.7v1h-1.7zM365.3 19.0h1.8v1h-1.8zM374.5 19.0h1.3v1h-1.3zM376.8 19.0h1.4v1h-1.4zM390.6 19.0h1.5v1h-1.5zM397.5 19.0h1.4v1h-1.4zM402.1 19.0h1.8v1h-1.8zM404.4 19.0h1.6v1h-1.6zM406.7 19.0h1.2v1h-1.2zM409.0 19.0h1.5v1h-1.5zM415.9 19.0h1.8v1h-1.8zM420.5 19.0h1.8v1h-1.8zM80.7 21.0h1.5v1h-1.5zM92.2 21.0h1.6v1h-1.6zM103.7 21.0h1.4v1h-1.4zM131.3 21.0h1.7v1h-1.7zM133.6 21.0h1.5v1h-1.5zM138.2 21.0h1.3v1h-1.3zM156.6 21.0h1.8v1h-1.8zM158.9 21.0h1.2v1h-1.2zM163.5 21.0h1.4v1h-1.4zM191.1 21.0h1.1v1h-1.1zM225.6 21.0h1.6v1h-1.6zM239.4 21.0h1.3v1h-1.3zM246.3 21.0h1.2v1h-1.2zM255.5 21.0h1.7v1h-1.7zM264.7 21.0h1.1v1h-1.1zM269.3 21.0h1.1v1h-1.1zM292.3 21.0h1.1v1h-1.1zM299.2 21.0h1.8v1h-1.8zM317.6 21.0h1.7v1h-1.7zM329.1 21.0h1.2v1h-1.2zM336.0 21.0h1.8v1h-1.8zM338.3 21.0h1.8v1h-1.8zM359.0 21.0h1.7v1h-1.7zM363.6 21.0h1.8v1h-1.8zM368.2 21.0h1.2v1h-1.2zM370.5 21.0h1.2v1h-1.2zM391.2 21.0h1.4v1h-1.4zM407.3 21.0h1.2v1h-1.2zM6.7 22.9h1.5v1h-1.5zM22.8 22.9h1.7v1h-1.7zM29.7 22.9h1.2v1h-1.2zM34.3 22.9h1.7v1h-1.7zM38.9 22.9h1.4v1h-1.4zM50.4 22.9h1.7v1h-1.7zM59.6 22.9h1.9v1h-1.9zM64.2 22.9h1.5v1h-1.5zM66.5 22.9h1.3v1h-1.3zM75.7 22.9h1.1v1h-1.1zM78.0 22.9h1.5v1h-1.5zM82.6 22.9h1.7v1h-1.7zM87.2 22.9h1.8v1h-1.8zM89.5 22.9h1.6v1h-1.6zM91.8 22.9h1.1v1h-1.1zM101.0 22.9h1.9v1h-1.9zM105.6 22.9h1.1v1h-1.1zM110.2 22.9h1.1v1h-1.1zM112.5 22.9h1.7v1h-1.7zM114.8 22.9h1.4v1h-1.4zM119.4 22.9h1.6v1h-1.6zM130.9 22.9h1.6v1h-1.6zM142.4 22.9h1.7v1h-1.7zM147.0 22.9h1.3v1h-1.3zM151.6 22.9h1.8v1h-1.8zM156.2 22.9h1.6v1h-1.6zM158.5 22.9h1.8v1h-1.8zM160.8 22.9h1.9v1h-1.9zM165.4 22.9h1.4v1h-1.4zM167.7 22.9h1.7v1h-1.7zM170.0 22.9h1.1v1h-1.1zM172.3 22.9h1.8v1h-1.8zM174.6 22.9h1.3v1h-1.3zM181.5 22.9h1.9v1h-1.9zM183.8 22.9h1.5v1h-1.5zM188.4 22.9h1.2v1h-1.2zM193.0 22.9h1.9v1h-1.9zM197.6 22.9h1.3v1h-1.3zM199.9 22.9h1.8v1h-1.8zM204.5 22.9h1.2v1h-1.2zM206.8 22.9h1.8v1h-1.8zM209.1 22.9h1.5v1h-1.5zM218.3 22.9h1.2v1h-1.2zM227.5 22.9h1.9v1h-1.9zM229.8 22.9h1.2v1h-1.2zM239.0 22.9h1.9v1h-1.9zM241.3 22.9h1.4v1h-1.4zM250.5 22.9h1.8v1h-1.8zM252.8 22.9h1.1v1h-1.1zM259.7 22.9h1.5v1h-1.5zM264.3 22.9h1.3v1h-1.3zM280.4 22.9h1.7v1h-1.7zM289.6 22.9h1.2v1h-1.2zM294.2 22.9h1.1v1h-1.1zM303.4 22.9h1.2v1h-1.2zM305.7 22.9h1.8v1h-1.8zM308.0 22.9h1.9v1h-1.9zM310.3 22.9h1.9v1h-1.9zM312.6 22.9h1.4v1h-1.4zM314.9 22.9h1.2v1h-1.2zM319.5 22.9h1.5v1h-1.5zM321.8 22.9h1.3v1h-1.3zM324.1 22.9h1.9v1h-1.9zM326.4 22.9h1.4v1h-1.4zM333.3 22.9h1.9v1h-1.9zM335.6 22.9h1.2v1h-1.2zM337.9 22.9h1.4v1h-1.4zM342.5 22.9h1.3v1h-1.3zM347.1 22.9h1.1v1h-1.1zM351.7 22.9h1.5v1h-1.5zM354.0 22.9h1.6v1h-1.6zM360.9 22.9h1.6v1h-1.6zM365.5 22.9h1.3v1h-1.3zM367.8 22.9h1.5v1h-1.5zM370.1 22.9h1.6v1h-1.6zM372.4 22.9h1.9v1h-1.9zM374.7 22.9h1.2v1h-1.2zM377.0 22.9h1.2v1h-1.2zM379.3 22.9h1.8v1h-1.8zM381.6 22.9h1.4v1h-1.4zM390.8 22.9h1.3v1h-1.3zM395.4 22.9h1.4v1h-1.4zM397.7 22.9h1.3v1h-1.3zM413.8 22.9h1.8v1h-1.8zM418.4 22.9h1.9v1h-1.9zM423.0 22.9h1.1v1h-1.1zM4.2 24.8h1.5v1h-1.5zM20.3 24.8h1.2v1h-1.2zM22.6 24.8h1.3v1h-1.3zM43.3 24.8h1.4v1h-1.4zM64.0 24.8h1.4v1h-1.4zM98.5 24.8h1.5v1h-1.5zM185.9 24.8h1.7v1h-1.7zM204.3 24.8h1.2v1h-1.2zM211.2 24.8h1.7v1h-1.7zM227.3 24.8h1.7v1h-1.7zM296.3 24.8h1.1v1h-1.1zM333.1 24.8h1.2v1h-1.2zM335.4 24.8h1.2v1h-1.2zM344.6 24.8h1.3v1h-1.3zM353.8 24.8h1.2v1h-1.2zM356.1 24.8h1.8v1h-1.8zM365.3 24.8h1.7v1h-1.7zM415.9 24.8h1.1v1h-1.1zM2.1 26.8h1.6v1h-1.6zM43.5 26.8h1.7v1h-1.7zM48.1 26.8h1.1v1h-1.1zM94.1 26.8h1.5v1h-1.5zM98.7 26.8h1.9v1h-1.9zM140.1 26.8h1.2v1h-1.2zM172.3 26.8h1.1v1h-1.1zM188.4 26.8h1.7v1h-1.7zM206.8 26.8h1.3v1h-1.3zM227.5 26.8h1.2v1h-1.2zM236.7 26.8h1.6v1h-1.6zM239.0 26.8h1.4v1h-1.4zM241.3 26.8h1.5v1h-1.5zM271.2 26.8h1.5v1h-1.5zM358.6 26.8h1.1v1h-1.1zM360.9 26.8h1.9v1h-1.9zM367.8 26.8h1.8v1h-1.8zM390.8 26.8h1.1v1h-1.1zM420.7 26.8h1.4v1h-1.4zM89.7 30.5h2.9v1h-2.9zM165.6 30.5h2.1v1h-2.1zM322.0 30.5h2.3v1h-2.3zM19.6 33.5h2.7v1h-2.7zM21.9 33.5h2.9v1h-2.9zM77.1 33.5h2.1v1h-2.1zM90.9 33.5h3.4v1h-3.4zM196.7 33.5h2.2v1h-2.2zM205.9 33.5h2.5v1h-2.5zM222.0 33.5h3.0v1h-3.0zM254.2 33.5h3.2v1h-3.2zM353.1 33.5h2.9v1h-2.9zM378.4 33.5h3.5v1h-3.5zM396.8 33.5h2.9v1h-2.9zM410.6 33.5h3.5v1h-3.5zM6.6 36.5h4.0v1h-4.0zM36.5 36.5h2.8v1h-2.8zM112.4 36.5h2.9v1h-2.9zM126.2 36.5h3.0v1h-3.0zM225.1 36.5h2.3v1h-2.3zM287.2 36.5h4.1v1h-4.1zM301.0 36.5h2.4v1h-2.4zM413.7 36.5h3.9v1h-3.9zM145.3 39.5h2.5v1h-2.5zM186.7 39.5h2.7v1h-2.7zM262.6 39.5h3.0v1h-3.0zM287.9 39.5h3.8v1h-3.8zM343.1 39.5h3.0v1h-3.0zM363.8 39.5h3.6v1h-3.6zM52.8 43.0h3.4v1h-3.4zM167.8 43.0h3.6v1h-3.6zM179.3 43.0h3.8v1h-3.8zM250.6 43.0h2.7v1h-2.7zM310.4 43.0h3.0v1h-3.0zM321.9 43.0h3.6v1h-3.6zM413.9 43.0h3.2v1h-3.2zM142.9 46.5h3.1v1h-3.1zM244.1 46.5h4.0v1h-4.0zM294.7 46.5h4.3v1h-4.3z" fill="#0c3315"/></svg><b style="left:0.6px">Stereo Grand</b></div><div class="clip" style="left:0.0px;top:389.5px;width:417.2px;height:54.5px;background:#62b038"><svg width="417.2" height="54.5"><path d="M0 13.7H417.2M0 41.0H417.2" stroke="#24500e" stroke-width="1" stroke-opacity="0.45"/><path d="M5.5 13.7L5.5 13.4L6.1 8.3L6.8 9.1L7.4 8.8L8.0 9.9L8.7 10.3L9.3 10.5L10.0 11.1L10.6 11.7L11.2 12.4L11.9 12.9L12.5 13.4L12.5 14.0L11.9 14.5L11.2 15.1L10.6 15.8L10.0 16.3L9.3 16.9L8.7 17.2L8.0 17.5L7.4 18.7L6.8 18.4L6.1 19.1L5.5 14.0ZM30.5 13.7L30.5 13.4L31.1 9.1L31.8 10.5L32.4 11.1L33.0 11.2L33.6 11.6L34.2 12.3L34.9 13.0L35.5 13.4L35.5 14.0L34.9 14.5L34.2 15.2L33.6 15.9L33.0 16.2L32.4 16.3L31.8 16.9L31.1 18.3L30.5 14.0ZM48.5 13.7L48.5 13.4L49.1 7.0L49.8 7.6L50.4 9.2L51.0 9.1L51.6 9.3L52.2 9.5L52.9 11.3L53.5 13.4L53.5 14.0L52.9 16.1L52.2 18.0L51.6 18.2L51.0 18.3L50.4 18.3L49.8 19.8L49.1 20.4L48.5 14.0ZM54.5 13.7L54.5 13.4L55.1 8.3L55.7 7.5L56.3 8.3L56.9 9.4L57.5 9.0L58.1 9.5L58.7 9.9L59.3 10.2L59.9 11.7L60.5 13.4L60.5 14.0L59.9 15.8L59.3 17.2L58.7 17.6L58.1 17.9L57.5 18.4L56.9 18.0L56.3 19.2L55.7 20.0L55.1 19.1L54.5 14.0ZM76.5 13.7L76.5 13.4L77.1 13.0L77.7 12.0L78.3 11.6L78.9 10.6L79.5 10.2L80.1 9.0L80.8 8.9L81.4 8.4L82.0 8.9L82.6 10.3L83.2 11.2L83.8 12.1L84.4 12.8L85.0 13.4L85.0 14.0L84.4 14.6L83.8 15.4L83.2 16.3L82.6 17.1L82.0 18.5L81.4 19.0L80.8 18.6L80.1 18.5L79.5 17.3L78.9 16.8L78.3 15.9L77.7 15.4L77.1 14.5L76.5 14.0ZM88.5 13.7L88.5 13.4L89.1 11.5L89.8 10.2L90.4 9.7L91.0 9.5L91.6 8.7L92.2 9.1L92.9 9.3L93.5 9.4L94.1 9.0L94.8 8.8L95.4 8.7L96.0 9.1L96.6 10.2L97.2 11.1L97.9 11.6L98.5 13.4L98.5 14.0L97.9 15.8L97.2 16.4L96.6 17.3L96.0 18.3L95.4 18.7L94.8 18.7L94.1 18.5L93.5 18.1L92.9 18.2L92.2 18.3L91.6 18.8L91.0 18.0L90.4 17.8L89.8 17.3L89.1 16.0L88.5 14.0ZM104.5 13.7L104.5 13.4L105.1 9.3L105.8 9.5L106.4 10.2L107.0 10.9L107.6 11.6L108.2 12.3L108.9 12.8L109.5 13.4L109.5 14.0L108.9 14.7L108.2 15.1L107.6 15.9L107.0 16.5L106.4 17.2L105.8 18.0L105.1 18.1L104.5 14.0ZM121.5 13.7L121.5 13.4L122.2 9.6L122.9 9.4L123.6 9.7L124.3 11.4L125.0 13.4L125.0 14.0L124.3 16.1L123.6 17.7L122.9 18.0L122.2 17.9L121.5 14.0ZM126.0 13.7L126.0 13.4L126.6 9.4L127.2 10.4L127.8 10.7L128.4 11.3L129.0 13.4L129.0 14.0L128.4 16.1L127.8 16.7L127.2 17.0L126.6 18.1L126.0 14.0ZM130.0 13.7L130.0 13.4L130.7 8.5L131.3 8.9L132.0 10.1L132.7 10.0L133.3 11.0L134.0 13.4L134.0 14.0L133.3 16.4L132.7 17.5L132.0 17.3L131.3 18.6L130.7 19.0L130.0 14.0ZM147.5 13.7L147.5 13.4L148.2 9.9L148.8 10.1L149.5 10.5L150.2 10.8L150.8 11.5L151.5 13.4L151.5 14.0L150.8 15.9L150.2 16.7L149.5 16.9L148.8 17.4L148.2 17.5L147.5 14.0ZM153.0 13.7L153.0 13.4L153.6 10.6L154.3 11.2L154.9 11.2L155.6 11.3L156.2 12.2L156.9 12.9L157.5 13.4L157.5 14.0L156.9 14.6L156.2 15.3L155.6 16.2L154.9 16.3L154.3 16.3L153.6 16.9L153.0 14.0ZM172.0 13.7L172.0 13.4L172.7 11.0L173.3 11.0L174.0 11.5L174.7 11.9L175.3 12.9L176.0 13.4L176.0 14.0L175.3 14.6L174.7 15.5L174.0 16.0L173.3 16.4L172.7 16.4L172.0 14.0ZM177.0 13.7L177.0 13.4L177.6 10.3L178.3 10.9L178.9 10.1L179.6 11.0L180.2 11.8L180.9 12.0L181.5 13.4L181.5 14.0L180.9 15.4L180.2 15.7L179.6 16.4L178.9 17.4L178.3 16.5L177.6 17.1L177.0 14.0ZM190.5 13.7L190.5 13.4L191.1 9.5L191.8 9.9L192.4 10.2L193.0 10.3L193.6 10.8L194.2 11.6L194.9 12.7L195.5 13.4L195.5 14.0L194.9 14.7L194.2 15.9L193.6 16.6L193.0 17.1L192.4 17.3L191.8 17.6L191.1 17.9L190.5 14.0ZM202.0 13.7L202.0 13.4L202.6 8.7L203.2 8.7L203.9 9.2L204.5 9.6L205.1 8.8L205.8 9.4L206.4 9.6L207.0 9.6L207.6 10.2L208.2 10.9L208.9 11.7L209.5 13.4L209.5 14.0L208.9 15.7L208.2 16.6L207.6 17.3L207.0 17.9L206.4 17.9L205.8 18.1L205.1 18.7L204.5 17.9L203.9 18.3L203.2 18.8L202.6 18.8L202.0 14.0ZM217.5 13.7L217.5 13.4L218.1 10.6L218.7 11.1L219.3 11.8L219.9 12.5L220.5 13.4L220.5 14.0L219.9 15.0L219.3 15.7L218.7 16.3L218.1 16.8L217.5 14.0ZM222.0 13.7L222.0 13.4L222.6 10.7L223.2 10.9L223.8 11.0L224.4 11.8L225.0 13.4L225.0 14.0L224.4 15.7L223.8 16.5L223.2 16.6L222.6 16.7L222.0 14.0ZM226.5 13.7L226.5 13.4L227.1 7.8L227.8 7.3L228.4 8.9L229.0 7.4L229.6 8.8L230.2 8.2L230.9 8.9L231.5 9.2L232.1 9.5L232.8 10.8L233.4 11.9L234.0 13.4L234.0 14.0L233.4 15.5L232.8 16.7L232.1 18.0L231.5 18.3L230.9 18.6L230.2 19.2L229.6 18.7L229.0 20.0L228.4 18.6L227.8 20.1L227.1 19.6L226.5 14.0ZM242.0 13.7L242.0 13.4L242.6 10.6L243.2 11.4L243.8 12.3L244.4 12.9L245.0 13.4L245.0 14.0L244.4 14.6L243.8 15.2L243.2 16.0L242.6 16.8L242.0 14.0ZM247.0 13.7L247.0 13.4L247.6 10.3L248.2 11.6L248.8 12.1L249.4 12.8L250.0 13.4L250.0 14.0L249.4 14.6L248.8 15.3L248.2 15.8L247.6 17.2L247.0 14.0ZM252.0 13.7L252.0 13.4L252.6 9.9L253.3 9.7L253.9 10.0L254.5 10.3L255.2 9.9L255.8 10.2L256.5 10.8L257.1 11.6L257.7 11.7L258.4 12.4L259.0 13.4L259.0 14.0L258.4 15.0L257.7 15.7L257.1 15.9L256.5 16.6L255.8 17.3L255.2 17.5L254.5 17.2L253.9 17.5L253.3 17.7L252.6 17.5L252.0 14.0ZM273.0 13.7L273.0 13.4L273.6 13.1L274.2 12.6L274.9 11.6L275.5 11.6L276.1 10.9L276.8 10.1L277.4 8.8L278.0 9.2L278.6 9.8L279.2 9.9L279.9 11.0L280.5 11.3L281.1 12.0L281.8 12.3L282.4 13.1L283.0 13.4L283.0 14.0L282.4 14.4L281.8 15.1L281.1 15.5L280.5 16.1L279.9 16.5L279.2 17.6L278.6 17.7L278.0 18.2L277.4 18.6L276.8 17.3L276.1 16.5L275.5 15.8L274.9 15.8L274.2 14.9L273.6 14.4L273.0 14.0ZM286.5 13.7L286.5 13.4L287.1 13.2L287.7 12.6L288.3 12.2L289.0 11.4L289.6 10.9L290.2 10.5L290.8 10.6L291.4 11.2L292.0 11.9L292.7 12.2L293.3 12.5L293.9 13.3L294.5 13.4L294.5 14.0L293.9 14.2L293.3 14.9L292.7 15.2L292.0 15.6L291.4 16.2L290.8 16.9L290.2 16.9L289.6 16.5L289.0 16.1L288.3 15.2L287.7 14.8L287.1 14.2L286.5 14.0ZM298.0 13.7L298.0 13.4L298.6 13.1L299.2 12.1L299.8 11.7L300.4 10.9L301.0 10.2L301.6 8.6L302.2 7.7L302.9 8.8L303.5 10.0L304.1 10.4L304.7 11.1L305.3 12.0L305.9 13.1L306.5 13.4L306.5 14.0L305.9 14.4L305.3 15.4L304.7 16.3L304.1 17.0L303.5 17.5L302.9 18.6L302.2 19.8L301.6 18.8L301.0 17.3L300.4 16.5L299.8 15.7L299.2 15.4L298.6 14.4L298.0 14.0ZM326.0 13.7L326.0 13.4L326.6 12.8L327.3 11.5L327.9 10.6L328.6 9.6L329.2 9.5L329.9 10.1L330.6 10.7L331.2 12.0L331.9 12.6L332.5 13.4L332.5 14.0L331.9 14.9L331.2 15.4L330.6 16.7L329.9 17.3L329.2 17.9L328.6 17.8L327.9 16.8L327.3 15.9L326.6 14.6L326.0 14.0ZM344.0 13.7L344.0 13.4L344.6 11.5L345.2 11.6L345.8 12.2L346.4 12.9L347.0 13.4L347.0 14.0L346.4 14.6L345.8 15.2L345.2 15.8L344.6 15.9L344.0 14.0ZM350.0 13.7L350.0 13.4L350.6 11.4L351.2 10.0L351.8 10.2L352.5 9.6L353.1 8.7L353.7 9.0L354.3 9.5L354.9 9.4L355.5 9.8L356.2 9.7L356.8 10.6L357.4 11.2L358.0 13.4L358.0 14.0L357.4 16.3L356.8 16.8L356.2 17.7L355.5 17.6L354.9 18.0L354.3 17.9L353.7 18.5L353.1 18.7L352.5 17.9L351.8 17.2L351.2 17.5L350.6 16.1L350.0 14.0ZM373.0 13.7L373.0 13.4L373.6 10.9L374.2 11.4L374.9 11.7L375.5 11.7L376.1 11.9L376.8 12.0L377.4 12.5L378.0 13.4L378.0 14.0L377.4 14.9L376.8 15.5L376.1 15.5L375.5 15.7L374.9 15.7L374.2 16.1L373.6 16.5L373.0 14.0ZM379.0 13.7L379.0 13.4L379.6 13.1L380.2 12.3L380.8 11.7L381.4 10.9L382.0 11.0L382.6 10.9L383.2 11.7L383.8 12.2L384.4 13.1L385.0 13.4L385.0 14.0L384.4 14.4L383.8 15.2L383.2 15.7L382.6 16.6L382.0 16.5L381.4 16.6L380.8 15.7L380.2 15.2L379.6 14.4L379.0 14.0ZM387.0 13.7L387.0 13.4L387.6 11.1L388.2 10.9L388.8 10.5L389.4 11.4L390.0 11.2L390.6 11.7L391.2 11.8L391.8 11.9L392.4 12.5L393.0 13.4L393.0 14.0L392.4 15.0L391.8 15.5L391.2 15.7L390.6 15.8L390.0 16.3L389.4 16.1L388.8 17.0L388.2 16.6L387.6 16.3L387.0 14.0ZM394.0 13.7L394.0 13.4L394.6 12.9L395.2 12.3L395.9 11.0L396.5 10.1L397.1 11.6L397.8 12.2L398.4 13.0L399.0 13.4L399.0 14.0L398.4 14.5L397.8 15.2L397.1 15.9L396.5 17.4L395.9 16.4L395.2 15.2L394.6 14.5L394.0 14.0ZM400.0 13.7L400.0 13.4L400.6 10.5L401.2 10.2L401.8 10.3L402.4 11.0L403.0 11.8L403.6 11.9L404.2 12.0L404.8 12.7L405.4 13.0L406.0 13.4L406.0 14.0L405.4 14.4L404.8 14.7L404.2 15.5L403.6 15.6L403.0 15.6L402.4 16.4L401.8 17.1L401.2 17.2L400.6 16.9L400.0 14.0ZM5.5 41.0L5.5 40.7L6.1 38.1L6.8 38.0L7.4 38.7L8.0 38.7L8.7 39.5L9.3 39.5L10.0 39.7L10.6 39.7L11.2 40.1L11.9 40.5L12.5 40.7L12.5 41.3L11.9 41.4L11.2 41.9L10.6 42.3L10.0 42.2L9.3 42.5L8.7 42.4L8.0 43.2L7.4 43.3L6.8 44.0L6.1 43.8L5.5 41.3ZM30.5 41.0L30.5 40.7L31.1 39.0L31.8 39.3L32.4 39.2L33.0 39.2L33.6 40.0L34.2 40.2L34.9 40.6L35.5 40.7L35.5 41.3L34.9 41.4L34.2 41.8L33.6 42.0L33.0 42.7L32.4 42.8L31.8 42.7L31.1 42.9L30.5 41.3ZM48.5 41.0L48.5 40.7L49.1 38.4L49.8 38.2L50.4 38.7L51.0 38.0L51.6 38.7L52.2 39.0L52.9 39.6L53.5 40.7L53.5 41.3L52.9 42.3L52.2 42.9L51.6 43.3L51.0 43.9L50.4 43.3L49.8 43.7L49.1 43.5L48.5 41.3ZM54.5 41.0L54.5 40.7L55.1 38.5L55.7 37.8L56.3 37.9L56.9 38.6L57.5 38.8L58.1 38.6L58.7 39.1L59.3 39.4L59.9 39.8L60.5 40.7L60.5 41.3L59.9 42.1L59.3 42.6L58.7 42.9L58.1 43.4L57.5 43.2L56.9 43.4L56.3 44.1L55.7 44.2L55.1 43.4L54.5 41.3ZM76.5 41.0L76.5 40.7L77.1 40.5L77.7 40.0L78.3 39.5L78.9 39.5L79.5 38.7L80.1 38.5L80.8 37.7L81.4 38.8L82.0 39.1L82.6 39.1L83.2 39.9L83.8 40.1L84.4 40.5L85.0 40.7L85.0 41.3L84.4 41.4L83.8 41.8L83.2 42.1L82.6 42.9L82.0 42.9L81.4 43.1L80.8 44.2L80.1 43.4L79.5 43.3L78.9 42.5L78.3 42.4L77.7 41.9L77.1 41.4L76.5 41.3ZM88.5 41.0L88.5 40.7L89.1 40.0L89.8 39.3L90.4 39.1L91.0 38.8L91.6 38.9L92.2 39.0L92.9 38.2L93.5 38.4L94.1 38.4L94.8 38.3L95.4 38.4L96.0 39.0L96.6 39.0L97.2 39.6L97.9 39.6L98.5 40.7L98.5 41.3L97.9 42.3L97.2 42.3L96.6 42.9L96.0 43.0L95.4 43.6L94.8 43.7L94.1 43.6L93.5 43.5L92.9 43.7L92.2 43.0L91.6 43.1L91.0 43.1L90.4 42.9L89.8 42.6L89.1 41.9L88.5 41.3ZM104.5 41.0L104.5 40.7L105.1 38.5L105.8 39.3L106.4 39.5L107.0 39.6L107.6 39.7L108.2 40.1L108.9 40.6L109.5 40.7L109.5 41.3L108.9 41.3L108.2 41.9L107.6 42.3L107.0 42.4L106.4 42.4L105.8 42.7L105.1 43.5L104.5 41.3ZM121.5 41.0L121.5 40.7L122.2 38.4L122.9 39.1L123.6 39.3L124.3 39.8L125.0 40.7L125.0 41.3L124.3 42.2L123.6 42.6L122.9 42.9L122.2 43.5L121.5 41.3ZM126.0 41.0L126.0 40.7L126.6 39.2L127.2 39.0L127.8 39.5L128.4 39.9L129.0 40.7L129.0 41.3L128.4 42.1L127.8 42.5L127.2 43.0L126.6 42.7L126.0 41.3ZM130.0 41.0L130.0 40.7L130.7 38.2L131.3 38.9L132.0 38.8L132.7 39.3L133.3 39.6L134.0 40.7L134.0 41.3L133.3 42.4L132.7 42.6L132.0 43.1L131.3 43.0L130.7 43.7L130.0 41.3ZM147.5 41.0L147.5 40.7L148.2 38.6L148.8 38.8L149.5 39.1L150.2 39.3L150.8 40.1L151.5 40.7L151.5 41.3L150.8 41.9L150.2 42.6L149.5 42.9L148.8 43.1L148.2 43.3L147.5 41.3ZM153.0 41.0L153.0 40.7L153.6 39.2L154.3 39.1L154.9 39.8L155.6 39.9L156.2 40.3L156.9 40.6L157.5 40.7L157.5 41.3L156.9 41.3L156.2 41.7L155.6 42.1L154.9 42.2L154.3 42.8L153.6 42.8L153.0 41.3ZM172.0 41.0L172.0 40.7L172.7 39.0L173.3 39.1L174.0 39.8L174.7 40.0L175.3 40.4L176.0 40.7L176.0 41.3L175.3 41.6L174.7 42.0L174.0 42.1L173.3 42.8L172.7 42.9L172.0 41.3ZM177.0 41.0L177.0 40.7L177.6 39.2L178.3 39.1L178.9 39.1L179.6 39.5L180.2 39.8L180.9 40.2L181.5 40.7L181.5 41.3L180.9 41.7L180.2 42.2L179.6 42.5L178.9 42.8L178.3 42.8L177.6 42.7L177.0 41.3ZM190.5 41.0L190.5 40.7L191.1 38.6L191.8 38.8L192.4 38.9L193.0 39.6L193.6 39.7L194.2 40.0L194.9 40.5L195.5 40.7L195.5 41.3L194.9 41.5L194.2 42.0L193.6 42.2L193.0 42.4L192.4 43.1L191.8 43.2L191.1 43.4L190.5 41.3ZM202.0 41.0L202.0 40.7L202.6 38.8L203.2 38.3L203.9 38.2L204.5 38.4L205.1 38.3L205.8 38.4L206.4 39.2L207.0 38.8L207.6 39.4L208.2 39.6L208.9 40.2L209.5 40.7L209.5 41.3L208.9 41.7L208.2 42.3L207.6 42.5L207.0 43.2L206.4 42.7L205.8 43.5L205.1 43.6L204.5 43.6L203.9 43.8L203.2 43.6L202.6 43.2L202.0 41.3ZM217.5 41.0L217.5 40.7L218.1 38.9L218.7 39.5L219.3 40.0L219.9 40.3L220.5 40.7L220.5 41.3L219.9 41.7L219.3 42.0L218.7 42.4L218.1 43.1L217.5 41.3ZM222.0 41.0L222.0 40.7L222.6 39.0L223.2 39.5L223.8 39.5L224.4 39.8L225.0 40.7L225.0 41.3L224.4 42.1L223.8 42.4L223.2 42.5L222.6 42.9L222.0 41.3ZM226.5 41.0L226.5 40.7L227.1 38.2L227.8 38.3L228.4 38.4L229.0 38.2L229.6 38.3L230.2 38.2L230.9 38.8L231.5 39.1L232.1 38.9L232.8 39.6L233.4 40.1L234.0 40.7L234.0 41.3L233.4 41.9L232.8 42.4L232.1 43.0L231.5 42.9L230.9 43.1L230.2 43.8L229.6 43.6L229.0 43.7L228.4 43.6L227.8 43.6L227.1 43.7L226.5 41.3ZM242.0 41.0L242.0 40.7L242.6 39.6L243.2 39.9L243.8 40.2L244.4 40.5L245.0 40.7L245.0 41.3L244.4 41.5L243.8 41.8L243.2 42.1L242.6 42.3L242.0 41.3ZM247.0 41.0L247.0 40.7L247.6 39.4L248.2 39.6L248.8 40.0L249.4 40.4L250.0 40.7L250.0 41.3L249.4 41.6L248.8 41.9L248.2 42.4L247.6 42.5L247.0 41.3ZM252.0 41.0L252.0 40.7L252.6 38.8L253.3 39.1L253.9 39.1L254.5 39.1L255.2 39.4L255.8 39.1L256.5 39.5L257.1 39.6L257.7 40.0L258.4 40.3L259.0 40.7L259.0 41.3L258.4 41.7L257.7 41.9L257.1 42.4L256.5 42.4L255.8 42.8L255.2 42.6L254.5 42.8L253.9 42.9L253.3 42.8L252.6 43.2L252.0 41.3ZM273.0 41.0L273.0 40.7L273.6 40.6L274.2 40.4L274.9 39.9L275.5 39.8L276.1 39.6L276.8 39.2L277.4 39.1L278.0 38.9L278.6 38.9L279.2 39.3L279.9 39.2L280.5 39.5L281.1 40.2L281.8 40.3L282.4 40.7L283.0 40.7L283.0 41.3L282.4 41.3L281.8 41.7L281.1 41.8L280.5 42.4L279.9 42.7L279.2 42.7L278.6 43.1L278.0 43.1L277.4 42.8L276.8 42.7L276.1 42.3L275.5 42.1L274.9 42.0L274.2 41.6L273.6 41.3L273.0 41.3ZM286.5 41.0L286.5 40.7L287.1 40.7L287.7 40.4L288.3 40.1L289.0 39.9L289.6 39.5L290.2 39.1L290.8 39.3L291.4 39.8L292.0 39.9L292.7 40.1L293.3 40.4L293.9 40.7L294.5 40.7L294.5 41.3L293.9 41.3L293.3 41.5L292.7 41.8L292.0 42.1L291.4 42.1L290.8 42.6L290.2 42.9L289.6 42.5L289.0 42.0L288.3 41.8L287.7 41.6L287.1 41.3L286.5 41.3ZM298.0 41.0L298.0 40.7L298.6 40.6L299.2 40.2L299.8 40.0L300.4 39.2L301.0 38.9L301.6 38.9L302.2 38.3L302.9 38.8L303.5 38.9L304.1 39.4L304.7 39.7L305.3 40.2L305.9 40.6L306.5 40.7L306.5 41.3L305.9 41.3L305.3 41.7L304.7 42.3L304.1 42.6L303.5 43.0L302.9 43.2L302.2 43.6L301.6 43.1L301.0 43.1L300.4 42.8L299.8 42.0L299.2 41.8L298.6 41.4L298.0 41.3ZM326.0 41.0L326.0 40.7L326.6 40.5L327.3 40.0L327.9 39.5L328.6 39.2L329.2 38.2L329.9 39.1L330.6 39.4L331.2 39.8L331.9 40.4L332.5 40.7L332.5 41.3L331.9 41.6L331.2 42.2L330.6 42.6L329.9 42.9L329.2 43.7L328.6 42.7L327.9 42.4L327.3 41.9L326.6 41.5L326.0 41.3ZM344.0 41.0L344.0 40.7L344.6 39.6L345.2 40.0L345.8 40.3L346.4 40.6L347.0 40.7L347.0 41.3L346.4 41.4L345.8 41.6L345.2 42.0L344.6 42.3L344.0 41.3ZM350.0 41.0L350.0 40.7L350.6 39.7L351.2 39.1L351.8 38.9L352.5 38.5L353.1 38.4L353.7 38.9L354.3 38.9L354.9 38.4L355.5 39.1L356.2 38.8L356.8 39.1L357.4 39.8L358.0 40.7L358.0 41.3L357.4 42.2L356.8 42.8L356.2 43.1L355.5 42.9L354.9 43.6L354.3 43.0L353.7 43.0L353.1 43.5L352.5 43.4L351.8 43.1L351.2 42.9L350.6 42.2L350.0 41.3ZM373.0 41.0L373.0 40.7L373.6 39.7L374.2 39.8L374.9 39.7L375.5 39.9L376.1 39.9L376.8 40.1L377.4 40.5L378.0 40.7L378.0 41.3L377.4 41.5L376.8 41.8L376.1 42.0L375.5 42.0L374.9 42.3L374.2 42.1L373.6 42.2L373.0 41.3ZM379.0 41.0L379.0 40.7L379.6 40.6L380.2 40.3L380.8 39.8L381.4 39.7L382.0 39.2L382.6 39.7L383.2 40.1L383.8 40.2L384.4 40.7L385.0 40.7L385.0 41.3L384.4 41.3L383.8 41.8L383.2 41.9L382.6 42.2L382.0 42.7L381.4 42.3L380.8 42.1L380.2 41.6L379.6 41.3L379.0 41.3ZM387.0 41.0L387.0 40.7L387.6 39.6L388.2 39.5L388.8 39.6L389.4 39.7L390.0 39.4L390.6 39.9L391.2 39.9L391.8 40.0L392.4 40.4L393.0 40.7L393.0 41.3L392.4 41.6L391.8 41.9L391.2 42.0L390.6 42.0L390.0 42.5L389.4 42.2L388.8 42.3L388.2 42.5L387.6 42.4L387.0 41.3ZM394.0 41.0L394.0 40.7L394.6 40.5L395.2 40.1L395.9 39.6L396.5 38.9L397.1 39.7L397.8 40.2L398.4 40.6L399.0 40.7L399.0 41.3L398.4 41.4L397.8 41.8L397.1 42.2L396.5 43.1L395.9 42.4L395.2 41.8L394.6 41.5L394.0 41.3ZM400.0 41.0L400.0 40.7L400.6 39.0L401.2 39.4L401.8 39.5L402.4 39.6L403.0 39.9L403.6 40.1L404.2 40.1L404.8 40.3L405.4 40.6L406.0 40.7L406.0 41.3L405.4 41.3L404.8 41.6L404.2 41.8L403.6 41.8L403.0 42.0L402.4 42.4L401.8 42.5L401.2 42.6L400.6 42.9L400.0 41.3Z" fill="#24500e"/></svg><b>Synth</b></div><div class="clip" style="left:566.0px;top:389.5px;width:636.0px;height:54.5px;background:#62b038"><svg width="636.0" height="54.5"><path d="M0 13.7H636.0M0 41.0H636.0" stroke="#24500e" stroke-width="1" stroke-opacity="0.45"/><path d="M29.5 13.7L29.5 13.4L30.1 9.2L30.7 9.9L31.3 8.8L31.9 9.5L32.5 10.5L33.1 11.1L33.7 11.6L34.3 11.8L34.9 12.8L35.5 13.4L35.5 14.0L34.9 14.6L34.3 15.6L33.7 15.8L33.1 16.3L32.5 16.9L31.9 17.9L31.3 18.6L30.7 17.5L30.1 18.3L29.5 14.0ZM53.5 13.7L53.5 13.4L54.1 9.5L54.7 8.9L55.3 10.0L55.9 9.6L56.6 10.4L57.2 10.9L57.8 10.9L58.4 12.1L59.0 13.4L59.0 14.0L58.4 15.3L57.8 16.5L57.2 16.6L56.6 17.0L55.9 17.9L55.3 17.4L54.7 18.5L54.1 18.0L53.5 14.0ZM72.5 13.7L72.5 13.4L73.1 8.1L73.8 8.1L74.4 9.2L75.1 9.6L75.7 9.3L76.4 11.5L77.0 13.4L77.0 14.0L76.4 16.0L75.7 18.1L75.1 17.8L74.4 18.3L73.8 19.3L73.1 19.4L72.5 14.0ZM78.0 13.7L78.0 13.4L78.7 7.9L79.3 7.5L80.0 8.5L80.6 8.4L81.2 9.4L81.9 9.2L82.5 9.9L83.2 10.4L83.8 11.6L84.5 13.4L84.5 14.0L83.8 15.9L83.2 17.0L82.5 17.5L81.9 18.2L81.2 18.1L80.6 19.1L80.0 18.9L79.3 20.0L78.7 19.6L78.0 14.0ZM100.0 13.7L100.0 13.4L100.6 13.0L101.2 12.7L101.8 12.0L102.4 10.9L103.0 10.9L103.6 9.5L104.2 10.1L104.8 9.3L105.4 10.2L106.0 10.7L106.6 11.5L107.2 11.6L107.8 12.4L108.4 13.2L109.0 13.4L109.0 14.0L108.4 14.2L107.8 15.0L107.2 15.9L106.6 16.0L106.0 16.8L105.4 17.3L104.8 18.2L104.2 17.3L103.6 17.9L103.0 16.6L102.4 16.5L101.8 15.4L101.2 14.8L100.6 14.4L100.0 14.0ZM111.0 13.7L111.0 13.4L111.6 10.3L112.2 9.4L112.9 10.0L113.5 10.5L114.1 11.2L114.8 11.0L115.4 11.8L116.0 13.4L116.0 14.0L115.4 15.7L114.8 16.4L114.1 16.3L113.5 17.0L112.9 17.4L112.2 18.1L111.6 17.1L111.0 14.0ZM117.0 13.7L117.0 13.4L117.6 9.2L118.2 9.9L118.9 10.4L119.5 10.6L120.1 10.8L120.8 11.0L121.4 12.1L122.0 13.4L122.0 14.0L121.4 15.4L120.8 16.5L120.1 16.7L119.5 16.8L118.9 17.0L118.2 17.6L117.6 18.2L117.0 14.0ZM127.5 13.7L127.5 13.4L128.1 9.5L128.7 9.0L129.3 9.7L129.9 9.4L130.5 9.4L131.1 9.6L131.7 10.8L132.3 10.5L132.9 12.1L133.5 13.4L133.5 14.0L132.9 15.3L132.3 16.9L131.7 16.7L131.1 17.8L130.5 18.1L129.9 18.0L129.3 17.8L128.7 18.5L128.1 18.0L127.5 14.0ZM152.5 13.7L152.5 13.4L153.1 9.9L153.7 9.8L154.3 10.5L154.9 10.4L155.5 11.3L156.1 11.4L156.7 11.9L157.3 12.3L157.9 12.9L158.5 13.4L158.5 14.0L157.9 14.5L157.3 15.2L156.7 15.6L156.1 16.1L155.5 16.1L154.9 17.1L154.3 17.0L153.7 17.7L153.1 17.6L152.5 14.0ZM171.5 13.7L171.5 13.4L172.1 8.5L172.8 7.9L173.4 8.0L174.0 9.2L174.6 9.0L175.2 10.0L175.9 11.6L176.5 13.4L176.5 14.0L175.9 15.9L175.2 17.5L174.6 18.5L174.0 18.2L173.4 19.4L172.8 19.5L172.1 19.0L171.5 14.0ZM177.5 13.7L177.5 13.4L178.2 9.3L178.8 7.8L179.4 8.2L180.1 9.4L180.8 8.8L181.4 9.2L182.1 10.6L182.7 11.1L183.3 11.9L184.0 13.4L184.0 14.0L183.3 15.6L182.7 16.4L182.1 16.9L181.4 18.2L180.8 18.6L180.1 18.0L179.4 19.3L178.8 19.6L178.2 18.2L177.5 14.0ZM225.0 13.7L225.0 13.4L225.6 11.3L226.2 10.7L226.8 9.7L227.5 8.9L228.1 8.8L228.7 10.0L229.3 9.2L229.9 8.7L230.5 10.2L231.2 10.4L231.8 11.0L232.4 11.2L233.0 13.4L233.0 14.0L232.4 16.2L231.8 16.4L231.2 17.0L230.5 17.2L229.9 18.7L229.3 18.3L228.7 17.5L228.1 18.7L227.5 18.5L226.8 17.8L226.2 16.8L225.6 16.1L225.0 14.0ZM242.0 13.7L242.0 13.4L242.7 10.9L243.3 10.4L244.0 11.1L244.7 12.3L245.3 12.9L246.0 13.4L246.0 14.0L245.3 14.5L244.7 15.1L244.0 16.4L243.3 17.0L242.7 16.5L242.0 14.0ZM248.0 13.7L248.0 13.4L248.7 10.0L249.3 10.5L250.0 11.6L250.7 12.1L251.3 12.9L252.0 13.4L252.0 14.0L251.3 14.6L250.7 15.4L250.0 15.9L249.3 17.0L248.7 17.5L248.0 14.0ZM253.0 13.7L253.0 13.4L253.6 9.5L254.2 9.6L254.9 9.4L255.5 10.5L256.1 10.7L256.8 11.3L257.4 12.1L258.0 13.4L258.0 14.0L257.4 15.4L256.8 16.2L256.1 16.8L255.5 17.0L254.9 18.1L254.2 17.9L253.6 17.9L253.0 14.0ZM267.0 13.7L267.0 13.4L267.7 10.3L268.3 10.3L269.0 11.0L269.7 11.8L270.3 12.1L271.0 13.4L271.0 14.0L270.3 15.3L269.7 15.7L269.0 16.5L268.3 17.1L267.7 17.2L267.0 14.0ZM272.0 13.7L272.0 13.4L272.7 10.1L273.3 11.1L274.0 12.0L274.7 12.5L275.3 12.9L276.0 13.4L276.0 14.0L275.3 14.5L274.7 15.0L274.0 15.4L273.3 16.4L272.7 17.3L272.0 14.0ZM277.0 13.7L277.0 13.4L277.6 10.0L278.2 10.2L278.8 10.8L279.4 10.7L280.0 10.4L280.6 10.6L281.2 11.0L281.8 12.0L282.4 12.2L283.0 13.4L283.0 14.0L282.4 15.2L281.8 15.4L281.2 16.4L280.6 16.8L280.0 17.0L279.4 16.8L278.8 16.7L278.2 17.2L277.6 17.5L277.0 14.0ZM297.0 13.7L297.0 13.4L297.7 10.3L298.3 10.2L299.0 10.0L299.6 10.7L300.3 10.7L300.9 11.5L301.6 11.9L302.2 12.3L302.9 13.4L302.9 14.0L302.2 15.2L301.6 15.6L300.9 16.0L300.3 16.8L299.6 16.7L299.0 17.4L298.3 17.2L297.7 17.2L297.0 14.0ZM303.3 13.7L303.3 13.4L303.9 13.2L304.5 12.6L305.1 11.8L305.7 11.3L306.3 10.8L306.9 10.2L307.5 11.7L308.1 12.1L308.7 12.4L309.4 13.1L310.0 13.4L310.0 14.0L309.4 14.3L308.7 15.1L308.1 15.3L307.5 15.8L306.9 17.2L306.3 16.7L305.7 16.1L305.1 15.7L304.5 14.8L303.9 14.2L303.3 14.0ZM311.9 13.7L311.9 13.4L312.6 10.2L313.2 10.9L313.8 11.8L314.4 11.7L315.0 12.5L315.7 13.0L316.3 13.4L316.3 14.0L315.7 14.4L315.0 14.9L314.4 15.8L313.8 15.7L313.2 16.5L312.6 17.2L311.9 14.0ZM317.8 13.7L317.8 13.4L318.4 13.2L319.1 12.8L319.7 12.3L320.3 11.8L321.0 11.1L321.6 10.7L322.2 11.4L322.8 12.3L323.5 12.5L324.1 13.1L324.7 13.4L324.7 14.0L324.1 14.3L323.5 15.0L322.8 15.1L322.2 16.0L321.6 16.8L321.0 16.3L320.3 15.7L319.7 15.1L319.1 14.7L318.4 14.2L317.8 14.0ZM326.8 13.7L326.8 13.4L327.5 10.7L328.1 10.8L328.8 10.6L329.4 11.4L330.1 11.3L330.7 12.0L331.4 12.5L332.0 13.4L332.0 14.0L331.4 15.0L330.7 15.4L330.1 16.2L329.4 16.1L328.8 16.8L328.1 16.7L327.5 16.7L326.8 14.0ZM349.0 13.7L349.0 13.4L349.6 9.7L350.2 11.2L350.8 11.1L351.5 11.3L352.1 11.8L352.7 12.2L353.3 12.6L353.9 13.2L354.5 13.4L354.5 14.0L353.9 14.3L353.3 14.9L352.7 15.3L352.1 15.7L351.5 16.1L350.8 16.3L350.2 16.3L349.6 17.7L349.0 14.0ZM354.7 13.7L354.7 13.4L355.3 9.6L355.9 9.8L356.5 10.3L357.1 10.5L357.7 10.8L358.3 11.1L358.9 10.8L359.5 11.5L360.1 12.3L360.7 13.4L360.7 14.0L360.1 15.2L359.5 16.0L358.9 16.7L358.3 16.3L357.7 16.6L357.1 16.9L356.5 17.1L355.9 17.6L355.3 17.9L354.7 14.0ZM363.0 13.7L363.0 13.4L363.7 12.7L364.4 11.9L365.0 11.5L365.7 11.0L366.3 12.2L367.0 13.0L367.7 13.4L367.7 14.0L367.0 14.5L366.3 15.3L365.7 16.4L365.0 15.9L364.4 15.5L363.7 14.7L363.0 14.0ZM369.9 13.7L369.9 13.4L370.5 12.8L371.1 11.9L371.8 11.0L372.4 10.3L373.0 10.2L373.7 10.3L374.3 11.4L374.9 12.1L375.6 12.8L376.2 13.4L376.2 14.0L375.6 14.7L374.9 15.4L374.3 16.0L373.7 17.1L373.0 17.3L372.4 17.1L371.8 16.5L371.1 15.5L370.5 14.7L369.9 14.0ZM376.9 13.7L376.9 13.4L377.5 10.5L378.2 10.5L378.8 11.2L379.4 11.2L380.1 11.5L380.7 11.6L381.4 12.6L382.0 13.4L382.0 14.0L381.4 14.9L380.7 15.8L380.1 15.9L379.4 16.2L378.8 16.3L378.2 16.9L377.5 17.0L376.9 14.0ZM398.0 13.7L398.0 13.4L398.6 10.5L399.2 11.2L399.9 10.4L400.5 11.4L401.1 12.1L401.8 12.3L402.4 13.1L403.0 13.4L403.0 14.0L402.4 14.3L401.8 15.2L401.1 15.4L400.5 16.0L399.9 17.0L399.2 16.3L398.6 16.9L398.0 14.0ZM410.0 13.7L410.0 13.4L410.6 10.2L411.2 10.8L411.8 10.8L412.4 10.8L413.0 11.7L413.6 11.9L414.2 12.2L414.8 12.7L415.4 13.1L416.0 13.4L416.0 14.0L415.4 14.4L414.8 14.8L414.2 15.3L413.6 15.6L413.0 15.7L412.4 16.7L411.8 16.7L411.2 16.7L410.6 17.3L410.0 14.0ZM423.0 13.7L423.0 13.4L423.6 10.8L424.3 11.9L424.9 12.5L425.5 13.0L426.2 13.4L426.2 14.0L425.5 14.5L424.9 15.0L424.3 15.5L423.6 16.6L423.0 14.0ZM426.4 13.7L426.4 13.4L427.1 10.5L427.7 9.6L428.3 10.2L428.9 11.3L429.5 12.1L430.2 13.4L430.2 14.0L429.5 15.3L428.9 16.1L428.3 17.3L427.7 17.9L427.1 17.0L426.4 14.0ZM432.1 13.7L432.1 13.4L432.7 10.3L433.3 11.2L433.9 12.0L434.5 12.9L435.1 13.4L435.1 14.0L434.5 14.5L433.9 15.4L433.3 16.2L432.7 17.2L432.1 14.0ZM436.9 13.7L436.9 13.4L437.5 11.8L438.1 11.5L438.7 12.1L439.3 12.1L439.9 12.7L440.5 13.4L440.5 14.0L439.9 14.8L439.3 15.4L438.7 15.3L438.1 16.0L437.5 15.7L436.9 14.0ZM440.8 13.7L440.8 13.4L441.4 11.2L442.0 10.9L442.7 11.2L443.3 11.6L444.0 11.7L444.6 12.3L445.2 12.8L445.9 13.2L446.5 13.4L446.5 14.0L445.9 14.3L445.2 14.6L444.6 15.2L444.0 15.8L443.3 15.8L442.7 16.2L442.0 16.6L441.4 16.3L440.8 14.0ZM447.6 13.7L447.6 13.4L448.3 12.0L449.0 12.3L449.7 12.5L450.5 13.1L451.2 13.4L451.2 14.0L450.5 14.4L449.7 14.9L449.0 15.2L448.3 15.4L447.6 14.0ZM452.5 13.7L452.5 13.4L453.1 11.1L453.8 11.6L454.4 12.4L455.1 12.8L455.7 13.4L455.7 14.0L455.1 14.7L454.4 15.0L453.8 15.8L453.1 16.3L452.5 14.0ZM457.6 13.7L457.6 13.4L458.3 13.1L458.9 12.6L459.6 12.0L460.2 11.3L460.8 12.3L461.5 12.5L462.1 13.3L462.8 13.4L462.8 14.0L462.1 14.2L461.5 14.9L460.8 15.2L460.2 16.1L459.6 15.4L458.9 14.9L458.3 14.3L457.6 14.0ZM463.9 13.7L463.9 13.4L464.5 13.1L465.1 12.4L465.7 11.9L466.3 11.0L466.9 12.1L467.5 12.4L468.1 13.2L468.7 13.4L468.7 14.0L468.1 14.3L467.5 15.0L466.9 15.3L466.3 16.4L465.7 15.5L465.1 15.0L464.5 14.4L463.9 14.0ZM470.2 13.7L470.2 13.4L470.9 11.7L471.5 11.8L472.2 12.1L472.9 12.6L473.6 12.8L474.2 13.2L474.9 13.4L474.9 14.0L474.2 14.2L473.6 14.7L472.9 14.9L472.2 15.4L471.5 15.6L470.9 15.8L470.2 14.0ZM476.8 13.7L476.8 13.4L477.4 9.7L478.0 10.3L478.7 10.9L479.3 11.1L479.9 12.0L480.5 13.4L480.5 14.0L479.9 15.5L479.3 16.4L478.7 16.5L478.0 17.1L477.4 17.7L476.8 14.0ZM482.0 13.7L482.0 13.4L482.6 10.7L483.2 10.4L483.8 11.0L484.5 10.5L485.1 10.9L485.7 11.4L486.3 12.1L486.9 12.4L487.5 13.4L487.5 14.0L486.9 15.1L486.3 15.4L485.7 16.0L485.1 16.5L484.5 16.9L483.8 16.5L483.2 17.1L482.6 16.7L482.0 14.0ZM489.3 13.7L489.3 13.4L489.9 12.4L490.6 10.3L491.3 10.8L491.9 12.4L492.6 13.4L492.6 14.0L491.9 15.1L491.3 16.7L490.6 17.1L489.9 15.1L489.3 14.0ZM493.5 13.7L493.5 13.4L494.1 8.8L494.7 9.6L495.3 10.3L495.9 10.3L496.5 10.9L497.1 11.7L497.7 13.4L497.7 14.0L497.1 15.7L496.5 16.5L495.9 17.2L495.3 17.1L494.7 17.8L494.1 18.7L493.5 14.0ZM498.5 13.7L498.5 13.4L499.1 11.8L499.7 11.8L500.3 11.6L500.9 11.7L501.5 12.0L502.1 12.6L502.7 12.8L503.3 13.4L503.3 14.0L502.7 14.6L502.1 14.8L501.5 15.5L500.9 15.8L500.3 15.8L499.7 15.7L499.1 15.6L498.5 14.0ZM503.7 13.7L503.7 13.4L504.3 10.8L504.9 10.7L505.5 11.1L506.2 11.4L506.8 11.7L507.4 12.4L508.0 13.4L508.0 14.0L507.4 15.1L506.8 15.8L506.2 16.0L505.5 16.4L504.9 16.7L504.3 16.6L503.7 14.0ZM509.0 13.7L509.0 13.4L509.6 9.0L510.2 8.3L510.8 7.9L511.4 8.5L512.0 9.1L512.6 10.0L513.2 9.7L513.8 9.9L514.4 11.2L515.0 13.4L515.0 14.0L514.4 16.2L513.8 17.5L513.2 17.7L512.6 17.5L512.0 18.4L511.4 19.0L510.8 19.6L510.2 19.1L509.6 18.4L509.0 14.0ZM522.0 13.7L522.0 13.4L522.6 9.6L523.3 8.6L523.9 9.7L524.5 9.9L525.2 10.2L525.8 11.5L526.5 11.1L527.1 12.0L527.7 12.4L528.4 13.0L529.0 13.4L529.0 14.0L528.4 14.4L527.7 15.1L527.1 15.4L526.5 16.4L525.8 15.9L525.2 17.3L524.5 17.6L523.9 17.7L523.3 18.8L522.6 17.8L522.0 14.0ZM545.0 13.7L545.0 13.4L545.6 13.2L546.2 12.6L546.8 12.0L547.5 11.4L548.1 10.8L548.7 10.0L549.3 10.0L549.9 11.5L550.5 11.6L551.2 12.1L551.8 12.5L552.4 13.2L553.0 13.4L553.0 14.0L552.4 14.3L551.8 14.9L551.2 15.3L550.5 15.9L549.9 15.9L549.3 17.5L548.7 17.4L548.1 16.6L547.5 16.1L546.8 15.5L546.2 14.8L545.6 14.3L545.0 14.0ZM565.0 13.7L565.0 13.4L565.6 10.9L566.2 11.3L566.9 11.6L567.5 12.0L568.1 12.1L568.8 12.5L569.4 13.2L570.0 13.4L570.0 14.0L569.4 14.3L568.8 14.9L568.1 15.4L567.5 15.5L566.9 15.8L566.2 16.2L565.6 16.5L565.0 14.0ZM572.0 13.7L572.0 13.4L572.6 10.7L573.3 9.9L573.9 10.9L574.5 10.0L575.2 10.5L575.8 10.4L576.5 10.9L577.1 11.2L577.7 11.9L578.4 12.6L579.0 13.4L579.0 14.0L578.4 14.8L577.7 15.5L577.1 16.2L576.5 16.6L575.8 17.0L575.2 17.0L574.5 17.5L573.9 16.5L573.3 17.5L572.6 16.8L572.0 14.0ZM593.0 13.7L593.0 13.4L593.6 10.8L594.2 11.0L594.8 11.5L595.4 11.7L596.0 11.5L596.6 11.8L597.2 12.5L597.9 13.4L597.9 14.0L597.2 15.0L596.6 15.7L596.0 15.9L595.4 15.7L594.8 16.0L594.2 16.5L593.6 16.6L593.0 14.0ZM597.9 13.7L597.9 13.4L598.5 13.1L599.2 12.6L599.8 11.8L600.4 11.1L601.1 10.5L601.7 11.3L602.3 12.0L603.0 12.6L603.6 13.1L604.2 13.4L604.2 14.0L603.6 14.3L603.0 14.8L602.3 15.4L601.7 16.1L601.1 16.9L600.4 16.3L599.8 15.7L599.2 14.8L598.5 14.4L597.9 14.0ZM604.9 13.7L604.9 13.4L605.6 11.3L606.2 11.1L606.8 11.5L607.5 10.8L608.1 11.3L608.7 11.6L609.4 11.9L610.0 12.4L610.6 12.5L611.3 13.4L611.3 14.0L610.6 15.0L610.0 15.1L609.4 15.5L608.7 15.8L608.1 16.1L607.5 16.7L606.8 16.0L606.2 16.4L605.6 16.1L604.9 14.0ZM612.1 13.7L612.1 13.4L612.8 12.6L613.5 11.5L614.1 10.8L614.8 11.3L615.5 11.6L616.1 12.9L616.8 13.4L616.8 14.0L616.1 14.6L615.5 15.8L614.8 16.2L614.1 16.6L613.5 16.0L612.8 14.9L612.1 14.0ZM617.8 13.7L617.8 13.4L618.5 11.0L619.1 11.0L619.7 10.6L620.3 10.8L621.0 11.1L621.6 11.5L622.2 11.9L622.8 11.9L623.5 12.4L624.1 12.7L624.7 13.4L624.7 14.0L624.1 14.7L623.5 15.0L622.8 15.5L622.2 15.6L621.6 16.0L621.0 16.4L620.3 16.7L619.7 16.8L619.1 16.5L618.5 16.5L617.8 14.0ZM626.0 13.7L626.0 13.4L626.7 12.8L627.3 11.9L628.0 10.8L628.6 10.8L629.3 12.1L629.9 12.7L630.6 13.4L630.6 14.0L629.9 14.7L629.3 15.4L628.6 16.7L628.0 16.6L627.3 15.6L626.7 14.7L626.0 14.0ZM630.6 13.7L630.6 13.4L631.3 12.9L632.0 12.0L632.6 11.6L633.3 10.5L634.0 11.0L634.7 12.4L635.3 13.1L636.0 13.4L636.0 14.0L635.3 14.4L634.7 15.0L634.0 16.4L633.3 17.0L632.6 15.8L632.0 15.4L631.3 14.6L630.6 14.0ZM29.5 41.0L29.5 40.7L30.1 38.6L30.7 38.6L31.3 38.3L31.9 38.9L32.5 39.3L33.1 39.5L33.7 40.0L34.3 40.1L34.9 40.5L35.5 40.7L35.5 41.3L34.9 41.4L34.3 41.8L33.7 42.0L33.1 42.5L32.5 42.6L31.9 43.1L31.3 43.7L30.7 43.3L30.1 43.3L29.5 41.3ZM53.5 41.0L53.5 40.7L54.1 38.5L54.7 38.2L55.3 39.1L55.9 38.9L56.6 39.0L57.2 39.1L57.8 39.3L58.4 39.9L59.0 40.7L59.0 41.3L58.4 42.1L57.8 42.6L57.2 42.8L56.6 43.0L55.9 43.0L55.3 42.9L54.7 43.7L54.1 43.5L53.5 41.3ZM72.5 41.0L72.5 40.7L73.1 38.3L73.8 37.6L74.4 38.0L75.1 38.3L75.7 38.7L76.4 39.5L77.0 40.7L77.0 41.3L76.4 42.4L75.7 43.2L75.1 43.6L74.4 44.0L73.8 44.3L73.1 43.7L72.5 41.3ZM78.0 41.0L78.0 40.7L78.7 38.6L79.3 38.3L80.0 38.5L80.6 38.8L81.2 38.8L81.9 38.9L82.5 39.1L83.2 39.3L83.8 40.0L84.5 40.7L84.5 41.3L83.8 42.0L83.2 42.6L82.5 42.8L81.9 43.0L81.2 43.1L80.6 43.1L80.0 43.5L79.3 43.6L78.7 43.4L78.0 41.3ZM100.0 41.0L100.0 40.7L100.6 40.7L101.2 40.3L101.8 39.9L102.4 39.7L103.0 39.5L103.6 38.9L104.2 38.6L104.8 38.5L105.4 39.4L106.0 39.3L106.6 39.8L107.2 40.0L107.8 40.4L108.4 40.7L109.0 40.7L109.0 41.3L108.4 41.3L107.8 41.6L107.2 41.9L106.6 42.2L106.0 42.6L105.4 42.6L104.8 43.4L104.2 43.3L103.6 43.1L103.0 42.4L102.4 42.2L101.8 42.0L101.2 41.6L100.6 41.3L100.0 41.3ZM111.0 41.0L111.0 40.7L111.6 39.0L112.2 38.8L112.9 39.4L113.5 39.3L114.1 39.4L114.8 39.8L115.4 40.2L116.0 40.7L116.0 41.3L115.4 41.8L114.8 42.1L114.1 42.6L113.5 42.6L112.9 42.6L112.2 43.2L111.6 43.0L111.0 41.3ZM117.0 41.0L117.0 40.7L117.6 39.1L118.2 38.9L118.9 39.2L119.5 39.0L120.1 39.5L120.8 39.5L121.4 40.1L122.0 40.7L122.0 41.3L121.4 41.9L120.8 42.4L120.1 42.5L119.5 42.9L118.9 42.7L118.2 43.0L117.6 42.8L117.0 41.3ZM127.5 41.0L127.5 40.7L128.1 38.9L128.7 38.9L129.3 38.2L129.9 39.0L130.5 38.8L131.1 39.0L131.7 39.1L132.3 39.4L132.9 40.0L133.5 40.7L133.5 41.3L132.9 42.0L132.3 42.5L131.7 42.8L131.1 42.9L130.5 43.2L129.9 42.9L129.3 43.7L128.7 43.0L128.1 43.0L127.5 41.3ZM152.5 41.0L152.5 40.7L153.1 38.4L153.7 39.2L154.3 39.2L154.9 39.4L155.5 39.8L156.1 39.7L156.7 40.1L157.3 40.1L157.9 40.6L158.5 40.7L158.5 41.3L157.9 41.4L157.3 41.8L156.7 41.8L156.1 42.2L155.5 42.1L154.9 42.5L154.3 42.8L153.7 42.7L153.1 43.5L152.5 41.3ZM171.5 41.0L171.5 40.7L172.1 37.7L172.8 38.4L173.4 38.3L174.0 38.8L174.6 38.6L175.2 39.0L175.9 39.7L176.5 40.7L176.5 41.3L175.9 42.2L175.2 43.0L174.6 43.3L174.0 43.2L173.4 43.7L172.8 43.6L172.1 44.3L171.5 41.3ZM177.5 41.0L177.5 40.7L178.2 38.7L178.8 38.0L179.4 37.9L180.1 38.8L180.8 38.8L181.4 38.9L182.1 38.9L182.7 39.3L183.3 39.9L184.0 40.7L184.0 41.3L183.3 42.0L182.7 42.7L182.1 43.0L181.4 43.0L180.8 43.1L180.1 43.2L179.4 44.0L178.8 43.9L178.2 43.3L177.5 41.3ZM225.0 41.0L225.0 40.7L225.6 39.7L226.2 39.3L226.8 38.7L227.5 38.7L228.1 38.8L228.7 38.4L229.3 38.7L229.9 38.9L230.5 39.1L231.2 38.9L231.8 39.1L232.4 39.8L233.0 40.7L233.0 41.3L232.4 42.1L231.8 42.8L231.2 43.1L230.5 42.9L229.9 43.1L229.3 43.2L228.7 43.5L228.1 43.2L227.5 43.2L226.8 43.3L226.2 42.7L225.6 42.2L225.0 41.3ZM242.0 41.0L242.0 40.7L242.7 39.1L243.3 39.4L244.0 39.8L244.7 40.1L245.3 40.5L246.0 40.7L246.0 41.3L245.3 41.4L244.7 41.9L244.0 42.1L243.3 42.5L242.7 42.9L242.0 41.3ZM248.0 41.0L248.0 40.7L248.7 39.1L249.3 39.7L250.0 39.6L250.7 39.9L251.3 40.5L252.0 40.7L252.0 41.3L251.3 41.4L250.7 42.0L250.0 42.4L249.3 42.3L248.7 42.9L248.0 41.3ZM253.0 41.0L253.0 40.7L253.6 39.0L254.2 38.9L254.9 39.1L255.5 39.1L256.1 39.1L256.8 39.5L257.4 39.9L258.0 40.7L258.0 41.3L257.4 42.0L256.8 42.4L256.1 42.9L255.5 42.8L254.9 42.8L254.2 43.1L253.6 42.9L253.0 41.3ZM267.0 41.0L267.0 40.7L267.7 39.4L268.3 39.6L269.0 39.5L269.7 39.9L270.3 40.1L271.0 40.7L271.0 41.3L270.3 41.9L269.7 42.1L269.0 42.4L268.3 42.3L267.7 42.6L267.0 41.3ZM272.0 41.0L272.0 40.7L272.7 39.6L273.3 39.7L274.0 39.8L274.7 40.3L275.3 40.6L276.0 40.7L276.0 41.3L275.3 41.4L274.7 41.6L274.0 42.2L273.3 42.3L272.7 42.4L272.0 41.3ZM277.0 41.0L277.0 40.7L277.6 39.1L278.2 39.0L278.8 39.2L279.4 39.4L280.0 39.6L280.6 39.3L281.2 39.6L281.8 40.1L282.4 40.3L283.0 40.7L283.0 41.3L282.4 41.6L281.8 41.9L281.2 42.3L280.6 42.6L280.0 42.3L279.4 42.6L278.8 42.7L278.2 42.9L277.6 42.9L277.0 41.3ZM297.0 41.0L297.0 40.7L297.7 39.1L298.3 39.3L299.0 39.4L299.6 39.6L300.3 39.3L300.9 39.9L301.6 39.8L302.2 40.3L302.9 40.7L302.9 41.3L302.2 41.7L301.6 42.2L300.9 42.0L300.3 42.6L299.6 42.3L299.0 42.5L298.3 42.7L297.7 42.8L297.0 41.3ZM303.3 41.0L303.3 40.7L303.9 40.7L304.5 40.3L305.1 39.9L305.7 39.6L306.3 39.5L306.9 39.2L307.5 39.7L308.1 40.1L308.7 40.4L309.4 40.6L310.0 40.7L310.0 41.3L309.4 41.3L308.7 41.6L308.1 41.8L307.5 42.2L306.9 42.8L306.3 42.5L305.7 42.3L305.1 42.0L304.5 41.7L303.9 41.3L303.3 41.3ZM311.9 41.0L311.9 40.7L312.6 38.9L313.2 39.3L313.8 39.7L314.4 40.2L315.0 40.3L315.7 40.6L316.3 40.7L316.3 41.3L315.7 41.3L315.0 41.7L314.4 41.8L313.8 42.2L313.2 42.6L312.6 43.0L311.9 41.3ZM317.8 41.0L317.8 40.7L318.4 40.6L319.1 40.4L319.7 40.0L320.3 40.0L321.0 39.6L321.6 39.5L322.2 39.9L322.8 40.2L323.5 40.3L324.1 40.7L324.7 40.7L324.7 41.3L324.1 41.3L323.5 41.6L322.8 41.8L322.2 42.1L321.6 42.5L321.0 42.4L320.3 42.0L319.7 42.0L319.1 41.5L318.4 41.3L317.8 41.3ZM326.8 41.0L326.8 40.7L327.5 39.4L328.1 39.4L328.8 39.3L329.4 39.6L330.1 39.7L330.7 40.1L331.4 40.3L332.0 40.7L332.0 41.3L331.4 41.6L330.7 41.9L330.1 42.2L329.4 42.3L328.8 42.7L328.1 42.5L327.5 42.5L326.8 41.3ZM349.0 41.0L349.0 40.7L349.6 39.2L350.2 39.3L350.8 39.4L351.5 39.7L352.1 39.8L352.7 40.0L353.3 40.3L353.9 40.6L354.5 40.7L354.5 41.3L353.9 41.4L353.3 41.6L352.7 41.9L352.1 42.1L351.5 42.3L350.8 42.6L350.2 42.6L349.6 42.8L349.0 41.3ZM354.7 41.0L354.7 40.7L355.3 39.2L355.9 39.1L356.5 39.2L357.1 39.5L357.7 39.0L358.3 39.3L358.9 39.5L359.5 40.0L360.1 40.1L360.7 40.7L360.7 41.3L360.1 41.8L359.5 42.0L358.9 42.4L358.3 42.7L357.7 43.0L357.1 42.5L356.5 42.8L355.9 42.8L355.3 42.7L354.7 41.3ZM363.0 41.0L363.0 40.7L363.7 40.4L364.4 40.1L365.0 39.5L365.7 39.5L366.3 39.9L367.0 40.6L367.7 40.7L367.7 41.3L367.0 41.4L366.3 42.0L365.7 42.4L365.0 42.4L364.4 41.9L363.7 41.5L363.0 41.3ZM369.9 41.0L369.9 40.7L370.5 40.6L371.1 40.1L371.8 39.9L372.4 39.1L373.0 39.1L373.7 39.6L374.3 39.9L374.9 40.1L375.6 40.6L376.2 40.7L376.2 41.3L375.6 41.3L374.9 41.8L374.3 42.0L373.7 42.4L373.0 42.8L372.4 42.8L371.8 42.1L371.1 41.9L370.5 41.3L369.9 41.3ZM376.9 41.0L376.9 40.7L377.5 39.7L378.2 39.3L378.8 39.8L379.4 39.8L380.1 39.8L380.7 40.0L381.4 40.2L382.0 40.7L382.0 41.3L381.4 41.7L380.7 41.9L380.1 42.2L379.4 42.2L378.8 42.2L378.2 42.6L377.5 42.3L376.9 41.3ZM398.0 41.0L398.0 40.7L398.6 39.0L399.2 39.3L399.9 39.4L400.5 40.0L401.1 40.0L401.8 40.3L402.4 40.5L403.0 40.7L403.0 41.3L402.4 41.4L401.8 41.6L401.1 42.0L400.5 41.9L399.9 42.6L399.2 42.7L398.6 43.0L398.0 41.3ZM410.0 41.0L410.0 40.7L410.6 39.0L411.2 39.2L411.8 39.4L412.4 39.5L413.0 39.8L413.6 39.9L414.2 40.2L414.8 40.5L415.4 40.7L416.0 40.7L416.0 41.3L415.4 41.3L414.8 41.4L414.2 41.8L413.6 42.1L413.0 42.1L412.4 42.5L411.8 42.5L411.2 42.8L410.6 42.9L410.0 41.3ZM423.0 41.0L423.0 40.7L423.6 39.7L424.3 40.1L424.9 40.3L425.5 40.6L426.2 40.7L426.2 41.3L425.5 41.4L424.9 41.6L424.3 41.8L423.6 42.3L423.0 41.3ZM426.4 41.0L426.4 40.7L427.1 38.7L427.7 39.3L428.3 39.5L428.9 39.3L429.5 40.1L430.2 40.7L430.2 41.3L429.5 41.8L428.9 42.6L428.3 42.4L427.7 42.6L427.1 43.2L426.4 41.3ZM432.1 41.0L432.1 40.7L432.7 39.4L433.3 39.5L433.9 40.0L434.5 40.5L435.1 40.7L435.1 41.3L434.5 41.5L433.9 41.9L433.3 42.4L432.7 42.6L432.1 41.3ZM436.9 41.0L436.9 40.7L437.5 39.9L438.1 39.9L438.7 40.1L439.3 40.2L439.9 40.5L440.5 40.7L440.5 41.3L439.9 41.5L439.3 41.8L438.7 41.8L438.1 42.1L437.5 42.0L436.9 41.3ZM440.8 41.0L440.8 40.7L441.4 39.6L442.0 39.6L442.7 40.0L443.3 39.9L444.0 40.2L444.6 40.2L445.2 40.4L445.9 40.7L446.5 40.7L446.5 41.3L445.9 41.3L445.2 41.5L444.6 41.8L444.0 41.8L443.3 42.0L442.7 42.0L442.0 42.3L441.4 42.3L440.8 41.3ZM447.6 41.0L447.6 40.7L448.3 40.0L449.0 40.3L449.7 40.4L450.5 40.6L451.2 40.7L451.2 41.3L450.5 41.3L449.7 41.6L449.0 41.7L448.3 41.9L447.6 41.3ZM452.5 41.0L452.5 40.7L453.1 39.2L453.8 39.6L454.4 39.9L455.1 40.4L455.7 40.7L455.7 41.3L455.1 41.5L454.4 42.0L453.8 42.3L453.1 42.7L452.5 41.3ZM457.6 41.0L457.6 40.7L458.3 40.7L458.9 40.4L459.6 40.3L460.2 40.0L460.8 40.0L461.5 40.5L462.1 40.7L462.8 40.7L462.8 41.3L462.1 41.3L461.5 41.5L460.8 41.9L460.2 42.0L459.6 41.7L458.9 41.6L458.3 41.3L457.6 41.3ZM463.9 41.0L463.9 40.7L464.5 40.6L465.1 40.4L465.7 40.1L466.3 39.8L466.9 39.9L467.5 40.4L468.1 40.7L468.7 40.7L468.7 41.3L468.1 41.3L467.5 41.6L466.9 42.0L466.3 42.2L465.7 41.9L465.1 41.5L464.5 41.3L463.9 41.3ZM470.2 41.0L470.2 40.7L470.9 40.0L471.5 40.0L472.2 40.2L472.9 40.4L473.6 40.6L474.2 40.7L474.9 40.7L474.9 41.3L474.2 41.3L473.6 41.4L472.9 41.6L472.2 41.8L471.5 41.9L470.9 42.0L470.2 41.3ZM476.8 41.0L476.8 40.7L477.4 39.5L478.0 39.1L478.7 39.2L479.3 39.7L479.9 39.9L480.5 40.7L480.5 41.3L479.9 42.0L479.3 42.3L478.7 42.8L478.0 42.8L477.4 42.5L476.8 41.3ZM482.0 41.0L482.0 40.7L482.6 39.1L483.2 39.2L483.8 39.3L484.5 39.7L485.1 39.4L485.7 39.8L486.3 39.8L486.9 40.2L487.5 40.7L487.5 41.3L486.9 41.8L486.3 42.1L485.7 42.1L485.1 42.6L484.5 42.3L483.8 42.6L483.2 42.8L482.6 42.8L482.0 41.3ZM489.3 41.0L489.3 40.7L489.9 40.0L490.6 39.4L491.3 39.1L491.9 40.0L492.6 40.7L492.6 41.3L491.9 41.9L491.3 42.8L490.6 42.5L489.9 41.9L489.3 41.3ZM493.5 41.0L493.5 40.7L494.1 38.7L494.7 39.0L495.3 38.6L495.9 38.9L496.5 39.6L497.1 40.0L497.7 40.7L497.7 41.3L497.1 41.9L496.5 42.4L495.9 43.1L495.3 43.3L494.7 43.0L494.1 43.2L493.5 41.3ZM498.5 41.0L498.5 40.7L499.1 40.0L499.7 39.9L500.3 39.9L500.9 40.0L501.5 40.1L502.1 40.2L502.7 40.5L503.3 40.7L503.3 41.3L502.7 41.4L502.1 41.7L501.5 41.9L500.9 41.9L500.3 42.1L499.7 42.0L499.1 41.9L498.5 41.3ZM503.7 41.0L503.7 40.7L504.3 39.6L504.9 39.7L505.5 39.7L506.2 39.7L506.8 39.9L507.4 40.3L508.0 40.7L508.0 41.3L507.4 41.7L506.8 42.0L506.2 42.3L505.5 42.3L504.9 42.2L504.3 42.3L503.7 41.3ZM509.0 41.0L509.0 40.7L509.6 38.4L510.2 38.3L510.8 37.9L511.4 38.6L512.0 38.3L512.6 38.5L513.2 38.5L513.8 39.5L514.4 39.9L515.0 40.7L515.0 41.3L514.4 42.0L513.8 42.5L513.2 43.4L512.6 43.5L512.0 43.6L511.4 43.3L510.8 44.1L510.2 43.7L509.6 43.5L509.0 41.3ZM522.0 41.0L522.0 40.7L522.6 38.1L523.3 38.1L523.9 38.8L524.5 39.3L525.2 39.1L525.8 39.4L526.5 39.7L527.1 40.1L527.7 40.3L528.4 40.6L529.0 40.7L529.0 41.3L528.4 41.3L527.7 41.6L527.1 41.9L526.5 42.3L525.8 42.6L525.2 42.8L524.5 42.6L523.9 43.2L523.3 43.9L522.6 43.8L522.0 41.3ZM545.0 41.0L545.0 40.7L545.6 40.7L546.2 40.4L546.8 40.0L547.5 39.9L548.1 39.4L548.7 39.0L549.3 39.5L549.9 39.5L550.5 40.0L551.2 40.2L551.8 40.5L552.4 40.7L553.0 40.7L553.0 41.3L552.4 41.3L551.8 41.5L551.2 41.7L550.5 42.0L549.9 42.4L549.3 42.5L548.7 42.9L548.1 42.6L547.5 42.1L546.8 41.9L546.2 41.6L545.6 41.3L545.0 41.3ZM565.0 41.0L565.0 40.7L565.6 39.8L566.2 39.8L566.9 39.8L567.5 39.9L568.1 40.1L568.8 40.3L569.4 40.7L570.0 40.7L570.0 41.3L569.4 41.3L568.8 41.7L568.1 41.8L567.5 42.0L566.9 42.2L566.2 42.2L565.6 42.2L565.0 41.3ZM572.0 41.0L572.0 40.7L572.6 39.5L573.3 39.4L573.9 39.1L574.5 39.2L575.2 39.6L575.8 39.7L576.5 39.6L577.1 39.8L577.7 40.0L578.4 40.3L579.0 40.7L579.0 41.3L578.4 41.6L577.7 41.9L577.1 42.1L576.5 42.4L575.8 42.3L575.2 42.4L574.5 42.7L573.9 42.9L573.3 42.6L572.6 42.5L572.0 41.3ZM593.0 41.0L593.0 40.7L593.6 39.7L594.2 39.7L594.8 39.7L595.4 39.9L596.0 40.0L596.6 40.0L597.2 40.3L597.9 40.7L597.9 41.3L597.2 41.6L596.6 41.9L596.0 41.9L595.4 42.1L594.8 42.2L594.2 42.3L593.6 42.2L593.0 41.3ZM597.9 41.0L597.9 40.7L598.5 40.6L599.2 40.3L599.8 39.9L600.4 39.6L601.1 39.4L601.7 39.6L602.3 40.0L603.0 40.4L603.6 40.7L604.2 40.7L604.2 41.3L603.6 41.3L603.0 41.6L602.3 41.9L601.7 42.3L601.1 42.6L600.4 42.3L599.8 42.0L599.2 41.6L598.5 41.3L597.9 41.3ZM604.9 41.0L604.9 40.7L605.6 39.7L606.2 39.8L606.8 39.5L607.5 39.6L608.1 39.9L608.7 39.8L609.4 40.1L610.0 40.1L610.6 40.4L611.3 40.7L611.3 41.3L610.6 41.5L610.0 41.9L609.4 41.8L608.7 42.2L608.1 42.1L607.5 42.4L606.8 42.4L606.2 42.2L605.6 42.2L604.9 41.3ZM612.1 41.0L612.1 40.7L612.8 40.5L613.5 39.9L614.1 39.5L614.8 39.4L615.5 40.1L616.1 40.5L616.8 40.7L616.8 41.3L616.1 41.5L615.5 41.8L614.8 42.5L614.1 42.4L613.5 42.0L612.8 41.4L612.1 41.3ZM617.8 41.0L617.8 40.7L618.5 39.7L619.1 39.4L619.7 39.4L620.3 39.5L621.0 39.8L621.6 39.8L622.2 39.7L622.8 39.9L623.5 40.3L624.1 40.4L624.7 40.7L624.7 41.3L624.1 41.5L623.5 41.7L622.8 42.1L622.2 42.2L621.6 42.2L621.0 42.2L620.3 42.4L619.7 42.6L619.1 42.6L618.5 42.2L617.8 41.3ZM626.0 41.0L626.0 40.7L626.7 40.5L627.3 40.1L628.0 39.7L628.6 39.5L629.3 40.1L629.9 40.6L630.6 40.7L630.6 41.3L629.9 41.4L629.3 41.8L628.6 42.5L628.0 42.2L627.3 41.8L626.7 41.4L626.0 41.3ZM630.6 41.0L630.6 40.7L631.3 40.5L632.0 40.1L632.6 39.8L633.3 39.4L634.0 39.5L634.7 40.2L635.3 40.5L636.0 40.7L636.0 41.3L635.3 41.4L634.7 41.8L634.0 42.4L633.3 42.6L632.6 42.2L632.0 41.8L631.3 41.4L630.6 41.3Z" fill="#24500e"/></svg><b>Synth</b></div><div class="clip" style="left:369.0px;top:445.1px;width:833.0px;height:54.5px;background:#a8b23a"><svg width="833.0" height="54.5"><path d="M0 13.7H833.0M0 41.0H833.0" stroke="#484c08" stroke-width="1" stroke-opacity="0.45"/><path d="M30.2 13.7L30.2 13.4L30.8 8.5L31.5 9.9L32.1 10.8L32.8 11.9L33.4 13.4L33.4 14.0L32.8 15.5L32.1 16.6L31.5 17.5L30.8 18.9L30.2 14.0ZM61.5 13.7L61.5 13.4L62.1 11.2L62.7 10.0L63.3 10.1L63.9 9.8L64.5 10.1L65.1 9.6L65.7 10.3L66.3 9.7L66.9 9.9L67.5 9.5L68.1 9.6L68.7 9.6L69.3 10.1L69.9 9.7L70.5 9.9L71.1 10.9L71.7 11.0L72.3 11.3L72.9 9.4L73.5 9.9L74.1 9.4L74.7 9.5L75.3 9.4L75.9 10.0L76.5 9.2L77.1 9.1L77.7 9.2L78.3 9.3L78.9 9.6L79.5 9.1L80.1 9.4L80.7 9.8L81.3 9.3L81.9 9.3L82.5 9.6L83.1 9.2L83.7 9.9L84.3 8.9L84.9 8.9L85.5 9.0L86.1 9.7L86.7 9.6L87.3 10.4L87.9 10.4L88.5 10.7L89.1 10.8L89.7 11.4L90.3 11.5L90.9 11.8L91.5 12.3L92.1 12.4L92.7 12.7L93.3 12.8L93.9 13.3L94.5 13.1L94.5 14.4L93.9 14.2L93.3 14.6L92.7 14.8L92.1 15.0L91.5 15.2L90.9 15.7L90.3 15.9L89.7 16.0L89.1 16.6L88.5 16.7L87.9 17.1L87.3 17.1L86.7 17.8L86.1 17.7L85.5 18.4L84.9 18.5L84.3 18.5L83.7 17.5L83.1 18.3L82.5 17.8L81.9 18.1L81.3 18.1L80.7 17.6L80.1 18.1L79.5 18.3L78.9 17.8L78.3 18.2L77.7 18.3L77.1 18.4L76.5 18.3L75.9 17.5L75.3 18.1L74.7 18.0L74.1 18.0L73.5 17.6L72.9 18.1L72.3 16.1L71.7 16.4L71.1 16.5L70.5 17.5L69.9 17.8L69.3 17.3L68.7 17.9L68.1 17.8L67.5 18.0L66.9 17.5L66.3 17.8L65.7 17.1L65.1 17.9L64.5 17.3L63.9 17.6L63.3 17.4L62.7 17.5L62.1 16.3L61.5 14.0ZM110.0 13.7L110.0 9.2L110.6 9.1L111.2 9.4L111.8 9.5L112.4 9.5L113.0 9.8L113.6 9.1L114.2 9.6L114.8 9.0L115.4 9.6L116.0 9.5L116.0 18.0L115.4 17.9L114.8 18.4L114.2 17.9L113.6 18.3L113.0 17.6L112.4 17.9L111.8 17.9L111.2 18.0L110.6 18.3L110.0 18.3ZM117.0 13.7L117.0 13.4L117.7 9.4L118.3 9.6L119.0 9.9L119.7 10.5L120.3 11.6L121.0 13.4L121.0 14.0L120.3 15.9L119.7 16.9L119.0 17.6L118.3 17.9L117.7 18.1L117.0 14.0ZM122.5 13.7L122.5 13.4L123.2 9.2L123.8 9.3L124.5 10.1L125.2 10.7L125.8 11.5L126.5 13.4L126.5 14.0L125.8 16.0L125.2 16.7L124.5 17.4L123.8 18.2L123.2 18.2L122.5 14.0ZM131.5 13.7L131.5 13.4L132.0 10.5L132.6 11.5L133.1 12.5L133.6 13.4L133.6 14.0L133.1 15.0L132.6 16.0L132.0 17.0L131.5 14.0ZM153.0 13.7L153.0 13.4L153.7 8.9L154.4 9.1L155.1 9.7L155.8 10.8L156.5 13.4L156.5 14.0L155.8 16.6L155.1 17.8L154.4 18.4L153.7 18.5L153.0 14.0ZM158.5 13.7L158.5 13.4L159.1 8.7L159.8 9.2L160.4 9.4L161.1 9.7L161.7 10.5L162.4 11.6L163.0 13.4L163.0 14.0L162.4 15.9L161.7 17.0L161.1 17.7L160.4 18.1L159.8 18.2L159.1 18.8L158.5 14.0ZM165.5 13.7L165.5 10.3L166.1 11.0L166.8 11.0L167.4 10.1L168.1 11.0L168.7 10.4L169.3 10.8L170.0 10.4L170.6 10.8L171.2 11.0L171.9 10.6L172.5 10.0L173.2 10.6L173.8 10.6L173.8 16.8L173.2 16.9L172.5 17.4L171.9 16.8L171.2 16.5L170.6 16.7L170.0 17.1L169.3 16.6L168.7 17.1L168.1 16.5L167.4 17.3L166.8 16.5L166.1 16.5L165.5 17.1ZM195.8 13.7L195.8 13.4L196.4 11.2L197.0 9.7L197.6 10.0L198.2 9.5L198.8 9.7L199.5 9.3L200.1 10.4L200.7 9.6L201.3 9.8L201.9 9.7L202.5 9.4L203.1 9.2L203.7 11.3L204.3 11.3L204.9 9.2L205.5 9.3L206.2 9.5L206.8 9.3L207.4 9.1L208.0 9.7L208.6 8.9L209.2 9.7L209.8 9.8L210.4 9.1L211.0 8.9L211.6 9.3L212.2 9.0L212.9 9.5L213.5 9.9L214.1 9.6L214.7 9.4L215.3 9.5L215.9 10.0L216.5 10.3L217.1 10.5L217.7 10.7L218.3 10.8L218.9 11.4L219.6 11.9L220.2 12.1L220.8 12.4L221.4 12.7L222.0 13.2L222.6 13.1L222.6 14.3L222.0 14.3L221.4 14.7L220.8 15.1L220.2 15.3L219.6 15.6L218.9 16.1L218.3 16.6L217.7 16.7L217.1 16.9L216.5 17.2L215.9 17.4L215.3 17.9L214.7 18.0L214.1 17.9L213.5 17.5L212.9 18.0L212.2 18.5L211.6 18.2L211.0 18.5L210.4 18.4L209.8 17.6L209.2 17.8L208.6 18.5L208.0 17.7L207.4 18.4L206.8 18.2L206.2 18.0L205.5 18.2L204.9 18.2L204.3 16.1L203.7 16.2L203.1 18.3L202.5 18.0L201.9 17.7L201.3 17.7L200.7 17.8L200.1 17.1L199.5 18.1L198.8 17.8L198.2 18.0L197.6 17.4L197.0 17.7L196.4 16.3L195.8 14.0ZM226.9 13.7L226.9 13.4L227.5 8.7L228.2 10.0L228.8 10.5L229.5 11.9L230.1 13.4L230.1 14.0L229.5 15.5L228.8 16.9L228.2 17.4L227.5 18.7L226.9 14.0ZM258.2 13.7L258.2 13.4L258.8 11.3L259.4 9.6L260.0 9.6L260.6 9.8L261.2 10.0L261.8 9.6L262.4 9.8L263.0 10.3L263.6 10.0L264.2 9.4L264.8 9.6L265.4 9.6L266.0 10.0L266.6 9.5L267.2 9.9L267.8 11.1L268.4 11.3L269.0 11.2L269.6 9.0L270.2 9.5L270.8 9.4L271.4 9.3L272.0 9.2L272.6 9.5L273.2 9.4L273.8 9.8L274.4 9.6L275.0 9.9L275.6 9.7L276.2 9.4L276.8 9.1L277.4 9.4L278.0 10.0L278.6 9.1L279.2 9.6L279.8 9.6L280.4 9.7L281.0 9.8L281.6 9.3L282.2 9.5L282.8 10.0L283.4 9.5L284.0 10.1L284.6 10.2L285.2 10.5L285.8 11.0L286.4 11.3L287.0 11.8L287.6 12.0L288.2 12.2L288.8 12.4L289.4 12.6L290.0 12.9L290.6 13.1L291.2 13.1L291.2 14.3L290.6 14.3L290.0 14.5L289.4 14.8L288.8 15.0L288.2 15.3L287.6 15.5L287.0 15.7L286.4 16.1L285.8 16.5L285.2 17.0L284.6 17.2L284.0 17.3L283.4 17.9L282.8 17.5L282.2 17.9L281.6 18.2L281.0 17.7L280.4 17.8L279.8 17.8L279.2 17.9L278.6 18.3L278.0 17.5L277.4 18.0L276.8 18.3L276.2 18.0L275.6 17.8L275.0 17.5L274.4 17.8L273.8 17.6L273.2 18.1L272.6 17.9L272.0 18.2L271.4 18.1L270.8 18.0L270.2 17.9L269.6 18.4L269.0 16.2L268.4 16.1L267.8 16.4L267.2 17.6L266.6 18.0L266.0 17.4L265.4 17.9L264.8 17.9L264.2 18.0L263.6 17.4L263.0 17.2L262.4 17.6L261.8 17.9L261.2 17.5L260.6 17.7L260.0 17.8L259.4 17.9L258.8 16.1L258.2 14.0ZM306.7 13.7L306.7 9.9L307.3 8.8L307.9 9.1L308.5 9.4L309.1 9.3L309.7 10.0L310.3 9.4L310.9 9.4L311.5 9.2L312.1 9.5L312.7 9.6L312.7 17.9L312.1 18.0L311.5 18.2L310.9 18.1L310.3 18.0L309.7 17.4L309.1 18.1L308.5 18.1L307.9 18.4L307.3 18.7L306.7 17.5ZM313.7 13.7L313.7 13.4L314.4 9.8L315.0 9.6L315.7 10.0L316.4 10.4L317.0 11.6L317.7 13.4L317.7 14.0L317.0 15.8L316.4 17.0L315.7 17.4L315.0 17.9L314.4 17.6L313.7 14.0ZM319.2 13.7L319.2 13.4L319.9 9.6L320.5 9.2L321.2 9.7L321.9 10.6L322.5 11.3L323.2 13.4L323.2 14.0L322.5 16.2L321.9 16.9L321.2 17.7L320.5 18.2L319.9 17.8L319.2 14.0ZM328.2 13.7L328.2 13.4L328.7 10.3L329.3 11.1L329.8 12.3L330.3 13.4L330.3 14.0L329.8 15.2L329.3 16.4L328.7 17.1L328.2 14.0ZM349.7 13.7L349.7 13.4L350.4 9.0L351.1 9.0L351.8 9.6L352.5 11.1L353.2 13.4L353.2 14.0L352.5 16.4L351.8 17.8L351.1 18.4L350.4 18.5L349.7 14.0ZM355.2 13.7L355.2 13.4L355.8 8.9L356.5 8.8L357.1 9.1L357.8 10.0L358.4 10.6L359.1 11.6L359.7 13.4L359.7 14.0L359.1 15.9L358.4 16.9L357.8 17.5L357.1 18.4L356.5 18.7L355.8 18.6L355.2 14.0ZM362.2 13.7L362.2 10.9L362.8 10.8L363.5 10.5L364.1 11.0L364.8 10.2L365.4 10.6L366.0 10.7L366.7 10.8L367.3 10.5L367.9 10.4L368.6 10.6L369.2 10.3L369.9 10.8L370.5 10.9L370.5 16.5L369.9 16.7L369.2 17.2L368.6 16.9L367.9 17.1L367.3 16.9L366.7 16.7L366.0 16.8L365.4 16.8L364.8 17.3L364.1 16.4L363.5 16.9L362.8 16.7L362.2 16.5ZM392.5 13.7L392.5 13.4L393.1 11.1L393.7 9.4L394.3 9.4L394.9 10.2L395.5 10.0L396.2 10.2L396.8 9.8L397.4 10.3L398.0 9.5L398.6 9.2L399.2 9.7L399.8 9.6L400.4 11.2L401.0 11.1L401.6 9.8L402.2 9.4L402.9 9.3L403.5 9.5L404.1 9.4L404.7 9.1L405.3 9.5L405.9 8.9L406.5 9.2L407.1 10.2L407.7 9.4L408.3 9.5L408.9 9.7L409.6 10.0L410.2 9.2L410.8 9.6L411.4 9.2L412.0 9.4L412.6 9.6L413.2 9.9L413.8 10.2L414.4 11.0L415.0 11.0L415.6 11.4L416.3 12.0L416.9 11.7L417.5 12.5L418.1 12.8L418.7 13.2L419.3 13.2L419.3 14.3L418.7 14.2L418.1 14.7L417.5 15.0L416.9 15.7L416.3 15.5L415.6 16.1L415.0 16.4L414.4 16.5L413.8 17.3L413.2 17.5L412.6 17.9L412.0 18.0L411.4 18.2L410.8 17.9L410.2 18.2L409.6 17.5L408.9 17.8L408.3 17.9L407.7 18.0L407.1 17.3L406.5 18.2L405.9 18.5L405.3 18.0L404.7 18.4L404.1 18.0L403.5 17.9L402.9 18.1L402.2 18.1L401.6 17.6L401.0 16.3L400.4 16.2L399.8 17.9L399.2 17.8L398.6 18.2L398.0 17.9L397.4 17.1L396.8 17.6L396.2 17.3L395.5 17.5L394.9 17.3L394.3 18.1L393.7 18.0L393.1 16.4L392.5 14.0ZM423.0 13.7L423.0 13.4L423.6 9.3L424.2 10.1L424.9 11.9L425.5 13.4L425.5 14.0L424.9 15.6L424.2 17.3L423.6 18.2L423.0 14.0ZM502.5 13.7L502.5 9.5L503.1 9.8L503.8 9.6L504.4 9.7L505.1 9.8L505.8 9.5L506.4 9.7L507.1 9.6L507.7 9.7L508.4 9.1L509.0 9.0L509.0 18.4L508.4 18.3L507.7 17.7L507.1 17.9L506.4 17.7L505.8 17.9L505.1 17.6L504.4 17.7L503.8 17.8L503.1 17.7L502.5 18.0ZM510.0 13.7L510.0 13.4L510.6 9.2L511.3 9.4L511.9 10.0L512.6 10.1L513.2 10.8L513.9 11.6L514.5 13.4L514.5 14.0L513.9 15.8L513.2 16.6L512.6 17.4L511.9 17.4L511.3 18.1L510.6 18.2L510.0 14.0ZM515.5 13.7L515.5 13.4L516.1 9.5L516.8 9.1L517.4 9.6L518.0 9.9L518.6 10.3L519.2 11.1L519.9 11.8L520.5 13.4L520.5 14.0L519.9 15.6L519.2 16.4L518.6 17.2L518.0 17.6L517.4 17.9L516.8 18.4L516.1 18.0L515.5 14.0ZM553.0 13.7L553.0 13.4L553.7 9.9L554.4 10.3L555.1 11.2L555.8 12.2L556.5 13.4L556.5 14.0L555.8 15.2L555.1 16.2L554.4 17.2L553.7 17.5L553.0 14.0ZM559.0 13.7L559.0 13.4L559.6 9.7L560.2 9.7L560.9 10.3L561.5 10.8L562.1 11.8L562.8 12.3L563.4 12.8L564.0 13.4L564.0 14.0L563.4 14.6L562.8 15.1L562.1 15.7L561.5 16.7L560.9 17.2L560.2 17.7L559.6 17.8L559.0 14.0ZM566.5 13.7L566.5 10.8L567.1 10.2L567.8 10.3L568.4 10.6L569.0 10.8L569.7 10.7L570.3 10.5L571.0 10.3L571.6 10.6L572.2 10.1L572.9 10.5L573.5 10.6L573.5 16.9L572.9 16.9L572.2 17.3L571.6 16.8L571.0 17.2L570.3 16.9L569.7 16.8L569.0 16.6L568.4 16.8L567.8 17.2L567.1 17.2L566.5 16.6ZM599.0 13.7L599.0 13.4L599.7 11.6L600.3 11.9L601.0 12.4L601.7 12.6L602.3 13.2L603.0 13.4L603.0 14.0L602.3 14.3L601.7 14.9L601.0 15.1L600.3 15.5L599.7 15.8L599.0 14.0ZM606.0 13.7L606.0 13.4L606.7 11.4L607.3 11.8L608.0 12.2L608.7 12.5L609.3 13.1L610.0 13.4L610.0 14.0L609.3 14.3L608.7 14.9L608.0 15.3L607.3 15.7L606.7 16.0L606.0 14.0ZM612.5 13.7L612.5 13.4L613.2 10.8L613.8 11.2L614.5 12.0L615.2 12.5L615.8 12.9L616.5 13.4L616.5 14.0L615.8 14.5L615.2 14.9L614.5 15.5L613.8 16.2L613.2 16.7L612.5 14.0ZM619.0 13.7L619.0 13.4L619.6 10.3L620.2 10.3L620.9 11.0L621.5 11.5L622.1 11.9L622.8 12.3L623.4 13.1L624.0 13.4L624.0 14.0L623.4 14.3L622.8 15.1L622.1 15.5L621.5 15.9L620.9 16.5L620.2 17.2L619.6 17.1L619.0 14.0ZM651.5 13.7L651.5 13.4L652.1 11.4L652.7 9.9L653.3 9.4L653.9 9.2L654.5 9.2L655.2 9.6L655.8 9.4L656.4 10.3L657.0 10.1L657.6 9.6L658.2 9.4L658.8 9.6L659.4 9.8L660.0 10.1L660.6 10.0L661.2 11.2L661.9 11.1L662.5 11.3L663.1 9.5L663.7 9.5L664.3 9.2L664.9 9.5L665.5 10.0L666.1 9.3L666.7 9.7L667.3 9.8L667.9 9.0L668.6 9.7L669.2 8.7L669.8 9.4L670.4 9.3L671.0 10.0L671.6 9.8L672.2 9.3L672.8 9.9L673.4 9.1L674.0 10.0L674.6 9.6L675.3 9.9L675.9 10.1L676.5 9.6L677.1 10.3L677.7 9.9L678.3 10.5L678.9 11.0L679.5 11.0L680.1 11.0L680.7 11.2L681.3 11.6L682.0 11.8L682.6 12.1L683.2 12.7L683.8 12.9L684.4 13.1L685.0 13.1L685.0 14.4L684.4 14.3L683.8 14.6L683.2 14.7L682.6 15.4L682.0 15.7L681.3 15.9L680.7 16.3L680.1 16.5L679.5 16.5L678.9 16.5L678.3 17.0L677.7 17.6L677.1 17.1L676.5 17.9L675.9 17.4L675.3 17.6L674.6 17.9L674.0 17.4L673.4 18.4L672.8 17.5L672.2 18.2L671.6 17.7L671.0 17.4L670.4 18.1L669.8 18.0L669.2 18.7L668.6 17.7L667.9 18.4L667.3 17.6L666.7 17.8L666.1 18.2L665.5 17.5L664.9 18.0L664.3 18.2L663.7 18.0L663.1 18.0L662.5 16.2L661.9 16.4L661.2 16.2L660.6 17.4L660.0 17.3L659.4 17.7L658.8 17.8L658.2 18.0L657.6 17.9L657.0 17.4L656.4 17.2L655.8 18.0L655.2 17.8L654.5 18.2L653.9 18.3L653.3 18.1L652.7 17.6L652.1 16.1L651.5 14.0ZM700.0 13.7L700.0 9.3L700.6 9.5L701.2 9.7L701.8 9.9L702.4 9.6L703.0 9.7L703.6 9.1L704.2 9.2L704.8 9.7L705.4 8.8L706.0 9.0L706.0 18.5L705.4 18.6L704.8 17.8L704.2 18.2L703.6 18.3L703.0 17.7L702.4 17.8L701.8 17.6L701.2 17.8L700.6 18.0L700.0 18.2ZM707.0 13.7L707.0 13.4L707.6 9.3L708.3 9.9L708.9 10.1L709.6 10.1L710.2 11.0L710.9 11.7L711.5 13.4L711.5 14.0L710.9 15.7L710.2 16.4L709.6 17.4L708.9 17.3L708.3 17.6L707.6 18.2L707.0 14.0ZM712.5 13.7L712.5 13.4L713.1 9.0L713.7 9.2L714.3 9.2L714.9 9.4L715.5 10.0L716.1 10.1L716.7 10.7L717.3 11.3L717.9 12.1L718.5 13.4L718.5 14.0L717.9 15.3L717.3 16.2L716.7 16.7L716.1 17.4L715.5 17.4L714.9 18.1L714.3 18.3L713.7 18.2L713.1 18.5L712.5 14.0ZM722.5 13.7L722.5 13.4L723.0 10.3L723.5 11.5L724.1 12.4L724.6 13.4L724.6 14.0L724.1 15.0L723.5 15.9L723.0 17.1L722.5 14.0ZM743.5 13.7L743.5 13.4L744.2 9.7L744.8 10.4L745.5 11.3L746.2 11.4L746.8 12.5L747.5 13.4L747.5 14.0L746.8 14.9L746.2 16.0L745.5 16.2L744.8 17.0L744.2 17.7L743.5 14.0ZM749.5 13.7L749.5 13.4L750.1 9.5L750.8 9.5L751.4 10.7L752.1 11.1L752.7 12.1L753.4 12.8L754.0 13.4L754.0 14.0L753.4 14.7L752.7 15.3L752.1 16.4L751.4 16.7L750.8 17.9L750.1 17.9L749.5 14.0ZM756.0 13.7L756.0 10.6L756.6 10.9L757.2 10.8L757.9 10.7L758.5 10.7L759.1 10.7L759.8 10.7L760.4 10.7L761.0 10.8L761.6 10.1L762.2 10.8L762.9 10.4L763.5 10.4L763.5 17.1L762.9 17.1L762.2 16.6L761.6 17.4L761.0 16.6L760.4 16.8L759.8 16.8L759.1 16.7L758.5 16.7L757.9 16.8L757.2 16.6L756.6 16.6L756.0 16.8ZM786.0 13.7L786.0 13.4L786.6 10.9L787.2 9.6L787.8 10.3L788.4 10.2L789.0 10.1L789.6 9.8L790.2 10.1L790.8 9.9L791.4 10.4L792.0 9.9L792.6 9.9L793.2 9.9L793.8 11.4L794.4 11.4L795.0 11.4L795.6 10.1L796.2 9.3L796.8 9.5L797.4 9.6L798.0 9.9L798.6 10.2L799.2 10.1L799.8 9.9L800.4 9.4L801.0 9.4L801.6 9.7L802.2 9.3L802.8 10.0L803.4 9.7L804.0 10.3L804.6 9.4L805.2 9.6L805.8 9.7L806.4 10.0L807.0 9.9L807.6 10.9L808.2 10.9L808.8 11.1L809.4 11.5L810.0 11.7L810.6 12.0L811.2 12.3L811.8 12.7L812.4 13.2L813.0 13.2L813.0 14.2L812.4 14.3L811.8 14.8L811.2 15.2L810.6 15.5L810.0 15.8L809.4 15.9L808.8 16.4L808.2 16.5L807.6 16.5L807.0 17.6L806.4 17.4L805.8 17.8L805.2 17.8L804.6 18.0L804.0 17.1L803.4 17.8L802.8 17.4L802.2 18.2L801.6 17.8L801.0 18.1L800.4 18.0L799.8 17.6L799.2 17.3L798.6 17.3L798.0 17.5L797.4 17.8L796.8 17.9L796.2 18.1L795.6 17.4L795.0 16.1L794.4 16.1L793.8 16.1L793.2 17.6L792.6 17.5L792.0 17.5L791.4 17.1L790.8 17.6L790.2 17.4L789.6 17.7L789.0 17.4L788.4 17.2L787.8 17.1L787.2 17.8L786.6 16.5L786.0 14.0ZM30.2 41.0L30.2 40.7L30.8 35.6L31.5 36.9L32.1 38.1L32.8 39.4L33.4 40.7L33.4 41.3L32.8 42.5L32.1 43.8L31.5 45.0L30.8 46.4L30.2 41.3ZM61.5 41.0L61.5 40.7L62.1 38.9L62.7 37.0L63.3 37.2L63.9 37.3L64.5 37.3L65.1 37.0L65.7 37.0L66.3 36.7L66.9 36.8L67.5 37.6L68.1 37.2L68.7 36.9L69.3 36.8L69.9 37.1L70.5 36.9L71.1 38.4L71.7 38.6L72.3 38.6L72.9 37.2L73.5 37.0L74.1 37.1L74.7 36.9L75.3 36.7L75.9 36.7L76.5 36.1L77.1 37.3L77.7 36.2L78.3 37.0L78.9 37.2L79.5 36.4L80.1 36.6L80.7 36.5L81.3 37.0L81.9 36.8L82.5 36.8L83.1 37.2L83.7 36.3L84.3 37.2L84.9 36.5L85.5 37.0L86.1 36.8L86.7 37.4L87.3 38.0L87.9 37.9L88.5 37.6L89.1 38.2L89.7 38.2L90.3 38.6L90.9 39.1L91.5 39.3L92.1 39.6L92.7 39.8L93.3 40.1L93.9 40.4L94.5 40.5L94.5 41.5L93.9 41.6L93.3 41.8L92.7 42.1L92.1 42.3L91.5 42.7L90.9 42.9L90.3 43.3L89.7 43.7L89.1 43.8L88.5 44.3L87.9 44.1L87.3 44.0L86.7 44.5L86.1 45.2L85.5 45.0L84.9 45.5L84.3 44.7L83.7 45.6L83.1 44.8L82.5 45.2L81.9 45.2L81.3 45.0L80.7 45.4L80.1 45.3L79.5 45.6L78.9 44.8L78.3 45.0L77.7 45.7L77.1 44.7L76.5 45.8L75.9 45.3L75.3 45.3L74.7 45.1L74.1 44.9L73.5 44.9L72.9 44.8L72.3 43.3L71.7 43.4L71.1 43.5L70.5 45.1L69.9 44.9L69.3 45.2L68.7 45.1L68.1 44.8L67.5 44.4L66.9 45.2L66.3 45.3L65.7 44.9L65.1 44.9L64.5 44.6L63.9 44.7L63.3 44.8L62.7 45.0L62.1 43.1L61.5 41.3ZM110.0 41.0L110.0 36.4L110.6 36.6L111.2 36.6L111.8 36.2L112.4 37.1L113.0 37.3L113.6 37.1L114.2 36.6L114.8 37.2L115.4 36.3L116.0 37.3L116.0 44.7L115.4 45.7L114.8 44.7L114.2 45.3L113.6 44.9L113.0 44.6L112.4 44.9L111.8 45.8L111.2 45.3L110.6 45.4L110.0 45.6ZM117.0 41.0L117.0 40.7L117.7 36.5L118.3 36.9L119.0 37.0L119.7 37.8L120.3 38.8L121.0 40.7L121.0 41.3L120.3 43.1L119.7 44.1L119.0 44.9L118.3 45.1L117.7 45.5L117.0 41.3ZM122.5 41.0L122.5 40.7L123.2 36.9L123.8 36.7L124.5 37.3L125.2 37.9L125.8 38.6L126.5 40.7L126.5 41.3L125.8 43.3L125.2 44.1L124.5 44.7L123.8 45.2L123.2 45.1L122.5 41.3ZM131.5 41.0L131.5 40.7L132.0 38.0L132.6 38.6L133.1 39.7L133.6 40.7L133.6 41.3L133.1 42.3L132.6 43.3L132.0 44.0L131.5 41.3ZM153.0 41.0L153.0 40.7L153.7 36.3L154.4 36.6L155.1 37.3L155.8 38.1L156.5 40.7L156.5 41.3L155.8 43.8L155.1 44.6L154.4 45.4L153.7 45.6L153.0 41.3ZM158.5 41.0L158.5 40.7L159.1 36.0L159.8 36.4L160.4 36.7L161.1 37.2L161.7 37.9L162.4 38.5L163.0 40.7L163.0 41.3L162.4 43.4L161.7 44.1L161.1 44.8L160.4 45.2L159.8 45.5L159.1 45.9L158.5 41.3ZM165.5 41.0L165.5 37.4L166.1 38.1L166.8 38.1L167.4 37.7L168.1 38.2L168.7 38.0L169.3 38.1L170.0 37.9L170.6 37.8L171.2 37.6L171.9 38.2L172.5 38.3L173.2 37.5L173.8 37.9L173.8 44.1L173.2 44.5L172.5 43.7L171.9 43.8L171.2 44.4L170.6 44.1L170.0 44.1L169.3 43.8L168.7 43.9L168.1 43.8L167.4 44.3L166.8 43.9L166.1 43.9L165.5 44.5ZM195.8 41.0L195.8 40.7L196.4 38.1L197.0 36.8L197.6 36.8L198.2 37.0L198.8 36.9L199.5 37.0L200.1 37.4L200.7 36.6L201.3 37.0L201.9 37.0L202.5 37.2L203.1 37.7L203.7 38.8L204.3 38.2L204.9 36.6L205.5 36.7L206.2 36.7L206.8 36.8L207.4 36.4L208.0 36.2L208.6 36.8L209.2 36.5L209.8 36.5L210.4 36.5L211.0 36.5L211.6 36.3L212.2 37.2L212.9 36.4L213.5 36.6L214.1 36.6L214.7 36.5L215.3 36.7L215.9 36.9L216.5 37.7L217.1 37.7L217.7 37.8L218.3 38.6L218.9 38.4L219.6 38.8L220.2 39.4L220.8 39.6L221.4 40.1L222.0 40.4L222.6 40.4L222.6 41.6L222.0 41.5L221.4 41.9L220.8 42.3L220.2 42.6L219.6 43.2L218.9 43.5L218.3 43.4L217.7 44.1L217.1 44.2L216.5 44.3L215.9 45.1L215.3 45.2L214.7 45.4L214.1 45.4L213.5 45.3L212.9 45.6L212.2 44.7L211.6 45.6L211.0 45.4L210.4 45.4L209.8 45.5L209.2 45.4L208.6 45.1L208.0 45.7L207.4 45.5L206.8 45.2L206.2 45.3L205.5 45.2L204.9 45.4L204.3 43.7L203.7 43.1L203.1 44.2L202.5 44.8L201.9 45.0L201.3 44.9L200.7 45.3L200.1 44.5L199.5 45.0L198.8 45.0L198.2 45.0L197.6 45.1L197.0 45.1L196.4 43.8L195.8 41.3ZM226.9 41.0L226.9 40.7L227.5 36.0L228.2 37.2L228.8 38.1L229.5 39.2L230.1 40.7L230.1 41.3L229.5 42.8L228.8 43.9L228.2 44.7L227.5 45.9L226.9 41.3ZM258.2 41.0L258.2 40.7L258.8 38.6L259.4 37.4L260.0 37.6L260.6 37.3L261.2 37.2L261.8 36.8L262.4 37.0L263.0 37.1L263.6 37.3L264.2 37.3L264.8 37.3L265.4 36.8L266.0 37.3L266.6 36.9L267.2 36.9L267.8 38.4L268.4 38.2L269.0 38.5L269.6 36.1L270.2 37.2L270.8 36.4L271.4 36.0L272.0 36.4L272.6 36.6L273.2 36.7L273.8 37.0L274.4 36.9L275.0 36.7L275.6 36.5L276.2 36.1L276.8 37.1L277.4 37.0L278.0 36.4L278.6 36.7L279.2 36.1L279.8 36.6L280.4 36.7L281.0 36.9L281.6 36.6L282.2 36.5L282.8 37.0L283.4 37.3L284.0 37.5L284.6 37.6L285.2 38.1L285.8 38.2L286.4 38.3L287.0 38.7L287.6 39.1L288.2 39.1L288.8 39.4L289.4 39.9L290.0 40.2L290.6 40.4L291.2 40.3L291.2 41.6L290.6 41.6L290.0 41.8L289.4 42.0L288.8 42.5L288.2 42.8L287.6 42.9L287.0 43.3L286.4 43.6L285.8 43.8L285.2 43.9L284.6 44.4L284.0 44.5L283.4 44.7L282.8 45.0L282.2 45.5L281.6 45.3L281.0 45.1L280.4 45.3L279.8 45.3L279.2 45.9L278.6 45.3L278.0 45.5L277.4 45.0L276.8 44.9L276.2 45.8L275.6 45.5L275.0 45.3L274.4 45.0L273.8 45.0L273.2 45.3L272.6 45.4L272.0 45.6L271.4 45.9L270.8 45.6L270.2 44.8L269.6 45.9L269.0 43.4L268.4 43.8L267.8 43.6L267.2 45.0L266.6 45.1L266.0 44.6L265.4 45.2L264.8 44.6L264.2 44.6L263.6 44.7L263.0 44.9L262.4 45.0L261.8 45.1L261.2 44.7L260.6 44.6L260.0 44.3L259.4 44.6L258.8 43.4L258.2 41.3ZM306.7 41.0L306.7 37.4L307.3 36.6L307.9 36.4L308.5 36.8L309.1 36.4L309.7 36.8L310.3 36.8L310.9 37.2L311.5 37.0L312.1 36.7L312.7 36.5L312.7 45.4L312.1 45.3L311.5 45.0L310.9 44.7L310.3 45.2L309.7 45.1L309.1 45.5L308.5 45.2L307.9 45.6L307.3 45.3L306.7 44.5ZM313.7 41.0L313.7 40.7L314.4 36.9L315.0 36.9L315.7 37.1L316.4 37.6L317.0 38.6L317.7 40.7L317.7 41.3L317.0 43.3L316.4 44.3L315.7 44.9L315.0 45.0L314.4 45.1L313.7 41.3ZM319.2 41.0L319.2 40.7L319.9 36.9L320.5 36.7L321.2 37.3L321.9 37.8L322.5 38.7L323.2 40.7L323.2 41.3L322.5 43.2L321.9 44.2L321.2 44.6L320.5 45.3L319.9 45.1L319.2 41.3ZM328.2 41.0L328.2 40.7L328.7 37.9L329.3 38.8L329.8 39.5L330.3 40.7L330.3 41.3L329.8 42.5L329.3 43.1L328.7 44.0L328.2 41.3ZM349.7 41.0L349.7 40.7L350.4 36.0L351.1 36.9L351.8 37.4L352.5 38.1L353.2 40.7L353.2 41.3L352.5 43.9L351.8 44.5L351.1 45.1L350.4 45.9L349.7 41.3ZM355.2 41.0L355.2 40.7L355.8 36.1L356.5 36.6L357.1 36.5L357.8 37.4L358.4 37.8L359.1 38.5L359.7 40.7L359.7 41.3L359.1 43.4L358.4 44.2L357.8 44.6L357.1 45.4L356.5 45.3L355.8 45.9L355.2 41.3ZM362.2 41.0L362.2 37.8L362.8 37.8L363.5 37.9L364.1 37.8L364.8 37.3L365.4 38.1L366.0 37.7L366.7 37.9L367.3 37.9L367.9 37.7L368.6 37.4L369.2 37.4L369.9 37.9L370.5 37.9L370.5 44.0L369.9 44.0L369.2 44.5L368.6 44.6L367.9 44.2L367.3 44.1L366.7 44.1L366.0 44.3L365.4 43.8L364.8 44.7L364.1 44.1L363.5 44.1L362.8 44.1L362.2 44.1ZM392.5 41.0L392.5 40.7L393.1 37.7L393.7 37.0L394.3 37.1L394.9 36.8L395.5 37.5L396.2 37.4L396.8 36.5L397.4 37.0L398.0 36.5L398.6 37.3L399.2 36.9L399.8 37.4L400.4 38.6L401.0 38.2L401.6 36.7L402.2 36.8L402.9 36.5L403.5 37.2L404.1 37.1L404.7 37.2L405.3 36.1L405.9 36.9L406.5 36.4L407.1 36.8L407.7 36.3L408.3 37.2L408.9 36.4L409.6 37.2L410.2 36.8L410.8 35.9L411.4 36.6L412.0 37.4L412.6 37.3L413.2 37.0L413.8 37.9L414.4 38.1L415.0 38.4L415.6 38.3L416.3 38.7L416.9 39.4L417.5 39.4L418.1 40.0L418.7 40.3L419.3 40.4L419.3 41.5L418.7 41.6L418.1 41.9L417.5 42.6L416.9 42.5L416.3 43.2L415.6 43.7L415.0 43.5L414.4 43.8L413.8 44.1L413.2 45.0L412.6 44.6L412.0 44.6L411.4 45.4L410.8 46.0L410.2 45.2L409.6 44.7L408.9 45.5L408.3 44.8L407.7 45.7L407.1 45.2L406.5 45.6L405.9 45.1L405.3 45.8L404.7 44.7L404.1 44.9L403.5 44.7L402.9 45.5L402.2 45.2L401.6 45.3L401.0 43.7L400.4 43.4L399.8 44.6L399.2 45.0L398.6 44.6L398.0 45.4L397.4 44.9L396.8 45.5L396.2 44.5L395.5 44.5L394.9 45.2L394.3 44.9L393.7 44.9L393.1 44.3L392.5 41.3ZM423.0 41.0L423.0 40.7L423.6 36.5L424.2 37.6L424.9 39.0L425.5 40.7L425.5 41.3L424.9 42.9L424.2 44.3L423.6 45.4L423.0 41.3ZM502.5 41.0L502.5 36.0L503.1 36.4L503.8 36.6L504.4 36.9L505.1 36.0L505.8 36.3L506.4 36.9L507.1 36.3L507.7 36.1L508.4 37.0L509.0 36.2L509.0 45.8L508.4 44.9L507.7 45.8L507.1 45.6L506.4 45.0L505.8 45.6L505.1 45.9L504.4 45.1L503.8 45.3L503.1 45.6L502.5 45.9ZM510.0 41.0L510.0 40.7L510.6 36.7L511.3 36.9L511.9 37.2L512.6 37.3L513.2 37.9L513.9 38.9L514.5 40.7L514.5 41.3L513.9 43.1L513.2 44.1L512.6 44.6L511.9 44.7L511.3 45.0L510.6 45.2L510.0 41.3ZM515.5 41.0L515.5 40.7L516.1 36.6L516.8 36.6L517.4 37.0L518.0 37.1L518.6 37.4L519.2 38.1L519.9 39.0L520.5 40.7L520.5 41.3L519.9 43.0L519.2 43.8L518.6 44.6L518.0 44.9L517.4 44.9L516.8 45.3L516.1 45.4L515.5 41.3ZM553.0 41.0L553.0 40.7L553.7 36.7L554.4 37.8L555.1 38.7L555.8 39.5L556.5 40.7L556.5 41.3L555.8 42.5L555.1 43.2L554.4 44.2L553.7 45.3L553.0 41.3ZM559.0 41.0L559.0 40.7L559.6 36.7L560.2 36.6L560.9 38.1L561.5 38.1L562.1 38.6L562.8 39.4L563.4 40.0L564.0 40.7L564.0 41.3L563.4 41.9L562.8 42.5L562.1 43.3L561.5 43.8L560.9 43.9L560.2 45.3L559.6 45.3L559.0 41.3ZM566.5 41.0L566.5 38.0L567.1 38.0L567.8 37.9L568.4 37.9L569.0 37.9L569.7 37.7L570.3 38.0L571.0 38.0L571.6 37.4L572.2 37.8L572.9 37.8L573.5 38.1L573.5 43.8L572.9 44.2L572.2 44.2L571.6 44.6L571.0 44.0L570.3 43.9L569.7 44.2L569.0 44.1L568.4 44.0L567.8 44.0L567.1 43.9L566.5 43.9ZM599.0 41.0L599.0 40.7L599.7 39.2L600.3 39.4L601.0 39.6L601.7 39.9L602.3 40.4L603.0 40.7L603.0 41.3L602.3 41.6L601.7 42.0L601.0 42.3L600.3 42.6L599.7 42.8L599.0 41.3ZM606.0 41.0L606.0 40.7L606.7 38.8L607.3 38.9L608.0 39.5L608.7 39.9L609.3 40.3L610.0 40.7L610.0 41.3L609.3 41.7L608.7 42.1L608.0 42.4L607.3 43.1L606.7 43.2L606.0 41.3ZM612.5 41.0L612.5 40.7L613.2 38.4L613.8 38.6L614.5 38.9L615.2 39.6L615.8 40.1L616.5 40.7L616.5 41.3L615.8 41.8L615.2 42.4L614.5 43.1L613.8 43.3L613.2 43.6L612.5 41.3ZM619.0 41.0L619.0 40.7L619.6 37.5L620.2 38.0L620.9 38.3L621.5 38.9L622.1 39.0L622.8 39.6L623.4 40.2L624.0 40.7L624.0 41.3L623.4 41.7L622.8 42.4L622.1 43.0L621.5 43.0L620.9 43.6L620.2 44.0L619.6 44.5L619.0 41.3ZM651.5 41.0L651.5 40.7L652.1 38.5L652.7 36.6L653.3 37.5L653.9 37.0L654.5 36.9L655.2 37.3L655.8 36.9L656.4 37.6L657.0 36.8L657.6 37.2L658.2 36.9L658.8 36.6L659.4 36.8L660.0 36.5L660.6 37.2L661.2 38.7L661.9 38.6L662.5 38.4L663.1 36.6L663.7 36.8L664.3 37.0L664.9 36.5L665.5 36.7L666.1 37.2L666.7 36.7L667.3 36.4L667.9 36.6L668.6 37.1L669.2 36.1L669.8 36.4L670.4 36.7L671.0 37.2L671.6 36.8L672.2 36.7L672.8 36.3L673.4 37.1L674.0 37.4L674.6 37.1L675.3 36.1L675.9 37.1L676.5 36.9L677.1 37.0L677.7 37.5L678.3 37.6L678.9 38.0L679.5 38.0L680.1 38.1L680.7 38.6L681.3 39.0L682.0 39.0L682.6 39.4L683.2 39.8L683.8 40.0L684.4 40.5L685.0 40.4L685.0 41.6L684.4 41.5L683.8 41.9L683.2 42.1L682.6 42.6L682.0 42.9L681.3 43.0L680.7 43.4L680.1 43.8L679.5 44.0L678.9 43.9L678.3 44.3L677.7 44.5L677.1 45.0L676.5 45.0L675.9 44.8L675.3 45.8L674.6 44.8L674.0 44.6L673.4 44.9L672.8 45.6L672.2 45.3L671.6 45.2L671.0 44.7L670.4 45.3L669.8 45.6L669.2 45.9L668.6 44.8L667.9 45.4L667.3 45.5L666.7 45.3L666.1 44.7L665.5 45.2L664.9 45.5L664.3 44.9L663.7 45.2L663.1 45.3L662.5 43.5L661.9 43.4L661.2 43.2L660.6 44.7L660.0 45.5L659.4 45.1L658.8 45.3L658.2 45.1L657.6 44.7L657.0 45.1L656.4 44.3L655.8 45.1L655.2 44.7L654.5 45.1L653.9 44.9L653.3 44.5L652.7 45.3L652.1 43.4L651.5 41.3ZM700.0 41.0L700.0 37.3L700.6 36.8L701.2 37.1L701.8 36.5L702.4 36.8L703.0 37.3L703.6 37.2L704.2 37.0L704.8 36.9L705.4 36.9L706.0 36.4L706.0 45.5L705.4 45.1L704.8 45.1L704.2 45.0L703.6 44.7L703.0 44.6L702.4 45.1L701.8 45.4L701.2 44.8L700.6 45.1L700.0 44.7ZM707.0 41.0L707.0 40.7L707.6 37.0L708.3 36.6L708.9 37.2L709.6 37.3L710.2 38.2L710.9 38.9L711.5 40.7L711.5 41.3L710.9 43.1L710.2 43.8L709.6 44.6L708.9 44.7L708.3 45.4L707.6 45.0L707.0 41.3ZM712.5 41.0L712.5 40.7L713.1 36.5L713.7 36.4L714.3 36.7L714.9 36.6L715.5 37.1L716.1 37.6L716.7 38.1L717.3 38.5L717.9 39.3L718.5 40.7L718.5 41.3L717.9 42.6L717.3 43.4L716.7 43.9L716.1 44.3L715.5 44.9L714.9 45.3L714.3 45.3L713.7 45.5L713.1 45.5L712.5 41.3ZM722.5 41.0L722.5 40.7L723.0 37.8L723.5 39.1L724.1 39.7L724.6 40.7L724.6 41.3L724.1 42.2L723.5 42.9L723.0 44.1L722.5 41.3ZM743.5 41.0L743.5 40.7L744.2 36.4L744.8 37.8L745.5 38.0L746.2 39.0L746.8 39.9L747.5 40.7L747.5 41.3L746.8 42.1L746.2 42.9L745.5 43.9L744.8 44.1L744.2 45.6L743.5 41.3ZM749.5 41.0L749.5 40.7L750.1 36.8L750.8 36.7L751.4 37.5L752.1 38.4L752.7 39.2L753.4 40.0L754.0 40.7L754.0 41.3L753.4 42.0L752.7 42.8L752.1 43.6L751.4 44.4L750.8 45.2L750.1 45.1L749.5 41.3ZM756.0 41.0L756.0 38.0L756.6 37.9L757.2 38.2L757.9 37.4L758.5 37.4L759.1 37.8L759.8 37.9L760.4 37.5L761.0 37.7L761.6 38.0L762.2 38.0L762.9 38.1L763.5 37.7L763.5 44.2L762.9 43.9L762.2 44.0L761.6 43.9L761.0 44.3L760.4 44.4L759.8 44.1L759.1 44.2L758.5 44.5L757.9 44.5L757.2 43.7L756.6 44.1L756.0 43.9ZM786.0 41.0L786.0 40.7L786.6 38.3L787.2 36.7L787.8 37.1L788.4 37.2L789.0 37.1L789.6 37.2L790.2 37.8L790.8 37.2L791.4 37.3L792.0 36.7L792.6 37.4L793.2 37.2L793.8 38.9L794.4 38.7L795.0 38.6L795.6 37.1L796.2 36.4L796.8 37.0L797.4 36.8L798.0 36.8L798.6 37.6L799.2 37.2L799.8 36.7L800.4 36.9L801.0 37.2L801.6 36.9L802.2 36.7L802.8 37.1L803.4 36.8L804.0 37.1L804.6 36.3L805.2 37.2L805.8 37.1L806.4 37.4L807.0 38.1L807.6 38.0L808.2 38.1L808.8 38.5L809.4 38.4L810.0 39.0L810.6 39.3L811.2 39.7L811.8 40.0L812.4 40.5L813.0 40.4L813.0 41.5L812.4 41.5L811.8 41.9L811.2 42.3L810.6 42.6L810.0 42.9L809.4 43.5L808.8 43.4L808.2 43.8L807.6 43.9L807.0 43.9L806.4 44.6L805.8 44.8L805.2 44.7L804.6 45.6L804.0 44.9L803.4 45.1L802.8 44.8L802.2 45.2L801.6 45.1L801.0 44.8L800.4 45.1L799.8 45.2L799.2 44.8L798.6 44.4L798.0 45.1L797.4 45.1L796.8 44.9L796.2 45.5L795.6 44.8L795.0 43.3L794.4 43.2L793.8 43.0L793.2 44.7L792.6 44.5L792.0 45.2L791.4 44.7L790.8 44.7L790.2 44.1L789.6 44.7L789.0 44.8L788.4 44.7L787.8 44.8L787.2 45.3L786.6 43.7L786.0 41.3Z" fill="#484c08"/></svg><b>Sax Low</b></div><div class="clip" style="left:369.0px;top:500.7px;width:833.0px;height:54.5px;background:#b07338"><svg width="833.0" height="54.5"><path d="M0 13.7H833.0M0 41.0H833.0" stroke="#4a2206" stroke-width="1" stroke-opacity="0.45"/><path d="M30.2 13.7L30.2 13.4L30.8 10.7L31.5 11.4L32.1 12.1L32.8 12.8L33.4 13.4L33.4 14.0L32.8 14.6L32.1 15.3L31.5 16.0L30.8 16.7L30.2 14.0ZM61.5 13.7L61.5 13.4L62.1 12.6L62.7 11.6L63.3 11.4L63.9 11.6L64.5 11.6L65.1 11.6L65.7 11.5L66.3 11.5L66.9 11.4L67.5 11.8L68.1 11.7L68.7 11.7L69.3 11.4L69.9 11.7L70.5 11.5L71.1 12.3L71.7 12.5L72.3 12.4L72.9 11.3L73.5 11.4L74.1 11.4L74.7 11.4L75.3 11.3L75.9 11.3L76.5 11.6L77.1 11.3L77.7 11.4L78.3 11.6L78.9 11.3L79.5 11.4L80.1 11.4L80.7 11.6L81.3 11.3L81.9 11.2L82.5 11.3L83.1 11.5L83.7 11.3L84.3 11.4L84.9 11.5L85.5 11.6L86.1 11.7L86.7 11.9L87.3 11.9L87.9 12.0L88.5 12.1L89.1 12.1L89.7 12.3L90.3 12.5L90.9 12.7L91.5 12.8L92.1 13.0L92.7 13.1L93.3 13.3L93.9 13.4L94.5 13.4L94.5 14.0L93.9 14.0L93.3 14.2L92.7 14.3L92.1 14.5L91.5 14.6L90.9 14.7L90.3 15.0L89.7 15.2L89.1 15.3L88.5 15.4L87.9 15.4L87.3 15.5L86.7 15.6L86.1 15.7L85.5 15.8L84.9 15.9L84.3 16.0L83.7 16.2L83.1 15.9L82.5 16.2L81.9 16.2L81.3 16.2L80.7 15.8L80.1 16.1L79.5 16.1L78.9 16.1L78.3 15.8L77.7 16.1L77.1 16.1L76.5 15.9L75.9 16.1L75.3 16.2L74.7 16.1L74.1 16.1L73.5 16.1L72.9 16.2L72.3 15.0L71.7 15.0L71.1 15.2L70.5 16.0L69.9 15.8L69.3 16.0L68.7 15.7L68.1 15.7L67.5 15.7L66.9 16.0L66.3 15.9L65.7 15.9L65.1 15.9L64.5 15.9L63.9 15.9L63.3 16.0L62.7 15.9L62.1 14.9L61.5 14.0ZM110.0 13.7L110.0 11.6L110.6 11.2L111.2 11.2L111.8 11.6L112.4 11.4L113.0 11.3L113.6 11.2L114.2 11.4L114.8 11.6L115.4 11.3L116.0 11.4L116.0 16.1L115.4 16.2L114.8 15.8L114.2 16.1L113.6 16.3L113.0 16.1L112.4 16.0L111.8 15.8L111.2 16.2L110.6 16.2L110.0 15.8ZM117.0 13.7L117.0 13.4L117.7 11.5L118.3 11.6L119.0 11.7L119.7 12.0L120.3 12.5L121.0 13.4L121.0 14.0L120.3 14.9L119.7 15.4L119.0 15.7L118.3 15.9L117.7 16.0L117.0 14.0ZM122.5 13.7L122.5 13.4L123.2 11.4L123.8 11.5L124.5 11.7L125.2 12.0L125.8 12.5L126.5 13.4L126.5 14.0L125.8 15.0L125.2 15.5L124.5 15.8L123.8 16.0L123.2 16.1L122.5 14.0ZM131.5 13.7L131.5 13.4L132.0 11.9L132.6 12.5L133.1 13.0L133.6 13.4L133.6 14.0L133.1 14.4L132.6 15.0L132.0 15.5L131.5 14.0ZM153.0 13.7L153.0 13.4L153.7 11.2L154.4 11.3L155.1 11.7L155.8 12.3L156.5 13.4L156.5 14.0L155.8 15.2L155.1 15.8L154.4 16.1L153.7 16.3L153.0 14.0ZM158.5 13.7L158.5 13.4L159.1 11.1L159.8 11.2L160.4 11.4L161.1 11.6L161.7 12.0L162.4 12.5L163.0 13.4L163.0 14.0L162.4 15.0L161.7 15.5L161.1 15.8L160.4 16.1L159.8 16.2L159.1 16.3L158.5 14.0ZM165.5 13.7L165.5 11.9L166.1 12.2L166.8 11.9L167.4 12.1L168.1 12.0L168.7 11.9L169.3 12.2L170.0 11.9L170.6 12.1L171.2 12.1L171.9 12.2L172.5 12.1L173.2 12.1L173.8 12.2L173.8 15.3L173.2 15.3L172.5 15.3L171.9 15.3L171.2 15.4L170.6 15.4L170.0 15.6L169.3 15.3L168.7 15.5L168.1 15.4L167.4 15.3L166.8 15.5L166.1 15.3L165.5 15.6ZM195.8 13.7L195.8 13.4L196.4 12.0L197.0 11.6L197.6 11.5L198.2 11.7L198.8 11.7L199.5 11.5L200.1 11.7L200.7 11.5L201.3 11.6L201.9 11.6L202.5 11.8L203.1 11.8L203.7 12.4L204.3 12.4L204.9 11.3L205.5 11.5L206.2 11.6L206.8 11.6L207.4 11.6L208.0 11.6L208.6 11.2L209.2 11.6L209.8 11.5L210.4 11.6L211.0 11.5L211.6 11.2L212.2 11.5L212.9 11.5L213.5 11.2L214.1 11.3L214.7 11.2L215.3 11.3L215.9 11.8L216.5 11.7L217.1 11.9L217.7 12.1L218.3 12.2L218.9 12.5L219.6 12.6L220.2 12.8L220.8 13.0L221.4 13.1L222.0 13.4L222.6 13.4L222.6 14.1L222.0 14.0L221.4 14.3L220.8 14.5L220.2 14.6L219.6 14.8L218.9 15.0L218.3 15.2L217.7 15.4L217.1 15.5L216.5 15.8L215.9 15.7L215.3 16.2L214.7 16.2L214.1 16.2L213.5 16.3L212.9 16.0L212.2 15.9L211.6 16.2L211.0 15.9L210.4 15.9L209.8 15.9L209.2 15.8L208.6 16.2L208.0 15.9L207.4 15.8L206.8 15.8L206.2 15.8L205.5 15.9L204.9 16.1L204.3 15.0L203.7 15.0L203.1 15.6L202.5 15.7L201.9 15.8L201.3 15.8L200.7 15.9L200.1 15.7L199.5 16.0L198.8 15.8L198.2 15.8L197.6 16.0L197.0 15.9L196.4 15.5L195.8 14.0ZM226.9 13.7L226.9 13.4L227.5 10.8L228.2 11.5L228.8 12.2L229.5 12.8L230.1 13.4L230.1 14.0L229.5 14.7L228.8 15.2L228.2 15.9L227.5 16.7L226.9 14.0ZM258.2 13.7L258.2 13.4L258.8 12.4L259.4 11.7L260.0 11.6L260.6 11.6L261.2 11.5L261.8 11.7L262.4 11.7L263.0 11.5L263.6 11.4L264.2 11.6L264.8 11.8L265.4 11.5L266.0 11.7L266.6 11.5L267.2 11.8L267.8 12.4L268.4 12.4L269.0 12.3L269.6 11.3L270.2 11.2L270.8 11.4L271.4 11.4L272.0 11.5L272.6 11.2L273.2 11.6L273.8 11.4L274.4 11.5L275.0 11.6L275.6 11.6L276.2 11.6L276.8 11.4L277.4 11.2L278.0 11.2L278.6 11.2L279.2 11.6L279.8 11.6L280.4 11.4L281.0 11.3L281.6 11.6L282.2 11.3L282.8 11.5L283.4 11.7L284.0 11.8L284.6 12.0L285.2 12.2L285.8 12.1L286.4 12.5L287.0 12.5L287.6 12.7L288.2 12.7L288.8 12.9L289.4 13.1L290.0 13.3L290.6 13.4L291.2 13.4L291.2 14.0L290.6 14.0L290.0 14.1L289.4 14.4L288.8 14.5L288.2 14.7L287.6 14.8L287.0 15.0L286.4 15.0L285.8 15.3L285.2 15.3L284.6 15.5L284.0 15.6L283.4 15.7L282.8 15.9L282.2 16.2L281.6 15.9L281.0 16.2L280.4 16.0L279.8 15.8L279.2 15.9L278.6 16.2L278.0 16.2L277.4 16.2L276.8 16.1L276.2 15.9L275.6 15.8L275.0 15.9L274.4 15.9L273.8 16.1L273.2 15.8L272.6 16.2L272.0 16.0L271.4 16.1L270.8 16.0L270.2 16.2L269.6 16.2L269.0 15.2L268.4 15.0L267.8 15.1L267.2 15.6L266.6 15.9L266.0 15.8L265.4 15.9L264.8 15.6L264.2 15.9L263.6 16.0L263.0 15.9L262.4 15.8L261.8 15.7L261.2 16.0L260.6 15.8L260.0 15.8L259.4 15.7L258.8 15.0L258.2 14.0ZM306.7 13.7L306.7 11.3L307.3 11.3L307.9 11.2L308.5 11.2L309.1 11.5L309.7 11.2L310.3 11.6L310.9 11.2L311.5 11.5L312.1 11.6L312.7 11.5L312.7 16.0L312.1 15.8L311.5 15.9L310.9 16.2L310.3 15.9L309.7 16.2L309.1 15.9L308.5 16.2L307.9 16.2L307.3 16.1L306.7 16.2ZM313.7 13.7L313.7 13.4L314.4 11.5L315.0 11.6L315.7 11.7L316.4 12.0L317.0 12.5L317.7 13.4L317.7 14.0L317.0 14.9L316.4 15.4L315.7 15.7L315.0 15.9L314.4 16.0L313.7 14.0ZM319.2 13.7L319.2 13.4L319.9 11.4L320.5 11.5L321.2 11.7L321.9 12.0L322.5 12.5L323.2 13.4L323.2 14.0L322.5 15.0L321.9 15.5L321.2 15.8L320.5 16.0L319.9 16.1L319.2 14.0ZM328.2 13.7L328.2 13.4L328.7 12.0L329.3 12.5L329.8 13.0L330.3 13.4L330.3 14.0L329.8 14.4L329.3 14.9L328.7 15.5L328.2 14.0ZM349.7 13.7L349.7 13.4L350.4 11.2L351.1 11.3L351.8 11.7L352.5 12.3L353.2 13.4L353.2 14.0L352.5 15.2L351.8 15.8L351.1 16.1L350.4 16.3L349.7 14.0ZM355.2 13.7L355.2 13.4L355.8 11.1L356.5 11.2L357.1 11.4L357.8 11.6L358.4 12.0L359.1 12.5L359.7 13.4L359.7 14.0L359.1 15.0L358.4 15.5L357.8 15.8L357.1 16.1L356.5 16.2L355.8 16.3L355.2 14.0ZM362.2 13.7L362.2 12.2L362.8 11.9L363.5 12.2L364.1 11.9L364.8 12.2L365.4 12.2L366.0 12.1L366.7 12.1L367.3 11.9L367.9 12.1L368.6 12.0L369.2 12.1L369.9 12.0L370.5 12.1L370.5 15.3L369.9 15.5L369.2 15.3L368.6 15.4L367.9 15.4L367.3 15.6L366.7 15.4L366.0 15.3L365.4 15.3L364.8 15.3L364.1 15.6L363.5 15.3L362.8 15.5L362.2 15.3ZM392.5 13.7L392.5 13.4L393.1 12.1L393.7 11.7L394.3 11.7L394.9 11.8L395.5 11.5L396.2 11.8L396.8 11.6L397.4 11.4L398.0 11.6L398.6 11.8L399.2 11.5L399.8 11.8L400.4 12.4L401.0 12.3L401.6 11.2L402.2 11.6L402.9 11.4L403.5 11.2L404.1 11.3L404.7 11.4L405.3 11.3L405.9 11.2L406.5 11.6L407.1 11.6L407.7 11.5L408.3 11.3L408.9 11.3L409.6 11.3L410.2 11.5L410.8 11.5L411.4 11.6L412.0 11.5L412.6 11.8L413.2 11.7L413.8 11.8L414.4 12.1L415.0 12.2L415.6 12.4L416.3 12.7L416.9 12.8L417.5 12.9L418.1 13.2L418.7 13.4L419.3 13.4L419.3 14.1L418.7 14.1L418.1 14.3L417.5 14.5L416.9 14.7L416.3 14.7L415.6 15.0L415.0 15.3L414.4 15.4L413.8 15.7L413.2 15.7L412.6 15.7L412.0 15.9L411.4 15.8L410.8 16.0L410.2 16.0L409.6 16.2L408.9 16.2L408.3 16.2L407.7 15.9L407.1 15.9L406.5 15.9L405.9 16.2L405.3 16.1L404.7 16.0L404.1 16.2L403.5 16.2L402.9 16.1L402.2 15.8L401.6 16.2L401.0 15.2L400.4 15.1L399.8 15.7L399.2 16.0L398.6 15.7L398.0 15.8L397.4 16.0L396.8 15.8L396.2 15.7L395.5 16.0L394.9 15.7L394.3 15.8L393.7 15.7L393.1 15.4L392.5 14.0ZM423.0 13.7L423.0 13.4L423.6 11.4L424.2 11.9L424.9 12.7L425.5 13.4L425.5 14.0L424.9 14.8L424.2 15.5L423.6 16.1L423.0 14.0ZM502.5 13.7L502.5 11.5L503.1 11.5L503.8 11.3L504.4 11.5L505.1 11.3L505.8 11.6L506.4 11.3L507.1 11.5L507.7 11.4L508.4 11.5L509.0 11.5L509.0 16.0L508.4 16.0L507.7 16.0L507.1 16.0L506.4 16.1L505.8 15.8L505.1 16.2L504.4 16.0L503.8 16.1L503.1 15.9L502.5 15.9ZM510.0 13.7L510.0 13.4L510.6 11.4L511.3 11.5L511.9 11.6L512.6 11.9L513.2 12.2L513.9 12.6L514.5 13.4L514.5 14.0L513.9 14.8L513.2 15.3L512.6 15.6L511.9 15.8L511.3 15.9L510.6 16.0L510.0 14.0ZM515.5 13.7L515.5 13.4L516.1 11.3L516.8 11.4L517.4 11.5L518.0 11.7L518.6 11.9L519.2 12.2L519.9 12.7L520.5 13.4L520.5 14.0L519.9 14.8L519.2 15.2L518.6 15.6L518.0 15.8L517.4 16.0L516.8 16.1L516.1 16.1L515.5 14.0ZM553.0 13.7L553.0 13.4L553.7 11.5L554.4 11.9L555.1 12.6L555.8 13.0L556.5 13.4L556.5 14.0L555.8 14.4L555.1 14.9L554.4 15.5L553.7 15.9L553.0 14.0ZM559.0 13.7L559.0 13.4L559.6 11.4L560.2 11.7L560.9 12.0L561.5 12.2L562.1 12.6L562.8 12.8L563.4 13.2L564.0 13.4L564.0 14.0L563.4 14.2L562.8 14.6L562.1 14.8L561.5 15.2L560.9 15.5L560.2 15.8L559.6 16.1L559.0 14.0ZM566.5 13.7L566.5 12.1L567.1 12.1L567.8 12.0L568.4 11.9L569.0 11.9L569.7 12.0L570.3 12.0L571.0 12.1L571.6 12.0L572.2 12.1L572.9 12.1L573.5 12.2L573.5 15.3L572.9 15.3L572.2 15.3L571.6 15.5L571.0 15.3L570.3 15.5L569.7 15.4L569.0 15.5L568.4 15.6L567.8 15.4L567.1 15.3L566.5 15.4ZM599.0 13.7L599.0 13.4L599.7 12.7L600.3 12.7L601.0 13.0L601.7 13.2L602.3 13.4L603.0 13.4L603.0 14.0L602.3 14.0L601.7 14.3L601.0 14.5L600.3 14.7L599.7 14.8L599.0 14.0ZM606.0 13.7L606.0 13.4L606.7 12.5L607.3 12.6L608.0 12.9L608.7 13.2L609.3 13.3L610.0 13.4L610.0 14.0L609.3 14.1L608.7 14.3L608.0 14.6L607.3 14.9L606.7 15.0L606.0 14.0ZM612.5 13.7L612.5 13.4L613.2 12.3L613.8 12.5L614.5 12.7L615.2 13.0L615.8 13.3L616.5 13.4L616.5 14.0L615.8 14.2L615.2 14.5L614.5 14.8L613.8 15.0L613.2 15.2L612.5 14.0ZM619.0 13.7L619.0 13.4L619.6 11.9L620.2 11.9L620.9 12.3L621.5 12.6L622.1 12.7L622.8 13.1L623.4 13.4L624.0 13.4L624.0 14.0L623.4 14.1L622.8 14.4L622.1 14.8L621.5 14.8L620.9 15.2L620.2 15.5L619.6 15.6L619.0 14.0ZM651.5 13.7L651.5 13.4L652.1 12.4L652.7 11.8L653.3 11.5L653.9 11.6L654.5 11.7L655.2 11.5L655.8 11.8L656.4 11.4L657.0 11.5L657.6 11.6L658.2 11.4L658.8 11.7L659.4 11.6L660.0 11.7L660.6 11.5L661.2 12.4L661.9 12.4L662.5 12.4L663.1 11.5L663.7 11.5L664.3 11.5L664.9 11.5L665.5 11.6L666.1 11.5L666.7 11.3L667.3 11.3L667.9 11.5L668.6 11.2L669.2 11.4L669.8 11.4L670.4 11.4L671.0 11.6L671.6 11.4L672.2 11.4L672.8 11.4L673.4 11.3L674.0 11.3L674.6 11.6L675.3 11.5L675.9 11.4L676.5 11.7L677.1 11.5L677.7 11.9L678.3 11.9L678.9 12.1L679.5 12.3L680.1 12.4L680.7 12.5L681.3 12.6L682.0 12.7L682.6 13.0L683.2 13.1L683.8 13.3L684.4 13.4L685.0 13.4L685.0 14.0L684.4 14.0L683.8 14.1L683.2 14.4L682.6 14.5L682.0 14.7L681.3 14.8L680.7 14.9L680.1 15.0L679.5 15.2L678.9 15.3L678.3 15.6L677.7 15.6L677.1 15.9L676.5 15.7L675.9 16.0L675.3 15.9L674.6 15.9L674.0 16.1L673.4 16.1L672.8 16.0L672.2 16.1L671.6 16.1L671.0 15.9L670.4 16.1L669.8 16.1L669.2 16.0L668.6 16.2L667.9 16.0L667.3 16.1L666.7 16.2L666.1 16.0L665.5 15.9L664.9 15.9L664.3 16.0L663.7 15.9L663.1 15.9L662.5 15.1L661.9 15.1L661.2 15.0L660.6 15.9L660.0 15.8L659.4 15.8L658.8 15.7L658.2 16.0L657.6 15.8L657.0 16.0L656.4 16.0L655.8 15.6L655.2 16.0L654.5 15.7L653.9 15.9L653.3 16.0L652.7 15.7L652.1 15.1L651.5 14.0ZM700.0 13.7L700.0 11.6L700.6 11.4L701.2 11.4L701.8 11.2L702.4 11.5L703.0 11.3L703.6 11.5L704.2 11.4L704.8 11.6L705.4 11.5L706.0 11.3L706.0 16.2L705.4 16.0L704.8 15.8L704.2 16.0L703.6 16.0L703.0 16.2L702.4 16.0L701.8 16.2L701.2 16.0L700.6 16.1L700.0 15.8ZM707.0 13.7L707.0 13.4L707.6 11.4L708.3 11.5L708.9 11.6L709.6 11.9L710.2 12.2L710.9 12.6L711.5 13.4L711.5 14.0L710.9 14.8L710.2 15.3L709.6 15.6L708.9 15.8L708.3 15.9L707.6 16.0L707.0 14.0ZM712.5 13.7L712.5 13.4L713.1 11.3L713.7 11.4L714.3 11.4L714.9 11.5L715.5 11.7L716.1 11.8L716.7 12.1L717.3 12.4L717.9 12.8L718.5 13.4L718.5 14.0L717.9 14.7L717.3 15.1L716.7 15.4L716.1 15.6L715.5 15.8L714.9 15.9L714.3 16.0L713.7 16.1L713.1 16.1L712.5 14.0ZM722.5 13.7L722.5 13.4L723.0 11.9L723.5 12.6L724.1 13.0L724.6 13.4L724.6 14.0L724.1 14.4L723.5 14.8L723.0 15.5L722.5 14.0ZM743.5 13.7L743.5 13.4L744.2 11.4L744.8 11.9L745.5 12.4L746.2 12.7L746.8 13.1L747.5 13.4L747.5 14.0L746.8 14.4L746.2 14.8L745.5 15.1L744.8 15.6L744.2 16.1L743.5 14.0ZM749.5 13.7L749.5 13.4L750.1 11.3L750.8 11.9L751.4 11.9L752.1 12.3L752.7 12.8L753.4 13.2L754.0 13.4L754.0 14.0L753.4 14.3L752.7 14.7L752.1 15.1L751.4 15.5L750.8 15.5L750.1 16.2L749.5 14.0ZM756.0 13.7L756.0 12.2L756.6 12.0L757.2 12.0L757.9 11.9L758.5 12.0L759.1 11.9L759.8 12.1L760.4 11.9L761.0 12.0L761.6 12.0L762.2 11.9L762.9 12.0L763.5 12.1L763.5 15.4L762.9 15.5L762.2 15.5L761.6 15.4L761.0 15.5L760.4 15.6L759.8 15.4L759.1 15.6L758.5 15.5L757.9 15.6L757.2 15.5L756.6 15.4L756.0 15.3ZM786.0 13.7L786.0 13.4L786.6 12.4L787.2 11.8L787.8 11.6L788.4 11.6L789.0 11.6L789.6 11.7L790.2 11.7L790.8 11.9L791.4 11.6L792.0 11.8L792.6 11.5L793.2 11.7L793.8 12.4L794.4 12.5L795.0 12.5L795.6 11.3L796.2 11.5L796.8 11.7L797.4 11.6L798.0 11.3L798.6 11.5L799.2 11.5L799.8 11.7L800.4 11.7L801.0 11.6L801.6 11.6L802.2 11.6L802.8 11.5L803.4 11.7L804.0 11.4L804.6 11.5L805.2 11.6L805.8 11.6L806.4 11.9L807.0 11.9L807.6 11.9L808.2 12.1L808.8 12.3L809.4 12.4L810.0 12.7L810.6 12.8L811.2 13.0L811.8 13.2L812.4 13.4L813.0 13.4L813.0 14.0L812.4 14.0L811.8 14.3L811.2 14.4L810.6 14.7L810.0 14.7L809.4 15.0L808.8 15.1L808.2 15.3L807.6 15.6L807.0 15.6L806.4 15.5L805.8 15.9L805.2 15.8L804.6 16.0L804.0 16.1L803.4 15.8L802.8 16.0L802.2 15.9L801.6 15.9L801.0 15.9L800.4 15.7L799.8 15.8L799.2 15.9L798.6 16.0L798.0 16.1L797.4 15.9L796.8 15.8L796.2 15.9L795.6 16.1L795.0 14.9L794.4 15.0L793.8 15.1L793.2 15.7L792.6 15.9L792.0 15.6L791.4 15.8L790.8 15.6L790.2 15.8L789.6 15.7L789.0 15.9L788.4 15.8L787.8 15.9L787.2 15.7L786.6 15.1L786.0 14.0ZM30.2 41.0L30.2 40.7L30.8 39.7L31.5 40.0L32.1 40.3L32.8 40.6L33.4 40.7L33.4 41.3L32.8 41.4L32.1 41.7L31.5 42.0L30.8 42.2L30.2 41.3ZM61.5 41.0L61.5 40.7L62.1 40.3L62.7 39.9L63.3 40.0L63.9 40.0L64.5 39.8L65.1 40.0L65.7 40.0L66.3 39.8L66.9 40.0L67.5 40.0L68.1 40.0L68.7 39.9L69.3 39.8L69.9 39.9L70.5 39.8L71.1 40.3L71.7 40.3L72.3 40.3L72.9 39.9L73.5 39.7L74.1 39.8L74.7 39.9L75.3 39.9L75.9 39.9L76.5 39.8L77.1 39.8L77.7 39.7L78.3 39.8L78.9 39.8L79.5 39.7L80.1 39.8L80.7 39.8L81.3 39.8L81.9 39.9L82.5 39.9L83.1 39.7L83.7 39.7L84.3 39.9L84.9 39.9L85.5 39.9L86.1 40.0L86.7 40.0L87.3 40.1L87.9 40.0L88.5 40.2L89.1 40.3L89.7 40.3L90.3 40.4L90.9 40.4L91.5 40.5L92.1 40.6L92.7 40.7L93.3 40.7L93.9 40.7L94.5 40.7L94.5 41.3L93.9 41.3L93.3 41.3L92.7 41.3L92.1 41.3L91.5 41.5L90.9 41.5L90.3 41.6L89.7 41.7L89.1 41.7L88.5 41.7L87.9 41.9L87.3 41.8L86.7 42.0L86.1 42.0L85.5 42.0L84.9 42.1L84.3 42.1L83.7 42.2L83.1 42.2L82.5 42.0L81.9 42.0L81.3 42.1L80.7 42.2L80.1 42.1L79.5 42.2L78.9 42.2L78.3 42.1L77.7 42.2L77.1 42.2L76.5 42.2L75.9 42.1L75.3 42.1L74.7 42.1L74.1 42.2L73.5 42.2L72.9 42.1L72.3 41.6L71.7 41.7L71.1 41.6L70.5 42.1L69.9 42.0L69.3 42.1L68.7 42.1L68.1 42.0L67.5 41.9L66.9 42.0L66.3 42.1L65.7 42.0L65.1 41.9L64.5 42.1L63.9 41.9L63.3 41.9L62.7 42.1L62.1 41.7L61.5 41.3ZM110.0 41.0L110.0 39.9L110.6 39.8L111.2 39.9L111.8 39.9L112.4 39.8L113.0 39.9L113.6 39.8L114.2 39.7L114.8 39.8L115.4 39.8L116.0 39.8L116.0 42.1L115.4 42.1L114.8 42.2L114.2 42.2L113.6 42.1L113.0 42.1L112.4 42.2L111.8 42.1L111.2 42.1L110.6 42.1L110.0 42.1ZM117.0 41.0L117.0 40.7L117.7 39.8L118.3 39.9L119.0 40.0L119.7 40.1L120.3 40.4L121.0 40.7L121.0 41.3L120.3 41.6L119.7 41.8L119.0 42.0L118.3 42.1L117.7 42.1L117.0 41.3ZM122.5 41.0L122.5 40.7L123.2 39.8L123.8 39.8L124.5 39.9L125.2 40.1L125.8 40.4L126.5 40.7L126.5 41.3L125.8 41.6L125.2 41.8L124.5 42.0L123.8 42.1L123.2 42.2L122.5 41.3ZM131.5 41.0L131.5 40.7L132.0 40.1L132.6 40.4L133.1 40.6L133.6 40.7L133.6 41.3L133.1 41.3L132.6 41.6L132.0 41.9L131.5 41.3ZM153.0 41.0L153.0 40.7L153.7 39.7L154.4 39.8L155.1 39.9L155.8 40.2L156.5 40.7L156.5 41.3L155.8 41.7L155.1 42.0L154.4 42.2L153.7 42.3L153.0 41.3ZM158.5 41.0L158.5 40.7L159.1 39.7L159.8 39.7L160.4 39.8L161.1 39.9L161.7 40.1L162.4 40.4L163.0 40.7L163.0 41.3L162.4 41.6L161.7 41.9L161.1 42.0L160.4 42.2L159.8 42.2L159.1 42.3L158.5 41.3ZM165.5 41.0L165.5 40.1L166.1 40.1L166.8 40.1L167.4 40.1L168.1 40.2L168.7 40.2L169.3 40.2L170.0 40.1L170.6 40.0L171.2 40.2L171.9 40.1L172.5 40.1L173.2 40.2L173.8 40.1L173.8 41.8L173.2 41.7L172.5 41.9L171.9 41.9L171.2 41.8L170.6 41.9L170.0 41.8L169.3 41.8L168.7 41.8L168.1 41.8L167.4 41.8L166.8 41.9L166.1 41.9L165.5 41.9ZM195.8 41.0L195.8 40.7L196.4 40.2L197.0 39.9L197.6 39.8L198.2 40.0L198.8 39.9L199.5 40.0L200.1 40.0L200.7 40.0L201.3 39.9L201.9 40.0L202.5 39.9L203.1 39.9L203.7 40.2L204.3 40.2L204.9 39.8L205.5 39.9L206.2 39.8L206.8 39.8L207.4 39.8L208.0 39.9L208.6 39.9L209.2 39.8L209.8 39.9L210.4 39.9L211.0 39.9L211.6 39.7L212.2 39.8L212.9 39.8L213.5 39.8L214.1 39.9L214.7 39.7L215.3 39.9L215.9 40.0L216.5 39.9L217.1 40.0L217.7 40.2L218.3 40.2L218.9 40.3L219.6 40.4L220.2 40.5L220.8 40.6L221.4 40.7L222.0 40.7L222.6 40.7L222.6 41.3L222.0 41.3L221.4 41.3L220.8 41.4L220.2 41.4L219.6 41.6L218.9 41.6L218.3 41.8L217.7 41.8L217.1 41.9L216.5 42.0L215.9 42.0L215.3 42.1L214.7 42.2L214.1 42.1L213.5 42.1L212.9 42.2L212.2 42.1L211.6 42.2L211.0 42.1L210.4 42.1L209.8 42.0L209.2 42.1L208.6 42.1L208.0 42.1L207.4 42.2L206.8 42.2L206.2 42.2L205.5 42.0L204.9 42.1L204.3 41.7L203.7 41.7L203.1 42.0L202.5 42.0L201.9 42.0L201.3 42.0L200.7 41.9L200.1 42.0L199.5 41.9L198.8 42.0L198.2 41.9L197.6 42.1L197.0 42.0L196.4 41.8L195.8 41.3ZM226.9 41.0L226.9 40.7L227.5 39.7L228.2 39.8L228.8 40.3L229.5 40.5L230.1 40.7L230.1 41.3L229.5 41.4L228.8 41.7L228.2 42.2L227.5 42.3L226.9 41.3ZM258.2 41.0L258.2 40.7L258.8 40.3L259.4 39.8L260.0 40.0L260.6 40.0L261.2 40.0L261.8 40.0L262.4 40.0L263.0 39.8L263.6 39.9L264.2 39.9L264.8 39.9L265.4 40.0L266.0 39.8L266.6 39.9L267.2 39.9L267.8 40.3L268.4 40.3L269.0 40.3L269.6 39.7L270.2 39.9L270.8 39.8L271.4 39.8L272.0 39.8L272.6 39.8L273.2 39.8L273.8 39.8L274.4 39.8L275.0 39.9L275.6 39.8L276.2 39.7L276.8 39.9L277.4 39.8L278.0 39.9L278.6 39.8L279.2 39.8L279.8 39.8L280.4 39.8L281.0 39.9L281.6 39.9L282.2 39.8L282.8 39.9L283.4 40.0L284.0 40.0L284.6 40.0L285.2 40.1L285.8 40.2L286.4 40.2L287.0 40.4L287.6 40.5L288.2 40.5L288.8 40.6L289.4 40.6L290.0 40.7L290.6 40.7L291.2 40.7L291.2 41.3L290.6 41.3L290.0 41.3L289.4 41.3L288.8 41.4L288.2 41.4L287.6 41.5L287.0 41.6L286.4 41.7L285.8 41.8L285.2 41.9L284.6 41.9L284.0 42.0L283.4 41.9L282.8 42.0L282.2 42.2L281.6 42.1L281.0 42.0L280.4 42.2L279.8 42.2L279.2 42.1L278.6 42.1L278.0 42.0L277.4 42.1L276.8 42.0L276.2 42.2L275.6 42.1L275.0 42.0L274.4 42.2L273.8 42.2L273.2 42.1L272.6 42.2L272.0 42.2L271.4 42.1L270.8 42.1L270.2 42.1L269.6 42.2L269.0 41.7L268.4 41.7L267.8 41.6L267.2 42.1L266.6 42.0L266.0 42.1L265.4 42.0L264.8 42.0L264.2 42.1L263.6 42.1L263.0 42.1L262.4 42.0L261.8 42.0L261.2 42.0L260.6 42.0L260.0 42.0L259.4 42.1L258.8 41.6L258.2 41.3ZM306.7 41.0L306.7 39.9L307.3 39.9L307.9 39.8L308.5 39.9L309.1 39.8L309.7 39.8L310.3 39.8L310.9 39.8L311.5 39.8L312.1 39.7L312.7 39.9L312.7 42.0L312.1 42.2L311.5 42.2L310.9 42.2L310.3 42.2L309.7 42.2L309.1 42.1L308.5 42.0L307.9 42.2L307.3 42.1L306.7 42.1ZM313.7 41.0L313.7 40.7L314.4 39.8L315.0 39.9L315.7 40.0L316.4 40.1L317.0 40.4L317.7 40.7L317.7 41.3L317.0 41.6L316.4 41.8L315.7 42.0L315.0 42.1L314.4 42.1L313.7 41.3ZM319.2 41.0L319.2 40.7L319.9 39.8L320.5 39.8L321.2 39.9L321.9 40.1L322.5 40.4L323.2 40.7L323.2 41.3L322.5 41.6L321.9 41.8L321.2 42.0L320.5 42.1L319.9 42.2L319.2 41.3ZM328.2 41.0L328.2 40.7L328.7 40.0L329.3 40.3L329.8 40.6L330.3 40.7L330.3 41.3L329.8 41.4L329.3 41.6L328.7 41.9L328.2 41.3ZM349.7 41.0L349.7 40.7L350.4 39.7L351.1 39.8L351.8 39.9L352.5 40.2L353.2 40.7L353.2 41.3L352.5 41.7L351.8 42.0L351.1 42.2L350.4 42.3L349.7 41.3ZM355.2 41.0L355.2 40.7L355.8 39.7L356.5 39.7L357.1 39.8L357.8 39.9L358.4 40.1L359.1 40.4L359.7 40.7L359.7 41.3L359.1 41.6L358.4 41.9L357.8 42.0L357.1 42.2L356.5 42.2L355.8 42.3L355.2 41.3ZM362.2 41.0L362.2 40.1L362.8 40.0L363.5 40.1L364.1 40.1L364.8 40.1L365.4 40.0L366.0 40.1L366.7 40.1L367.3 40.1L367.9 40.1L368.6 40.2L369.2 40.1L369.9 40.2L370.5 40.1L370.5 41.8L369.9 41.8L369.2 41.9L368.6 41.8L367.9 41.8L367.3 41.8L366.7 41.8L366.0 41.9L365.4 41.9L364.8 41.9L364.1 41.9L363.5 41.8L362.8 41.9L362.2 41.8ZM392.5 41.0L392.5 40.7L393.1 40.1L393.7 39.9L394.3 39.8L394.9 39.9L395.5 39.9L396.2 40.0L396.8 39.9L397.4 39.8L398.0 39.9L398.6 39.9L399.2 39.9L399.8 40.0L400.4 40.2L401.0 40.3L401.6 39.8L402.2 39.7L402.9 39.7L403.5 39.9L404.1 39.8L404.7 39.8L405.3 39.8L405.9 39.9L406.5 39.7L407.1 39.9L407.7 39.7L408.3 39.8L408.9 39.7L409.6 39.9L410.2 39.8L410.8 39.7L411.4 39.9L412.0 39.8L412.6 40.0L413.2 40.0L413.8 40.0L414.4 40.1L415.0 40.2L415.6 40.4L416.3 40.4L416.9 40.5L417.5 40.6L418.1 40.7L418.7 40.7L419.3 40.7L419.3 41.3L418.7 41.3L418.1 41.3L417.5 41.3L416.9 41.5L416.3 41.5L415.6 41.6L415.0 41.7L414.4 41.8L413.8 41.9L413.2 41.9L412.6 42.0L412.0 42.2L411.4 42.1L410.8 42.2L410.2 42.1L409.6 42.0L408.9 42.2L408.3 42.2L407.7 42.2L407.1 42.1L406.5 42.2L405.9 42.1L405.3 42.1L404.7 42.1L404.1 42.2L403.5 42.1L402.9 42.2L402.2 42.2L401.6 42.2L401.0 41.7L400.4 41.7L399.8 41.9L399.2 42.0L398.6 42.1L398.0 42.1L397.4 42.1L396.8 42.0L396.2 42.0L395.5 42.1L394.9 42.0L394.3 42.1L393.7 42.0L393.1 41.8L392.5 41.3ZM423.0 41.0L423.0 40.7L423.6 39.8L424.2 40.2L424.9 40.5L425.5 40.7L425.5 41.3L424.9 41.5L424.2 41.8L423.6 42.1L423.0 41.3ZM502.5 41.0L502.5 39.8L503.1 39.8L503.8 39.9L504.4 39.9L505.1 39.8L505.8 39.7L506.4 39.8L507.1 39.8L507.7 39.7L508.4 39.9L509.0 39.7L509.0 42.2L508.4 42.0L507.7 42.2L507.1 42.2L506.4 42.2L505.8 42.2L505.1 42.1L504.4 42.0L503.8 42.1L503.1 42.1L502.5 42.1ZM510.0 41.0L510.0 40.7L510.6 39.8L511.3 39.9L511.9 39.9L512.6 40.0L513.2 40.2L513.9 40.4L514.5 40.7L514.5 41.3L513.9 41.5L513.2 41.8L512.6 41.9L511.9 42.0L511.3 42.1L510.6 42.1L510.0 41.3ZM515.5 41.0L515.5 40.7L516.1 39.8L516.8 39.8L517.4 39.9L518.0 39.9L518.6 40.1L519.2 40.2L519.9 40.4L520.5 40.7L520.5 41.3L519.9 41.5L519.2 41.7L518.6 41.9L518.0 42.0L517.4 42.1L516.8 42.1L516.1 42.2L515.5 41.3ZM553.0 41.0L553.0 40.7L553.7 39.9L554.4 40.0L555.1 40.3L555.8 40.6L556.5 40.7L556.5 41.3L555.8 41.4L555.1 41.6L554.4 41.9L553.7 42.0L553.0 41.3ZM559.0 41.0L559.0 40.7L559.6 39.8L560.2 39.9L560.9 40.1L561.5 40.2L562.1 40.4L562.8 40.5L563.4 40.7L564.0 40.7L564.0 41.3L563.4 41.3L562.8 41.4L562.1 41.5L561.5 41.8L560.9 41.8L560.2 42.1L559.6 42.1L559.0 41.3ZM566.5 41.0L566.5 40.1L567.1 40.2L567.8 40.1L568.4 40.2L569.0 40.1L569.7 40.1L570.3 40.1L571.0 40.1L571.6 40.1L572.2 40.2L572.9 40.2L573.5 40.1L573.5 41.9L572.9 41.8L572.2 41.8L571.6 41.8L571.0 41.9L570.3 41.9L569.7 41.9L569.0 41.8L568.4 41.8L567.8 41.9L567.1 41.8L566.5 41.8ZM599.0 41.0L599.0 40.7L599.7 40.5L600.3 40.5L601.0 40.6L601.7 40.7L602.3 40.7L603.0 40.7L603.0 41.3L602.3 41.3L601.7 41.3L601.0 41.3L600.3 41.4L599.7 41.5L599.0 41.3ZM606.0 41.0L606.0 40.7L606.7 40.3L607.3 40.4L608.0 40.5L608.7 40.7L609.3 40.7L610.0 40.7L610.0 41.3L609.3 41.3L608.7 41.3L608.0 41.4L607.3 41.5L606.7 41.6L606.0 41.3ZM612.5 41.0L612.5 40.7L613.2 40.2L613.8 40.3L614.5 40.5L615.2 40.6L615.8 40.7L616.5 40.7L616.5 41.3L615.8 41.3L615.2 41.4L614.5 41.5L613.8 41.6L613.2 41.8L612.5 41.3ZM619.0 41.0L619.0 40.7L619.6 39.9L620.2 40.1L620.9 40.3L621.5 40.4L622.1 40.5L622.8 40.6L623.4 40.7L624.0 40.7L624.0 41.3L623.4 41.3L622.8 41.3L622.1 41.5L621.5 41.6L620.9 41.6L620.2 41.8L619.6 42.0L619.0 41.3ZM651.5 41.0L651.5 40.7L652.1 40.3L652.7 39.9L653.3 40.0L653.9 39.9L654.5 40.0L655.2 39.9L655.8 39.9L656.4 40.0L657.0 39.9L657.6 39.8L658.2 39.9L658.8 40.0L659.4 39.8L660.0 39.9L660.6 39.9L661.2 40.2L661.9 40.3L662.5 40.3L663.1 39.8L663.7 39.7L664.3 39.9L664.9 39.7L665.5 39.7L666.1 39.9L666.7 39.8L667.3 39.7L667.9 39.9L668.6 39.7L669.2 39.9L669.8 39.8L670.4 39.9L671.0 39.8L671.6 39.9L672.2 39.8L672.8 39.8L673.4 39.9L674.0 39.9L674.6 39.8L675.3 39.8L675.9 39.7L676.5 39.9L677.1 40.1L677.7 39.9L678.3 40.2L678.9 40.2L679.5 40.2L680.1 40.2L680.7 40.4L681.3 40.4L682.0 40.5L682.6 40.5L683.2 40.7L683.8 40.7L684.4 40.7L685.0 40.7L685.0 41.3L684.4 41.3L683.8 41.3L683.2 41.3L682.6 41.4L682.0 41.5L681.3 41.5L680.7 41.6L680.1 41.7L679.5 41.8L678.9 41.8L678.3 41.8L677.7 42.0L677.1 41.9L676.5 42.1L675.9 42.2L675.3 42.1L674.6 42.1L674.0 42.1L673.4 42.1L672.8 42.1L672.2 42.1L671.6 42.0L671.0 42.1L670.4 42.0L669.8 42.2L669.2 42.1L668.6 42.2L667.9 42.1L667.3 42.2L666.7 42.2L666.1 42.1L665.5 42.2L664.9 42.2L664.3 42.1L663.7 42.2L663.1 42.2L662.5 41.7L661.9 41.6L661.2 41.7L660.6 42.0L660.0 42.1L659.4 42.1L658.8 42.0L658.2 42.1L657.6 42.1L657.0 42.1L656.4 42.0L655.8 42.1L655.2 42.1L654.5 42.0L653.9 42.1L653.3 42.0L652.7 42.1L652.1 41.6L651.5 41.3ZM700.0 41.0L700.0 39.7L700.6 39.8L701.2 39.8L701.8 39.9L702.4 39.9L703.0 39.8L703.6 39.7L704.2 39.8L704.8 39.9L705.4 39.7L706.0 39.7L706.0 42.2L705.4 42.2L704.8 42.0L704.2 42.1L703.6 42.2L703.0 42.2L702.4 42.0L701.8 42.1L701.2 42.1L700.6 42.1L700.0 42.2ZM707.0 41.0L707.0 40.7L707.6 39.8L708.3 39.9L708.9 39.9L709.6 40.0L710.2 40.2L710.9 40.4L711.5 40.7L711.5 41.3L710.9 41.5L710.2 41.8L709.6 41.9L708.9 42.0L708.3 42.1L707.6 42.1L707.0 41.3ZM712.5 41.0L712.5 40.7L713.1 39.8L713.7 39.8L714.3 39.8L714.9 39.9L715.5 39.9L716.1 40.0L716.7 40.1L717.3 40.3L717.9 40.5L718.5 40.7L718.5 41.3L717.9 41.4L717.3 41.7L716.7 41.8L716.1 41.9L715.5 42.0L714.9 42.1L714.3 42.1L713.7 42.2L713.1 42.2L712.5 41.3ZM722.5 41.0L722.5 40.7L723.0 40.2L723.5 40.4L724.1 40.6L724.6 40.7L724.6 41.3L724.1 41.3L723.5 41.6L723.0 41.8L722.5 41.3ZM743.5 41.0L743.5 40.7L744.2 39.8L744.8 40.0L745.5 40.3L746.2 40.5L746.8 40.7L747.5 40.7L747.5 41.3L746.8 41.3L746.2 41.5L745.5 41.7L744.8 42.0L744.2 42.1L743.5 41.3ZM749.5 41.0L749.5 40.7L750.1 39.8L750.8 40.0L751.4 40.1L752.1 40.3L752.7 40.5L753.4 40.7L754.0 40.7L754.0 41.3L753.4 41.3L752.7 41.5L752.1 41.7L751.4 41.9L750.8 42.0L750.1 42.2L749.5 41.3ZM756.0 41.0L756.0 40.1L756.6 40.2L757.2 40.1L757.9 40.1L758.5 40.2L759.1 40.2L759.8 40.1L760.4 40.1L761.0 40.0L761.6 40.1L762.2 40.1L762.9 40.1L763.5 40.1L763.5 41.8L762.9 41.8L762.2 41.9L761.6 41.9L761.0 41.9L760.4 41.9L759.8 41.9L759.1 41.7L758.5 41.8L757.9 41.9L757.2 41.8L756.6 41.8L756.0 41.8ZM786.0 41.0L786.0 40.7L786.6 40.2L787.2 40.1L787.8 40.0L788.4 40.1L789.0 40.1L789.6 39.9L790.2 39.9L790.8 40.0L791.4 40.0L792.0 39.9L792.6 39.9L793.2 39.9L793.8 40.3L794.4 40.3L795.0 40.4L795.6 39.8L796.2 39.9L796.8 39.9L797.4 39.9L798.0 39.8L798.6 39.9L799.2 39.9L799.8 40.0L800.4 39.9L801.0 39.9L801.6 40.0L802.2 39.9L802.8 40.0L803.4 39.8L804.0 39.8L804.6 39.9L805.2 39.9L805.8 39.9L806.4 40.0L807.0 40.1L807.6 40.1L808.2 40.1L808.8 40.3L809.4 40.3L810.0 40.5L810.6 40.5L811.2 40.7L811.8 40.7L812.4 40.7L813.0 40.7L813.0 41.3L812.4 41.3L811.8 41.3L811.2 41.3L810.6 41.4L810.0 41.5L809.4 41.6L808.8 41.7L808.2 41.8L807.6 41.9L807.0 41.9L806.4 41.9L805.8 42.1L805.2 42.0L804.6 42.0L804.0 42.1L803.4 42.1L802.8 42.0L802.2 42.0L801.6 42.0L801.0 42.1L800.4 42.0L799.8 42.0L799.2 42.0L798.6 42.0L798.0 42.1L797.4 42.1L796.8 42.0L796.2 42.0L795.6 42.1L795.0 41.6L794.4 41.6L793.8 41.7L793.2 42.0L792.6 42.1L792.0 42.0L791.4 41.9L790.8 41.9L790.2 42.1L789.6 42.0L789.0 41.9L788.4 41.9L787.8 42.0L787.2 41.9L786.6 41.8L786.0 41.3Z" fill="#4a2206"/></svg><b>Sax High</b></div><div class="abs" style="left:306.7px;top:0;width:1.1px;height:530px;background:#f0f0f0"></div><svg class="abs" style="left:1100px;top:430px" width="101" height="100" viewBox="1321 596 101 100"><rect x="1331.3" y="604.5" width="78.2" height="79.2" rx="3.6" fill="none" stroke="#fff" stroke-width="3.7"/><path d="M1351 643.7H1390.4M1370.6 624V663.5" stroke="#fff" stroke-width="3.9"/></svg></div>
<div class="abs" style="left:0;top:694.5px;width:1422px;height:106px;background:#121111"></div><div class="abs" style="left:3px;top:696.5px;width:1417px;height:101.5px;border-radius:5px 5px 4px 4px;background:linear-gradient(#737272 0,#4a4949 1.5px,#3c3b3b 5px,#393838 60%,#333232 100%)"></div><div class="abs" style="left:34.2px;top:705.6px;width:102px;height:82.2px;background:#0e0d0d;border-radius:3px;box-shadow:0 1px 0 #4a4949"></div><div class="abs" style="left:36.6px;top:708.2px;width:97.2px;height:77.4px;background:linear-gradient(#4a4949 0,#3a3939 3px,#363535 100%);border-radius:2px"></div><div class="abs" style="left:148.7px;top:705.6px;width:101.5px;height:82.2px;background:#0e0d0d;border-radius:3px;box-shadow:0 1px 0 #4a4949"></div><div class="abs" style="left:151.1px;top:708.2px;width:96.7px;height:77.4px;background:linear-gradient(#4a4949 0,#3a3939 3px,#363535 100%);border-radius:2px"></div><div class="abs" style="left:263px;top:705.6px;width:101.5px;height:82.2px;background:#0e0d0d;border-radius:3px;box-shadow:0 1px 0 #4a4949"></div><div class="abs" style="left:265.4px;top:708.2px;width:96.7px;height:77.4px;background:linear-gradient(#4a4949 0,#3a3939 3px,#363535 100%);border-radius:2px"></div><div class="abs" style="left:377px;top:705.6px;width:102px;height:82.2px;background:#0e0d0d;border-radius:3px;box-shadow:0 1px 0 #4a4949"></div><div class="abs" style="left:379.4px;top:708.2px;width:97.2px;height:77.4px;background:linear-gradient(#262525 0,#1f1e1e 4px,#1d1c1c 100%);border-radius:2px"></div><svg class="abs" style="left:0;top:700px" width="500" height="95" viewBox="0 700 500 95"><path d="M71 730.3 V762.5 L104.4 746.4z" fill="none" stroke="#62e06e" stroke-width="3.3" stroke-linejoin="miter"/><rect x="187.6" y="730" width="4.6" height="32.8" fill="#e9a825"/><rect x="209.5" y="730" width="4.6" height="32.8" fill="#e9a825"/><rect x="299.3" y="731.8" width="31.6" height="28.6" fill="none" stroke="#e9a825" stroke-width="3.4"/><circle cx="428.4" cy="746.2" r="16.3" fill="none" stroke="#a3301f" stroke-width="3.5"/></svg><div class="abs" style="left:496px;top:706px;width:170px;height:82px;background:#000;border-radius:8px"></div><div class="abs txt" id="t1" style="left:496px;top:713.6px;width:170px;text-align:center;color:#10e828;font-family:'Liberation Mono',monospace;font-size:28.5px;line-height:38px;white-space:pre;transform:scaleY(1.28);transform-origin:50% 50%">00:24:057</div><div class="abs txt" id="t2" style="left:496px;top:752.3px;width:170px;text-align:center;color:#10e828;font-family:'Liberation Mono',monospace;font-size:28.5px;line-height:38px;white-space:pre;transform:scaleY(1.28);transform-origin:50% 50%">13/03/025</div><div class="abs" style="left:509.3px;top:722.5px;width:6.4px;height:15px;background:#000"></div><div class="abs" style="left:526.3px;top:722.5px;width:6.4px;height:15px;background:#000"></div><div class="abs" style="left:612.3px;top:722.5px;width:6.4px;height:15px;background:#000"></div><div class="abs" style="left:560.3px;top:759.5px;width:6.4px;height:15px;background:#000"></div><div class="abs" style="left:612.3px;top:759.5px;width:6.4px;height:15px;background:#000"></div><div class="abs" style="left:683px;top:705.7px;width:694.5px;height:82.6px;background:#000;border-radius:6px"></div><svg class="abs" style="left:680px;top:700px" width="700" height="92" viewBox="680 700 700 92"><rect x="688.0" y="707.30" width="621.3" height="4.37" fill="#fff"/><rect x="688.0" y="710.92" width="621.3" height="0.55" fill="#c4c4c4"/><rect x="783.5" y="711.92" width="94.1" height="4.37" fill="#fff"/><rect x="783.5" y="715.54" width="94.1" height="0.55" fill="#c4c4c4"/><rect x="966.3" y="711.92" width="94.1" height="4.37" fill="#fff"/><rect x="966.3" y="715.54" width="94.1" height="0.55" fill="#c4c4c4"/><rect x="1067.3" y="711.92" width="111.1" height="4.37" fill="#fff"/><rect x="1067.3" y="715.54" width="111.1" height="0.55" fill="#c4c4c4"/><rect x="1179.2" y="711.92" width="111.8" height="4.37" fill="#fff"/><rect x="1179.2" y="715.54" width="111.8" height="0.55" fill="#c4c4c4"/><rect x="688.0" y="716.54" width="677.8" height="4.37" fill="#fff"/><rect x="688.0" y="720.16" width="677.8" height="0.55" fill="#c4c4c4"/><rect x="783.3" y="721.16" width="106.3" height="4.37" fill="#fff"/><rect x="783.3" y="724.78" width="106.3" height="0.55" fill="#c4c4c4"/><rect x="972.4" y="721.16" width="393.4" height="4.37" fill="#fff"/><rect x="972.4" y="724.78" width="393.4" height="0.55" fill="#c4c4c4"/><rect x="783.3" y="725.78" width="106.3" height="4.37" fill="#fff"/><rect x="783.3" y="729.40" width="106.3" height="0.55" fill="#c4c4c4"/><rect x="972.4" y="725.78" width="393.4" height="4.37" fill="#fff"/><rect x="972.4" y="729.40" width="393.4" height="0.55" fill="#c4c4c4"/><rect x="783.3" y="730.40" width="106.3" height="4.37" fill="#fff"/><rect x="783.3" y="734.02" width="106.3" height="0.55" fill="#c4c4c4"/><rect x="1150.9" y="730.40" width="127.1" height="4.37" fill="#fff"/><rect x="1150.9" y="734.02" width="127.1" height="0.55" fill="#c4c4c4"/><rect x="972.4" y="735.02" width="207.3" height="4.37" fill="#fff"/><rect x="972.4" y="738.64" width="207.3" height="0.55" fill="#c4c4c4"/><rect x="688.0" y="739.64" width="201.6" height="4.37" fill="#fff"/><rect x="688.0" y="743.26" width="201.6" height="0.55" fill="#c4c4c4"/><rect x="960.5" y="739.64" width="405.3" height="4.37" fill="#fff"/><rect x="960.5" y="743.26" width="405.3" height="0.55" fill="#c4c4c4"/><rect x="865.3" y="744.26" width="500.5" height="4.37" fill="#fff"/><rect x="865.3" y="747.88" width="500.5" height="0.55" fill="#c4c4c4"/><rect x="865.3" y="748.88" width="500.5" height="4.37" fill="#fff"/><rect x="865.3" y="752.50" width="500.5" height="0.55" fill="#c4c4c4"/><rect x="688.0" y="753.50" width="677.8" height="4.37" fill="#fff"/><rect x="688.0" y="757.12" width="677.8" height="0.55" fill="#c4c4c4"/><rect x="1043.3" y="758.12" width="65.8" height="4.37" fill="#fff"/><rect x="1043.3" y="761.74" width="65.8" height="0.55" fill="#c4c4c4"/><rect x="1109.1" y="762.74" width="168.9" height="4.37" fill="#fff"/><rect x="1109.1" y="766.36" width="168.9" height="0.55" fill="#c4c4c4"/><rect x="759.1" y="767.36" width="70.9" height="4.37" fill="#fff"/><rect x="759.1" y="770.98" width="70.9" height="0.55" fill="#c4c4c4"/><rect x="1031.3" y="767.36" width="77.8" height="4.37" fill="#fff"/><rect x="1031.3" y="770.98" width="77.8" height="0.55" fill="#c4c4c4"/><rect x="688.0" y="771.98" width="677.8" height="4.37" fill="#fff"/><rect x="688.0" y="775.60" width="677.8" height="0.55" fill="#c4c4c4"/><rect x="700.0" y="776.60" width="677.5" height="4.37" fill="#fff"/><rect x="700.0" y="780.22" width="677.5" height="0.55" fill="#c4c4c4"/><path d="M687.8 706.7 H1265.6 V782 H687.8z" fill="none" stroke="#c98a3a" stroke-width="0.9" stroke-opacity="0.85"/></svg><div class="abs" style="left:1387.4px;top:704.4px;width:7.2px;height:66px;background:#050505"></div><div class="abs" style="left:1387px;top:757px;width:8px;height:13.4px;background:#00f000"></div><div class="abs" style="left:1402.7px;top:704.4px;width:7.3px;height:66px;background:#050505"></div><div class="abs" style="left:1402.4px;top:768.6px;width:8px;height:1.9px;background:#18a018"></div><div class="abs txt" style="left:1384px;top:773px;width:14px;text-align:center;color:#fff;font-weight:bold;font-size:13px;line-height:16px">C</div><div class="abs txt" style="left:1399.3px;top:773px;width:14px;text-align:center;color:#fff;font-weight:bold;font-size:13px;line-height:16px">I</div>
</div></body></html>
